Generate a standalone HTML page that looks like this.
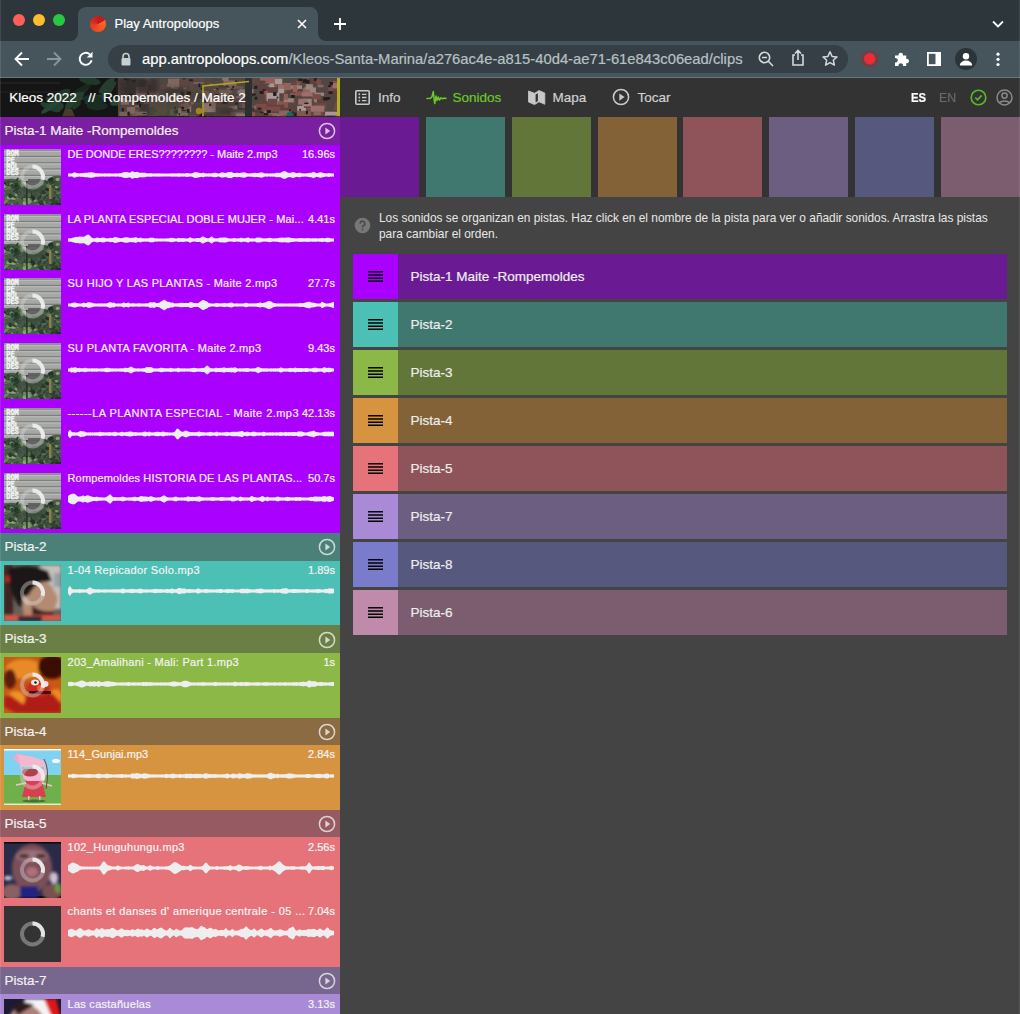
<!DOCTYPE html>
<html><head><meta charset="utf-8"><style>
*{margin:0;padding:0;box-sizing:border-box}
html,body{width:1020px;height:1014px;overflow:hidden;background:#444;font-family:"Liberation Sans",sans-serif}
.lit,.lid,.lht,.rt,.navt,.hdrtxt,.ttl,.urltxt{-webkit-text-stroke:0.2px currentColor}
body>div,body>svg{position:absolute}
#tabstrip{left:0;top:0;width:1020px;height:41px;background:#2c363b}
.tl{top:14px;width:12px;height:12px;border-radius:50%}
#tab{left:78px;top:7px;width:240px;height:34px;background:#46545c;border-radius:8px 8px 0 0}
.ttl{left:114.5px;top:16px;font-size:13px;color:#fff;white-space:nowrap}
#toolbar{left:0;top:41px;width:1020px;height:36px;background:#46545c}
#tbline{left:0;top:77px;width:1020px;height:1px;background:#68777f}
#url{left:108px;top:45px;width:740px;height:28px;border-radius:14px;background:#353f45}
.urltxt{left:142px;top:50px;font-size:14.8px;white-space:nowrap;line-height:18px}
#maphdr{left:0;top:78px;width:340px;height:39px;overflow:hidden}
.hdrtxt{position:absolute;left:9.3px;top:11.7px;font-size:13.5px;color:#fff;white-space:nowrap;line-height:16px}
#nav{left:340px;top:78px;width:680px;height:39px;background:#333}
.navt{top:89.5px;font-size:13.5px;white-space:nowrap;line-height:16px}
#rbg{left:340px;top:117px;width:680px;height:897px;background:#444}
#squarebar{left:340px;top:117px;width:680px;height:80px;background:#333}
.sq{top:117px;width:79px;height:80px}
.help{left:379px;top:210.3px;font-size:11.9px;line-height:16px;color:#e8e8e8;white-space:nowrap}
.row{left:353px;width:654px;height:45px}
.row .hd{position:absolute;left:0;top:0;width:45px;height:45px}
.rt{position:absolute;left:57.5px;top:14.5px;font-size:13.5px;color:#eee;white-space:nowrap;line-height:16px}
.lh{left:0;width:340px}
.lht{position:absolute;left:4.5px;top:6px;font-size:13.5px;color:#f2f2f2;white-space:nowrap;line-height:16px}
.li{left:0;width:340px;overflow:hidden}
.th{position:absolute;overflow:hidden}
.lit{position:absolute;left:67.5px;top:3.3px;font-size:11px;line-height:13px;color:#f4f4f4;white-space:nowrap}
.lid{position:absolute;right:5px;top:3.3px;font-size:11px;line-height:13px;color:#f4f4f4;white-space:nowrap}
.wv{position:absolute;left:67.5px;top:22.9px}
</style></head><body>

<div id="tabstrip"></div>
<div class="tl" style="left:13px;background:#ff5f57"></div>
<div class="tl" style="left:33px;background:#febc2e"></div>
<div class="tl" style="left:53px;background:#28c840"></div>
<div id="tab"></div>
<svg style="position:absolute;left:70px;top:33px" width="8" height="8"><path d="M0 8 A8 8 0 0 0 8 0 L8 8Z" fill="#46545c"/></svg>
<svg style="position:absolute;left:318px;top:33px" width="8" height="8"><path d="M0 0 A8 8 0 0 0 8 8 L0 8Z" fill="#46545c"/></svg>
<div style="position:absolute;left:90.2px;top:16.1px;width:15.6px;height:15.6px;border-radius:50%;background:conic-gradient(from 0deg,#c41a1e 0deg,#c01a1e 60deg,#ff6424 62deg,#ee5020 180deg,#e04020 260deg,#d42a20 300deg,#c41a1e 360deg)"></div>
<div class="ttl">Play Antropoloops</div>
<svg style="position:absolute;left:296px;top:18px" width="12" height="12" viewBox="0 0 12 12"><path d="M2 2L10 10M10 2L2 10" stroke="#fff" stroke-width="1.6"/></svg>
<svg style="position:absolute;left:333px;top:17px" width="14" height="14" viewBox="0 0 14 14"><path d="M7 1V13M1 7H13" stroke="#fff" stroke-width="1.8"/></svg>
<svg style="position:absolute;left:991px;top:18.7px" width="14" height="10" viewBox="0 0 14 10"><path d="M2 2.5L7 7.5L12 2.5" fill="none" stroke="#fff" stroke-width="1.8"/></svg>
<div id="toolbar"></div>
<div id="tbline"></div>
<svg style="position:absolute;left:14px;top:51px" width="16" height="16" viewBox="0 0 16 16"><path d="M15 8H2M8 1.5L1.5 8L8 14.5" fill="none" stroke="#fff" stroke-width="1.8"/></svg>
<svg style="position:absolute;left:46px;top:51px" width="16" height="16" viewBox="0 0 16 16"><path d="M1 8H14M8 1.5L14.5 8L8 14.5" fill="none" stroke="#8a979e" stroke-width="1.8"/></svg>
<svg style="position:absolute;left:78px;top:51px" width="16" height="16" viewBox="0 0 16 16"><path d="M13.6 9.2A6 6 0 1 1 11.8 3.4" fill="none" stroke="#fff" stroke-width="1.9"/><path d="M14.5 0.8V6.6H8.7Z" fill="#fff"/></svg>
<div id="url"></div>
<svg style="position:absolute;left:120px;top:52px" width="12" height="14" viewBox="0 0 12 14"><path d="M3 6V4.5A3 3 0 0 1 9 4.5V6" fill="none" stroke="#c8cdd0" stroke-width="1.6"/><rect x="1.5" y="6" width="9" height="7.5" rx="1" fill="#c8cdd0"/></svg>
<div class="urltxt"><span style="color:#fff">app.antropoloops.com</span><span style="color:#b9c1c5">/Kleos-Santa-Marina/a276ac4e-a815-40d4-ae71-61e843c06ead/clips</span></div>
<svg style="position:absolute;left:757px;top:50px" width="18" height="18" viewBox="0 0 18 18"><circle cx="7.5" cy="7.5" r="5.2" fill="none" stroke="#d4d9dc" stroke-width="1.6"/><path d="M11.3 11.3L16 16M5 7.5H10" stroke="#d4d9dc" stroke-width="1.6"/></svg>
<svg style="position:absolute;left:790px;top:49px" width="16" height="18" viewBox="0 0 16 18"><path d="M5 6H3V16H13V6H11M8 11V1.5M5 4.5L8 1.5L11 4.5" fill="none" stroke="#d4d9dc" stroke-width="1.6"/></svg>
<svg style="position:absolute;left:821px;top:50px" width="18" height="18" viewBox="0 0 18 18"><path d="M9 1.8L11.1 6.4L16 6.9L12.3 10.2L13.4 15.1L9 12.6L4.6 15.1L5.7 10.2L2 6.9L6.9 6.4Z" fill="none" stroke="#d4d9dc" stroke-width="1.5" stroke-linejoin="round"/></svg>
<svg style="position:absolute;left:860px;top:49px" width="20" height="20" viewBox="0 0 20 20"><circle cx="9.7" cy="9.8" r="7.6" fill="none" stroke="#a8242c" stroke-width="1.1"/><circle cx="9.7" cy="9.8" r="5.7" fill="#ee2a33"/></svg>
<svg style="position:absolute;left:894px;top:51px" width="16" height="16" viewBox="0 0 16 16"><path d="M1 4.5H4.5A2.3 2.3 0 1 1 9 4.5H12.2V7.8A2.3 2.3 0 1 1 12.2 12.3V15H9A2.3 2.3 0 1 0 4.5 15H1V11.5A2.3 2.3 0 1 0 1 7Z" fill="#fff"/></svg>
<svg style="position:absolute;left:927px;top:52px" width="14" height="14" viewBox="0 0 14 14"><rect x="0.9" y="0.9" width="12.2" height="12.2" fill="none" stroke="#fff" stroke-width="1.8"/><rect x="8.5" y="0.9" width="4.6" height="12.2" fill="#fff"/></svg>
<div style="position:absolute;left:955px;top:48px;width:22px;height:22px;border-radius:50%;background:#2b3439"></div>
<svg style="position:absolute;left:958px;top:51px" width="16" height="16" viewBox="0 0 16 16"><circle cx="8" cy="5.2" r="3.2" fill="#fff"/><path d="M1.8 14.5A6.2 5 0 0 1 14.2 14.5Z" fill="#fff"/></svg>
<svg style="position:absolute;left:994.3px;top:50px" width="8" height="18" viewBox="0 0 8 18"><circle cx="4" cy="4.2" r="1.6" fill="#fff"/><circle cx="4" cy="9.3" r="1.6" fill="#fff"/><circle cx="4" cy="14.5" r="1.6" fill="#fff"/></svg>


<div id="maphdr">
<svg width="340" height="39" viewBox="0 0 340 39" style="position:absolute;left:0;top:0"><defs><filter id="hb"><feGaussianBlur stdDeviation="2"/></filter><filter id="hb2" x="0" y="0" width="100%" height="100%"><feGaussianBlur stdDeviation="0.45"/></filter></defs>
  <rect x="0" y="0" width="340" height="39" fill="#151515"/>
  <rect x="0" y="4" width="60" height="2" fill="#202020"/>
  <rect x="0" y="13" width="60" height="2" fill="#1d1d1d"/>
  <ellipse cx="83.7" cy="11.9" rx="10.8" ry="2.7" fill="#203828" transform="rotate(-46 83.7 11.9)"/><ellipse cx="81.4" cy="11.6" rx="10.1" ry="2.8" fill="#18261e" transform="rotate(-29 81.4 11.6)"/><ellipse cx="60.7" cy="18.4" rx="11.2" ry="5.0" fill="#203828" transform="rotate(-36 60.7 18.4)"/><ellipse cx="107.3" cy="13.6" rx="13.1" ry="3.3" fill="#243e30" transform="rotate(-49 107.3 13.6)"/><ellipse cx="93.8" cy="21.3" rx="9.9" ry="2.9" fill="#203828" transform="rotate(-24 93.8 21.3)"/><ellipse cx="97.0" cy="27.8" rx="10.7" ry="4.4" fill="#1a2c24" transform="rotate(1 97.0 27.8)"/><ellipse cx="116.9" cy="23.8" rx="7.1" ry="3.5" fill="#284434" transform="rotate(-17 116.9 23.8)"/><ellipse cx="71.9" cy="24.1" rx="10.0" ry="3.8" fill="#243e30" transform="rotate(-50 71.9 24.1)"/><ellipse cx="74.1" cy="21.5" rx="9.3" ry="3.2" fill="#284434" transform="rotate(-11 74.1 21.5)"/><ellipse cx="50.4" cy="29.2" rx="10.8" ry="3.3" fill="#243e30" transform="rotate(22 50.4 29.2)"/><ellipse cx="54.4" cy="24.9" rx="10.0" ry="3.8" fill="#203828" transform="rotate(32 54.4 24.9)"/><ellipse cx="76.6" cy="27.3" rx="5.5" ry="2.4" fill="#203828" transform="rotate(-42 76.6 27.3)"/><ellipse cx="56.8" cy="28.0" rx="7.0" ry="4.8" fill="#243e30" transform="rotate(2 56.8 28.0)"/><ellipse cx="106.8" cy="7.5" rx="10.7" ry="3.7" fill="#243e30" transform="rotate(-45 106.8 7.5)"/><ellipse cx="89.9" cy="2.8" rx="10.8" ry="3.8" fill="#203828" transform="rotate(10 89.9 2.8)"/><ellipse cx="93.1" cy="21.6" rx="10.4" ry="4.5" fill="#1a2c24" transform="rotate(8 93.1 21.6)"/><ellipse cx="50.9" cy="28.5" rx="11.9" ry="2.8" fill="#284434" transform="rotate(-35 50.9 28.5)"/><ellipse cx="75.4" cy="19.2" rx="9.5" ry="3.9" fill="#243e30" transform="rotate(-25 75.4 19.2)"/>
  <path d="M62 39 L65 31 L72 31 L75 39Z" fill="#4a3a2a"/>
  <rect x="118" y="0" width="222" height="39" fill="#6a5a54"/>
  <g filter="url(#hb2)"><rect x="260.0" y="-1.0" width="6.0" height="3.6" fill="#c07a72"/><rect x="268.2" y="34.6" width="4.0" height="5.0" fill="#b06a64"/><rect x="138.8" y="7.5" width="9.6" height="5.9" fill="#62564e"/><rect x="211.1" y="16.4" width="6.1" height="8.1" fill="#9a7c72"/><rect x="273.0" y="12.0" width="4.7" height="8.7" fill="#c89088"/><rect x="140.7" y="13.6" width="6.9" height="4.4" fill="#a0847a"/><rect x="297.2" y="27.9" width="8.9" height="8.8" fill="#d8c4c0"/><rect x="135.5" y="10.0" width="9.9" height="8.2" fill="#4e4642"/><rect x="246.2" y="26.9" width="3.5" height="3.6" fill="#a0847a"/><rect x="336.7" y="33.1" width="12.5" height="4.7" fill="#7a5450"/><rect x="259.1" y="13.0" width="7.1" height="3.5" fill="#8a5a54"/><rect x="273.8" y="26.0" width="3.8" height="6.4" fill="#b8807a"/><rect x="279.9" y="4.7" width="7.2" height="8.9" fill="#986058"/><rect x="270.8" y="7.0" width="6.6" height="7.4" fill="#b06a64"/><rect x="168.8" y="-0.7" width="6.5" height="3.9" fill="#5a4e4a"/><rect x="320.7" y="21.3" width="10.9" height="3.5" fill="#7a5450"/><rect x="205.8" y="35.5" width="8.0" height="3.9" fill="#5a4e4a"/><rect x="283.4" y="20.1" width="11.2" height="5.0" fill="#a87068"/><rect x="206.7" y="7.0" width="14.0" height="5.6" fill="#6a5a54"/><rect x="285.8" y="33.3" width="4.7" height="3.1" fill="#986058"/><rect x="211.7" y="0.6" width="7.2" height="9.0" fill="#62564e"/><rect x="173.8" y="20.7" width="13.4" height="6.8" fill="#6a5a54"/><rect x="269.3" y="20.0" width="5.9" height="6.5" fill="#c07a72"/><rect x="183.2" y="4.5" width="3.0" height="7.1" fill="#a0847a"/><rect x="333.8" y="29.2" width="8.6" height="2.7" fill="#986058"/><rect x="184.3" y="24.2" width="9.7" height="3.1" fill="#9a7c72"/><rect x="237.7" y="29.9" width="8.8" height="2.0" fill="#4e4642"/><rect x="226.5" y="2.6" width="7.0" height="8.9" fill="#a0847a"/><rect x="171.2" y="7.9" width="9.2" height="2.6" fill="#b0948a"/><rect x="299.2" y="38.1" width="8.9" height="2.9" fill="#986058"/><rect x="223.5" y="20.5" width="5.9" height="8.1" fill="#8e7068"/><rect x="332.1" y="36.1" width="11.3" height="6.8" fill="#8a5a54"/><rect x="206.6" y="25.5" width="7.1" height="8.3" fill="#b0948a"/><rect x="144.9" y="7.2" width="6.7" height="6.1" fill="#5a4e4a"/><rect x="248.6" y="-1.7" width="10.8" height="2.4" fill="#6a5a54"/><rect x="319.0" y="33.2" width="3.8" height="3.7" fill="#986058"/><rect x="225.8" y="20.1" width="11.0" height="8.2" fill="#7a5a54"/><rect x="222.9" y="30.2" width="11.9" height="3.3" fill="#6a5a54"/><rect x="264.3" y="12.5" width="7.5" height="8.0" fill="#b06a64"/><rect x="267.5" y="38.4" width="4.1" height="4.8" fill="#c89088"/><rect x="295.7" y="2.5" width="5.1" height="5.8" fill="#a0605a"/><rect x="211.7" y="9.4" width="5.7" height="8.5" fill="#b0948a"/><rect x="297.4" y="33.1" width="4.1" height="6.6" fill="#b8807a"/><rect x="303.6" y="37.7" width="13.2" height="7.9" fill="#a0605a"/><rect x="208.2" y="17.7" width="12.5" height="8.3" fill="#9a7c72"/><rect x="202.1" y="38.4" width="5.9" height="7.5" fill="#b0948a"/><rect x="181.3" y="26.6" width="11.0" height="7.5" fill="#b0948a"/><rect x="152.4" y="10.2" width="13.7" height="6.1" fill="#62564e"/><rect x="131.5" y="10.9" width="3.6" height="5.3" fill="#62564e"/><rect x="153.0" y="37.4" width="3.9" height="3.3" fill="#7a5a54"/><rect x="133.1" y="33.3" width="7.4" height="8.6" fill="#7a5a54"/><rect x="172.7" y="22.4" width="9.8" height="4.9" fill="#7a5a54"/><rect x="243.5" y="11.0" width="5.9" height="6.7" fill="#4e4642"/><rect x="171.0" y="14.2" width="10.4" height="4.1" fill="#4e4642"/><rect x="324.2" y="36.4" width="3.1" height="6.3" fill="#a87068"/><rect x="339.1" y="1.0" width="5.3" height="3.9" fill="#c89088"/><rect x="313.6" y="34.1" width="7.1" height="3.1" fill="#b8807a"/><rect x="274.2" y="23.1" width="13.9" height="6.6" fill="#b06a64"/><rect x="266.3" y="20.7" width="13.2" height="2.7" fill="#a0605a"/><rect x="176.7" y="34.5" width="11.2" height="3.1" fill="#a0847a"/><rect x="252.3" y="27.4" width="5.2" height="6.4" fill="#8a5a54"/><rect x="230.2" y="8.3" width="13.0" height="2.4" fill="#8e7068"/><rect x="302.1" y="-0.2" width="6.7" height="2.9" fill="#8a5a54"/><rect x="153.9" y="16.1" width="10.8" height="5.9" fill="#6a5a54"/><rect x="134.7" y="34.2" width="12.9" height="5.8" fill="#4e4642"/><rect x="247.3" y="4.1" width="4.4" height="4.2" fill="#8a6a62"/><rect x="317.6" y="6.6" width="5.7" height="2.7" fill="#b8807a"/><rect x="314.3" y="14.7" width="9.8" height="3.1" fill="#c8aaa2"/><rect x="309.9" y="38.0" width="11.9" height="8.2" fill="#b06a64"/><rect x="157.8" y="35.9" width="11.6" height="4.9" fill="#5a4e4a"/><rect x="177.2" y="30.3" width="4.2" height="8.1" fill="#b0948a"/><rect x="167.4" y="31.5" width="8.1" height="4.1" fill="#5a4e4a"/><rect x="167.5" y="25.1" width="7.4" height="4.0" fill="#6a5a54"/><rect x="332.6" y="9.4" width="10.1" height="4.8" fill="#b8807a"/><rect x="191.5" y="-0.9" width="12.6" height="3.8" fill="#7a5a54"/><rect x="331.7" y="8.9" width="4.2" height="5.0" fill="#c89088"/><rect x="214.9" y="38.4" width="4.3" height="8.3" fill="#5a4e4a"/><rect x="174.5" y="27.1" width="3.0" height="8.5" fill="#62564e"/><rect x="270.5" y="36.6" width="11.1" height="3.4" fill="#d8c4c0"/><rect x="133.5" y="25.2" width="6.6" height="4.2" fill="#6a5a54"/><rect x="277.8" y="10.3" width="6.4" height="4.9" fill="#d8c4c0"/><rect x="272.8" y="20.7" width="5.1" height="6.7" fill="#d8c4c0"/><rect x="268.4" y="35.0" width="9.8" height="4.1" fill="#b8807a"/><rect x="303.1" y="10.5" width="5.3" height="7.5" fill="#a87068"/><rect x="263.3" y="17.1" width="7.9" height="3.5" fill="#7a5450"/><rect x="294.2" y="37.4" width="11.1" height="6.6" fill="#8a5a54"/><rect x="232.4" y="24.0" width="6.7" height="7.7" fill="#5a4e4a"/><rect x="267.4" y="7.2" width="5.2" height="2.2" fill="#c8aaa2"/><rect x="336.4" y="23.1" width="11.5" height="5.2" fill="#986058"/><rect x="245.8" y="27.5" width="7.2" height="4.8" fill="#9a7c72"/><rect x="263.6" y="-1.8" width="11.3" height="7.4" fill="#c07a72"/><rect x="290.8" y="7.0" width="11.8" height="6.9" fill="#7a5450"/><rect x="129.1" y="8.2" width="12.3" height="5.2" fill="#b0948a"/><rect x="266.2" y="38.5" width="9.5" height="8.7" fill="#7a5450"/><rect x="254.0" y="27.5" width="8.6" height="7.8" fill="#b8807a"/><rect x="217.0" y="4.5" width="12.5" height="5.2" fill="#5a4e4a"/><rect x="304.4" y="9.4" width="11.6" height="5.4" fill="#c8aaa2"/><rect x="179.0" y="1.2" width="6.1" height="3.9" fill="#4e4642"/><rect x="316.3" y="1.3" width="4.7" height="4.7" fill="#a0605a"/><rect x="274.8" y="0.6" width="7.5" height="5.8" fill="#d8c4c0"/><rect x="131.8" y="32.1" width="7.3" height="7.4" fill="#8a6a62"/><rect x="308.2" y="29.4" width="7.2" height="2.0" fill="#c89088"/><rect x="184.3" y="14.0" width="12.8" height="7.9" fill="#62564e"/><rect x="283.9" y="20.4" width="9.6" height="3.5" fill="#c8aaa2"/><rect x="178.6" y="17.9" width="7.3" height="6.7" fill="#8e7068"/><rect x="278.8" y="32.5" width="13.1" height="8.9" fill="#b8807a"/><rect x="124.0" y="14.2" width="9.2" height="2.2" fill="#8e7068"/><rect x="148.1" y="16.9" width="3.6" height="4.7" fill="#5a4e4a"/><rect x="218.9" y="11.8" width="12.7" height="3.9" fill="#8e7068"/><rect x="174.0" y="1.4" width="3.2" height="5.8" fill="#4e4642"/><rect x="167.8" y="0.8" width="13.5" height="2.3" fill="#8a6a62"/><rect x="328.8" y="6.2" width="3.2" height="3.1" fill="#a0605a"/><rect x="223.1" y="2.7" width="13.4" height="5.3" fill="#a0847a"/><rect x="288.3" y="4.9" width="9.7" height="7.2" fill="#c07a72"/><rect x="290.7" y="4.7" width="6.4" height="6.1" fill="#8a5a54"/><rect x="245.8" y="35.2" width="7.1" height="8.6" fill="#5a4e4a"/><rect x="134.9" y="26.3" width="9.9" height="2.7" fill="#a0847a"/><rect x="306.8" y="22.6" width="4.3" height="8.9" fill="#b06a64"/><rect x="195.1" y="15.6" width="7.1" height="5.5" fill="#4e4642"/><rect x="120.8" y="15.2" width="8.4" height="5.0" fill="#4e4642"/><rect x="259.1" y="32.0" width="10.8" height="5.0" fill="#b8807a"/><rect x="332.3" y="9.1" width="11.9" height="5.8" fill="#7a5450"/><rect x="221.2" y="31.9" width="9.5" height="4.3" fill="#5a4e4a"/><rect x="302.4" y="1.6" width="12.7" height="3.7" fill="#7a5450"/><rect x="244.5" y="25.4" width="6.7" height="5.5" fill="#4e4642"/><rect x="158.4" y="6.7" width="11.8" height="4.4" fill="#7a5a54"/><rect x="273.7" y="9.3" width="3.1" height="8.6" fill="#c07a72"/><rect x="171.6" y="14.7" width="9.1" height="3.7" fill="#b0948a"/><rect x="261.4" y="18.1" width="11.7" height="2.7" fill="#c8aaa2"/><rect x="207.8" y="8.0" width="10.3" height="4.6" fill="#62564e"/><rect x="235.9" y="15.4" width="11.2" height="4.3" fill="#b0948a"/><rect x="178.1" y="8.3" width="4.3" height="3.3" fill="#6a5a54"/><rect x="282.9" y="37.0" width="10.6" height="3.3" fill="#7a5450"/><rect x="179.4" y="22.2" width="11.4" height="6.2" fill="#6a5a54"/><rect x="302.8" y="10.1" width="7.0" height="4.1" fill="#b8807a"/><rect x="146.1" y="-0.1" width="3.6" height="4.0" fill="#9a7c72"/><rect x="259.6" y="28.9" width="4.1" height="2.1" fill="#8a5a54"/><rect x="222.2" y="16.1" width="5.0" height="2.4" fill="#b0948a"/><rect x="143.3" y="0.7" width="8.4" height="6.0" fill="#8a6a62"/><rect x="151.7" y="31.3" width="13.4" height="2.6" fill="#5a4e4a"/><rect x="144.3" y="29.3" width="9.7" height="7.5" fill="#5a4e4a"/><rect x="290.2" y="13.6" width="13.0" height="4.1" fill="#a87068"/><rect x="337.8" y="10.5" width="9.8" height="6.3" fill="#c07a72"/><rect x="328.4" y="6.5" width="5.3" height="6.6" fill="#a0605a"/><rect x="171.3" y="20.6" width="4.7" height="4.9" fill="#7a5a54"/><rect x="222.3" y="-0.7" width="6.2" height="4.0" fill="#b0948a"/><rect x="133.8" y="7.6" width="5.9" height="7.5" fill="#7a5a54"/><rect x="264.8" y="36.3" width="7.7" height="5.8" fill="#986058"/><rect x="151.1" y="8.9" width="4.6" height="2.4" fill="#a0847a"/><rect x="250.1" y="31.8" width="13.1" height="5.1" fill="#7a5450"/><rect x="270.9" y="26.7" width="13.4" height="5.5" fill="#7a5450"/><rect x="215.2" y="22.5" width="12.8" height="7.1" fill="#7a5a54"/><rect x="173.6" y="1.7" width="13.6" height="7.9" fill="#7a5a54"/><rect x="248.3" y="-1.1" width="11.4" height="7.7" fill="#7a5a54"/><rect x="126.9" y="29.0" width="8.2" height="6.6" fill="#a0847a"/><rect x="158.3" y="22.0" width="10.0" height="5.4" fill="#6a5a54"/><rect x="222.3" y="14.7" width="6.5" height="2.7" fill="#9a7c72"/><rect x="191.2" y="26.4" width="6.2" height="8.6" fill="#62564e"/><rect x="126.1" y="1.6" width="5.8" height="2.8" fill="#8e7068"/><rect x="310.0" y="31.8" width="3.0" height="8.1" fill="#7a5450"/><rect x="209.7" y="5.7" width="7.0" height="7.3" fill="#b0948a"/><rect x="286.7" y="6.3" width="9.0" height="8.5" fill="#7a5450"/><rect x="313.5" y="17.9" width="3.3" height="6.4" fill="#c8aaa2"/><rect x="275.6" y="10.7" width="3.2" height="4.9" fill="#c8aaa2"/><rect x="338.3" y="35.4" width="8.1" height="2.8" fill="#a0605a"/><rect x="228.6" y="27.4" width="8.6" height="3.9" fill="#b0948a"/><rect x="335.6" y="8.0" width="9.1" height="4.7" fill="#a87068"/><rect x="230.8" y="34.1" width="12.5" height="3.9" fill="#8e7068"/><rect x="193.5" y="30.3" width="5.9" height="2.0" fill="#a0847a"/><rect x="303.9" y="21.8" width="10.3" height="8.1" fill="#7a5450"/><rect x="237.6" y="12.2" width="9.1" height="5.8" fill="#b0948a"/><rect x="325.1" y="33.7" width="13.8" height="3.7" fill="#d8c4c0"/><rect x="169.9" y="29.8" width="3.5" height="7.2" fill="#8e7068"/><rect x="203.7" y="25.2" width="12.0" height="8.9" fill="#b0948a"/><rect x="332.2" y="3.2" width="13.6" height="4.3" fill="#c07a72"/><rect x="312.1" y="16.1" width="8.8" height="5.2" fill="#a0605a"/><rect x="209.0" y="24.8" width="4.7" height="5.3" fill="#a0847a"/><rect x="193.2" y="26.4" width="10.1" height="8.0" fill="#62564e"/><rect x="202.4" y="11.0" width="10.9" height="7.3" fill="#62564e"/><rect x="126.0" y="0.8" width="9.9" height="8.4" fill="#5a4e4a"/><rect x="283.8" y="15.8" width="4.1" height="6.4" fill="#c07a72"/><rect x="216.5" y="26.5" width="12.9" height="2.3" fill="#8a6a62"/><rect x="183.1" y="13.4" width="4.6" height="5.7" fill="#7a5a54"/><rect x="269.4" y="5.4" width="4.9" height="6.3" fill="#d8c4c0"/><rect x="255.6" y="7.9" width="13.0" height="3.0" fill="#7a5450"/><rect x="259.6" y="16.8" width="10.3" height="8.3" fill="#7a5450"/><rect x="318.1" y="25.8" width="4.7" height="5.1" fill="#c89088"/><rect x="337.3" y="10.3" width="13.6" height="6.8" fill="#7a5450"/><rect x="305.7" y="6.2" width="7.2" height="5.4" fill="#c8aaa2"/><rect x="202.7" y="12.7" width="6.3" height="6.9" fill="#8a6a62"/><rect x="335.1" y="25.0" width="6.0" height="6.0" fill="#986058"/><rect x="290.8" y="37.9" width="13.0" height="7.2" fill="#8a5a54"/><rect x="290.2" y="7.4" width="11.8" height="3.5" fill="#c8aaa2"/><rect x="255.8" y="25.8" width="10.9" height="6.6" fill="#a0605a"/><rect x="257.5" y="35.0" width="10.1" height="4.2" fill="#7a5450"/><rect x="125.4" y="13.0" width="4.4" height="8.4" fill="#4e4642"/><rect x="283.9" y="5.2" width="4.5" height="5.8" fill="#c89088"/><rect x="235.8" y="35.5" width="12.1" height="3.8" fill="#b0948a"/><rect x="332.8" y="10.1" width="12.6" height="7.6" fill="#7a5450"/><rect x="331.8" y="3.8" width="13.6" height="8.0" fill="#986058"/><rect x="335.5" y="37.7" width="11.9" height="4.6" fill="#d8c4c0"/><rect x="121.1" y="20.0" width="8.0" height="6.7" fill="#a0847a"/><rect x="247.8" y="31.7" width="13.3" height="2.8" fill="#5a4e4a"/><rect x="222.7" y="23.4" width="13.4" height="4.3" fill="#7a5a54"/><rect x="167.1" y="0.6" width="12.1" height="8.4" fill="#a0847a"/><rect x="262.1" y="2.8" width="3.5" height="2.3" fill="#7a5450"/><rect x="143.8" y="7.6" width="8.9" height="4.7" fill="#4e4642"/><rect x="266.8" y="28.5" width="13.4" height="4.9" fill="#a0605a"/><rect x="314.6" y="24.9" width="12.2" height="6.3" fill="#8a5a54"/><rect x="125.3" y="13.2" width="7.9" height="8.7" fill="#4e4642"/><rect x="140.1" y="26.1" width="9.0" height="8.8" fill="#4e4642"/><rect x="131.4" y="9.3" width="13.7" height="8.6" fill="#b0948a"/><rect x="138.4" y="6.7" width="10.0" height="8.8" fill="#8a6a62"/><rect x="292.7" y="8.0" width="4.4" height="6.0" fill="#c07a72"/><rect x="302.2" y="20.7" width="9.5" height="7.7" fill="#c8aaa2"/><rect x="190.9" y="4.0" width="12.9" height="2.0" fill="#9a7c72"/><rect x="337.2" y="20.1" width="11.8" height="2.8" fill="#b06a64"/><rect x="147.3" y="12.7" width="11.7" height="6.1" fill="#8a6a62"/><rect x="156.7" y="0.1" width="11.2" height="5.7" fill="#6a5a54"/><rect x="223.7" y="29.9" width="8.6" height="2.8" fill="#62564e"/><rect x="167.2" y="23.2" width="11.0" height="8.4" fill="#62564e"/><rect x="185.0" y="24.4" width="3.3" height="9.0" fill="#8e7068"/><rect x="212.6" y="2.4" width="10.8" height="5.1" fill="#6a5a54"/><rect x="189.5" y="4.1" width="4.4" height="6.4" fill="#7a5a54"/><rect x="239.7" y="11.3" width="13.9" height="5.7" fill="#b0948a"/><rect x="230.2" y="15.6" width="11.7" height="2.8" fill="#62564e"/><rect x="278.0" y="6.8" width="8.0" height="3.6" fill="#c89088"/><rect x="301.7" y="14.3" width="11.0" height="4.2" fill="#c89088"/><rect x="265.7" y="13.3" width="4.7" height="8.5" fill="#c07a72"/><rect x="138.3" y="1.5" width="7.8" height="7.2" fill="#4e4642"/><rect x="298.2" y="20.8" width="9.5" height="5.9" fill="#c89088"/><rect x="266.7" y="14.8" width="12.6" height="8.6" fill="#d8c4c0"/><rect x="310.7" y="27.6" width="13.7" height="6.2" fill="#c89088"/><rect x="141.0" y="18.8" width="4.7" height="5.4" fill="#6a5a54"/><rect x="195.7" y="20.8" width="4.3" height="3.9" fill="#5a4e4a"/><rect x="297.2" y="32.7" width="13.7" height="7.7" fill="#a87068"/><rect x="267.8" y="20.8" width="9.7" height="6.6" fill="#8a5a54"/><rect x="124.4" y="9.2" width="11.4" height="8.5" fill="#4e4642"/><rect x="119.4" y="33.7" width="9.2" height="4.8" fill="#9a7c72"/><rect x="282.5" y="37.8" width="4.0" height="5.7" fill="#d8c4c0"/><rect x="211.2" y="12.0" width="7.1" height="7.1" fill="#7a5a54"/><rect x="250.4" y="34.2" width="4.7" height="7.3" fill="#b06a64"/><rect x="267.6" y="9.2" width="10.3" height="5.4" fill="#7a5450"/><rect x="209.9" y="6.8" width="8.6" height="4.4" fill="#6a5a54"/><rect x="180.9" y="25.8" width="8.4" height="6.7" fill="#8a6a62"/><rect x="167.0" y="38.4" width="3.6" height="3.4" fill="#5a4e4a"/><rect x="288.4" y="29.3" width="6.2" height="2.8" fill="#7a5450"/><rect x="283.8" y="5.2" width="7.2" height="6.9" fill="#b8807a"/><rect x="242.0" y="25.4" width="6.9" height="4.8" fill="#8a6a62"/><rect x="214.8" y="16.8" width="3.9" height="4.2" fill="#8e7068"/><rect x="245.3" y="27.1" width="7.6" height="2.8" fill="#8a6a62"/><rect x="332.5" y="5.0" width="13.4" height="5.2" fill="#c89088"/><rect x="137.6" y="32.6" width="5.7" height="6.1" fill="#62564e"/><rect x="135.5" y="33.7" width="11.2" height="3.6" fill="#9a7c72"/><rect x="135.0" y="24.0" width="8.8" height="3.4" fill="#4e4642"/><rect x="195.9" y="37.3" width="10.1" height="3.0" fill="#6a5a54"/><rect x="150.5" y="6.1" width="9.6" height="7.3" fill="#6a5a54"/><rect x="157.3" y="29.7" width="8.4" height="7.3" fill="#7a5a54"/><rect x="217.7" y="35.9" width="9.2" height="6.4" fill="#7a5a54"/><rect x="189.8" y="37.8" width="6.5" height="5.1" fill="#b0948a"/><rect x="216.2" y="10.4" width="2.1" height="1.2" fill="#2a2624"/><rect x="230.6" y="10.7" width="2.8" height="1.2" fill="#2a2624"/><rect x="302.6" y="1.1" width="4.5" height="3.6" fill="#2a2624"/><rect x="254.5" y="18.8" width="2.9" height="2.7" fill="#2a2624"/><rect x="293.8" y="34.7" width="2.8" height="3.4" fill="#2a2624"/><rect x="262.7" y="11.2" width="2.9" height="1.5" fill="#2a2624"/><rect x="131.7" y="2.2" width="4.6" height="2.0" fill="#2a2624"/><rect x="276.6" y="18.7" width="1.7" height="1.7" fill="#2a2624"/><rect x="215.2" y="16.0" width="3.1" height="1.5" fill="#2a2624"/><rect x="200.8" y="9.6" width="2.6" height="2.0" fill="#2a2624"/><rect x="250.7" y="30.4" width="3.6" height="1.2" fill="#2a2624"/><rect x="139.0" y="25.8" width="2.1" height="3.2" fill="#2a2624"/><rect x="263.8" y="35.2" width="4.5" height="2.0" fill="#2a2624"/><rect x="247.4" y="3.8" width="2.4" height="3.9" fill="#2a2624"/><rect x="273.1" y="14.1" width="3.4" height="3.8" fill="#2a2624"/><rect x="186.7" y="13.4" width="4.2" height="3.4" fill="#2a2624"/><rect x="266.8" y="32.0" width="4.0" height="3.1" fill="#2a2624"/><rect x="234.9" y="24.5" width="2.7" height="2.1" fill="#2a2624"/><rect x="198.5" y="5.4" width="1.9" height="3.8" fill="#2a2624"/><rect x="226.0" y="7.3" width="1.6" height="1.2" fill="#2a2624"/><rect x="305.5" y="2.1" width="4.1" height="3.5" fill="#2a2624"/><rect x="314.2" y="-0.5" width="2.3" height="3.3" fill="#2a2624"/><rect x="147.1" y="13.4" width="1.6" height="3.5" fill="#2a2624"/><rect x="289.2" y="31.2" width="1.7" height="2.3" fill="#2a2624"/><rect x="209.2" y="25.7" width="2.0" height="2.3" fill="#2a2624"/><rect x="181.3" y="28.7" width="2.8" height="2.6" fill="#2a2624"/><rect x="186.7" y="31.2" width="2.9" height="3.5" fill="#2a2624"/><rect x="199.7" y="36.8" width="4.9" height="2.4" fill="#2a2624"/><rect x="180.6" y="13.7" width="3.1" height="3.9" fill="#2a2624"/><rect x="299.3" y="30.9" width="1.6" height="1.8" fill="#2a2624"/><rect x="260.3" y="33.8" width="3.2" height="1.3" fill="#2a2624"/><rect x="305.8" y="32.9" width="2.1" height="3.3" fill="#2a2624"/><rect x="178.6" y="35.1" width="1.6" height="2.3" fill="#2a2624"/><rect x="328.1" y="7.1" width="2.8" height="2.0" fill="#2a2624"/><rect x="123.9" y="0.2" width="3.0" height="1.7" fill="#2a2624"/><rect x="338.8" y="13.4" width="1.1" height="3.8" fill="#2a2624"/><rect x="304.3" y="24.6" width="4.2" height="1.4" fill="#2a2624"/><rect x="181.7" y="32.0" width="3.8" height="1.4" fill="#2a2624"/><rect x="274.6" y="16.4" width="1.0" height="1.2" fill="#2a2624"/><rect x="174.8" y="32.2" width="3.2" height="3.2" fill="#2a2624"/><rect x="235.2" y="2.6" width="2.2" height="1.9" fill="#2a2624"/><rect x="128.6" y="15.2" width="4.2" height="2.4" fill="#2a2624"/><rect x="142.6" y="35.1" width="3.4" height="1.0" fill="#2a2624"/><rect x="232.4" y="7.9" width="1.6" height="2.3" fill="#2a2624"/><rect x="254.5" y="7.9" width="2.7" height="3.0" fill="#2a2624"/><rect x="137.0" y="38.0" width="1.3" height="2.6" fill="#2a2624"/><rect x="230.6" y="38.5" width="3.2" height="2.2" fill="#2a2624"/><rect x="222.4" y="24.1" width="4.9" height="1.8" fill="#2a2624"/><rect x="121.6" y="30.3" width="2.4" height="3.2" fill="#2a2624"/><rect x="257.5" y="29.6" width="3.9" height="2.0" fill="#2a2624"/><rect x="127.8" y="20.4" width="4.3" height="1.5" fill="#2a2624"/><rect x="291.0" y="17.0" width="3.8" height="2.9" fill="#2a2624"/><rect x="298.2" y="0.6" width="4.1" height="2.4" fill="#2a2624"/><rect x="183.1" y="-0.2" width="1.8" height="1.1" fill="#2a2624"/><rect x="325.2" y="19.1" width="5.0" height="2.6" fill="#2a2624"/><rect x="174.2" y="28.9" width="1.8" height="2.1" fill="#2a2624"/><rect x="291.3" y="33.5" width="2.3" height="1.4" fill="#2a2624"/><rect x="199.7" y="34.5" width="4.0" height="3.7" fill="#2a2624"/><rect x="203.8" y="37.9" width="3.0" height="2.5" fill="#2a2624"/><rect x="323.2" y="19.3" width="4.2" height="3.2" fill="#2a2624"/><rect x="135.5" y="22.7" width="4.3" height="2.6" fill="#2a2624"/><rect x="189.3" y="1.3" width="3.6" height="1.9" fill="#2a2624"/><rect x="251.8" y="15.5" width="3.8" height="2.1" fill="#2a2624"/><rect x="127.4" y="33.7" width="2.4" height="4.0" fill="#2a2624"/><rect x="179.0" y="38.2" width="4.8" height="1.2" fill="#2a2624"/><rect x="259.5" y="12.9" width="4.2" height="3.0" fill="#2a2624"/><rect x="329.5" y="3.9" width="3.4" height="3.3" fill="#2a2624"/><rect x="125.7" y="0.8" width="4.1" height="2.1" fill="#2a2624"/><rect x="203.0" y="21.3" width="3.4" height="3.0" fill="#2a2624"/><rect x="328.6" y="13.3" width="4.1" height="2.7" fill="#2a2624"/></g>
  <g filter="url(#hb)"><rect x="118" y="0" width="40" height="16" fill="#3a3432" opacity="0.7"/><rect x="165" y="10" width="22" height="10" fill="#3e3632" opacity="0.6"/><rect x="215" y="20" width="20" height="19" fill="#4a3e38" opacity="0.5"/><rect x="150" y="28" width="30" height="11" fill="#5a6a48" opacity="0.5"/></g>
  <rect x="245" y="0" width="7" height="39" fill="#3c3c44"/>
  <path d="M203 39 L203 8 L249 3.5" fill="none" stroke="#e6d02a" stroke-width="1.6"/>
  <rect x="337" y="0" width="3" height="39" fill="#e8dc30"/>
  <circle cx="199" cy="33" r="3.2" fill="#d4a828"/>
  <circle cx="289.5" cy="37" r="3" fill="#1a8a7a"/>
  <rect x="118" y="0" width="222" height="39" fill="rgba(0,0,0,0.22)"/>
  <rect x="0" y="38" width="340" height="1" fill="rgba(20,20,20,0.7)"/>
</svg>
  <div class="hdrtxt">Kleos 2022&nbsp;&nbsp;&nbsp;//&nbsp;&nbsp;Rompemoldes / Maite 2</div>
</div>


<div id="nav"></div>
<svg style="position:absolute;left:355px;top:90px" width="15" height="15" viewBox="0 0 15 15"><rect x="0.8" y="0.8" width="13.4" height="13.4" rx="1" fill="none" stroke="#c8c8c8" stroke-width="1.6"/><circle cx="4.3" cy="4.3" r="0.95" fill="#c8c8c8"/><circle cx="4.3" cy="7.5" r="0.95" fill="#c8c8c8"/><circle cx="4.3" cy="10.6" r="0.95" fill="#c8c8c8"/><path d="M7 4.3H11.4M7 7.5H11.4M7 10.6H11.4" stroke="#c8c8c8" stroke-width="1.3"/></svg>
<div class="navt" style="left:378px;color:#d0d0d0">Info</div>
<svg style="position:absolute;left:426px;top:88px" width="21" height="18" viewBox="0 0 21 18"><path d="M1 10.4 L4.5 10.2 L6 8.8 L7.3 3.4 L8.2 12 L8.8 15.5 L10 8 L11 12.5 L12.3 9 L13.4 12 L15 9.8 L16.5 10.8 L18 10 L20 10.4" fill="none" stroke="#6cc92a" stroke-width="1.5" stroke-linejoin="round" stroke-linecap="round"/></svg>
<div class="navt" style="left:452.5px;color:#6cc92a">Sonidos</div>
<svg style="position:absolute;left:527px;top:89px" width="19" height="17" viewBox="0 0 19 17"><path d="M1.5 2 L7.5 4.3 L12 1.5 L17.8 4 L17.8 15.3 L12 12.8 L7.5 15.6 L1.5 13 Z" fill="#c8c8c8" stroke="#c8c8c8" stroke-width="0.8" stroke-linejoin="round"/><path d="M8.6 5.6 L10.9 4.3 L10.9 12.1 L8.6 13.4Z" fill="#333"/></svg>
<div class="navt" style="left:552.5px;color:#d0d0d0">Mapa</div>
<svg style="position:absolute;left:611.5px;top:88.2px" width="18" height="18" viewBox="0 0 18 18"><circle cx="9" cy="9" r="7.6" fill="none" stroke="#cccccc" stroke-width="1.5"/><path d="M7.3 5.5L12.6 9.1L7.3 12.7Z" fill="#c8c8c8"/></svg>
<div class="navt" style="left:637.5px;color:#d0d0d0">Tocar</div>
<div class="navt" style="left:910.5px;color:#fff;font-weight:bold;transform:scaleX(0.84);transform-origin:0 0">ES</div>
<div class="navt" style="left:939px;color:#6a6a6a;transform:scaleX(0.91);transform-origin:0 0">EN</div>
<svg style="position:absolute;left:970px;top:89px" width="17" height="17" viewBox="0 0 17 17"><circle cx="8.5" cy="8.5" r="7.3" fill="none" stroke="#5cb82a" stroke-width="1.6"/><path d="M5.3 8.7L7.5 10.8L11.7 6.4" fill="none" stroke="#5cb82a" stroke-width="1.6"/></svg>
<svg style="position:absolute;left:995.5px;top:89px" width="17" height="17" viewBox="0 0 17 17"><circle cx="8.5" cy="8.5" r="7.5" fill="none" stroke="#8a8a8a" stroke-width="1.5"/><circle cx="8.5" cy="6.6" r="2.6" fill="none" stroke="#8a8a8a" stroke-width="1.5"/><path d="M3.2 13.8A6.5 4.5 0 0 1 13.8 13.8" fill="none" stroke="#8a8a8a" stroke-width="1.5"/></svg>

<div id="rbg"></div>
<div id="squarebar"></div>
<div class="sq" style="left:340.00px;background:#6a1b94"></div>
<div class="sq" style="left:425.86px;background:#407870"></div>
<div class="sq" style="left:511.72px;background:#62763a"></div>
<div class="sq" style="left:597.58px;background:#826236"></div>
<div class="sq" style="left:683.44px;background:#8e5459"></div>
<div class="sq" style="left:769.30px;background:#6c5e80"></div>
<div class="sq" style="left:855.16px;background:#57587e"></div>
<div class="sq" style="left:941.02px;background:#7b5d6f"></div>
<svg style="position:absolute;left:354px;top:217px" width="17" height="17" viewBox="0 0 17 17"><circle cx="8.5" cy="8.5" r="7.8" fill="#777"/><path d="M6.2 6.6A2.3 2.3 0 1 1 9.4 8.6C8.7 9 8.5 9.4 8.5 10.4" fill="none" stroke="#464646" stroke-width="1.5"/><circle cx="8.5" cy="12.6" r="0.9" fill="#464646"/></svg>
<div class="help">Los sonidos se organizan en pistas. Haz click en el nombre de la pista para ver o añadir sonidos. Arrastra las pistas<br>para cambiar el orden.</div>
<div class="row" style="top:254px;background:#6a1b94"><div class="hd" style="background:#aa00ff"><svg style="position:absolute;left:15px;top:17px" width="15" height="11" viewBox="0 0 15 11"><path d="M0 0.75H15M0 3.95H15M0 7.15H15M0 10.35H15" stroke="#000" stroke-width="1.5"/></svg></div><span class="rt">Pista-1 Maite -Rompemoldes</span></div>
<div class="row" style="top:302px;background:#407870"><div class="hd" style="background:#4dc0b5"><svg style="position:absolute;left:15px;top:17px" width="15" height="11" viewBox="0 0 15 11"><path d="M0 0.75H15M0 3.95H15M0 7.15H15M0 10.35H15" stroke="#000" stroke-width="1.5"/></svg></div><span class="rt">Pista-2</span></div>
<div class="row" style="top:350px;background:#62763a"><div class="hd" style="background:#8bb846"><svg style="position:absolute;left:15px;top:17px" width="15" height="11" viewBox="0 0 15 11"><path d="M0 0.75H15M0 3.95H15M0 7.15H15M0 10.35H15" stroke="#000" stroke-width="1.5"/></svg></div><span class="rt">Pista-3</span></div>
<div class="row" style="top:398px;background:#826236"><div class="hd" style="background:#d69440"><svg style="position:absolute;left:15px;top:17px" width="15" height="11" viewBox="0 0 15 11"><path d="M0 0.75H15M0 3.95H15M0 7.15H15M0 10.35H15" stroke="#000" stroke-width="1.5"/></svg></div><span class="rt">Pista-4</span></div>
<div class="row" style="top:446px;background:#8e5459"><div class="hd" style="background:#e6737a"><svg style="position:absolute;left:15px;top:17px" width="15" height="11" viewBox="0 0 15 11"><path d="M0 0.75H15M0 3.95H15M0 7.15H15M0 10.35H15" stroke="#000" stroke-width="1.5"/></svg></div><span class="rt">Pista-5</span></div>
<div class="row" style="top:494px;background:#6c5e80"><div class="hd" style="background:#a98ad6"><svg style="position:absolute;left:15px;top:17px" width="15" height="11" viewBox="0 0 15 11"><path d="M0 0.75H15M0 3.95H15M0 7.15H15M0 10.35H15" stroke="#000" stroke-width="1.5"/></svg></div><span class="rt">Pista-7</span></div>
<div class="row" style="top:542px;background:#57587e"><div class="hd" style="background:#7b7bcb"><svg style="position:absolute;left:15px;top:17px" width="15" height="11" viewBox="0 0 15 11"><path d="M0 0.75H15M0 3.95H15M0 7.15H15M0 10.35H15" stroke="#000" stroke-width="1.5"/></svg></div><span class="rt">Pista-8</span></div>
<div class="row" style="top:590px;background:#7b5d6f"><div class="hd" style="background:#c08aaa"><svg style="position:absolute;left:15px;top:17px" width="15" height="11" viewBox="0 0 15 11"><path d="M0 0.75H15M0 3.95H15M0 7.15H15M0 10.35H15" stroke="#000" stroke-width="1.5"/></svg></div><span class="rt">Pista-6</span></div>
<div class="lh" style="top:117.10px;height:27.5px;background:#7b1fa2"><span class="lht">Pista-1 Maite -Rompemoldes</span><svg style="position:absolute;left:317.6px;top:5.4px" width="18" height="18" viewBox="0 0 18 18"><circle cx="9" cy="9" r="7.6" fill="none" stroke="rgba(240,240,240,0.8)" stroke-width="1.5"/><path d="M7.4 5.5 L12.2 9 L7.4 12.6Z" fill="rgba(240,240,240,0.8)"/></svg></div>
<div class="li" style="top:144.60px;height:64.75px;background:#aa00ff"><svg class="th" style="left:4px;top:4.20px;width:57px;height:56px;" width="57" height="56" viewBox="0 0 57 56"><defs><filter id="bl" x="-10%" y="-10%" width="120%" height="120%"><feGaussianBlur stdDeviation="1.6"/></filter><filter id="bl2"><feGaussianBlur stdDeviation="0.5"/></filter><filter id="bl3" x="-5%" y="-5%" width="110%" height="110%"><feGaussianBlur stdDeviation="0.7"/></filter></defs><rect width="57" height="56" fill="#a6a8a5"/><rect x="0" y="0.5" width="57" height="1.3" fill="#7c7f7b"/><rect x="0" y="1.8" width="57" height="1.2" fill="#b8bab7"/><rect x="0" y="6.8" width="57" height="1.3" fill="#7c7f7b"/><rect x="0" y="8.1" width="57" height="1.2" fill="#b8bab7"/><rect x="0" y="13.1" width="57" height="1.3" fill="#7c7f7b"/><rect x="0" y="14.4" width="57" height="1.2" fill="#b8bab7"/><rect x="0" y="19.4" width="57" height="1.3" fill="#7c7f7b"/><rect x="0" y="20.7" width="57" height="1.2" fill="#b8bab7"/><rect x="0" y="25.7" width="57" height="1.3" fill="#7c7f7b"/><rect x="0" y="27.0" width="57" height="1.2" fill="#b8bab7"/><rect x="0" y="32" width="57" height="1.3" fill="#7c7f7b"/><rect x="0" y="33.3" width="57" height="1.2" fill="#b8bab7"/><rect x="0" y="38.3" width="57" height="1.3" fill="#7c7f7b"/><rect x="0" y="39.599999999999994" width="57" height="1.2" fill="#b8bab7"/><rect x="0" y="44.6" width="57" height="1.3" fill="#7c7f7b"/><rect x="0" y="45.9" width="57" height="1.2" fill="#b8bab7"/><rect x="0" y="50.9" width="57" height="1.3" fill="#7c7f7b"/><rect x="0" y="52.199999999999996" width="57" height="1.2" fill="#b8bab7"/><g transform="translate(2.2,7.1) scale(0.9,1.05)" font-family="Liberation Mono" font-weight="bold" font-size="7.8" fill="#f2f4f2" stroke="#f2f4f2" stroke-width="0.35"><text x="0" y="0">ROM</text><text x="0" y="6.1">PE</text><text x="0" y="12.2">MOL</text><text x="0" y="18.3">DES</text></g><rect x="24" y="30" width="17" height="12" fill="#555855" opacity="0.85"/><g filter="url(#bl3)"><path d="M-2 58 L-2 32 Q6 28 14 31 Q20 34 24 40 Q32 38 40 36 Q44 28 50 27 Q56 26 59 28 L59 58Z" fill="#3a4c3a" opacity="0.85"/><ellipse cx="1.2" cy="34.2" rx="2.3" ry="1.0" fill="#2a3a2c" transform="rotate(-2 1.2 34.2)"/><ellipse cx="30.7" cy="46.0" rx="3.4" ry="1.1" fill="#3a4c3a" transform="rotate(39 30.7 46.0)"/><ellipse cx="13.0" cy="30.8" rx="2.3" ry="1.0" fill="#2a3a2c" transform="rotate(-50 13.0 30.8)"/><ellipse cx="17.2" cy="42.7" rx="3.6" ry="1.0" fill="#5a7a4e" transform="rotate(-13 17.2 42.7)"/><ellipse cx="53.6" cy="45.2" rx="1.9" ry="2.3" fill="#3a4c3a" transform="rotate(16 53.6 45.2)"/><ellipse cx="46.9" cy="34.2" rx="2.8" ry="1.7" fill="#3a4c3a" transform="rotate(-49 46.9 34.2)"/><ellipse cx="22.3" cy="53.8" rx="2.5" ry="2.0" fill="#4a564a" transform="rotate(26 22.3 53.8)"/><ellipse cx="52.3" cy="42.6" rx="2.9" ry="1.5" fill="#6a8a5a" transform="rotate(42 52.3 42.6)"/><ellipse cx="48.0" cy="55.4" rx="2.9" ry="1.1" fill="#223024" transform="rotate(-41 48.0 55.4)"/><ellipse cx="42.1" cy="39.6" rx="3.2" ry="0.8" fill="#4a564a" transform="rotate(-4 42.1 39.6)"/><ellipse cx="-1.2" cy="41.2" rx="1.8" ry="1.8" fill="#2a3a2c" transform="rotate(31 -1.2 41.2)"/><ellipse cx="15.5" cy="44.1" rx="3.2" ry="2.1" fill="#304232" transform="rotate(-31 15.5 44.1)"/><ellipse cx="58.5" cy="41.3" rx="3.2" ry="0.9" fill="#6a8a5a" transform="rotate(-48 58.5 41.3)"/><ellipse cx="13.6" cy="40.3" rx="1.9" ry="1.6" fill="#2a3a2c" transform="rotate(29 13.6 40.3)"/><ellipse cx="1.8" cy="41.1" rx="1.4" ry="1.6" fill="#8aa070" transform="rotate(-2 1.8 41.1)"/><ellipse cx="2.5" cy="50.0" rx="2.3" ry="2.6" fill="#4e6a46" transform="rotate(-46 2.5 50.0)"/><ellipse cx="43.8" cy="38.0" rx="2.1" ry="2.0" fill="#223024" transform="rotate(-42 43.8 38.0)"/><ellipse cx="41.8" cy="48.4" rx="2.2" ry="1.2" fill="#5a7a4e" transform="rotate(47 41.8 48.4)"/><ellipse cx="29.6" cy="49.7" rx="1.6" ry="2.0" fill="#223024" transform="rotate(-3 29.6 49.7)"/><ellipse cx="5.7" cy="57.3" rx="2.5" ry="1.9" fill="#223024" transform="rotate(5 5.7 57.3)"/><ellipse cx="1.8" cy="35.4" rx="2.9" ry="1.4" fill="#4a564a" transform="rotate(42 1.8 35.4)"/><ellipse cx="57.8" cy="48.1" rx="2.0" ry="2.2" fill="#8aa070" transform="rotate(-9 57.8 48.1)"/><ellipse cx="51.2" cy="43.4" rx="1.6" ry="1.7" fill="#3a4c3a" transform="rotate(-22 51.2 43.4)"/><ellipse cx="52.5" cy="38.2" rx="1.9" ry="1.7" fill="#7a9a68" transform="rotate(-17 52.5 38.2)"/><ellipse cx="22.3" cy="56.9" rx="1.4" ry="1.2" fill="#5a7a4e" transform="rotate(-26 22.3 56.9)"/><ellipse cx="14.4" cy="36.9" rx="2.8" ry="1.0" fill="#304232" transform="rotate(18 14.4 36.9)"/><ellipse cx="6.3" cy="55.4" rx="2.5" ry="1.5" fill="#8aa070" transform="rotate(12 6.3 55.4)"/><ellipse cx="18.8" cy="55.6" rx="3.4" ry="2.5" fill="#2a3a2c" transform="rotate(26 18.8 55.6)"/><ellipse cx="35.2" cy="48.9" rx="3.0" ry="1.0" fill="#4e6a46" transform="rotate(-4 35.2 48.9)"/><ellipse cx="56.4" cy="53.7" rx="2.0" ry="1.2" fill="#304232" transform="rotate(-27 56.4 53.7)"/><ellipse cx="21.3" cy="54.5" rx="3.4" ry="1.5" fill="#6a8a5a" transform="rotate(21 21.3 54.5)"/><ellipse cx="21.0" cy="41.2" rx="2.0" ry="2.4" fill="#3e5040" transform="rotate(-9 21.0 41.2)"/><ellipse cx="1.3" cy="41.8" rx="2.7" ry="1.3" fill="#4a564a" transform="rotate(-9 1.3 41.8)"/><ellipse cx="12.8" cy="42.9" rx="3.4" ry="1.8" fill="#4e6a46" transform="rotate(14 12.8 42.9)"/><ellipse cx="33.1" cy="56.6" rx="2.1" ry="0.9" fill="#4e6a46" transform="rotate(34 33.1 56.6)"/><ellipse cx="28.3" cy="42.4" rx="2.6" ry="1.6" fill="#3a4c3a" transform="rotate(-3 28.3 42.4)"/><ellipse cx="52.4" cy="34.6" rx="3.4" ry="1.6" fill="#3e5040" transform="rotate(49 52.4 34.6)"/><ellipse cx="55.7" cy="49.2" rx="3.5" ry="0.8" fill="#304232" transform="rotate(38 55.7 49.2)"/><ellipse cx="52.2" cy="54.1" rx="1.9" ry="2.6" fill="#2a3a2c" transform="rotate(27 52.2 54.1)"/><ellipse cx="-1.2" cy="49.6" rx="1.7" ry="1.3" fill="#8aa070" transform="rotate(-26 -1.2 49.6)"/><ellipse cx="16.5" cy="54.3" rx="2.4" ry="1.3" fill="#4e6a46" transform="rotate(28 16.5 54.3)"/><ellipse cx="31.2" cy="45.0" rx="1.7" ry="2.5" fill="#4e6a46" transform="rotate(2 31.2 45.0)"/><ellipse cx="46.7" cy="41.5" rx="1.4" ry="1.6" fill="#3e5040" transform="rotate(-5 46.7 41.5)"/><ellipse cx="7.4" cy="34.9" rx="3.6" ry="2.6" fill="#304232" transform="rotate(-24 7.4 34.9)"/><ellipse cx="2.5" cy="56.1" rx="1.2" ry="2.0" fill="#2a3a2c" transform="rotate(-19 2.5 56.1)"/><ellipse cx="42.6" cy="54.4" rx="2.3" ry="1.3" fill="#5a7a4e" transform="rotate(-14 42.6 54.4)"/><ellipse cx="38.9" cy="54.8" rx="1.8" ry="0.8" fill="#304232" transform="rotate(9 38.9 54.8)"/><ellipse cx="11.7" cy="36.9" rx="2.9" ry="1.6" fill="#223024" transform="rotate(-41 11.7 36.9)"/><ellipse cx="58.0" cy="42.9" rx="1.3" ry="1.1" fill="#2a3a2c" transform="rotate(-34 58.0 42.9)"/><ellipse cx="5.4" cy="56.0" rx="2.1" ry="1.9" fill="#3a4c3a" transform="rotate(-14 5.4 56.0)"/><ellipse cx="20.1" cy="47.0" rx="1.3" ry="1.7" fill="#2a3a2c" transform="rotate(25 20.1 47.0)"/><ellipse cx="38.5" cy="53.3" rx="3.2" ry="1.2" fill="#223024" transform="rotate(-34 38.5 53.3)"/><ellipse cx="51.5" cy="32.2" rx="3.4" ry="1.1" fill="#3a4c3a" transform="rotate(-46 51.5 32.2)"/><ellipse cx="4.0" cy="37.4" rx="2.3" ry="1.2" fill="#2a3a2c" transform="rotate(-31 4.0 37.4)"/><ellipse cx="5.0" cy="49.9" rx="1.5" ry="0.9" fill="#304232" transform="rotate(-20 5.0 49.9)"/><ellipse cx="12.3" cy="42.5" rx="2.9" ry="1.0" fill="#7a9a68" transform="rotate(35 12.3 42.5)"/><ellipse cx="22.4" cy="54.2" rx="3.3" ry="0.9" fill="#6a8a5a" transform="rotate(-14 22.4 54.2)"/><ellipse cx="12.3" cy="45.9" rx="1.2" ry="2.4" fill="#4a564a" transform="rotate(19 12.3 45.9)"/><ellipse cx="14.1" cy="42.1" rx="3.8" ry="1.5" fill="#223024" transform="rotate(-46 14.1 42.1)"/><ellipse cx="34.8" cy="46.3" rx="3.0" ry="0.8" fill="#2a3a2c" transform="rotate(32 34.8 46.3)"/><ellipse cx="15.9" cy="40.9" rx="1.7" ry="1.4" fill="#4a564a" transform="rotate(26 15.9 40.9)"/><ellipse cx="56.4" cy="44.0" rx="2.2" ry="2.0" fill="#7a9a68" transform="rotate(4 56.4 44.0)"/><ellipse cx="45.5" cy="36.5" rx="3.5" ry="2.6" fill="#5a7a4e" transform="rotate(-17 45.5 36.5)"/><ellipse cx="42.5" cy="50.9" rx="3.5" ry="2.0" fill="#3a4c3a" transform="rotate(-27 42.5 50.9)"/><ellipse cx="4.1" cy="58.0" rx="2.8" ry="1.3" fill="#2a3a2c" transform="rotate(-4 4.1 58.0)"/><ellipse cx="1.5" cy="38.5" rx="1.5" ry="1.5" fill="#3e5040" transform="rotate(20 1.5 38.5)"/><ellipse cx="50.7" cy="48.0" rx="1.5" ry="2.4" fill="#4a564a" transform="rotate(47 50.7 48.0)"/><ellipse cx="58.0" cy="37.3" rx="3.7" ry="0.8" fill="#3e5040" transform="rotate(-38 58.0 37.3)"/><ellipse cx="54.9" cy="41.2" rx="2.2" ry="2.5" fill="#4a564a" transform="rotate(-27 54.9 41.2)"/><ellipse cx="48.0" cy="32.0" rx="1.2" ry="1.2" fill="#223024" transform="rotate(-34 48.0 32.0)"/><ellipse cx="47.0" cy="30.5" rx="2.6" ry="1.6" fill="#223024" transform="rotate(-11 47.0 30.5)"/><ellipse cx="2.0" cy="32.4" rx="3.3" ry="1.5" fill="#4a564a" transform="rotate(36 2.0 32.4)"/><ellipse cx="31.2" cy="43.4" rx="2.0" ry="1.9" fill="#3a4c3a" transform="rotate(-48 31.2 43.4)"/><ellipse cx="38.6" cy="45.5" rx="3.5" ry="1.2" fill="#5a7a4e" transform="rotate(4 38.6 45.5)"/><ellipse cx="2.0" cy="52.7" rx="3.7" ry="1.1" fill="#6a8a5a" transform="rotate(-42 2.0 52.7)"/><ellipse cx="25.4" cy="57.4" rx="2.2" ry="2.1" fill="#4a564a" transform="rotate(18 25.4 57.4)"/><ellipse cx="55.3" cy="30.2" rx="3.4" ry="1.2" fill="#3e5040" transform="rotate(-11 55.3 30.2)"/><ellipse cx="40.8" cy="34.2" rx="1.3" ry="2.3" fill="#4a564a" transform="rotate(-44 40.8 34.2)"/><ellipse cx="49.1" cy="51.9" rx="3.5" ry="1.9" fill="#304232" transform="rotate(32 49.1 51.9)"/><ellipse cx="38.1" cy="57.5" rx="2.9" ry="1.0" fill="#6a8a5a" transform="rotate(34 38.1 57.5)"/><ellipse cx="47.0" cy="32.1" rx="3.0" ry="1.9" fill="#223024" transform="rotate(40 47.0 32.1)"/><ellipse cx="14.1" cy="41.9" rx="1.7" ry="1.8" fill="#3e5040" transform="rotate(-39 14.1 41.9)"/><ellipse cx="58.5" cy="55.8" rx="3.5" ry="1.9" fill="#8aa070" transform="rotate(34 58.5 55.8)"/><ellipse cx="34.6" cy="48.2" rx="2.9" ry="1.9" fill="#223024" transform="rotate(-47 34.6 48.2)"/><ellipse cx="20.7" cy="54.5" rx="2.4" ry="2.0" fill="#8aa070" transform="rotate(47 20.7 54.5)"/><ellipse cx="32.3" cy="50.6" rx="3.2" ry="1.4" fill="#7a9a68" transform="rotate(-44 32.3 50.6)"/><ellipse cx="33.7" cy="48.8" rx="2.2" ry="1.6" fill="#5a7a4e" transform="rotate(34 33.7 48.8)"/><ellipse cx="35.7" cy="44.2" rx="2.2" ry="1.0" fill="#2a3a2c" transform="rotate(47 35.7 44.2)"/><ellipse cx="55.1" cy="56.0" rx="3.2" ry="2.4" fill="#223024" transform="rotate(-8 55.1 56.0)"/><ellipse cx="17.2" cy="47.0" rx="3.4" ry="2.2" fill="#4a564a" transform="rotate(-16 17.2 47.0)"/><ellipse cx="18.6" cy="43.5" rx="1.8" ry="2.1" fill="#4a564a" transform="rotate(16 18.6 43.5)"/><ellipse cx="41.4" cy="32.3" rx="3.6" ry="1.1" fill="#304232" transform="rotate(37 41.4 32.3)"/><ellipse cx="39.8" cy="53.4" rx="1.7" ry="1.8" fill="#6a8a5a" transform="rotate(48 39.8 53.4)"/><ellipse cx="58.0" cy="43.0" rx="1.2" ry="1.1" fill="#4a564a" transform="rotate(14 58.0 43.0)"/><ellipse cx="36.9" cy="44.0" rx="2.3" ry="2.3" fill="#3a4c3a" transform="rotate(-44 36.9 44.0)"/><ellipse cx="36.9" cy="55.6" rx="3.0" ry="2.6" fill="#2a3a2c" transform="rotate(-36 36.9 55.6)"/><ellipse cx="0.3" cy="57.3" rx="2.1" ry="2.2" fill="#3e5040" transform="rotate(38 0.3 57.3)"/><ellipse cx="39.1" cy="50.1" rx="3.1" ry="2.3" fill="#4a564a" transform="rotate(-21 39.1 50.1)"/><ellipse cx="-0.0" cy="35.3" rx="2.4" ry="2.3" fill="#223024" transform="rotate(31 -0.0 35.3)"/><ellipse cx="49.1" cy="38.4" rx="2.9" ry="1.0" fill="#3a4c3a" transform="rotate(19 49.1 38.4)"/><ellipse cx="17.0" cy="32.3" rx="1.7" ry="0.9" fill="#3e5040" transform="rotate(-49 17.0 32.3)"/><ellipse cx="34.6" cy="49.3" rx="2.2" ry="1.7" fill="#304232" transform="rotate(-6 34.6 49.3)"/><ellipse cx="12.0" cy="49.8" rx="3.1" ry="1.0" fill="#8aa070" transform="rotate(-2 12.0 49.8)"/><ellipse cx="4.3" cy="38.4" rx="3.0" ry="1.5" fill="#5a7a4e" transform="rotate(4 4.3 38.4)"/><ellipse cx="47.9" cy="47.6" rx="2.4" ry="2.1" fill="#4a564a" transform="rotate(-45 47.9 47.6)"/><ellipse cx="23.3" cy="41.7" rx="2.0" ry="1.7" fill="#4a564a" transform="rotate(-8 23.3 41.7)"/><ellipse cx="20.4" cy="41.1" rx="2.8" ry="1.0" fill="#3e5040" transform="rotate(-9 20.4 41.1)"/><ellipse cx="0.0" cy="37.3" rx="1.9" ry="2.1" fill="#8aa070" transform="rotate(10 0.0 37.3)"/><ellipse cx="20.0" cy="49.6" rx="3.5" ry="1.9" fill="#304232" transform="rotate(-8 20.0 49.6)"/><ellipse cx="12.7" cy="43.7" rx="1.8" ry="1.4" fill="#304232" transform="rotate(9 12.7 43.7)"/><ellipse cx="27.4" cy="46.0" rx="2.8" ry="1.6" fill="#223024" transform="rotate(42 27.4 46.0)"/><ellipse cx="53.7" cy="30.4" rx="2.2" ry="1.6" fill="#8aa070" transform="rotate(-9 53.7 30.4)"/><ellipse cx="21.3" cy="50.1" rx="2.6" ry="1.2" fill="#4e6a46" transform="rotate(15 21.3 50.1)"/><ellipse cx="25.1" cy="51.0" rx="2.8" ry="2.2" fill="#8aa070" transform="rotate(-20 25.1 51.0)"/><ellipse cx="53.4" cy="40.5" rx="3.1" ry="0.9" fill="#2a3a2c" transform="rotate(-3 53.4 40.5)"/><ellipse cx="26.4" cy="51.4" rx="1.6" ry="1.1" fill="#304232" transform="rotate(-33 26.4 51.4)"/><ellipse cx="56.8" cy="52.0" rx="2.3" ry="1.1" fill="#304232" transform="rotate(28 56.8 52.0)"/><ellipse cx="47.8" cy="36.9" rx="2.7" ry="0.9" fill="#304232" transform="rotate(28 47.8 36.9)"/><ellipse cx="25.3" cy="43.3" rx="3.2" ry="1.9" fill="#3a4c3a" transform="rotate(-45 25.3 43.3)"/><ellipse cx="4.1" cy="32.7" rx="1.8" ry="1.1" fill="#304232" transform="rotate(-38 4.1 32.7)"/><ellipse cx="57.8" cy="43.7" rx="2.8" ry="1.2" fill="#6a8a5a" transform="rotate(-20 57.8 43.7)"/><ellipse cx="39.0" cy="43.1" rx="3.2" ry="1.8" fill="#2a3a2c" transform="rotate(28 39.0 43.1)"/><ellipse cx="27.7" cy="47.8" rx="3.1" ry="1.1" fill="#304232" transform="rotate(-21 27.7 47.8)"/><ellipse cx="16.3" cy="48.9" rx="2.3" ry="1.1" fill="#4a564a" transform="rotate(-25 16.3 48.9)"/><ellipse cx="7.7" cy="35.7" rx="2.5" ry="2.1" fill="#6a8a5a" transform="rotate(39 7.7 35.7)"/><ellipse cx="-1.0" cy="50.7" rx="2.8" ry="2.0" fill="#6a8a5a" transform="rotate(29 -1.0 50.7)"/><ellipse cx="24.3" cy="52.9" rx="3.5" ry="2.2" fill="#7a9a68" transform="rotate(-16 24.3 52.9)"/><ellipse cx="12.4" cy="34.9" rx="1.7" ry="1.1" fill="#2a3a2c" transform="rotate(2 12.4 34.9)"/><ellipse cx="29.3" cy="57.6" rx="1.4" ry="1.6" fill="#223024" transform="rotate(19 29.3 57.6)"/><ellipse cx="16.9" cy="51.4" rx="2.9" ry="1.1" fill="#4e6a46" transform="rotate(45 16.9 51.4)"/><ellipse cx="42.7" cy="53.5" rx="1.5" ry="1.7" fill="#3a4c3a" transform="rotate(-35 42.7 53.5)"/><ellipse cx="12.1" cy="40.5" rx="3.6" ry="1.3" fill="#2a3a2c" transform="rotate(-37 12.1 40.5)"/><ellipse cx="-1.4" cy="50.6" rx="2.2" ry="1.6" fill="#304232" transform="rotate(-20 -1.4 50.6)"/><ellipse cx="8.9" cy="49.3" rx="1.7" ry="1.6" fill="#8aa070" transform="rotate(-19 8.9 49.3)"/><ellipse cx="42.9" cy="40.8" rx="2.2" ry="1.3" fill="#223024" transform="rotate(18 42.9 40.8)"/><ellipse cx="40.8" cy="48.6" rx="1.2" ry="2.5" fill="#304232" transform="rotate(36 40.8 48.6)"/><ellipse cx="34.5" cy="42.8" rx="2.8" ry="1.6" fill="#3a4c3a" transform="rotate(41 34.5 42.8)"/><ellipse cx="-1.8" cy="44.2" rx="2.4" ry="2.0" fill="#7a9a68" transform="rotate(-33 -1.8 44.2)"/><ellipse cx="47.0" cy="33.5" rx="1.7" ry="2.2" fill="#304232" transform="rotate(17 47.0 33.5)"/><ellipse cx="5.6" cy="48.6" rx="3.2" ry="1.8" fill="#8aa070" transform="rotate(3 5.6 48.6)"/><ellipse cx="13.8" cy="52.0" rx="2.9" ry="2.2" fill="#4e6a46" transform="rotate(33 13.8 52.0)"/><ellipse cx="16.4" cy="32.9" rx="2.2" ry="2.5" fill="#4e6a46" transform="rotate(19 16.4 32.9)"/><ellipse cx="43.3" cy="46.6" rx="1.3" ry="1.1" fill="#304232" transform="rotate(-37 43.3 46.6)"/><ellipse cx="29.6" cy="40.7" rx="3.4" ry="2.3" fill="#3a4c3a" transform="rotate(-34 29.6 40.7)"/><ellipse cx="55.8" cy="34.7" rx="3.0" ry="0.9" fill="#3e5040" transform="rotate(11 55.8 34.7)"/><ellipse cx="30.8" cy="48.9" rx="2.9" ry="1.1" fill="#4a564a" transform="rotate(33 30.8 48.9)"/><ellipse cx="10.1" cy="47.8" rx="3.3" ry="0.9" fill="#304232" transform="rotate(30 10.1 47.8)"/><ellipse cx="50.7" cy="36.4" rx="2.4" ry="1.0" fill="#3a4c3a" transform="rotate(-34 50.7 36.4)"/><ellipse cx="13.1" cy="32.8" rx="2.2" ry="1.2" fill="#3e5040" transform="rotate(6 13.1 32.8)"/><ellipse cx="50.1" cy="49.4" rx="1.3" ry="1.9" fill="#2a3a2c" transform="rotate(32 50.1 49.4)"/><ellipse cx="36.0" cy="57.2" rx="3.2" ry="1.4" fill="#6a8a5a" transform="rotate(48 36.0 57.2)"/><ellipse cx="57.0" cy="52.5" rx="2.9" ry="1.2" fill="#3a4c3a" transform="rotate(-25 57.0 52.5)"/><ellipse cx="33.9" cy="45.1" rx="2.5" ry="2.1" fill="#4a564a" transform="rotate(12 33.9 45.1)"/><ellipse cx="20.5" cy="50.5" rx="1.6" ry="1.7" fill="#6a8a5a" transform="rotate(-32 20.5 50.5)"/><ellipse cx="37.0" cy="53.3" rx="2.9" ry="1.5" fill="#304232" transform="rotate(-24 37.0 53.3)"/><ellipse cx="18.0" cy="36.0" rx="1.8" ry="2.4" fill="#6a8a5a" transform="rotate(5 18.0 36.0)"/><ellipse cx="6.3" cy="46.9" rx="2.2" ry="2.1" fill="#2a3a2c" transform="rotate(44 6.3 46.9)"/><ellipse cx="57.2" cy="45.8" rx="3.0" ry="2.4" fill="#4a564a" transform="rotate(-30 57.2 45.8)"/><ellipse cx="13.1" cy="54.3" rx="2.1" ry="1.2" fill="#3e5040" transform="rotate(-42 13.1 54.3)"/><ellipse cx="30.8" cy="45.6" rx="3.2" ry="2.6" fill="#3e5040" transform="rotate(4 30.8 45.6)"/><ellipse cx="8.7" cy="37.2" rx="2.6" ry="1.9" fill="#304232" transform="rotate(47 8.7 37.2)"/><ellipse cx="24.7" cy="46.1" rx="2.4" ry="2.2" fill="#4e6a46" transform="rotate(-48 24.7 46.1)"/><ellipse cx="36.1" cy="52.5" rx="2.2" ry="1.1" fill="#304232" transform="rotate(-8 36.1 52.5)"/><ellipse cx="37.5" cy="55.8" rx="1.8" ry="2.2" fill="#2a3a2c" transform="rotate(-42 37.5 55.8)"/><ellipse cx="28.9" cy="48.6" rx="2.6" ry="2.0" fill="#223024" transform="rotate(44 28.9 48.6)"/><ellipse cx="27.2" cy="57.8" rx="2.8" ry="1.0" fill="#5a7a4e" transform="rotate(34 27.2 57.8)"/><ellipse cx="43.3" cy="53.4" rx="2.9" ry="0.9" fill="#3e5040" transform="rotate(18 43.3 53.4)"/><ellipse cx="12.1" cy="45.9" rx="1.8" ry="1.2" fill="#7a9a68" transform="rotate(48 12.1 45.9)"/><ellipse cx="36.1" cy="41.7" rx="1.8" ry="2.0" fill="#3a4c3a" transform="rotate(-36 36.1 41.7)"/><ellipse cx="12.6" cy="55.7" rx="1.2" ry="0.9" fill="#3a4c3a" transform="rotate(-40 12.6 55.7)"/><rect x="45" y="36" width="2.5" height="14" fill="#9a8a48" opacity="0.8"/></g><rect x="22" y="32" width="1.8" height="24" fill="#2a2a28" opacity="0.8"/><circle cx="28.5" cy="28" r="10.5" fill="none" stroke="rgba(215,215,215,0.42)" stroke-width="4"/><path d="M28.5 17.5 A10.5 10.5 0 0 1 38.6 30.8" fill="none" stroke="rgba(238,238,238,0.92)" stroke-width="4"/></svg><span class="lit" style="letter-spacing:-0.009px">DE DONDE ERES???????? - Maite 2.mp3</span><span class="lid">16.96s</span><svg class="wv" width="266" height="16" viewBox="0 0 266 16"><path d="M0.0,6.47 L0.7,6.48 L1.3,6.36 L2.0,6.44 L2.7,6.49 L3.3,6.38 L4.0,6.47 L4.7,6.26 L5.3,5.59 L6.0,5.44 L6.7,5.37 L7.3,5.49 L8.0,5.71 L8.7,5.90 L9.3,6.29 L10.0,6.23 L10.7,6.17 L11.3,6.43 L12.0,6.21 L12.7,6.12 L13.3,6.21 L14.0,6.18 L14.7,6.01 L15.3,5.98 L16.0,5.98 L16.7,5.82 L17.3,5.77 L18.0,5.66 L18.7,5.63 L19.3,5.65 L20.0,5.60 L20.7,5.40 L21.3,5.49 L22.0,5.28 L22.7,5.32 L23.3,5.03 L24.0,5.18 L24.7,5.42 L25.3,5.59 L26.0,5.85 L26.7,5.85 L27.3,6.18 L28.0,6.30 L28.7,6.33 L29.3,6.19 L30.0,6.31 L30.7,6.33 L31.3,6.31 L32.0,6.42 L32.7,6.42 L33.3,6.35 L34.0,6.55 L34.7,6.49 L35.3,6.45 L36.0,6.48 L36.7,6.36 L37.3,6.44 L38.0,6.29 L38.7,6.38 L39.3,6.43 L40.0,6.43 L40.7,6.34 L41.3,6.42 L42.0,6.35 L42.7,6.54 L43.3,6.42 L44.0,6.47 L44.7,6.50 L45.3,6.39 L46.0,6.40 L46.7,6.38 L47.3,6.32 L48.0,6.28 L48.7,6.40 L49.3,6.45 L50.0,6.40 L50.7,6.28 L51.3,6.24 L52.0,6.21 L52.7,6.31 L53.3,5.92 L54.0,5.83 L54.7,5.76 L55.3,5.35 L56.0,5.12 L56.7,5.18 L57.3,4.95 L58.0,4.90 L58.7,4.91 L59.3,4.98 L60.0,5.48 L60.7,5.39 L61.3,5.44 L62.0,5.41 L62.7,5.18 L63.3,4.73 L64.0,4.31 L64.7,4.34 L65.3,4.40 L66.0,5.01 L66.7,4.90 L67.3,4.97 L68.0,4.94 L68.7,4.83 L69.3,4.91 L70.0,5.10 L70.7,5.38 L71.3,5.83 L72.0,5.85 L72.7,5.85 L73.3,5.87 L74.0,5.58 L74.7,5.66 L75.3,5.74 L76.0,5.79 L76.7,5.65 L77.3,5.80 L78.0,5.91 L78.7,6.13 L79.3,6.24 L80.0,6.53 L80.7,6.32 L81.3,6.34 L82.0,6.35 L82.7,6.34 L83.3,6.28 L84.0,6.36 L84.7,6.44 L85.3,6.39 L86.0,6.49 L86.7,6.37 L87.3,6.55 L88.0,6.50 L88.7,6.45 L89.3,6.31 L90.0,6.33 L90.7,6.45 L91.3,6.36 L92.0,6.54 L92.7,6.50 L93.3,6.26 L94.0,6.46 L94.7,6.43 L95.3,6.39 L96.0,6.46 L96.7,6.41 L97.3,6.48 L98.0,6.54 L98.7,6.50 L99.3,6.39 L100.0,6.53 L100.7,6.43 L101.3,6.45 L102.0,6.43 L102.7,6.52 L103.3,6.28 L104.0,6.41 L104.7,6.30 L105.3,6.26 L106.0,6.45 L106.7,6.41 L107.3,6.34 L108.0,6.42 L108.7,6.46 L109.3,6.33 L110.0,6.28 L110.7,6.27 L111.3,6.36 L112.0,6.44 L112.7,6.26 L113.3,6.36 L114.0,6.53 L114.7,6.52 L115.3,6.32 L116.0,6.53 L116.7,6.53 L117.3,6.36 L118.0,6.21 L118.7,6.10 L119.3,6.06 L120.0,6.12 L120.7,6.22 L121.3,6.38 L122.0,6.43 L122.7,6.24 L123.3,6.41 L124.0,6.15 L124.7,6.06 L125.3,5.78 L126.0,5.49 L126.7,4.95 L127.3,4.96 L128.0,5.02 L128.7,5.22 L129.3,5.15 L130.0,5.38 L130.7,5.46 L131.3,5.75 L132.0,6.04 L132.7,5.94 L133.3,6.22 L134.0,6.07 L134.7,5.70 L135.3,5.59 L136.0,5.90 L136.7,6.36 L137.3,6.23 L138.0,6.25 L138.7,6.51 L139.3,6.43 L140.0,6.35 L140.7,6.29 L141.3,6.40 L142.0,6.27 L142.7,6.45 L143.3,6.37 L144.0,6.31 L144.7,6.12 L145.3,6.06 L146.0,5.73 L146.7,5.76 L147.3,5.82 L148.0,5.85 L148.7,6.07 L149.3,6.22 L150.0,6.51 L150.7,6.46 L151.3,6.34 L152.0,5.99 L152.7,5.71 L153.3,5.56 L154.0,5.38 L154.7,5.31 L155.3,5.59 L156.0,5.75 L156.7,5.69 L157.3,5.99 L158.0,5.84 L158.7,5.71 L159.3,5.50 L160.0,5.05 L160.7,5.05 L161.3,4.99 L162.0,4.89 L162.7,4.71 L163.3,4.77 L164.0,5.26 L164.7,5.54 L165.3,5.94 L166.0,6.05 L166.7,6.04 L167.3,5.97 L168.0,5.93 L168.7,5.80 L169.3,5.84 L170.0,5.77 L170.7,5.99 L171.3,5.91 L172.0,5.89 L172.7,5.79 L173.3,5.80 L174.0,5.56 L174.7,5.53 L175.3,5.36 L176.0,5.25 L176.7,5.33 L177.3,5.51 L178.0,5.92 L178.7,6.09 L179.3,6.19 L180.0,6.39 L180.7,6.50 L181.3,6.28 L182.0,6.26 L182.7,6.43 L183.3,6.34 L184.0,6.11 L184.7,6.19 L185.3,5.87 L186.0,5.92 L186.7,5.84 L187.3,5.69 L188.0,5.97 L188.7,6.03 L189.3,5.94 L190.0,5.89 L190.7,5.70 L191.3,5.65 L192.0,5.56 L192.7,5.61 L193.3,5.27 L194.0,5.45 L194.7,5.52 L195.3,5.82 L196.0,6.17 L196.7,6.23 L197.3,6.43 L198.0,6.52 L198.7,6.36 L199.3,6.36 L200.0,6.52 L200.7,6.39 L201.3,6.45 L202.0,6.43 L202.7,6.32 L203.3,6.40 L204.0,6.29 L204.7,6.36 L205.3,6.39 L206.0,6.30 L206.7,6.29 L207.3,6.20 L208.0,5.87 L208.7,5.80 L209.3,5.76 L210.0,6.01 L210.7,5.81 L211.3,5.87 L212.0,5.87 L212.7,5.81 L213.3,5.48 L214.0,4.81 L214.7,4.47 L215.3,4.16 L216.0,4.18 L216.7,4.01 L217.3,4.35 L218.0,4.62 L218.7,5.06 L219.3,5.22 L220.0,5.65 L220.7,5.85 L221.3,5.74 L222.0,5.96 L222.7,5.80 L223.3,5.57 L224.0,5.31 L224.7,5.04 L225.3,5.08 L226.0,5.30 L226.7,5.41 L227.3,5.73 L228.0,6.02 L228.7,6.14 L229.3,6.12 L230.0,5.90 L230.7,5.74 L231.3,5.62 L232.0,5.76 L232.7,5.90 L233.3,6.08 L234.0,6.35 L234.7,6.50 L235.3,6.31 L236.0,6.33 L236.7,6.54 L237.3,6.41 L238.0,6.33 L238.7,6.50 L239.3,6.17 L240.0,6.04 L240.7,5.94 L241.3,5.95 L242.0,5.83 L242.7,5.69 L243.3,5.72 L244.0,5.45 L244.7,5.28 L245.3,4.80 L246.0,4.92 L246.7,5.46 L247.3,5.58 L248.0,6.04 L248.7,6.15 L249.3,5.99 L250.0,5.80 L250.7,5.85 L251.3,5.62 L252.0,5.28 L252.7,5.32 L253.3,5.32 L254.0,5.51 L254.7,5.86 L255.3,5.91 L256.0,5.96 L256.7,6.01 L257.3,6.43 L258.0,6.24 L258.7,6.43 L259.3,6.37 L260.0,6.29 L260.7,5.95 L261.3,6.01 L262.0,6.27 L262.7,6.48 L263.3,6.25 L264.0,6.52 L264.7,6.38 L265.3,6.50 L266.0,6.28 L266.0,9.72 L265.3,9.50 L264.7,9.62 L264.0,9.48 L263.3,9.75 L262.7,9.52 L262.0,9.73 L261.3,9.99 L260.7,10.05 L260.0,9.71 L259.3,9.63 L258.7,9.57 L258.0,9.76 L257.3,9.57 L256.7,9.99 L256.0,10.04 L255.3,10.09 L254.7,10.14 L254.0,10.49 L253.3,10.68 L252.7,10.68 L252.0,10.72 L251.3,10.38 L250.7,10.15 L250.0,10.20 L249.3,10.01 L248.7,9.85 L248.0,9.96 L247.3,10.42 L246.7,10.54 L246.0,11.08 L245.3,11.20 L244.7,10.72 L244.0,10.55 L243.3,10.28 L242.7,10.31 L242.0,10.17 L241.3,10.05 L240.7,10.06 L240.0,9.96 L239.3,9.83 L238.7,9.50 L238.0,9.67 L237.3,9.59 L236.7,9.46 L236.0,9.67 L235.3,9.69 L234.7,9.50 L234.0,9.65 L233.3,9.92 L232.7,10.10 L232.0,10.24 L231.3,10.38 L230.7,10.26 L230.0,10.10 L229.3,9.88 L228.7,9.86 L228.0,9.98 L227.3,10.27 L226.7,10.59 L226.0,10.70 L225.3,10.92 L224.7,10.96 L224.0,10.69 L223.3,10.43 L222.7,10.20 L222.0,10.04 L221.3,10.26 L220.7,10.15 L220.0,10.35 L219.3,10.78 L218.7,10.94 L218.0,11.38 L217.3,11.65 L216.7,11.99 L216.0,11.82 L215.3,11.84 L214.7,11.53 L214.0,11.19 L213.3,10.52 L212.7,10.19 L212.0,10.13 L211.3,10.13 L210.7,10.19 L210.0,9.99 L209.3,10.24 L208.7,10.20 L208.0,10.13 L207.3,9.80 L206.7,9.71 L206.0,9.70 L205.3,9.61 L204.7,9.64 L204.0,9.71 L203.3,9.60 L202.7,9.68 L202.0,9.57 L201.3,9.55 L200.7,9.61 L200.0,9.48 L199.3,9.64 L198.7,9.64 L198.0,9.48 L197.3,9.57 L196.7,9.77 L196.0,9.83 L195.3,10.18 L194.7,10.48 L194.0,10.55 L193.3,10.73 L192.7,10.39 L192.0,10.44 L191.3,10.35 L190.7,10.30 L190.0,10.11 L189.3,10.06 L188.7,9.97 L188.0,10.03 L187.3,10.31 L186.7,10.16 L186.0,10.08 L185.3,10.13 L184.7,9.81 L184.0,9.89 L183.3,9.66 L182.7,9.57 L182.0,9.74 L181.3,9.72 L180.7,9.50 L180.0,9.61 L179.3,9.81 L178.7,9.91 L178.0,10.08 L177.3,10.49 L176.7,10.67 L176.0,10.75 L175.3,10.64 L174.7,10.47 L174.0,10.44 L173.3,10.20 L172.7,10.21 L172.0,10.11 L171.3,10.09 L170.7,10.01 L170.0,10.23 L169.3,10.16 L168.7,10.20 L168.0,10.07 L167.3,10.03 L166.7,9.96 L166.0,9.95 L165.3,10.06 L164.7,10.46 L164.0,10.74 L163.3,11.23 L162.7,11.29 L162.0,11.11 L161.3,11.01 L160.7,10.95 L160.0,10.95 L159.3,10.50 L158.7,10.29 L158.0,10.16 L157.3,10.01 L156.7,10.31 L156.0,10.25 L155.3,10.41 L154.7,10.69 L154.0,10.62 L153.3,10.44 L152.7,10.29 L152.0,10.01 L151.3,9.66 L150.7,9.54 L150.0,9.49 L149.3,9.78 L148.7,9.93 L148.0,10.15 L147.3,10.18 L146.7,10.24 L146.0,10.27 L145.3,9.94 L144.7,9.88 L144.0,9.69 L143.3,9.63 L142.7,9.55 L142.0,9.73 L141.3,9.60 L140.7,9.71 L140.0,9.65 L139.3,9.57 L138.7,9.49 L138.0,9.75 L137.3,9.77 L136.7,9.64 L136.0,10.10 L135.3,10.41 L134.7,10.30 L134.0,9.93 L133.3,9.78 L132.7,10.06 L132.0,9.96 L131.3,10.25 L130.7,10.54 L130.0,10.62 L129.3,10.85 L128.7,10.78 L128.0,10.98 L127.3,11.04 L126.7,11.05 L126.0,10.51 L125.3,10.22 L124.7,9.94 L124.0,9.85 L123.3,9.59 L122.7,9.76 L122.0,9.57 L121.3,9.62 L120.7,9.78 L120.0,9.88 L119.3,9.94 L118.7,9.90 L118.0,9.79 L117.3,9.64 L116.7,9.47 L116.0,9.47 L115.3,9.68 L114.7,9.48 L114.0,9.47 L113.3,9.64 L112.7,9.74 L112.0,9.56 L111.3,9.64 L110.7,9.73 L110.0,9.72 L109.3,9.67 L108.7,9.54 L108.0,9.58 L107.3,9.66 L106.7,9.59 L106.0,9.55 L105.3,9.74 L104.7,9.70 L104.0,9.59 L103.3,9.72 L102.7,9.48 L102.0,9.57 L101.3,9.55 L100.7,9.57 L100.0,9.47 L99.3,9.61 L98.7,9.50 L98.0,9.46 L97.3,9.52 L96.7,9.59 L96.0,9.54 L95.3,9.61 L94.7,9.57 L94.0,9.54 L93.3,9.74 L92.7,9.50 L92.0,9.46 L91.3,9.64 L90.7,9.55 L90.0,9.67 L89.3,9.69 L88.7,9.55 L88.0,9.50 L87.3,9.45 L86.7,9.63 L86.0,9.51 L85.3,9.61 L84.7,9.56 L84.0,9.64 L83.3,9.72 L82.7,9.66 L82.0,9.65 L81.3,9.66 L80.7,9.68 L80.0,9.47 L79.3,9.76 L78.7,9.87 L78.0,10.09 L77.3,10.20 L76.7,10.35 L76.0,10.21 L75.3,10.26 L74.7,10.34 L74.0,10.42 L73.3,10.13 L72.7,10.15 L72.0,10.15 L71.3,10.17 L70.7,10.62 L70.0,10.90 L69.3,11.09 L68.7,11.17 L68.0,11.06 L67.3,11.03 L66.7,11.10 L66.0,10.99 L65.3,11.60 L64.7,11.66 L64.0,11.69 L63.3,11.27 L62.7,10.82 L62.0,10.59 L61.3,10.56 L60.7,10.61 L60.0,10.52 L59.3,11.02 L58.7,11.09 L58.0,11.10 L57.3,11.05 L56.7,10.82 L56.0,10.88 L55.3,10.65 L54.7,10.24 L54.0,10.17 L53.3,10.08 L52.7,9.69 L52.0,9.79 L51.3,9.76 L50.7,9.72 L50.0,9.60 L49.3,9.55 L48.7,9.60 L48.0,9.72 L47.3,9.68 L46.7,9.62 L46.0,9.60 L45.3,9.61 L44.7,9.50 L44.0,9.53 L43.3,9.58 L42.7,9.46 L42.0,9.65 L41.3,9.58 L40.7,9.66 L40.0,9.57 L39.3,9.57 L38.7,9.62 L38.0,9.71 L37.3,9.56 L36.7,9.64 L36.0,9.52 L35.3,9.55 L34.7,9.51 L34.0,9.45 L33.3,9.65 L32.7,9.58 L32.0,9.58 L31.3,9.69 L30.7,9.67 L30.0,9.69 L29.3,9.81 L28.7,9.67 L28.0,9.70 L27.3,9.82 L26.7,10.15 L26.0,10.15 L25.3,10.41 L24.7,10.58 L24.0,10.82 L23.3,10.97 L22.7,10.68 L22.0,10.72 L21.3,10.51 L20.7,10.60 L20.0,10.40 L19.3,10.35 L18.7,10.37 L18.0,10.34 L17.3,10.23 L16.7,10.18 L16.0,10.02 L15.3,10.02 L14.7,9.99 L14.0,9.82 L13.3,9.79 L12.7,9.88 L12.0,9.79 L11.3,9.57 L10.7,9.83 L10.0,9.77 L9.3,9.71 L8.7,10.10 L8.0,10.29 L7.3,10.51 L6.7,10.63 L6.0,10.56 L5.3,10.41 L4.7,9.74 L4.0,9.53 L3.3,9.62 L2.7,9.51 L2.0,9.56 L1.3,9.64 L0.7,9.52 L0.0,9.53Z" fill="#eeeeee"/></svg></div>
<div class="li" style="top:209.35px;height:64.75px;background:#aa00ff"><svg class="th" style="left:4px;top:4.20px;width:57px;height:56px;" width="57" height="56" viewBox="0 0 57 56"><defs><filter id="bl" x="-10%" y="-10%" width="120%" height="120%"><feGaussianBlur stdDeviation="1.6"/></filter><filter id="bl2"><feGaussianBlur stdDeviation="0.5"/></filter><filter id="bl3" x="-5%" y="-5%" width="110%" height="110%"><feGaussianBlur stdDeviation="0.7"/></filter></defs><rect width="57" height="56" fill="#a6a8a5"/><rect x="0" y="0.5" width="57" height="1.3" fill="#7c7f7b"/><rect x="0" y="1.8" width="57" height="1.2" fill="#b8bab7"/><rect x="0" y="6.8" width="57" height="1.3" fill="#7c7f7b"/><rect x="0" y="8.1" width="57" height="1.2" fill="#b8bab7"/><rect x="0" y="13.1" width="57" height="1.3" fill="#7c7f7b"/><rect x="0" y="14.4" width="57" height="1.2" fill="#b8bab7"/><rect x="0" y="19.4" width="57" height="1.3" fill="#7c7f7b"/><rect x="0" y="20.7" width="57" height="1.2" fill="#b8bab7"/><rect x="0" y="25.7" width="57" height="1.3" fill="#7c7f7b"/><rect x="0" y="27.0" width="57" height="1.2" fill="#b8bab7"/><rect x="0" y="32" width="57" height="1.3" fill="#7c7f7b"/><rect x="0" y="33.3" width="57" height="1.2" fill="#b8bab7"/><rect x="0" y="38.3" width="57" height="1.3" fill="#7c7f7b"/><rect x="0" y="39.599999999999994" width="57" height="1.2" fill="#b8bab7"/><rect x="0" y="44.6" width="57" height="1.3" fill="#7c7f7b"/><rect x="0" y="45.9" width="57" height="1.2" fill="#b8bab7"/><rect x="0" y="50.9" width="57" height="1.3" fill="#7c7f7b"/><rect x="0" y="52.199999999999996" width="57" height="1.2" fill="#b8bab7"/><g transform="translate(2.2,7.1) scale(0.9,1.05)" font-family="Liberation Mono" font-weight="bold" font-size="7.8" fill="#f2f4f2" stroke="#f2f4f2" stroke-width="0.35"><text x="0" y="0">ROM</text><text x="0" y="6.1">PE</text><text x="0" y="12.2">MOL</text><text x="0" y="18.3">DES</text></g><rect x="24" y="30" width="17" height="12" fill="#555855" opacity="0.85"/><g filter="url(#bl3)"><path d="M-2 58 L-2 32 Q6 28 14 31 Q20 34 24 40 Q32 38 40 36 Q44 28 50 27 Q56 26 59 28 L59 58Z" fill="#3a4c3a" opacity="0.85"/><ellipse cx="1.2" cy="34.2" rx="2.3" ry="1.0" fill="#2a3a2c" transform="rotate(-2 1.2 34.2)"/><ellipse cx="30.7" cy="46.0" rx="3.4" ry="1.1" fill="#3a4c3a" transform="rotate(39 30.7 46.0)"/><ellipse cx="13.0" cy="30.8" rx="2.3" ry="1.0" fill="#2a3a2c" transform="rotate(-50 13.0 30.8)"/><ellipse cx="17.2" cy="42.7" rx="3.6" ry="1.0" fill="#5a7a4e" transform="rotate(-13 17.2 42.7)"/><ellipse cx="53.6" cy="45.2" rx="1.9" ry="2.3" fill="#3a4c3a" transform="rotate(16 53.6 45.2)"/><ellipse cx="46.9" cy="34.2" rx="2.8" ry="1.7" fill="#3a4c3a" transform="rotate(-49 46.9 34.2)"/><ellipse cx="22.3" cy="53.8" rx="2.5" ry="2.0" fill="#4a564a" transform="rotate(26 22.3 53.8)"/><ellipse cx="52.3" cy="42.6" rx="2.9" ry="1.5" fill="#6a8a5a" transform="rotate(42 52.3 42.6)"/><ellipse cx="48.0" cy="55.4" rx="2.9" ry="1.1" fill="#223024" transform="rotate(-41 48.0 55.4)"/><ellipse cx="42.1" cy="39.6" rx="3.2" ry="0.8" fill="#4a564a" transform="rotate(-4 42.1 39.6)"/><ellipse cx="-1.2" cy="41.2" rx="1.8" ry="1.8" fill="#2a3a2c" transform="rotate(31 -1.2 41.2)"/><ellipse cx="15.5" cy="44.1" rx="3.2" ry="2.1" fill="#304232" transform="rotate(-31 15.5 44.1)"/><ellipse cx="58.5" cy="41.3" rx="3.2" ry="0.9" fill="#6a8a5a" transform="rotate(-48 58.5 41.3)"/><ellipse cx="13.6" cy="40.3" rx="1.9" ry="1.6" fill="#2a3a2c" transform="rotate(29 13.6 40.3)"/><ellipse cx="1.8" cy="41.1" rx="1.4" ry="1.6" fill="#8aa070" transform="rotate(-2 1.8 41.1)"/><ellipse cx="2.5" cy="50.0" rx="2.3" ry="2.6" fill="#4e6a46" transform="rotate(-46 2.5 50.0)"/><ellipse cx="43.8" cy="38.0" rx="2.1" ry="2.0" fill="#223024" transform="rotate(-42 43.8 38.0)"/><ellipse cx="41.8" cy="48.4" rx="2.2" ry="1.2" fill="#5a7a4e" transform="rotate(47 41.8 48.4)"/><ellipse cx="29.6" cy="49.7" rx="1.6" ry="2.0" fill="#223024" transform="rotate(-3 29.6 49.7)"/><ellipse cx="5.7" cy="57.3" rx="2.5" ry="1.9" fill="#223024" transform="rotate(5 5.7 57.3)"/><ellipse cx="1.8" cy="35.4" rx="2.9" ry="1.4" fill="#4a564a" transform="rotate(42 1.8 35.4)"/><ellipse cx="57.8" cy="48.1" rx="2.0" ry="2.2" fill="#8aa070" transform="rotate(-9 57.8 48.1)"/><ellipse cx="51.2" cy="43.4" rx="1.6" ry="1.7" fill="#3a4c3a" transform="rotate(-22 51.2 43.4)"/><ellipse cx="52.5" cy="38.2" rx="1.9" ry="1.7" fill="#7a9a68" transform="rotate(-17 52.5 38.2)"/><ellipse cx="22.3" cy="56.9" rx="1.4" ry="1.2" fill="#5a7a4e" transform="rotate(-26 22.3 56.9)"/><ellipse cx="14.4" cy="36.9" rx="2.8" ry="1.0" fill="#304232" transform="rotate(18 14.4 36.9)"/><ellipse cx="6.3" cy="55.4" rx="2.5" ry="1.5" fill="#8aa070" transform="rotate(12 6.3 55.4)"/><ellipse cx="18.8" cy="55.6" rx="3.4" ry="2.5" fill="#2a3a2c" transform="rotate(26 18.8 55.6)"/><ellipse cx="35.2" cy="48.9" rx="3.0" ry="1.0" fill="#4e6a46" transform="rotate(-4 35.2 48.9)"/><ellipse cx="56.4" cy="53.7" rx="2.0" ry="1.2" fill="#304232" transform="rotate(-27 56.4 53.7)"/><ellipse cx="21.3" cy="54.5" rx="3.4" ry="1.5" fill="#6a8a5a" transform="rotate(21 21.3 54.5)"/><ellipse cx="21.0" cy="41.2" rx="2.0" ry="2.4" fill="#3e5040" transform="rotate(-9 21.0 41.2)"/><ellipse cx="1.3" cy="41.8" rx="2.7" ry="1.3" fill="#4a564a" transform="rotate(-9 1.3 41.8)"/><ellipse cx="12.8" cy="42.9" rx="3.4" ry="1.8" fill="#4e6a46" transform="rotate(14 12.8 42.9)"/><ellipse cx="33.1" cy="56.6" rx="2.1" ry="0.9" fill="#4e6a46" transform="rotate(34 33.1 56.6)"/><ellipse cx="28.3" cy="42.4" rx="2.6" ry="1.6" fill="#3a4c3a" transform="rotate(-3 28.3 42.4)"/><ellipse cx="52.4" cy="34.6" rx="3.4" ry="1.6" fill="#3e5040" transform="rotate(49 52.4 34.6)"/><ellipse cx="55.7" cy="49.2" rx="3.5" ry="0.8" fill="#304232" transform="rotate(38 55.7 49.2)"/><ellipse cx="52.2" cy="54.1" rx="1.9" ry="2.6" fill="#2a3a2c" transform="rotate(27 52.2 54.1)"/><ellipse cx="-1.2" cy="49.6" rx="1.7" ry="1.3" fill="#8aa070" transform="rotate(-26 -1.2 49.6)"/><ellipse cx="16.5" cy="54.3" rx="2.4" ry="1.3" fill="#4e6a46" transform="rotate(28 16.5 54.3)"/><ellipse cx="31.2" cy="45.0" rx="1.7" ry="2.5" fill="#4e6a46" transform="rotate(2 31.2 45.0)"/><ellipse cx="46.7" cy="41.5" rx="1.4" ry="1.6" fill="#3e5040" transform="rotate(-5 46.7 41.5)"/><ellipse cx="7.4" cy="34.9" rx="3.6" ry="2.6" fill="#304232" transform="rotate(-24 7.4 34.9)"/><ellipse cx="2.5" cy="56.1" rx="1.2" ry="2.0" fill="#2a3a2c" transform="rotate(-19 2.5 56.1)"/><ellipse cx="42.6" cy="54.4" rx="2.3" ry="1.3" fill="#5a7a4e" transform="rotate(-14 42.6 54.4)"/><ellipse cx="38.9" cy="54.8" rx="1.8" ry="0.8" fill="#304232" transform="rotate(9 38.9 54.8)"/><ellipse cx="11.7" cy="36.9" rx="2.9" ry="1.6" fill="#223024" transform="rotate(-41 11.7 36.9)"/><ellipse cx="58.0" cy="42.9" rx="1.3" ry="1.1" fill="#2a3a2c" transform="rotate(-34 58.0 42.9)"/><ellipse cx="5.4" cy="56.0" rx="2.1" ry="1.9" fill="#3a4c3a" transform="rotate(-14 5.4 56.0)"/><ellipse cx="20.1" cy="47.0" rx="1.3" ry="1.7" fill="#2a3a2c" transform="rotate(25 20.1 47.0)"/><ellipse cx="38.5" cy="53.3" rx="3.2" ry="1.2" fill="#223024" transform="rotate(-34 38.5 53.3)"/><ellipse cx="51.5" cy="32.2" rx="3.4" ry="1.1" fill="#3a4c3a" transform="rotate(-46 51.5 32.2)"/><ellipse cx="4.0" cy="37.4" rx="2.3" ry="1.2" fill="#2a3a2c" transform="rotate(-31 4.0 37.4)"/><ellipse cx="5.0" cy="49.9" rx="1.5" ry="0.9" fill="#304232" transform="rotate(-20 5.0 49.9)"/><ellipse cx="12.3" cy="42.5" rx="2.9" ry="1.0" fill="#7a9a68" transform="rotate(35 12.3 42.5)"/><ellipse cx="22.4" cy="54.2" rx="3.3" ry="0.9" fill="#6a8a5a" transform="rotate(-14 22.4 54.2)"/><ellipse cx="12.3" cy="45.9" rx="1.2" ry="2.4" fill="#4a564a" transform="rotate(19 12.3 45.9)"/><ellipse cx="14.1" cy="42.1" rx="3.8" ry="1.5" fill="#223024" transform="rotate(-46 14.1 42.1)"/><ellipse cx="34.8" cy="46.3" rx="3.0" ry="0.8" fill="#2a3a2c" transform="rotate(32 34.8 46.3)"/><ellipse cx="15.9" cy="40.9" rx="1.7" ry="1.4" fill="#4a564a" transform="rotate(26 15.9 40.9)"/><ellipse cx="56.4" cy="44.0" rx="2.2" ry="2.0" fill="#7a9a68" transform="rotate(4 56.4 44.0)"/><ellipse cx="45.5" cy="36.5" rx="3.5" ry="2.6" fill="#5a7a4e" transform="rotate(-17 45.5 36.5)"/><ellipse cx="42.5" cy="50.9" rx="3.5" ry="2.0" fill="#3a4c3a" transform="rotate(-27 42.5 50.9)"/><ellipse cx="4.1" cy="58.0" rx="2.8" ry="1.3" fill="#2a3a2c" transform="rotate(-4 4.1 58.0)"/><ellipse cx="1.5" cy="38.5" rx="1.5" ry="1.5" fill="#3e5040" transform="rotate(20 1.5 38.5)"/><ellipse cx="50.7" cy="48.0" rx="1.5" ry="2.4" fill="#4a564a" transform="rotate(47 50.7 48.0)"/><ellipse cx="58.0" cy="37.3" rx="3.7" ry="0.8" fill="#3e5040" transform="rotate(-38 58.0 37.3)"/><ellipse cx="54.9" cy="41.2" rx="2.2" ry="2.5" fill="#4a564a" transform="rotate(-27 54.9 41.2)"/><ellipse cx="48.0" cy="32.0" rx="1.2" ry="1.2" fill="#223024" transform="rotate(-34 48.0 32.0)"/><ellipse cx="47.0" cy="30.5" rx="2.6" ry="1.6" fill="#223024" transform="rotate(-11 47.0 30.5)"/><ellipse cx="2.0" cy="32.4" rx="3.3" ry="1.5" fill="#4a564a" transform="rotate(36 2.0 32.4)"/><ellipse cx="31.2" cy="43.4" rx="2.0" ry="1.9" fill="#3a4c3a" transform="rotate(-48 31.2 43.4)"/><ellipse cx="38.6" cy="45.5" rx="3.5" ry="1.2" fill="#5a7a4e" transform="rotate(4 38.6 45.5)"/><ellipse cx="2.0" cy="52.7" rx="3.7" ry="1.1" fill="#6a8a5a" transform="rotate(-42 2.0 52.7)"/><ellipse cx="25.4" cy="57.4" rx="2.2" ry="2.1" fill="#4a564a" transform="rotate(18 25.4 57.4)"/><ellipse cx="55.3" cy="30.2" rx="3.4" ry="1.2" fill="#3e5040" transform="rotate(-11 55.3 30.2)"/><ellipse cx="40.8" cy="34.2" rx="1.3" ry="2.3" fill="#4a564a" transform="rotate(-44 40.8 34.2)"/><ellipse cx="49.1" cy="51.9" rx="3.5" ry="1.9" fill="#304232" transform="rotate(32 49.1 51.9)"/><ellipse cx="38.1" cy="57.5" rx="2.9" ry="1.0" fill="#6a8a5a" transform="rotate(34 38.1 57.5)"/><ellipse cx="47.0" cy="32.1" rx="3.0" ry="1.9" fill="#223024" transform="rotate(40 47.0 32.1)"/><ellipse cx="14.1" cy="41.9" rx="1.7" ry="1.8" fill="#3e5040" transform="rotate(-39 14.1 41.9)"/><ellipse cx="58.5" cy="55.8" rx="3.5" ry="1.9" fill="#8aa070" transform="rotate(34 58.5 55.8)"/><ellipse cx="34.6" cy="48.2" rx="2.9" ry="1.9" fill="#223024" transform="rotate(-47 34.6 48.2)"/><ellipse cx="20.7" cy="54.5" rx="2.4" ry="2.0" fill="#8aa070" transform="rotate(47 20.7 54.5)"/><ellipse cx="32.3" cy="50.6" rx="3.2" ry="1.4" fill="#7a9a68" transform="rotate(-44 32.3 50.6)"/><ellipse cx="33.7" cy="48.8" rx="2.2" ry="1.6" fill="#5a7a4e" transform="rotate(34 33.7 48.8)"/><ellipse cx="35.7" cy="44.2" rx="2.2" ry="1.0" fill="#2a3a2c" transform="rotate(47 35.7 44.2)"/><ellipse cx="55.1" cy="56.0" rx="3.2" ry="2.4" fill="#223024" transform="rotate(-8 55.1 56.0)"/><ellipse cx="17.2" cy="47.0" rx="3.4" ry="2.2" fill="#4a564a" transform="rotate(-16 17.2 47.0)"/><ellipse cx="18.6" cy="43.5" rx="1.8" ry="2.1" fill="#4a564a" transform="rotate(16 18.6 43.5)"/><ellipse cx="41.4" cy="32.3" rx="3.6" ry="1.1" fill="#304232" transform="rotate(37 41.4 32.3)"/><ellipse cx="39.8" cy="53.4" rx="1.7" ry="1.8" fill="#6a8a5a" transform="rotate(48 39.8 53.4)"/><ellipse cx="58.0" cy="43.0" rx="1.2" ry="1.1" fill="#4a564a" transform="rotate(14 58.0 43.0)"/><ellipse cx="36.9" cy="44.0" rx="2.3" ry="2.3" fill="#3a4c3a" transform="rotate(-44 36.9 44.0)"/><ellipse cx="36.9" cy="55.6" rx="3.0" ry="2.6" fill="#2a3a2c" transform="rotate(-36 36.9 55.6)"/><ellipse cx="0.3" cy="57.3" rx="2.1" ry="2.2" fill="#3e5040" transform="rotate(38 0.3 57.3)"/><ellipse cx="39.1" cy="50.1" rx="3.1" ry="2.3" fill="#4a564a" transform="rotate(-21 39.1 50.1)"/><ellipse cx="-0.0" cy="35.3" rx="2.4" ry="2.3" fill="#223024" transform="rotate(31 -0.0 35.3)"/><ellipse cx="49.1" cy="38.4" rx="2.9" ry="1.0" fill="#3a4c3a" transform="rotate(19 49.1 38.4)"/><ellipse cx="17.0" cy="32.3" rx="1.7" ry="0.9" fill="#3e5040" transform="rotate(-49 17.0 32.3)"/><ellipse cx="34.6" cy="49.3" rx="2.2" ry="1.7" fill="#304232" transform="rotate(-6 34.6 49.3)"/><ellipse cx="12.0" cy="49.8" rx="3.1" ry="1.0" fill="#8aa070" transform="rotate(-2 12.0 49.8)"/><ellipse cx="4.3" cy="38.4" rx="3.0" ry="1.5" fill="#5a7a4e" transform="rotate(4 4.3 38.4)"/><ellipse cx="47.9" cy="47.6" rx="2.4" ry="2.1" fill="#4a564a" transform="rotate(-45 47.9 47.6)"/><ellipse cx="23.3" cy="41.7" rx="2.0" ry="1.7" fill="#4a564a" transform="rotate(-8 23.3 41.7)"/><ellipse cx="20.4" cy="41.1" rx="2.8" ry="1.0" fill="#3e5040" transform="rotate(-9 20.4 41.1)"/><ellipse cx="0.0" cy="37.3" rx="1.9" ry="2.1" fill="#8aa070" transform="rotate(10 0.0 37.3)"/><ellipse cx="20.0" cy="49.6" rx="3.5" ry="1.9" fill="#304232" transform="rotate(-8 20.0 49.6)"/><ellipse cx="12.7" cy="43.7" rx="1.8" ry="1.4" fill="#304232" transform="rotate(9 12.7 43.7)"/><ellipse cx="27.4" cy="46.0" rx="2.8" ry="1.6" fill="#223024" transform="rotate(42 27.4 46.0)"/><ellipse cx="53.7" cy="30.4" rx="2.2" ry="1.6" fill="#8aa070" transform="rotate(-9 53.7 30.4)"/><ellipse cx="21.3" cy="50.1" rx="2.6" ry="1.2" fill="#4e6a46" transform="rotate(15 21.3 50.1)"/><ellipse cx="25.1" cy="51.0" rx="2.8" ry="2.2" fill="#8aa070" transform="rotate(-20 25.1 51.0)"/><ellipse cx="53.4" cy="40.5" rx="3.1" ry="0.9" fill="#2a3a2c" transform="rotate(-3 53.4 40.5)"/><ellipse cx="26.4" cy="51.4" rx="1.6" ry="1.1" fill="#304232" transform="rotate(-33 26.4 51.4)"/><ellipse cx="56.8" cy="52.0" rx="2.3" ry="1.1" fill="#304232" transform="rotate(28 56.8 52.0)"/><ellipse cx="47.8" cy="36.9" rx="2.7" ry="0.9" fill="#304232" transform="rotate(28 47.8 36.9)"/><ellipse cx="25.3" cy="43.3" rx="3.2" ry="1.9" fill="#3a4c3a" transform="rotate(-45 25.3 43.3)"/><ellipse cx="4.1" cy="32.7" rx="1.8" ry="1.1" fill="#304232" transform="rotate(-38 4.1 32.7)"/><ellipse cx="57.8" cy="43.7" rx="2.8" ry="1.2" fill="#6a8a5a" transform="rotate(-20 57.8 43.7)"/><ellipse cx="39.0" cy="43.1" rx="3.2" ry="1.8" fill="#2a3a2c" transform="rotate(28 39.0 43.1)"/><ellipse cx="27.7" cy="47.8" rx="3.1" ry="1.1" fill="#304232" transform="rotate(-21 27.7 47.8)"/><ellipse cx="16.3" cy="48.9" rx="2.3" ry="1.1" fill="#4a564a" transform="rotate(-25 16.3 48.9)"/><ellipse cx="7.7" cy="35.7" rx="2.5" ry="2.1" fill="#6a8a5a" transform="rotate(39 7.7 35.7)"/><ellipse cx="-1.0" cy="50.7" rx="2.8" ry="2.0" fill="#6a8a5a" transform="rotate(29 -1.0 50.7)"/><ellipse cx="24.3" cy="52.9" rx="3.5" ry="2.2" fill="#7a9a68" transform="rotate(-16 24.3 52.9)"/><ellipse cx="12.4" cy="34.9" rx="1.7" ry="1.1" fill="#2a3a2c" transform="rotate(2 12.4 34.9)"/><ellipse cx="29.3" cy="57.6" rx="1.4" ry="1.6" fill="#223024" transform="rotate(19 29.3 57.6)"/><ellipse cx="16.9" cy="51.4" rx="2.9" ry="1.1" fill="#4e6a46" transform="rotate(45 16.9 51.4)"/><ellipse cx="42.7" cy="53.5" rx="1.5" ry="1.7" fill="#3a4c3a" transform="rotate(-35 42.7 53.5)"/><ellipse cx="12.1" cy="40.5" rx="3.6" ry="1.3" fill="#2a3a2c" transform="rotate(-37 12.1 40.5)"/><ellipse cx="-1.4" cy="50.6" rx="2.2" ry="1.6" fill="#304232" transform="rotate(-20 -1.4 50.6)"/><ellipse cx="8.9" cy="49.3" rx="1.7" ry="1.6" fill="#8aa070" transform="rotate(-19 8.9 49.3)"/><ellipse cx="42.9" cy="40.8" rx="2.2" ry="1.3" fill="#223024" transform="rotate(18 42.9 40.8)"/><ellipse cx="40.8" cy="48.6" rx="1.2" ry="2.5" fill="#304232" transform="rotate(36 40.8 48.6)"/><ellipse cx="34.5" cy="42.8" rx="2.8" ry="1.6" fill="#3a4c3a" transform="rotate(41 34.5 42.8)"/><ellipse cx="-1.8" cy="44.2" rx="2.4" ry="2.0" fill="#7a9a68" transform="rotate(-33 -1.8 44.2)"/><ellipse cx="47.0" cy="33.5" rx="1.7" ry="2.2" fill="#304232" transform="rotate(17 47.0 33.5)"/><ellipse cx="5.6" cy="48.6" rx="3.2" ry="1.8" fill="#8aa070" transform="rotate(3 5.6 48.6)"/><ellipse cx="13.8" cy="52.0" rx="2.9" ry="2.2" fill="#4e6a46" transform="rotate(33 13.8 52.0)"/><ellipse cx="16.4" cy="32.9" rx="2.2" ry="2.5" fill="#4e6a46" transform="rotate(19 16.4 32.9)"/><ellipse cx="43.3" cy="46.6" rx="1.3" ry="1.1" fill="#304232" transform="rotate(-37 43.3 46.6)"/><ellipse cx="29.6" cy="40.7" rx="3.4" ry="2.3" fill="#3a4c3a" transform="rotate(-34 29.6 40.7)"/><ellipse cx="55.8" cy="34.7" rx="3.0" ry="0.9" fill="#3e5040" transform="rotate(11 55.8 34.7)"/><ellipse cx="30.8" cy="48.9" rx="2.9" ry="1.1" fill="#4a564a" transform="rotate(33 30.8 48.9)"/><ellipse cx="10.1" cy="47.8" rx="3.3" ry="0.9" fill="#304232" transform="rotate(30 10.1 47.8)"/><ellipse cx="50.7" cy="36.4" rx="2.4" ry="1.0" fill="#3a4c3a" transform="rotate(-34 50.7 36.4)"/><ellipse cx="13.1" cy="32.8" rx="2.2" ry="1.2" fill="#3e5040" transform="rotate(6 13.1 32.8)"/><ellipse cx="50.1" cy="49.4" rx="1.3" ry="1.9" fill="#2a3a2c" transform="rotate(32 50.1 49.4)"/><ellipse cx="36.0" cy="57.2" rx="3.2" ry="1.4" fill="#6a8a5a" transform="rotate(48 36.0 57.2)"/><ellipse cx="57.0" cy="52.5" rx="2.9" ry="1.2" fill="#3a4c3a" transform="rotate(-25 57.0 52.5)"/><ellipse cx="33.9" cy="45.1" rx="2.5" ry="2.1" fill="#4a564a" transform="rotate(12 33.9 45.1)"/><ellipse cx="20.5" cy="50.5" rx="1.6" ry="1.7" fill="#6a8a5a" transform="rotate(-32 20.5 50.5)"/><ellipse cx="37.0" cy="53.3" rx="2.9" ry="1.5" fill="#304232" transform="rotate(-24 37.0 53.3)"/><ellipse cx="18.0" cy="36.0" rx="1.8" ry="2.4" fill="#6a8a5a" transform="rotate(5 18.0 36.0)"/><ellipse cx="6.3" cy="46.9" rx="2.2" ry="2.1" fill="#2a3a2c" transform="rotate(44 6.3 46.9)"/><ellipse cx="57.2" cy="45.8" rx="3.0" ry="2.4" fill="#4a564a" transform="rotate(-30 57.2 45.8)"/><ellipse cx="13.1" cy="54.3" rx="2.1" ry="1.2" fill="#3e5040" transform="rotate(-42 13.1 54.3)"/><ellipse cx="30.8" cy="45.6" rx="3.2" ry="2.6" fill="#3e5040" transform="rotate(4 30.8 45.6)"/><ellipse cx="8.7" cy="37.2" rx="2.6" ry="1.9" fill="#304232" transform="rotate(47 8.7 37.2)"/><ellipse cx="24.7" cy="46.1" rx="2.4" ry="2.2" fill="#4e6a46" transform="rotate(-48 24.7 46.1)"/><ellipse cx="36.1" cy="52.5" rx="2.2" ry="1.1" fill="#304232" transform="rotate(-8 36.1 52.5)"/><ellipse cx="37.5" cy="55.8" rx="1.8" ry="2.2" fill="#2a3a2c" transform="rotate(-42 37.5 55.8)"/><ellipse cx="28.9" cy="48.6" rx="2.6" ry="2.0" fill="#223024" transform="rotate(44 28.9 48.6)"/><ellipse cx="27.2" cy="57.8" rx="2.8" ry="1.0" fill="#5a7a4e" transform="rotate(34 27.2 57.8)"/><ellipse cx="43.3" cy="53.4" rx="2.9" ry="0.9" fill="#3e5040" transform="rotate(18 43.3 53.4)"/><ellipse cx="12.1" cy="45.9" rx="1.8" ry="1.2" fill="#7a9a68" transform="rotate(48 12.1 45.9)"/><ellipse cx="36.1" cy="41.7" rx="1.8" ry="2.0" fill="#3a4c3a" transform="rotate(-36 36.1 41.7)"/><ellipse cx="12.6" cy="55.7" rx="1.2" ry="0.9" fill="#3a4c3a" transform="rotate(-40 12.6 55.7)"/><rect x="45" y="36" width="2.5" height="14" fill="#9a8a48" opacity="0.8"/></g><rect x="22" y="32" width="1.8" height="24" fill="#2a2a28" opacity="0.8"/><circle cx="28.5" cy="28" r="10.5" fill="none" stroke="rgba(215,215,215,0.42)" stroke-width="4"/><path d="M28.5 17.5 A10.5 10.5 0 0 1 38.6 30.8" fill="none" stroke="rgba(238,238,238,0.92)" stroke-width="4"/></svg><span class="lit" style="letter-spacing:0.121px">LA PLANTA ESPECIAL DOBLE MUJER - Mai...</span><span class="lid">4.41s</span><svg class="wv" width="266" height="16" viewBox="0 0 266 16"><path d="M0.0,6.26 L0.7,6.50 L1.3,6.25 L2.0,6.19 L2.7,6.27 L3.3,6.34 L4.0,6.02 L4.7,5.77 L5.3,5.57 L6.0,5.38 L6.7,5.21 L7.3,5.01 L8.0,4.97 L8.7,4.85 L9.3,4.93 L10.0,4.90 L10.7,4.78 L11.3,4.49 L12.0,4.58 L12.7,4.57 L13.3,4.71 L14.0,4.61 L14.7,4.63 L15.3,4.85 L16.0,4.66 L16.7,4.39 L17.3,3.84 L18.0,3.45 L18.7,3.13 L19.3,2.84 L20.0,2.62 L20.7,2.77 L21.3,3.12 L22.0,3.82 L22.7,4.41 L23.3,5.21 L24.0,5.78 L24.7,5.93 L25.3,6.31 L26.0,6.22 L26.7,6.35 L27.3,6.16 L28.0,5.70 L28.7,5.72 L29.3,5.54 L30.0,5.69 L30.7,5.73 L31.3,5.91 L32.0,5.91 L32.7,5.92 L33.3,5.74 L34.0,5.78 L34.7,5.59 L35.3,5.54 L36.0,5.78 L36.7,5.78 L37.3,6.10 L38.0,6.30 L38.7,6.42 L39.3,6.25 L40.0,6.29 L40.7,6.22 L41.3,6.19 L42.0,5.86 L42.7,5.71 L43.3,5.95 L44.0,5.94 L44.7,5.89 L45.3,5.66 L46.0,5.35 L46.7,5.01 L47.3,5.07 L48.0,5.00 L48.7,5.22 L49.3,5.39 L50.0,5.42 L50.7,5.64 L51.3,6.10 L52.0,6.07 L52.7,6.31 L53.3,6.26 L54.0,5.91 L54.7,6.03 L55.3,5.87 L56.0,5.59 L56.7,5.59 L57.3,5.37 L58.0,5.18 L58.7,5.18 L59.3,5.13 L60.0,5.56 L60.7,5.60 L61.3,5.88 L62.0,5.72 L62.7,5.76 L63.3,5.91 L64.0,5.79 L64.7,5.64 L65.3,5.76 L66.0,5.58 L66.7,5.58 L67.3,5.35 L68.0,4.98 L68.7,5.40 L69.3,5.67 L70.0,6.01 L70.7,6.14 L71.3,6.11 L72.0,5.68 L72.7,5.60 L73.3,5.72 L74.0,6.19 L74.7,6.34 L75.3,6.32 L76.0,6.25 L76.7,6.38 L77.3,6.34 L78.0,6.34 L78.7,6.45 L79.3,6.31 L80.0,6.28 L80.7,6.13 L81.3,5.97 L82.0,5.75 L82.7,5.49 L83.3,5.74 L84.0,5.83 L84.7,5.86 L85.3,5.64 L86.0,5.90 L86.7,6.23 L87.3,6.41 L88.0,6.45 L88.7,6.30 L89.3,6.28 L90.0,6.46 L90.7,6.45 L91.3,6.39 L92.0,6.38 L92.7,6.37 L93.3,6.48 L94.0,6.54 L94.7,6.48 L95.3,6.53 L96.0,6.38 L96.7,6.53 L97.3,6.53 L98.0,6.36 L98.7,6.46 L99.3,6.31 L100.0,6.40 L100.7,6.26 L101.3,6.37 L102.0,6.06 L102.7,5.79 L103.3,5.97 L104.0,5.66 L104.7,5.89 L105.3,5.97 L106.0,6.16 L106.7,6.29 L107.3,6.45 L108.0,6.52 L108.7,6.38 L109.3,6.19 L110.0,6.16 L110.7,5.77 L111.3,6.06 L112.0,5.96 L112.7,6.23 L113.3,6.13 L114.0,5.98 L114.7,6.07 L115.3,6.12 L116.0,6.21 L116.7,6.29 L117.3,6.33 L118.0,6.49 L118.7,6.41 L119.3,6.45 L120.0,6.18 L120.7,5.94 L121.3,5.65 L122.0,5.37 L122.7,5.26 L123.3,5.78 L124.0,6.18 L124.7,6.32 L125.3,6.27 L126.0,6.40 L126.7,6.38 L127.3,6.30 L128.0,6.16 L128.7,6.08 L129.3,5.89 L130.0,6.07 L130.7,6.11 L131.3,6.22 L132.0,5.95 L132.7,5.72 L133.3,5.27 L134.0,4.67 L134.7,4.26 L135.3,4.59 L136.0,4.88 L136.7,5.12 L137.3,5.58 L138.0,6.01 L138.7,6.12 L139.3,6.29 L140.0,6.29 L140.7,6.29 L141.3,6.02 L142.0,5.58 L142.7,5.07 L143.3,4.44 L144.0,4.47 L144.7,5.12 L145.3,5.74 L146.0,6.12 L146.7,6.20 L147.3,6.26 L148.0,6.46 L148.7,6.33 L149.3,6.45 L150.0,6.33 L150.7,6.01 L151.3,5.70 L152.0,5.78 L152.7,5.55 L153.3,5.54 L154.0,5.74 L154.7,5.62 L155.3,5.53 L156.0,5.59 L156.7,5.38 L157.3,5.29 L158.0,5.47 L158.7,5.74 L159.3,6.05 L160.0,6.19 L160.7,6.36 L161.3,6.49 L162.0,6.47 L162.7,6.48 L163.3,6.38 L164.0,6.31 L164.7,6.47 L165.3,6.09 L166.0,5.88 L166.7,6.05 L167.3,6.23 L168.0,6.47 L168.7,6.33 L169.3,6.54 L170.0,6.26 L170.7,6.30 L171.3,6.33 L172.0,6.29 L172.7,5.78 L173.3,5.57 L174.0,6.02 L174.7,6.14 L175.3,6.27 L176.0,6.34 L176.7,6.31 L177.3,6.31 L178.0,6.01 L178.7,5.75 L179.3,5.65 L180.0,5.36 L180.7,5.60 L181.3,6.02 L182.0,6.28 L182.7,6.47 L183.3,6.27 L184.0,6.26 L184.7,6.51 L185.3,6.37 L186.0,6.41 L186.7,6.44 L187.3,6.22 L188.0,5.96 L188.7,5.48 L189.3,5.49 L190.0,5.41 L190.7,5.41 L191.3,5.64 L192.0,5.58 L192.7,5.75 L193.3,5.87 L194.0,6.23 L194.7,6.33 L195.3,6.32 L196.0,6.44 L196.7,6.37 L197.3,6.47 L198.0,6.34 L198.7,6.30 L199.3,6.25 L200.0,6.03 L200.7,5.93 L201.3,5.87 L202.0,5.85 L202.7,5.97 L203.3,6.10 L204.0,6.26 L204.7,6.38 L205.3,6.49 L206.0,6.30 L206.7,6.51 L207.3,6.32 L208.0,6.37 L208.7,6.22 L209.3,6.22 L210.0,6.04 L210.7,6.12 L211.3,5.83 L212.0,5.67 L212.7,5.69 L213.3,5.62 L214.0,5.66 L214.7,5.60 L215.3,5.76 L216.0,5.66 L216.7,5.67 L217.3,5.68 L218.0,5.62 L218.7,5.50 L219.3,5.51 L220.0,5.48 L220.7,5.35 L221.3,5.46 L222.0,5.65 L222.7,5.84 L223.3,5.90 L224.0,5.97 L224.7,6.05 L225.3,6.19 L226.0,6.36 L226.7,6.24 L227.3,6.41 L228.0,6.29 L228.7,6.41 L229.3,6.29 L230.0,6.16 L230.7,6.28 L231.3,6.21 L232.0,5.97 L232.7,5.94 L233.3,6.01 L234.0,6.19 L234.7,6.18 L235.3,6.28 L236.0,6.36 L236.7,6.26 L237.3,6.36 L238.0,6.31 L238.7,6.18 L239.3,6.06 L240.0,6.10 L240.7,6.17 L241.3,6.32 L242.0,6.35 L242.7,6.36 L243.3,6.43 L244.0,6.36 L244.7,6.36 L245.3,6.27 L246.0,6.32 L246.7,6.30 L247.3,6.32 L248.0,6.31 L248.7,6.37 L249.3,6.44 L250.0,6.47 L250.7,6.33 L251.3,6.26 L252.0,6.31 L252.7,6.37 L253.3,6.08 L254.0,6.12 L254.7,6.11 L255.3,6.26 L256.0,6.18 L256.7,6.15 L257.3,6.21 L258.0,6.08 L258.7,5.79 L259.3,5.85 L260.0,5.75 L260.7,5.81 L261.3,6.10 L262.0,6.33 L262.7,6.31 L263.3,6.36 L264.0,6.49 L264.7,6.49 L265.3,6.28 L266.0,6.47 L266.0,9.53 L265.3,9.72 L264.7,9.51 L264.0,9.51 L263.3,9.64 L262.7,9.69 L262.0,9.67 L261.3,9.90 L260.7,10.19 L260.0,10.25 L259.3,10.15 L258.7,10.21 L258.0,9.92 L257.3,9.79 L256.7,9.85 L256.0,9.82 L255.3,9.74 L254.7,9.89 L254.0,9.88 L253.3,9.92 L252.7,9.63 L252.0,9.69 L251.3,9.74 L250.7,9.67 L250.0,9.53 L249.3,9.56 L248.7,9.63 L248.0,9.69 L247.3,9.68 L246.7,9.70 L246.0,9.68 L245.3,9.73 L244.7,9.64 L244.0,9.64 L243.3,9.57 L242.7,9.64 L242.0,9.65 L241.3,9.68 L240.7,9.83 L240.0,9.90 L239.3,9.94 L238.7,9.82 L238.0,9.69 L237.3,9.64 L236.7,9.74 L236.0,9.64 L235.3,9.72 L234.7,9.82 L234.0,9.81 L233.3,9.99 L232.7,10.06 L232.0,10.03 L231.3,9.79 L230.7,9.72 L230.0,9.84 L229.3,9.71 L228.7,9.59 L228.0,9.71 L227.3,9.59 L226.7,9.76 L226.0,9.64 L225.3,9.81 L224.7,9.95 L224.0,10.03 L223.3,10.10 L222.7,10.16 L222.0,10.35 L221.3,10.54 L220.7,10.65 L220.0,10.52 L219.3,10.49 L218.7,10.50 L218.0,10.38 L217.3,10.32 L216.7,10.33 L216.0,10.34 L215.3,10.24 L214.7,10.40 L214.0,10.34 L213.3,10.38 L212.7,10.31 L212.0,10.33 L211.3,10.17 L210.7,9.88 L210.0,9.96 L209.3,9.78 L208.7,9.78 L208.0,9.63 L207.3,9.68 L206.7,9.49 L206.0,9.70 L205.3,9.51 L204.7,9.62 L204.0,9.74 L203.3,9.90 L202.7,10.03 L202.0,10.15 L201.3,10.13 L200.7,10.07 L200.0,9.97 L199.3,9.75 L198.7,9.70 L198.0,9.66 L197.3,9.53 L196.7,9.63 L196.0,9.56 L195.3,9.68 L194.7,9.67 L194.0,9.77 L193.3,10.13 L192.7,10.25 L192.0,10.42 L191.3,10.36 L190.7,10.59 L190.0,10.59 L189.3,10.51 L188.7,10.52 L188.0,10.04 L187.3,9.78 L186.7,9.56 L186.0,9.59 L185.3,9.63 L184.7,9.49 L184.0,9.74 L183.3,9.73 L182.7,9.53 L182.0,9.72 L181.3,9.98 L180.7,10.40 L180.0,10.64 L179.3,10.35 L178.7,10.25 L178.0,9.99 L177.3,9.69 L176.7,9.69 L176.0,9.66 L175.3,9.73 L174.7,9.86 L174.0,9.98 L173.3,10.43 L172.7,10.22 L172.0,9.71 L171.3,9.67 L170.7,9.70 L170.0,9.74 L169.3,9.46 L168.7,9.67 L168.0,9.53 L167.3,9.77 L166.7,9.95 L166.0,10.12 L165.3,9.91 L164.7,9.53 L164.0,9.69 L163.3,9.62 L162.7,9.52 L162.0,9.53 L161.3,9.51 L160.7,9.64 L160.0,9.81 L159.3,9.95 L158.7,10.26 L158.0,10.53 L157.3,10.71 L156.7,10.62 L156.0,10.41 L155.3,10.47 L154.7,10.38 L154.0,10.26 L153.3,10.46 L152.7,10.45 L152.0,10.22 L151.3,10.30 L150.7,9.99 L150.0,9.67 L149.3,9.55 L148.7,9.67 L148.0,9.54 L147.3,9.74 L146.7,9.80 L146.0,9.88 L145.3,10.26 L144.7,10.88 L144.0,11.53 L143.3,11.56 L142.7,10.93 L142.0,10.42 L141.3,9.98 L140.7,9.71 L140.0,9.71 L139.3,9.71 L138.7,9.88 L138.0,9.99 L137.3,10.42 L136.7,10.88 L136.0,11.12 L135.3,11.41 L134.7,11.74 L134.0,11.33 L133.3,10.73 L132.7,10.28 L132.0,10.05 L131.3,9.78 L130.7,9.89 L130.0,9.93 L129.3,10.11 L128.7,9.92 L128.0,9.84 L127.3,9.70 L126.7,9.62 L126.0,9.60 L125.3,9.73 L124.7,9.68 L124.0,9.82 L123.3,10.22 L122.7,10.74 L122.0,10.63 L121.3,10.35 L120.7,10.06 L120.0,9.82 L119.3,9.55 L118.7,9.59 L118.0,9.51 L117.3,9.67 L116.7,9.71 L116.0,9.79 L115.3,9.88 L114.7,9.93 L114.0,10.02 L113.3,9.87 L112.7,9.77 L112.0,10.04 L111.3,9.94 L110.7,10.23 L110.0,9.84 L109.3,9.81 L108.7,9.62 L108.0,9.48 L107.3,9.55 L106.7,9.71 L106.0,9.84 L105.3,10.03 L104.7,10.11 L104.0,10.34 L103.3,10.03 L102.7,10.21 L102.0,9.94 L101.3,9.63 L100.7,9.74 L100.0,9.60 L99.3,9.69 L98.7,9.54 L98.0,9.64 L97.3,9.47 L96.7,9.47 L96.0,9.62 L95.3,9.47 L94.7,9.52 L94.0,9.46 L93.3,9.52 L92.7,9.63 L92.0,9.62 L91.3,9.61 L90.7,9.55 L90.0,9.54 L89.3,9.72 L88.7,9.70 L88.0,9.55 L87.3,9.59 L86.7,9.77 L86.0,10.10 L85.3,10.36 L84.7,10.14 L84.0,10.17 L83.3,10.26 L82.7,10.51 L82.0,10.25 L81.3,10.03 L80.7,9.87 L80.0,9.72 L79.3,9.69 L78.7,9.55 L78.0,9.66 L77.3,9.66 L76.7,9.62 L76.0,9.75 L75.3,9.68 L74.7,9.66 L74.0,9.81 L73.3,10.28 L72.7,10.40 L72.0,10.32 L71.3,9.89 L70.7,9.86 L70.0,9.99 L69.3,10.33 L68.7,10.60 L68.0,11.02 L67.3,10.65 L66.7,10.42 L66.0,10.42 L65.3,10.24 L64.7,10.36 L64.0,10.21 L63.3,10.09 L62.7,10.24 L62.0,10.28 L61.3,10.12 L60.7,10.40 L60.0,10.44 L59.3,10.87 L58.7,10.82 L58.0,10.82 L57.3,10.63 L56.7,10.41 L56.0,10.41 L55.3,10.13 L54.7,9.97 L54.0,10.09 L53.3,9.74 L52.7,9.69 L52.0,9.93 L51.3,9.90 L50.7,10.36 L50.0,10.58 L49.3,10.61 L48.7,10.78 L48.0,11.00 L47.3,10.93 L46.7,10.99 L46.0,10.65 L45.3,10.34 L44.7,10.11 L44.0,10.06 L43.3,10.05 L42.7,10.29 L42.0,10.14 L41.3,9.81 L40.7,9.78 L40.0,9.71 L39.3,9.75 L38.7,9.58 L38.0,9.70 L37.3,9.90 L36.7,10.22 L36.0,10.22 L35.3,10.46 L34.7,10.41 L34.0,10.22 L33.3,10.26 L32.7,10.08 L32.0,10.09 L31.3,10.09 L30.7,10.27 L30.0,10.31 L29.3,10.46 L28.7,10.28 L28.0,10.30 L27.3,9.84 L26.7,9.65 L26.0,9.78 L25.3,9.69 L24.7,10.07 L24.0,10.22 L23.3,10.79 L22.7,11.59 L22.0,12.18 L21.3,12.88 L20.7,13.23 L20.0,13.38 L19.3,13.16 L18.7,12.87 L18.0,12.55 L17.3,12.16 L16.7,11.61 L16.0,11.34 L15.3,11.15 L14.7,11.37 L14.0,11.39 L13.3,11.29 L12.7,11.43 L12.0,11.42 L11.3,11.51 L10.7,11.22 L10.0,11.10 L9.3,11.07 L8.7,11.15 L8.0,11.03 L7.3,10.99 L6.7,10.79 L6.0,10.62 L5.3,10.43 L4.7,10.23 L4.0,9.98 L3.3,9.66 L2.7,9.73 L2.0,9.81 L1.3,9.75 L0.7,9.50 L0.0,9.74Z" fill="#eeeeee"/></svg></div>
<div class="li" style="top:274.10px;height:64.75px;background:#aa00ff"><svg class="th" style="left:4px;top:4.20px;width:57px;height:56px;" width="57" height="56" viewBox="0 0 57 56"><defs><filter id="bl" x="-10%" y="-10%" width="120%" height="120%"><feGaussianBlur stdDeviation="1.6"/></filter><filter id="bl2"><feGaussianBlur stdDeviation="0.5"/></filter><filter id="bl3" x="-5%" y="-5%" width="110%" height="110%"><feGaussianBlur stdDeviation="0.7"/></filter></defs><rect width="57" height="56" fill="#a6a8a5"/><rect x="0" y="0.5" width="57" height="1.3" fill="#7c7f7b"/><rect x="0" y="1.8" width="57" height="1.2" fill="#b8bab7"/><rect x="0" y="6.8" width="57" height="1.3" fill="#7c7f7b"/><rect x="0" y="8.1" width="57" height="1.2" fill="#b8bab7"/><rect x="0" y="13.1" width="57" height="1.3" fill="#7c7f7b"/><rect x="0" y="14.4" width="57" height="1.2" fill="#b8bab7"/><rect x="0" y="19.4" width="57" height="1.3" fill="#7c7f7b"/><rect x="0" y="20.7" width="57" height="1.2" fill="#b8bab7"/><rect x="0" y="25.7" width="57" height="1.3" fill="#7c7f7b"/><rect x="0" y="27.0" width="57" height="1.2" fill="#b8bab7"/><rect x="0" y="32" width="57" height="1.3" fill="#7c7f7b"/><rect x="0" y="33.3" width="57" height="1.2" fill="#b8bab7"/><rect x="0" y="38.3" width="57" height="1.3" fill="#7c7f7b"/><rect x="0" y="39.599999999999994" width="57" height="1.2" fill="#b8bab7"/><rect x="0" y="44.6" width="57" height="1.3" fill="#7c7f7b"/><rect x="0" y="45.9" width="57" height="1.2" fill="#b8bab7"/><rect x="0" y="50.9" width="57" height="1.3" fill="#7c7f7b"/><rect x="0" y="52.199999999999996" width="57" height="1.2" fill="#b8bab7"/><g transform="translate(2.2,7.1) scale(0.9,1.05)" font-family="Liberation Mono" font-weight="bold" font-size="7.8" fill="#f2f4f2" stroke="#f2f4f2" stroke-width="0.35"><text x="0" y="0">ROM</text><text x="0" y="6.1">PE</text><text x="0" y="12.2">MOL</text><text x="0" y="18.3">DES</text></g><rect x="24" y="30" width="17" height="12" fill="#555855" opacity="0.85"/><g filter="url(#bl3)"><path d="M-2 58 L-2 32 Q6 28 14 31 Q20 34 24 40 Q32 38 40 36 Q44 28 50 27 Q56 26 59 28 L59 58Z" fill="#3a4c3a" opacity="0.85"/><ellipse cx="1.2" cy="34.2" rx="2.3" ry="1.0" fill="#2a3a2c" transform="rotate(-2 1.2 34.2)"/><ellipse cx="30.7" cy="46.0" rx="3.4" ry="1.1" fill="#3a4c3a" transform="rotate(39 30.7 46.0)"/><ellipse cx="13.0" cy="30.8" rx="2.3" ry="1.0" fill="#2a3a2c" transform="rotate(-50 13.0 30.8)"/><ellipse cx="17.2" cy="42.7" rx="3.6" ry="1.0" fill="#5a7a4e" transform="rotate(-13 17.2 42.7)"/><ellipse cx="53.6" cy="45.2" rx="1.9" ry="2.3" fill="#3a4c3a" transform="rotate(16 53.6 45.2)"/><ellipse cx="46.9" cy="34.2" rx="2.8" ry="1.7" fill="#3a4c3a" transform="rotate(-49 46.9 34.2)"/><ellipse cx="22.3" cy="53.8" rx="2.5" ry="2.0" fill="#4a564a" transform="rotate(26 22.3 53.8)"/><ellipse cx="52.3" cy="42.6" rx="2.9" ry="1.5" fill="#6a8a5a" transform="rotate(42 52.3 42.6)"/><ellipse cx="48.0" cy="55.4" rx="2.9" ry="1.1" fill="#223024" transform="rotate(-41 48.0 55.4)"/><ellipse cx="42.1" cy="39.6" rx="3.2" ry="0.8" fill="#4a564a" transform="rotate(-4 42.1 39.6)"/><ellipse cx="-1.2" cy="41.2" rx="1.8" ry="1.8" fill="#2a3a2c" transform="rotate(31 -1.2 41.2)"/><ellipse cx="15.5" cy="44.1" rx="3.2" ry="2.1" fill="#304232" transform="rotate(-31 15.5 44.1)"/><ellipse cx="58.5" cy="41.3" rx="3.2" ry="0.9" fill="#6a8a5a" transform="rotate(-48 58.5 41.3)"/><ellipse cx="13.6" cy="40.3" rx="1.9" ry="1.6" fill="#2a3a2c" transform="rotate(29 13.6 40.3)"/><ellipse cx="1.8" cy="41.1" rx="1.4" ry="1.6" fill="#8aa070" transform="rotate(-2 1.8 41.1)"/><ellipse cx="2.5" cy="50.0" rx="2.3" ry="2.6" fill="#4e6a46" transform="rotate(-46 2.5 50.0)"/><ellipse cx="43.8" cy="38.0" rx="2.1" ry="2.0" fill="#223024" transform="rotate(-42 43.8 38.0)"/><ellipse cx="41.8" cy="48.4" rx="2.2" ry="1.2" fill="#5a7a4e" transform="rotate(47 41.8 48.4)"/><ellipse cx="29.6" cy="49.7" rx="1.6" ry="2.0" fill="#223024" transform="rotate(-3 29.6 49.7)"/><ellipse cx="5.7" cy="57.3" rx="2.5" ry="1.9" fill="#223024" transform="rotate(5 5.7 57.3)"/><ellipse cx="1.8" cy="35.4" rx="2.9" ry="1.4" fill="#4a564a" transform="rotate(42 1.8 35.4)"/><ellipse cx="57.8" cy="48.1" rx="2.0" ry="2.2" fill="#8aa070" transform="rotate(-9 57.8 48.1)"/><ellipse cx="51.2" cy="43.4" rx="1.6" ry="1.7" fill="#3a4c3a" transform="rotate(-22 51.2 43.4)"/><ellipse cx="52.5" cy="38.2" rx="1.9" ry="1.7" fill="#7a9a68" transform="rotate(-17 52.5 38.2)"/><ellipse cx="22.3" cy="56.9" rx="1.4" ry="1.2" fill="#5a7a4e" transform="rotate(-26 22.3 56.9)"/><ellipse cx="14.4" cy="36.9" rx="2.8" ry="1.0" fill="#304232" transform="rotate(18 14.4 36.9)"/><ellipse cx="6.3" cy="55.4" rx="2.5" ry="1.5" fill="#8aa070" transform="rotate(12 6.3 55.4)"/><ellipse cx="18.8" cy="55.6" rx="3.4" ry="2.5" fill="#2a3a2c" transform="rotate(26 18.8 55.6)"/><ellipse cx="35.2" cy="48.9" rx="3.0" ry="1.0" fill="#4e6a46" transform="rotate(-4 35.2 48.9)"/><ellipse cx="56.4" cy="53.7" rx="2.0" ry="1.2" fill="#304232" transform="rotate(-27 56.4 53.7)"/><ellipse cx="21.3" cy="54.5" rx="3.4" ry="1.5" fill="#6a8a5a" transform="rotate(21 21.3 54.5)"/><ellipse cx="21.0" cy="41.2" rx="2.0" ry="2.4" fill="#3e5040" transform="rotate(-9 21.0 41.2)"/><ellipse cx="1.3" cy="41.8" rx="2.7" ry="1.3" fill="#4a564a" transform="rotate(-9 1.3 41.8)"/><ellipse cx="12.8" cy="42.9" rx="3.4" ry="1.8" fill="#4e6a46" transform="rotate(14 12.8 42.9)"/><ellipse cx="33.1" cy="56.6" rx="2.1" ry="0.9" fill="#4e6a46" transform="rotate(34 33.1 56.6)"/><ellipse cx="28.3" cy="42.4" rx="2.6" ry="1.6" fill="#3a4c3a" transform="rotate(-3 28.3 42.4)"/><ellipse cx="52.4" cy="34.6" rx="3.4" ry="1.6" fill="#3e5040" transform="rotate(49 52.4 34.6)"/><ellipse cx="55.7" cy="49.2" rx="3.5" ry="0.8" fill="#304232" transform="rotate(38 55.7 49.2)"/><ellipse cx="52.2" cy="54.1" rx="1.9" ry="2.6" fill="#2a3a2c" transform="rotate(27 52.2 54.1)"/><ellipse cx="-1.2" cy="49.6" rx="1.7" ry="1.3" fill="#8aa070" transform="rotate(-26 -1.2 49.6)"/><ellipse cx="16.5" cy="54.3" rx="2.4" ry="1.3" fill="#4e6a46" transform="rotate(28 16.5 54.3)"/><ellipse cx="31.2" cy="45.0" rx="1.7" ry="2.5" fill="#4e6a46" transform="rotate(2 31.2 45.0)"/><ellipse cx="46.7" cy="41.5" rx="1.4" ry="1.6" fill="#3e5040" transform="rotate(-5 46.7 41.5)"/><ellipse cx="7.4" cy="34.9" rx="3.6" ry="2.6" fill="#304232" transform="rotate(-24 7.4 34.9)"/><ellipse cx="2.5" cy="56.1" rx="1.2" ry="2.0" fill="#2a3a2c" transform="rotate(-19 2.5 56.1)"/><ellipse cx="42.6" cy="54.4" rx="2.3" ry="1.3" fill="#5a7a4e" transform="rotate(-14 42.6 54.4)"/><ellipse cx="38.9" cy="54.8" rx="1.8" ry="0.8" fill="#304232" transform="rotate(9 38.9 54.8)"/><ellipse cx="11.7" cy="36.9" rx="2.9" ry="1.6" fill="#223024" transform="rotate(-41 11.7 36.9)"/><ellipse cx="58.0" cy="42.9" rx="1.3" ry="1.1" fill="#2a3a2c" transform="rotate(-34 58.0 42.9)"/><ellipse cx="5.4" cy="56.0" rx="2.1" ry="1.9" fill="#3a4c3a" transform="rotate(-14 5.4 56.0)"/><ellipse cx="20.1" cy="47.0" rx="1.3" ry="1.7" fill="#2a3a2c" transform="rotate(25 20.1 47.0)"/><ellipse cx="38.5" cy="53.3" rx="3.2" ry="1.2" fill="#223024" transform="rotate(-34 38.5 53.3)"/><ellipse cx="51.5" cy="32.2" rx="3.4" ry="1.1" fill="#3a4c3a" transform="rotate(-46 51.5 32.2)"/><ellipse cx="4.0" cy="37.4" rx="2.3" ry="1.2" fill="#2a3a2c" transform="rotate(-31 4.0 37.4)"/><ellipse cx="5.0" cy="49.9" rx="1.5" ry="0.9" fill="#304232" transform="rotate(-20 5.0 49.9)"/><ellipse cx="12.3" cy="42.5" rx="2.9" ry="1.0" fill="#7a9a68" transform="rotate(35 12.3 42.5)"/><ellipse cx="22.4" cy="54.2" rx="3.3" ry="0.9" fill="#6a8a5a" transform="rotate(-14 22.4 54.2)"/><ellipse cx="12.3" cy="45.9" rx="1.2" ry="2.4" fill="#4a564a" transform="rotate(19 12.3 45.9)"/><ellipse cx="14.1" cy="42.1" rx="3.8" ry="1.5" fill="#223024" transform="rotate(-46 14.1 42.1)"/><ellipse cx="34.8" cy="46.3" rx="3.0" ry="0.8" fill="#2a3a2c" transform="rotate(32 34.8 46.3)"/><ellipse cx="15.9" cy="40.9" rx="1.7" ry="1.4" fill="#4a564a" transform="rotate(26 15.9 40.9)"/><ellipse cx="56.4" cy="44.0" rx="2.2" ry="2.0" fill="#7a9a68" transform="rotate(4 56.4 44.0)"/><ellipse cx="45.5" cy="36.5" rx="3.5" ry="2.6" fill="#5a7a4e" transform="rotate(-17 45.5 36.5)"/><ellipse cx="42.5" cy="50.9" rx="3.5" ry="2.0" fill="#3a4c3a" transform="rotate(-27 42.5 50.9)"/><ellipse cx="4.1" cy="58.0" rx="2.8" ry="1.3" fill="#2a3a2c" transform="rotate(-4 4.1 58.0)"/><ellipse cx="1.5" cy="38.5" rx="1.5" ry="1.5" fill="#3e5040" transform="rotate(20 1.5 38.5)"/><ellipse cx="50.7" cy="48.0" rx="1.5" ry="2.4" fill="#4a564a" transform="rotate(47 50.7 48.0)"/><ellipse cx="58.0" cy="37.3" rx="3.7" ry="0.8" fill="#3e5040" transform="rotate(-38 58.0 37.3)"/><ellipse cx="54.9" cy="41.2" rx="2.2" ry="2.5" fill="#4a564a" transform="rotate(-27 54.9 41.2)"/><ellipse cx="48.0" cy="32.0" rx="1.2" ry="1.2" fill="#223024" transform="rotate(-34 48.0 32.0)"/><ellipse cx="47.0" cy="30.5" rx="2.6" ry="1.6" fill="#223024" transform="rotate(-11 47.0 30.5)"/><ellipse cx="2.0" cy="32.4" rx="3.3" ry="1.5" fill="#4a564a" transform="rotate(36 2.0 32.4)"/><ellipse cx="31.2" cy="43.4" rx="2.0" ry="1.9" fill="#3a4c3a" transform="rotate(-48 31.2 43.4)"/><ellipse cx="38.6" cy="45.5" rx="3.5" ry="1.2" fill="#5a7a4e" transform="rotate(4 38.6 45.5)"/><ellipse cx="2.0" cy="52.7" rx="3.7" ry="1.1" fill="#6a8a5a" transform="rotate(-42 2.0 52.7)"/><ellipse cx="25.4" cy="57.4" rx="2.2" ry="2.1" fill="#4a564a" transform="rotate(18 25.4 57.4)"/><ellipse cx="55.3" cy="30.2" rx="3.4" ry="1.2" fill="#3e5040" transform="rotate(-11 55.3 30.2)"/><ellipse cx="40.8" cy="34.2" rx="1.3" ry="2.3" fill="#4a564a" transform="rotate(-44 40.8 34.2)"/><ellipse cx="49.1" cy="51.9" rx="3.5" ry="1.9" fill="#304232" transform="rotate(32 49.1 51.9)"/><ellipse cx="38.1" cy="57.5" rx="2.9" ry="1.0" fill="#6a8a5a" transform="rotate(34 38.1 57.5)"/><ellipse cx="47.0" cy="32.1" rx="3.0" ry="1.9" fill="#223024" transform="rotate(40 47.0 32.1)"/><ellipse cx="14.1" cy="41.9" rx="1.7" ry="1.8" fill="#3e5040" transform="rotate(-39 14.1 41.9)"/><ellipse cx="58.5" cy="55.8" rx="3.5" ry="1.9" fill="#8aa070" transform="rotate(34 58.5 55.8)"/><ellipse cx="34.6" cy="48.2" rx="2.9" ry="1.9" fill="#223024" transform="rotate(-47 34.6 48.2)"/><ellipse cx="20.7" cy="54.5" rx="2.4" ry="2.0" fill="#8aa070" transform="rotate(47 20.7 54.5)"/><ellipse cx="32.3" cy="50.6" rx="3.2" ry="1.4" fill="#7a9a68" transform="rotate(-44 32.3 50.6)"/><ellipse cx="33.7" cy="48.8" rx="2.2" ry="1.6" fill="#5a7a4e" transform="rotate(34 33.7 48.8)"/><ellipse cx="35.7" cy="44.2" rx="2.2" ry="1.0" fill="#2a3a2c" transform="rotate(47 35.7 44.2)"/><ellipse cx="55.1" cy="56.0" rx="3.2" ry="2.4" fill="#223024" transform="rotate(-8 55.1 56.0)"/><ellipse cx="17.2" cy="47.0" rx="3.4" ry="2.2" fill="#4a564a" transform="rotate(-16 17.2 47.0)"/><ellipse cx="18.6" cy="43.5" rx="1.8" ry="2.1" fill="#4a564a" transform="rotate(16 18.6 43.5)"/><ellipse cx="41.4" cy="32.3" rx="3.6" ry="1.1" fill="#304232" transform="rotate(37 41.4 32.3)"/><ellipse cx="39.8" cy="53.4" rx="1.7" ry="1.8" fill="#6a8a5a" transform="rotate(48 39.8 53.4)"/><ellipse cx="58.0" cy="43.0" rx="1.2" ry="1.1" fill="#4a564a" transform="rotate(14 58.0 43.0)"/><ellipse cx="36.9" cy="44.0" rx="2.3" ry="2.3" fill="#3a4c3a" transform="rotate(-44 36.9 44.0)"/><ellipse cx="36.9" cy="55.6" rx="3.0" ry="2.6" fill="#2a3a2c" transform="rotate(-36 36.9 55.6)"/><ellipse cx="0.3" cy="57.3" rx="2.1" ry="2.2" fill="#3e5040" transform="rotate(38 0.3 57.3)"/><ellipse cx="39.1" cy="50.1" rx="3.1" ry="2.3" fill="#4a564a" transform="rotate(-21 39.1 50.1)"/><ellipse cx="-0.0" cy="35.3" rx="2.4" ry="2.3" fill="#223024" transform="rotate(31 -0.0 35.3)"/><ellipse cx="49.1" cy="38.4" rx="2.9" ry="1.0" fill="#3a4c3a" transform="rotate(19 49.1 38.4)"/><ellipse cx="17.0" cy="32.3" rx="1.7" ry="0.9" fill="#3e5040" transform="rotate(-49 17.0 32.3)"/><ellipse cx="34.6" cy="49.3" rx="2.2" ry="1.7" fill="#304232" transform="rotate(-6 34.6 49.3)"/><ellipse cx="12.0" cy="49.8" rx="3.1" ry="1.0" fill="#8aa070" transform="rotate(-2 12.0 49.8)"/><ellipse cx="4.3" cy="38.4" rx="3.0" ry="1.5" fill="#5a7a4e" transform="rotate(4 4.3 38.4)"/><ellipse cx="47.9" cy="47.6" rx="2.4" ry="2.1" fill="#4a564a" transform="rotate(-45 47.9 47.6)"/><ellipse cx="23.3" cy="41.7" rx="2.0" ry="1.7" fill="#4a564a" transform="rotate(-8 23.3 41.7)"/><ellipse cx="20.4" cy="41.1" rx="2.8" ry="1.0" fill="#3e5040" transform="rotate(-9 20.4 41.1)"/><ellipse cx="0.0" cy="37.3" rx="1.9" ry="2.1" fill="#8aa070" transform="rotate(10 0.0 37.3)"/><ellipse cx="20.0" cy="49.6" rx="3.5" ry="1.9" fill="#304232" transform="rotate(-8 20.0 49.6)"/><ellipse cx="12.7" cy="43.7" rx="1.8" ry="1.4" fill="#304232" transform="rotate(9 12.7 43.7)"/><ellipse cx="27.4" cy="46.0" rx="2.8" ry="1.6" fill="#223024" transform="rotate(42 27.4 46.0)"/><ellipse cx="53.7" cy="30.4" rx="2.2" ry="1.6" fill="#8aa070" transform="rotate(-9 53.7 30.4)"/><ellipse cx="21.3" cy="50.1" rx="2.6" ry="1.2" fill="#4e6a46" transform="rotate(15 21.3 50.1)"/><ellipse cx="25.1" cy="51.0" rx="2.8" ry="2.2" fill="#8aa070" transform="rotate(-20 25.1 51.0)"/><ellipse cx="53.4" cy="40.5" rx="3.1" ry="0.9" fill="#2a3a2c" transform="rotate(-3 53.4 40.5)"/><ellipse cx="26.4" cy="51.4" rx="1.6" ry="1.1" fill="#304232" transform="rotate(-33 26.4 51.4)"/><ellipse cx="56.8" cy="52.0" rx="2.3" ry="1.1" fill="#304232" transform="rotate(28 56.8 52.0)"/><ellipse cx="47.8" cy="36.9" rx="2.7" ry="0.9" fill="#304232" transform="rotate(28 47.8 36.9)"/><ellipse cx="25.3" cy="43.3" rx="3.2" ry="1.9" fill="#3a4c3a" transform="rotate(-45 25.3 43.3)"/><ellipse cx="4.1" cy="32.7" rx="1.8" ry="1.1" fill="#304232" transform="rotate(-38 4.1 32.7)"/><ellipse cx="57.8" cy="43.7" rx="2.8" ry="1.2" fill="#6a8a5a" transform="rotate(-20 57.8 43.7)"/><ellipse cx="39.0" cy="43.1" rx="3.2" ry="1.8" fill="#2a3a2c" transform="rotate(28 39.0 43.1)"/><ellipse cx="27.7" cy="47.8" rx="3.1" ry="1.1" fill="#304232" transform="rotate(-21 27.7 47.8)"/><ellipse cx="16.3" cy="48.9" rx="2.3" ry="1.1" fill="#4a564a" transform="rotate(-25 16.3 48.9)"/><ellipse cx="7.7" cy="35.7" rx="2.5" ry="2.1" fill="#6a8a5a" transform="rotate(39 7.7 35.7)"/><ellipse cx="-1.0" cy="50.7" rx="2.8" ry="2.0" fill="#6a8a5a" transform="rotate(29 -1.0 50.7)"/><ellipse cx="24.3" cy="52.9" rx="3.5" ry="2.2" fill="#7a9a68" transform="rotate(-16 24.3 52.9)"/><ellipse cx="12.4" cy="34.9" rx="1.7" ry="1.1" fill="#2a3a2c" transform="rotate(2 12.4 34.9)"/><ellipse cx="29.3" cy="57.6" rx="1.4" ry="1.6" fill="#223024" transform="rotate(19 29.3 57.6)"/><ellipse cx="16.9" cy="51.4" rx="2.9" ry="1.1" fill="#4e6a46" transform="rotate(45 16.9 51.4)"/><ellipse cx="42.7" cy="53.5" rx="1.5" ry="1.7" fill="#3a4c3a" transform="rotate(-35 42.7 53.5)"/><ellipse cx="12.1" cy="40.5" rx="3.6" ry="1.3" fill="#2a3a2c" transform="rotate(-37 12.1 40.5)"/><ellipse cx="-1.4" cy="50.6" rx="2.2" ry="1.6" fill="#304232" transform="rotate(-20 -1.4 50.6)"/><ellipse cx="8.9" cy="49.3" rx="1.7" ry="1.6" fill="#8aa070" transform="rotate(-19 8.9 49.3)"/><ellipse cx="42.9" cy="40.8" rx="2.2" ry="1.3" fill="#223024" transform="rotate(18 42.9 40.8)"/><ellipse cx="40.8" cy="48.6" rx="1.2" ry="2.5" fill="#304232" transform="rotate(36 40.8 48.6)"/><ellipse cx="34.5" cy="42.8" rx="2.8" ry="1.6" fill="#3a4c3a" transform="rotate(41 34.5 42.8)"/><ellipse cx="-1.8" cy="44.2" rx="2.4" ry="2.0" fill="#7a9a68" transform="rotate(-33 -1.8 44.2)"/><ellipse cx="47.0" cy="33.5" rx="1.7" ry="2.2" fill="#304232" transform="rotate(17 47.0 33.5)"/><ellipse cx="5.6" cy="48.6" rx="3.2" ry="1.8" fill="#8aa070" transform="rotate(3 5.6 48.6)"/><ellipse cx="13.8" cy="52.0" rx="2.9" ry="2.2" fill="#4e6a46" transform="rotate(33 13.8 52.0)"/><ellipse cx="16.4" cy="32.9" rx="2.2" ry="2.5" fill="#4e6a46" transform="rotate(19 16.4 32.9)"/><ellipse cx="43.3" cy="46.6" rx="1.3" ry="1.1" fill="#304232" transform="rotate(-37 43.3 46.6)"/><ellipse cx="29.6" cy="40.7" rx="3.4" ry="2.3" fill="#3a4c3a" transform="rotate(-34 29.6 40.7)"/><ellipse cx="55.8" cy="34.7" rx="3.0" ry="0.9" fill="#3e5040" transform="rotate(11 55.8 34.7)"/><ellipse cx="30.8" cy="48.9" rx="2.9" ry="1.1" fill="#4a564a" transform="rotate(33 30.8 48.9)"/><ellipse cx="10.1" cy="47.8" rx="3.3" ry="0.9" fill="#304232" transform="rotate(30 10.1 47.8)"/><ellipse cx="50.7" cy="36.4" rx="2.4" ry="1.0" fill="#3a4c3a" transform="rotate(-34 50.7 36.4)"/><ellipse cx="13.1" cy="32.8" rx="2.2" ry="1.2" fill="#3e5040" transform="rotate(6 13.1 32.8)"/><ellipse cx="50.1" cy="49.4" rx="1.3" ry="1.9" fill="#2a3a2c" transform="rotate(32 50.1 49.4)"/><ellipse cx="36.0" cy="57.2" rx="3.2" ry="1.4" fill="#6a8a5a" transform="rotate(48 36.0 57.2)"/><ellipse cx="57.0" cy="52.5" rx="2.9" ry="1.2" fill="#3a4c3a" transform="rotate(-25 57.0 52.5)"/><ellipse cx="33.9" cy="45.1" rx="2.5" ry="2.1" fill="#4a564a" transform="rotate(12 33.9 45.1)"/><ellipse cx="20.5" cy="50.5" rx="1.6" ry="1.7" fill="#6a8a5a" transform="rotate(-32 20.5 50.5)"/><ellipse cx="37.0" cy="53.3" rx="2.9" ry="1.5" fill="#304232" transform="rotate(-24 37.0 53.3)"/><ellipse cx="18.0" cy="36.0" rx="1.8" ry="2.4" fill="#6a8a5a" transform="rotate(5 18.0 36.0)"/><ellipse cx="6.3" cy="46.9" rx="2.2" ry="2.1" fill="#2a3a2c" transform="rotate(44 6.3 46.9)"/><ellipse cx="57.2" cy="45.8" rx="3.0" ry="2.4" fill="#4a564a" transform="rotate(-30 57.2 45.8)"/><ellipse cx="13.1" cy="54.3" rx="2.1" ry="1.2" fill="#3e5040" transform="rotate(-42 13.1 54.3)"/><ellipse cx="30.8" cy="45.6" rx="3.2" ry="2.6" fill="#3e5040" transform="rotate(4 30.8 45.6)"/><ellipse cx="8.7" cy="37.2" rx="2.6" ry="1.9" fill="#304232" transform="rotate(47 8.7 37.2)"/><ellipse cx="24.7" cy="46.1" rx="2.4" ry="2.2" fill="#4e6a46" transform="rotate(-48 24.7 46.1)"/><ellipse cx="36.1" cy="52.5" rx="2.2" ry="1.1" fill="#304232" transform="rotate(-8 36.1 52.5)"/><ellipse cx="37.5" cy="55.8" rx="1.8" ry="2.2" fill="#2a3a2c" transform="rotate(-42 37.5 55.8)"/><ellipse cx="28.9" cy="48.6" rx="2.6" ry="2.0" fill="#223024" transform="rotate(44 28.9 48.6)"/><ellipse cx="27.2" cy="57.8" rx="2.8" ry="1.0" fill="#5a7a4e" transform="rotate(34 27.2 57.8)"/><ellipse cx="43.3" cy="53.4" rx="2.9" ry="0.9" fill="#3e5040" transform="rotate(18 43.3 53.4)"/><ellipse cx="12.1" cy="45.9" rx="1.8" ry="1.2" fill="#7a9a68" transform="rotate(48 12.1 45.9)"/><ellipse cx="36.1" cy="41.7" rx="1.8" ry="2.0" fill="#3a4c3a" transform="rotate(-36 36.1 41.7)"/><ellipse cx="12.6" cy="55.7" rx="1.2" ry="0.9" fill="#3a4c3a" transform="rotate(-40 12.6 55.7)"/><rect x="45" y="36" width="2.5" height="14" fill="#9a8a48" opacity="0.8"/></g><rect x="22" y="32" width="1.8" height="24" fill="#2a2a28" opacity="0.8"/><circle cx="28.5" cy="28" r="10.5" fill="none" stroke="rgba(215,215,215,0.42)" stroke-width="4"/><path d="M28.5 17.5 A10.5 10.5 0 0 1 38.6 30.8" fill="none" stroke="rgba(238,238,238,0.92)" stroke-width="4"/></svg><span class="lit" style="letter-spacing:0.283px">SU HIJO Y LAS PLANTAS - Maite 2.mp3</span><span class="lid">27.7s</span><svg class="wv" width="266" height="16" viewBox="0 0 266 16"><path d="M0.0,6.51 L0.7,6.53 L1.3,6.53 L2.0,6.47 L2.7,6.44 L3.3,6.19 L4.0,6.11 L4.7,5.83 L5.3,5.69 L6.0,5.50 L6.7,5.58 L7.3,5.53 L8.0,5.82 L8.7,6.03 L9.3,6.24 L10.0,6.28 L10.7,6.33 L11.3,6.47 L12.0,6.42 L12.7,6.38 L13.3,6.50 L14.0,6.34 L14.7,5.95 L15.3,5.79 L16.0,5.61 L16.7,5.97 L17.3,6.18 L18.0,6.11 L18.7,5.88 L19.3,5.62 L20.0,5.32 L20.7,5.22 L21.3,5.23 L22.0,5.17 L22.7,5.42 L23.3,5.43 L24.0,5.68 L24.7,6.00 L25.3,6.26 L26.0,6.33 L26.7,6.36 L27.3,6.53 L28.0,6.42 L28.7,6.39 L29.3,6.50 L30.0,6.52 L30.7,6.31 L31.3,6.44 L32.0,6.39 L32.7,6.27 L33.3,6.37 L34.0,6.46 L34.7,6.25 L35.3,6.44 L36.0,6.54 L36.7,6.34 L37.3,6.51 L38.0,6.41 L38.7,6.14 L39.3,5.98 L40.0,5.91 L40.7,5.53 L41.3,5.34 L42.0,5.20 L42.7,5.28 L43.3,5.33 L44.0,5.70 L44.7,5.69 L45.3,5.53 L46.0,5.45 L46.7,6.12 L47.3,6.22 L48.0,6.48 L48.7,6.38 L49.3,6.43 L50.0,6.41 L50.7,6.32 L51.3,6.43 L52.0,6.51 L52.7,6.50 L53.3,6.46 L54.0,6.09 L54.7,5.88 L55.3,5.48 L56.0,5.43 L56.7,5.77 L57.3,5.89 L58.0,6.10 L58.7,6.14 L59.3,5.92 L60.0,5.58 L60.7,5.60 L61.3,5.91 L62.0,6.37 L62.7,6.38 L63.3,6.41 L64.0,6.26 L64.7,6.31 L65.3,6.27 L66.0,6.30 L66.7,6.46 L67.3,6.48 L68.0,6.40 L68.7,6.47 L69.3,6.42 L70.0,6.35 L70.7,6.27 L71.3,6.37 L72.0,6.30 L72.7,6.52 L73.3,6.44 L74.0,6.25 L74.7,6.51 L75.3,6.42 L76.0,6.53 L76.7,6.52 L77.3,6.28 L78.0,6.24 L78.7,6.32 L79.3,6.40 L80.0,6.19 L80.7,5.98 L81.3,5.56 L82.0,5.33 L82.7,5.30 L83.3,5.31 L84.0,5.56 L84.7,5.52 L85.3,5.27 L86.0,5.08 L86.7,5.32 L87.3,5.59 L88.0,5.88 L88.7,6.13 L89.3,5.91 L90.0,5.99 L90.7,5.86 L91.3,5.80 L92.0,5.28 L92.7,4.84 L93.3,4.32 L94.0,3.90 L94.7,3.35 L95.3,3.14 L96.0,2.78 L96.7,2.72 L97.3,3.22 L98.0,3.64 L98.7,4.25 L99.3,4.74 L100.0,4.87 L100.7,4.86 L101.3,5.02 L102.0,5.32 L102.7,5.43 L103.3,5.70 L104.0,5.48 L104.7,5.52 L105.3,5.80 L106.0,6.09 L106.7,6.43 L107.3,6.35 L108.0,6.42 L108.7,6.33 L109.3,6.19 L110.0,6.22 L110.7,6.29 L111.3,6.05 L112.0,5.91 L112.7,5.80 L113.3,5.81 L114.0,5.71 L114.7,5.95 L115.3,5.76 L116.0,5.97 L116.7,6.12 L117.3,5.98 L118.0,5.79 L118.7,6.02 L119.3,5.99 L120.0,6.02 L120.7,5.97 L121.3,5.45 L122.0,5.15 L122.7,5.08 L123.3,4.97 L124.0,5.40 L124.7,5.50 L125.3,5.71 L126.0,5.90 L126.7,5.94 L127.3,6.09 L128.0,6.25 L128.7,6.02 L129.3,6.21 L130.0,6.07 L130.7,5.69 L131.3,5.26 L132.0,4.88 L132.7,4.34 L133.3,3.88 L134.0,3.35 L134.7,3.12 L135.3,3.03 L136.0,3.11 L136.7,3.62 L137.3,4.03 L138.0,4.11 L138.7,4.51 L139.3,4.75 L140.0,5.34 L140.7,5.94 L141.3,6.12 L142.0,6.20 L142.7,6.23 L143.3,6.48 L144.0,6.49 L144.7,6.43 L145.3,6.41 L146.0,6.46 L146.7,6.54 L147.3,6.36 L148.0,6.11 L148.7,6.05 L149.3,5.95 L150.0,6.22 L150.7,6.37 L151.3,6.28 L152.0,6.46 L152.7,6.36 L153.3,6.40 L154.0,6.37 L154.7,6.18 L155.3,6.26 L156.0,5.83 L156.7,5.96 L157.3,6.05 L158.0,6.20 L158.7,6.32 L159.3,6.39 L160.0,6.10 L160.7,6.03 L161.3,5.64 L162.0,5.76 L162.7,5.74 L163.3,5.47 L164.0,5.55 L164.7,5.97 L165.3,6.35 L166.0,6.47 L166.7,6.41 L167.3,6.48 L168.0,6.47 L168.7,6.26 L169.3,6.52 L170.0,6.30 L170.7,6.44 L171.3,6.44 L172.0,6.45 L172.7,6.53 L173.3,6.41 L174.0,6.50 L174.7,6.40 L175.3,6.40 L176.0,6.14 L176.7,5.99 L177.3,5.99 L178.0,5.85 L178.7,5.79 L179.3,6.10 L180.0,6.32 L180.7,6.39 L181.3,6.46 L182.0,6.34 L182.7,6.44 L183.3,6.44 L184.0,6.31 L184.7,6.48 L185.3,6.31 L186.0,6.36 L186.7,6.43 L187.3,6.30 L188.0,6.43 L188.7,6.23 L189.3,6.12 L190.0,6.12 L190.7,5.92 L191.3,5.69 L192.0,5.59 L192.7,5.57 L193.3,5.74 L194.0,5.92 L194.7,6.02 L195.3,5.86 L196.0,5.91 L196.7,5.60 L197.3,5.35 L198.0,5.16 L198.7,4.83 L199.3,4.55 L200.0,3.99 L200.7,3.96 L201.3,3.90 L202.0,3.93 L202.7,4.40 L203.3,4.47 L204.0,5.04 L204.7,5.42 L205.3,5.66 L206.0,5.95 L206.7,6.01 L207.3,6.15 L208.0,6.26 L208.7,6.39 L209.3,6.38 L210.0,6.48 L210.7,6.30 L211.3,6.43 L212.0,6.46 L212.7,6.36 L213.3,6.50 L214.0,6.46 L214.7,6.27 L215.3,6.52 L216.0,6.51 L216.7,6.49 L217.3,6.47 L218.0,6.42 L218.7,6.47 L219.3,6.45 L220.0,6.48 L220.7,6.48 L221.3,6.37 L222.0,6.45 L222.7,6.44 L223.3,6.32 L224.0,6.53 L224.7,6.51 L225.3,6.29 L226.0,6.42 L226.7,6.32 L227.3,6.51 L228.0,6.39 L228.7,6.29 L229.3,6.43 L230.0,6.27 L230.7,6.24 L231.3,6.20 L232.0,5.91 L232.7,6.04 L233.3,6.05 L234.0,6.09 L234.7,6.22 L235.3,6.00 L236.0,5.90 L236.7,5.67 L237.3,5.48 L238.0,5.23 L238.7,5.14 L239.3,5.04 L240.0,4.93 L240.7,4.71 L241.3,4.60 L242.0,4.91 L242.7,5.23 L243.3,5.32 L244.0,5.80 L244.7,5.62 L245.3,5.68 L246.0,5.60 L246.7,5.92 L247.3,6.00 L248.0,6.01 L248.7,6.39 L249.3,6.44 L250.0,6.41 L250.7,6.46 L251.3,6.43 L252.0,6.18 L252.7,6.13 L253.3,5.36 L254.0,4.84 L254.7,4.96 L255.3,5.21 L256.0,5.86 L256.7,6.05 L257.3,6.21 L258.0,6.44 L258.7,6.38 L259.3,6.53 L260.0,6.49 L260.7,6.27 L261.3,6.27 L262.0,6.27 L262.7,6.04 L263.3,5.68 L264.0,5.51 L264.7,5.01 L265.3,4.96 L266.0,5.26 L266.0,10.74 L265.3,11.04 L264.7,10.99 L264.0,10.49 L263.3,10.32 L262.7,9.96 L262.0,9.73 L261.3,9.73 L260.7,9.73 L260.0,9.51 L259.3,9.47 L258.7,9.62 L258.0,9.56 L257.3,9.79 L256.7,9.95 L256.0,10.14 L255.3,10.79 L254.7,11.04 L254.0,11.16 L253.3,10.64 L252.7,9.87 L252.0,9.82 L251.3,9.57 L250.7,9.54 L250.0,9.59 L249.3,9.56 L248.7,9.61 L248.0,9.99 L247.3,10.00 L246.7,10.08 L246.0,10.40 L245.3,10.32 L244.7,10.38 L244.0,10.20 L243.3,10.68 L242.7,10.77 L242.0,11.09 L241.3,11.40 L240.7,11.29 L240.0,11.07 L239.3,10.96 L238.7,10.86 L238.0,10.77 L237.3,10.52 L236.7,10.33 L236.0,10.10 L235.3,10.00 L234.7,9.78 L234.0,9.91 L233.3,9.95 L232.7,9.96 L232.0,10.09 L231.3,9.80 L230.7,9.76 L230.0,9.73 L229.3,9.57 L228.7,9.71 L228.0,9.61 L227.3,9.49 L226.7,9.68 L226.0,9.58 L225.3,9.71 L224.7,9.49 L224.0,9.47 L223.3,9.68 L222.7,9.56 L222.0,9.55 L221.3,9.63 L220.7,9.52 L220.0,9.52 L219.3,9.55 L218.7,9.53 L218.0,9.58 L217.3,9.53 L216.7,9.51 L216.0,9.49 L215.3,9.48 L214.7,9.73 L214.0,9.54 L213.3,9.50 L212.7,9.64 L212.0,9.54 L211.3,9.57 L210.7,9.70 L210.0,9.52 L209.3,9.62 L208.7,9.61 L208.0,9.74 L207.3,9.85 L206.7,9.99 L206.0,10.05 L205.3,10.34 L204.7,10.58 L204.0,10.96 L203.3,11.53 L202.7,11.60 L202.0,12.07 L201.3,12.10 L200.7,12.04 L200.0,12.01 L199.3,11.45 L198.7,11.17 L198.0,10.84 L197.3,10.65 L196.7,10.40 L196.0,10.09 L195.3,10.14 L194.7,9.98 L194.0,10.08 L193.3,10.26 L192.7,10.43 L192.0,10.41 L191.3,10.31 L190.7,10.08 L190.0,9.88 L189.3,9.88 L188.7,9.77 L188.0,9.57 L187.3,9.70 L186.7,9.57 L186.0,9.64 L185.3,9.69 L184.7,9.52 L184.0,9.69 L183.3,9.56 L182.7,9.56 L182.0,9.66 L181.3,9.54 L180.7,9.61 L180.0,9.68 L179.3,9.90 L178.7,10.21 L178.0,10.15 L177.3,10.01 L176.7,10.01 L176.0,9.86 L175.3,9.60 L174.7,9.60 L174.0,9.50 L173.3,9.59 L172.7,9.47 L172.0,9.55 L171.3,9.56 L170.7,9.56 L170.0,9.70 L169.3,9.48 L168.7,9.74 L168.0,9.53 L167.3,9.52 L166.7,9.59 L166.0,9.53 L165.3,9.65 L164.7,10.03 L164.0,10.45 L163.3,10.53 L162.7,10.26 L162.0,10.24 L161.3,10.36 L160.7,9.97 L160.0,9.90 L159.3,9.61 L158.7,9.68 L158.0,9.80 L157.3,9.95 L156.7,10.04 L156.0,10.17 L155.3,9.74 L154.7,9.82 L154.0,9.63 L153.3,9.60 L152.7,9.64 L152.0,9.54 L151.3,9.72 L150.7,9.63 L150.0,9.78 L149.3,10.05 L148.7,9.95 L148.0,9.89 L147.3,9.64 L146.7,9.46 L146.0,9.54 L145.3,9.59 L144.7,9.57 L144.0,9.51 L143.3,9.52 L142.7,9.77 L142.0,9.80 L141.3,9.88 L140.7,10.06 L140.0,10.66 L139.3,11.25 L138.7,11.49 L138.0,11.89 L137.3,11.97 L136.7,12.38 L136.0,12.89 L135.3,12.97 L134.7,12.88 L134.0,12.65 L133.3,12.12 L132.7,11.66 L132.0,11.12 L131.3,10.74 L130.7,10.31 L130.0,9.93 L129.3,9.79 L128.7,9.98 L128.0,9.75 L127.3,9.91 L126.7,10.06 L126.0,10.10 L125.3,10.29 L124.7,10.50 L124.0,10.60 L123.3,11.03 L122.7,10.92 L122.0,10.85 L121.3,10.55 L120.7,10.03 L120.0,9.98 L119.3,10.01 L118.7,9.98 L118.0,10.21 L117.3,10.02 L116.7,9.88 L116.0,10.03 L115.3,10.24 L114.7,10.05 L114.0,10.29 L113.3,10.19 L112.7,10.20 L112.0,10.09 L111.3,9.95 L110.7,9.71 L110.0,9.78 L109.3,9.81 L108.7,9.67 L108.0,9.58 L107.3,9.65 L106.7,9.57 L106.0,9.91 L105.3,10.20 L104.7,10.48 L104.0,10.52 L103.3,10.30 L102.7,10.57 L102.0,10.68 L101.3,10.98 L100.7,11.14 L100.0,11.13 L99.3,11.26 L98.7,11.75 L98.0,12.36 L97.3,12.78 L96.7,13.28 L96.0,13.22 L95.3,12.86 L94.7,12.65 L94.0,12.10 L93.3,11.68 L92.7,11.16 L92.0,10.72 L91.3,10.20 L90.7,10.14 L90.0,10.01 L89.3,10.09 L88.7,9.87 L88.0,10.12 L87.3,10.41 L86.7,10.68 L86.0,10.92 L85.3,10.73 L84.7,10.48 L84.0,10.44 L83.3,10.69 L82.7,10.70 L82.0,10.67 L81.3,10.44 L80.7,10.02 L80.0,9.81 L79.3,9.60 L78.7,9.68 L78.0,9.76 L77.3,9.72 L76.7,9.48 L76.0,9.47 L75.3,9.58 L74.7,9.49 L74.0,9.75 L73.3,9.56 L72.7,9.48 L72.0,9.70 L71.3,9.63 L70.7,9.73 L70.0,9.65 L69.3,9.58 L68.7,9.53 L68.0,9.60 L67.3,9.52 L66.7,9.54 L66.0,9.70 L65.3,9.73 L64.7,9.69 L64.0,9.74 L63.3,9.59 L62.7,9.62 L62.0,9.63 L61.3,10.09 L60.7,10.40 L60.0,10.42 L59.3,10.08 L58.7,9.86 L58.0,9.90 L57.3,10.11 L56.7,10.23 L56.0,10.57 L55.3,10.52 L54.7,10.12 L54.0,9.91 L53.3,9.54 L52.7,9.50 L52.0,9.49 L51.3,9.57 L50.7,9.68 L50.0,9.59 L49.3,9.57 L48.7,9.62 L48.0,9.52 L47.3,9.78 L46.7,9.88 L46.0,10.55 L45.3,10.47 L44.7,10.31 L44.0,10.30 L43.3,10.67 L42.7,10.72 L42.0,10.80 L41.3,10.66 L40.7,10.47 L40.0,10.09 L39.3,10.02 L38.7,9.86 L38.0,9.59 L37.3,9.49 L36.7,9.66 L36.0,9.46 L35.3,9.56 L34.7,9.75 L34.0,9.54 L33.3,9.63 L32.7,9.73 L32.0,9.61 L31.3,9.56 L30.7,9.69 L30.0,9.48 L29.3,9.50 L28.7,9.61 L28.0,9.58 L27.3,9.47 L26.7,9.64 L26.0,9.67 L25.3,9.74 L24.7,10.00 L24.0,10.32 L23.3,10.57 L22.7,10.58 L22.0,10.83 L21.3,10.77 L20.7,10.78 L20.0,10.68 L19.3,10.38 L18.7,10.12 L18.0,9.89 L17.3,9.82 L16.7,10.03 L16.0,10.39 L15.3,10.21 L14.7,10.05 L14.0,9.66 L13.3,9.50 L12.7,9.62 L12.0,9.58 L11.3,9.53 L10.7,9.67 L10.0,9.72 L9.3,9.76 L8.7,9.97 L8.0,10.18 L7.3,10.47 L6.7,10.42 L6.0,10.50 L5.3,10.31 L4.7,10.17 L4.0,9.89 L3.3,9.81 L2.7,9.56 L2.0,9.53 L1.3,9.47 L0.7,9.47 L0.0,9.49Z" fill="#eeeeee"/></svg></div>
<div class="li" style="top:338.85px;height:64.75px;background:#aa00ff"><svg class="th" style="left:4px;top:4.20px;width:57px;height:56px;" width="57" height="56" viewBox="0 0 57 56"><defs><filter id="bl" x="-10%" y="-10%" width="120%" height="120%"><feGaussianBlur stdDeviation="1.6"/></filter><filter id="bl2"><feGaussianBlur stdDeviation="0.5"/></filter><filter id="bl3" x="-5%" y="-5%" width="110%" height="110%"><feGaussianBlur stdDeviation="0.7"/></filter></defs><rect width="57" height="56" fill="#a6a8a5"/><rect x="0" y="0.5" width="57" height="1.3" fill="#7c7f7b"/><rect x="0" y="1.8" width="57" height="1.2" fill="#b8bab7"/><rect x="0" y="6.8" width="57" height="1.3" fill="#7c7f7b"/><rect x="0" y="8.1" width="57" height="1.2" fill="#b8bab7"/><rect x="0" y="13.1" width="57" height="1.3" fill="#7c7f7b"/><rect x="0" y="14.4" width="57" height="1.2" fill="#b8bab7"/><rect x="0" y="19.4" width="57" height="1.3" fill="#7c7f7b"/><rect x="0" y="20.7" width="57" height="1.2" fill="#b8bab7"/><rect x="0" y="25.7" width="57" height="1.3" fill="#7c7f7b"/><rect x="0" y="27.0" width="57" height="1.2" fill="#b8bab7"/><rect x="0" y="32" width="57" height="1.3" fill="#7c7f7b"/><rect x="0" y="33.3" width="57" height="1.2" fill="#b8bab7"/><rect x="0" y="38.3" width="57" height="1.3" fill="#7c7f7b"/><rect x="0" y="39.599999999999994" width="57" height="1.2" fill="#b8bab7"/><rect x="0" y="44.6" width="57" height="1.3" fill="#7c7f7b"/><rect x="0" y="45.9" width="57" height="1.2" fill="#b8bab7"/><rect x="0" y="50.9" width="57" height="1.3" fill="#7c7f7b"/><rect x="0" y="52.199999999999996" width="57" height="1.2" fill="#b8bab7"/><g transform="translate(2.2,7.1) scale(0.9,1.05)" font-family="Liberation Mono" font-weight="bold" font-size="7.8" fill="#f2f4f2" stroke="#f2f4f2" stroke-width="0.35"><text x="0" y="0">ROM</text><text x="0" y="6.1">PE</text><text x="0" y="12.2">MOL</text><text x="0" y="18.3">DES</text></g><rect x="24" y="30" width="17" height="12" fill="#555855" opacity="0.85"/><g filter="url(#bl3)"><path d="M-2 58 L-2 32 Q6 28 14 31 Q20 34 24 40 Q32 38 40 36 Q44 28 50 27 Q56 26 59 28 L59 58Z" fill="#3a4c3a" opacity="0.85"/><ellipse cx="1.2" cy="34.2" rx="2.3" ry="1.0" fill="#2a3a2c" transform="rotate(-2 1.2 34.2)"/><ellipse cx="30.7" cy="46.0" rx="3.4" ry="1.1" fill="#3a4c3a" transform="rotate(39 30.7 46.0)"/><ellipse cx="13.0" cy="30.8" rx="2.3" ry="1.0" fill="#2a3a2c" transform="rotate(-50 13.0 30.8)"/><ellipse cx="17.2" cy="42.7" rx="3.6" ry="1.0" fill="#5a7a4e" transform="rotate(-13 17.2 42.7)"/><ellipse cx="53.6" cy="45.2" rx="1.9" ry="2.3" fill="#3a4c3a" transform="rotate(16 53.6 45.2)"/><ellipse cx="46.9" cy="34.2" rx="2.8" ry="1.7" fill="#3a4c3a" transform="rotate(-49 46.9 34.2)"/><ellipse cx="22.3" cy="53.8" rx="2.5" ry="2.0" fill="#4a564a" transform="rotate(26 22.3 53.8)"/><ellipse cx="52.3" cy="42.6" rx="2.9" ry="1.5" fill="#6a8a5a" transform="rotate(42 52.3 42.6)"/><ellipse cx="48.0" cy="55.4" rx="2.9" ry="1.1" fill="#223024" transform="rotate(-41 48.0 55.4)"/><ellipse cx="42.1" cy="39.6" rx="3.2" ry="0.8" fill="#4a564a" transform="rotate(-4 42.1 39.6)"/><ellipse cx="-1.2" cy="41.2" rx="1.8" ry="1.8" fill="#2a3a2c" transform="rotate(31 -1.2 41.2)"/><ellipse cx="15.5" cy="44.1" rx="3.2" ry="2.1" fill="#304232" transform="rotate(-31 15.5 44.1)"/><ellipse cx="58.5" cy="41.3" rx="3.2" ry="0.9" fill="#6a8a5a" transform="rotate(-48 58.5 41.3)"/><ellipse cx="13.6" cy="40.3" rx="1.9" ry="1.6" fill="#2a3a2c" transform="rotate(29 13.6 40.3)"/><ellipse cx="1.8" cy="41.1" rx="1.4" ry="1.6" fill="#8aa070" transform="rotate(-2 1.8 41.1)"/><ellipse cx="2.5" cy="50.0" rx="2.3" ry="2.6" fill="#4e6a46" transform="rotate(-46 2.5 50.0)"/><ellipse cx="43.8" cy="38.0" rx="2.1" ry="2.0" fill="#223024" transform="rotate(-42 43.8 38.0)"/><ellipse cx="41.8" cy="48.4" rx="2.2" ry="1.2" fill="#5a7a4e" transform="rotate(47 41.8 48.4)"/><ellipse cx="29.6" cy="49.7" rx="1.6" ry="2.0" fill="#223024" transform="rotate(-3 29.6 49.7)"/><ellipse cx="5.7" cy="57.3" rx="2.5" ry="1.9" fill="#223024" transform="rotate(5 5.7 57.3)"/><ellipse cx="1.8" cy="35.4" rx="2.9" ry="1.4" fill="#4a564a" transform="rotate(42 1.8 35.4)"/><ellipse cx="57.8" cy="48.1" rx="2.0" ry="2.2" fill="#8aa070" transform="rotate(-9 57.8 48.1)"/><ellipse cx="51.2" cy="43.4" rx="1.6" ry="1.7" fill="#3a4c3a" transform="rotate(-22 51.2 43.4)"/><ellipse cx="52.5" cy="38.2" rx="1.9" ry="1.7" fill="#7a9a68" transform="rotate(-17 52.5 38.2)"/><ellipse cx="22.3" cy="56.9" rx="1.4" ry="1.2" fill="#5a7a4e" transform="rotate(-26 22.3 56.9)"/><ellipse cx="14.4" cy="36.9" rx="2.8" ry="1.0" fill="#304232" transform="rotate(18 14.4 36.9)"/><ellipse cx="6.3" cy="55.4" rx="2.5" ry="1.5" fill="#8aa070" transform="rotate(12 6.3 55.4)"/><ellipse cx="18.8" cy="55.6" rx="3.4" ry="2.5" fill="#2a3a2c" transform="rotate(26 18.8 55.6)"/><ellipse cx="35.2" cy="48.9" rx="3.0" ry="1.0" fill="#4e6a46" transform="rotate(-4 35.2 48.9)"/><ellipse cx="56.4" cy="53.7" rx="2.0" ry="1.2" fill="#304232" transform="rotate(-27 56.4 53.7)"/><ellipse cx="21.3" cy="54.5" rx="3.4" ry="1.5" fill="#6a8a5a" transform="rotate(21 21.3 54.5)"/><ellipse cx="21.0" cy="41.2" rx="2.0" ry="2.4" fill="#3e5040" transform="rotate(-9 21.0 41.2)"/><ellipse cx="1.3" cy="41.8" rx="2.7" ry="1.3" fill="#4a564a" transform="rotate(-9 1.3 41.8)"/><ellipse cx="12.8" cy="42.9" rx="3.4" ry="1.8" fill="#4e6a46" transform="rotate(14 12.8 42.9)"/><ellipse cx="33.1" cy="56.6" rx="2.1" ry="0.9" fill="#4e6a46" transform="rotate(34 33.1 56.6)"/><ellipse cx="28.3" cy="42.4" rx="2.6" ry="1.6" fill="#3a4c3a" transform="rotate(-3 28.3 42.4)"/><ellipse cx="52.4" cy="34.6" rx="3.4" ry="1.6" fill="#3e5040" transform="rotate(49 52.4 34.6)"/><ellipse cx="55.7" cy="49.2" rx="3.5" ry="0.8" fill="#304232" transform="rotate(38 55.7 49.2)"/><ellipse cx="52.2" cy="54.1" rx="1.9" ry="2.6" fill="#2a3a2c" transform="rotate(27 52.2 54.1)"/><ellipse cx="-1.2" cy="49.6" rx="1.7" ry="1.3" fill="#8aa070" transform="rotate(-26 -1.2 49.6)"/><ellipse cx="16.5" cy="54.3" rx="2.4" ry="1.3" fill="#4e6a46" transform="rotate(28 16.5 54.3)"/><ellipse cx="31.2" cy="45.0" rx="1.7" ry="2.5" fill="#4e6a46" transform="rotate(2 31.2 45.0)"/><ellipse cx="46.7" cy="41.5" rx="1.4" ry="1.6" fill="#3e5040" transform="rotate(-5 46.7 41.5)"/><ellipse cx="7.4" cy="34.9" rx="3.6" ry="2.6" fill="#304232" transform="rotate(-24 7.4 34.9)"/><ellipse cx="2.5" cy="56.1" rx="1.2" ry="2.0" fill="#2a3a2c" transform="rotate(-19 2.5 56.1)"/><ellipse cx="42.6" cy="54.4" rx="2.3" ry="1.3" fill="#5a7a4e" transform="rotate(-14 42.6 54.4)"/><ellipse cx="38.9" cy="54.8" rx="1.8" ry="0.8" fill="#304232" transform="rotate(9 38.9 54.8)"/><ellipse cx="11.7" cy="36.9" rx="2.9" ry="1.6" fill="#223024" transform="rotate(-41 11.7 36.9)"/><ellipse cx="58.0" cy="42.9" rx="1.3" ry="1.1" fill="#2a3a2c" transform="rotate(-34 58.0 42.9)"/><ellipse cx="5.4" cy="56.0" rx="2.1" ry="1.9" fill="#3a4c3a" transform="rotate(-14 5.4 56.0)"/><ellipse cx="20.1" cy="47.0" rx="1.3" ry="1.7" fill="#2a3a2c" transform="rotate(25 20.1 47.0)"/><ellipse cx="38.5" cy="53.3" rx="3.2" ry="1.2" fill="#223024" transform="rotate(-34 38.5 53.3)"/><ellipse cx="51.5" cy="32.2" rx="3.4" ry="1.1" fill="#3a4c3a" transform="rotate(-46 51.5 32.2)"/><ellipse cx="4.0" cy="37.4" rx="2.3" ry="1.2" fill="#2a3a2c" transform="rotate(-31 4.0 37.4)"/><ellipse cx="5.0" cy="49.9" rx="1.5" ry="0.9" fill="#304232" transform="rotate(-20 5.0 49.9)"/><ellipse cx="12.3" cy="42.5" rx="2.9" ry="1.0" fill="#7a9a68" transform="rotate(35 12.3 42.5)"/><ellipse cx="22.4" cy="54.2" rx="3.3" ry="0.9" fill="#6a8a5a" transform="rotate(-14 22.4 54.2)"/><ellipse cx="12.3" cy="45.9" rx="1.2" ry="2.4" fill="#4a564a" transform="rotate(19 12.3 45.9)"/><ellipse cx="14.1" cy="42.1" rx="3.8" ry="1.5" fill="#223024" transform="rotate(-46 14.1 42.1)"/><ellipse cx="34.8" cy="46.3" rx="3.0" ry="0.8" fill="#2a3a2c" transform="rotate(32 34.8 46.3)"/><ellipse cx="15.9" cy="40.9" rx="1.7" ry="1.4" fill="#4a564a" transform="rotate(26 15.9 40.9)"/><ellipse cx="56.4" cy="44.0" rx="2.2" ry="2.0" fill="#7a9a68" transform="rotate(4 56.4 44.0)"/><ellipse cx="45.5" cy="36.5" rx="3.5" ry="2.6" fill="#5a7a4e" transform="rotate(-17 45.5 36.5)"/><ellipse cx="42.5" cy="50.9" rx="3.5" ry="2.0" fill="#3a4c3a" transform="rotate(-27 42.5 50.9)"/><ellipse cx="4.1" cy="58.0" rx="2.8" ry="1.3" fill="#2a3a2c" transform="rotate(-4 4.1 58.0)"/><ellipse cx="1.5" cy="38.5" rx="1.5" ry="1.5" fill="#3e5040" transform="rotate(20 1.5 38.5)"/><ellipse cx="50.7" cy="48.0" rx="1.5" ry="2.4" fill="#4a564a" transform="rotate(47 50.7 48.0)"/><ellipse cx="58.0" cy="37.3" rx="3.7" ry="0.8" fill="#3e5040" transform="rotate(-38 58.0 37.3)"/><ellipse cx="54.9" cy="41.2" rx="2.2" ry="2.5" fill="#4a564a" transform="rotate(-27 54.9 41.2)"/><ellipse cx="48.0" cy="32.0" rx="1.2" ry="1.2" fill="#223024" transform="rotate(-34 48.0 32.0)"/><ellipse cx="47.0" cy="30.5" rx="2.6" ry="1.6" fill="#223024" transform="rotate(-11 47.0 30.5)"/><ellipse cx="2.0" cy="32.4" rx="3.3" ry="1.5" fill="#4a564a" transform="rotate(36 2.0 32.4)"/><ellipse cx="31.2" cy="43.4" rx="2.0" ry="1.9" fill="#3a4c3a" transform="rotate(-48 31.2 43.4)"/><ellipse cx="38.6" cy="45.5" rx="3.5" ry="1.2" fill="#5a7a4e" transform="rotate(4 38.6 45.5)"/><ellipse cx="2.0" cy="52.7" rx="3.7" ry="1.1" fill="#6a8a5a" transform="rotate(-42 2.0 52.7)"/><ellipse cx="25.4" cy="57.4" rx="2.2" ry="2.1" fill="#4a564a" transform="rotate(18 25.4 57.4)"/><ellipse cx="55.3" cy="30.2" rx="3.4" ry="1.2" fill="#3e5040" transform="rotate(-11 55.3 30.2)"/><ellipse cx="40.8" cy="34.2" rx="1.3" ry="2.3" fill="#4a564a" transform="rotate(-44 40.8 34.2)"/><ellipse cx="49.1" cy="51.9" rx="3.5" ry="1.9" fill="#304232" transform="rotate(32 49.1 51.9)"/><ellipse cx="38.1" cy="57.5" rx="2.9" ry="1.0" fill="#6a8a5a" transform="rotate(34 38.1 57.5)"/><ellipse cx="47.0" cy="32.1" rx="3.0" ry="1.9" fill="#223024" transform="rotate(40 47.0 32.1)"/><ellipse cx="14.1" cy="41.9" rx="1.7" ry="1.8" fill="#3e5040" transform="rotate(-39 14.1 41.9)"/><ellipse cx="58.5" cy="55.8" rx="3.5" ry="1.9" fill="#8aa070" transform="rotate(34 58.5 55.8)"/><ellipse cx="34.6" cy="48.2" rx="2.9" ry="1.9" fill="#223024" transform="rotate(-47 34.6 48.2)"/><ellipse cx="20.7" cy="54.5" rx="2.4" ry="2.0" fill="#8aa070" transform="rotate(47 20.7 54.5)"/><ellipse cx="32.3" cy="50.6" rx="3.2" ry="1.4" fill="#7a9a68" transform="rotate(-44 32.3 50.6)"/><ellipse cx="33.7" cy="48.8" rx="2.2" ry="1.6" fill="#5a7a4e" transform="rotate(34 33.7 48.8)"/><ellipse cx="35.7" cy="44.2" rx="2.2" ry="1.0" fill="#2a3a2c" transform="rotate(47 35.7 44.2)"/><ellipse cx="55.1" cy="56.0" rx="3.2" ry="2.4" fill="#223024" transform="rotate(-8 55.1 56.0)"/><ellipse cx="17.2" cy="47.0" rx="3.4" ry="2.2" fill="#4a564a" transform="rotate(-16 17.2 47.0)"/><ellipse cx="18.6" cy="43.5" rx="1.8" ry="2.1" fill="#4a564a" transform="rotate(16 18.6 43.5)"/><ellipse cx="41.4" cy="32.3" rx="3.6" ry="1.1" fill="#304232" transform="rotate(37 41.4 32.3)"/><ellipse cx="39.8" cy="53.4" rx="1.7" ry="1.8" fill="#6a8a5a" transform="rotate(48 39.8 53.4)"/><ellipse cx="58.0" cy="43.0" rx="1.2" ry="1.1" fill="#4a564a" transform="rotate(14 58.0 43.0)"/><ellipse cx="36.9" cy="44.0" rx="2.3" ry="2.3" fill="#3a4c3a" transform="rotate(-44 36.9 44.0)"/><ellipse cx="36.9" cy="55.6" rx="3.0" ry="2.6" fill="#2a3a2c" transform="rotate(-36 36.9 55.6)"/><ellipse cx="0.3" cy="57.3" rx="2.1" ry="2.2" fill="#3e5040" transform="rotate(38 0.3 57.3)"/><ellipse cx="39.1" cy="50.1" rx="3.1" ry="2.3" fill="#4a564a" transform="rotate(-21 39.1 50.1)"/><ellipse cx="-0.0" cy="35.3" rx="2.4" ry="2.3" fill="#223024" transform="rotate(31 -0.0 35.3)"/><ellipse cx="49.1" cy="38.4" rx="2.9" ry="1.0" fill="#3a4c3a" transform="rotate(19 49.1 38.4)"/><ellipse cx="17.0" cy="32.3" rx="1.7" ry="0.9" fill="#3e5040" transform="rotate(-49 17.0 32.3)"/><ellipse cx="34.6" cy="49.3" rx="2.2" ry="1.7" fill="#304232" transform="rotate(-6 34.6 49.3)"/><ellipse cx="12.0" cy="49.8" rx="3.1" ry="1.0" fill="#8aa070" transform="rotate(-2 12.0 49.8)"/><ellipse cx="4.3" cy="38.4" rx="3.0" ry="1.5" fill="#5a7a4e" transform="rotate(4 4.3 38.4)"/><ellipse cx="47.9" cy="47.6" rx="2.4" ry="2.1" fill="#4a564a" transform="rotate(-45 47.9 47.6)"/><ellipse cx="23.3" cy="41.7" rx="2.0" ry="1.7" fill="#4a564a" transform="rotate(-8 23.3 41.7)"/><ellipse cx="20.4" cy="41.1" rx="2.8" ry="1.0" fill="#3e5040" transform="rotate(-9 20.4 41.1)"/><ellipse cx="0.0" cy="37.3" rx="1.9" ry="2.1" fill="#8aa070" transform="rotate(10 0.0 37.3)"/><ellipse cx="20.0" cy="49.6" rx="3.5" ry="1.9" fill="#304232" transform="rotate(-8 20.0 49.6)"/><ellipse cx="12.7" cy="43.7" rx="1.8" ry="1.4" fill="#304232" transform="rotate(9 12.7 43.7)"/><ellipse cx="27.4" cy="46.0" rx="2.8" ry="1.6" fill="#223024" transform="rotate(42 27.4 46.0)"/><ellipse cx="53.7" cy="30.4" rx="2.2" ry="1.6" fill="#8aa070" transform="rotate(-9 53.7 30.4)"/><ellipse cx="21.3" cy="50.1" rx="2.6" ry="1.2" fill="#4e6a46" transform="rotate(15 21.3 50.1)"/><ellipse cx="25.1" cy="51.0" rx="2.8" ry="2.2" fill="#8aa070" transform="rotate(-20 25.1 51.0)"/><ellipse cx="53.4" cy="40.5" rx="3.1" ry="0.9" fill="#2a3a2c" transform="rotate(-3 53.4 40.5)"/><ellipse cx="26.4" cy="51.4" rx="1.6" ry="1.1" fill="#304232" transform="rotate(-33 26.4 51.4)"/><ellipse cx="56.8" cy="52.0" rx="2.3" ry="1.1" fill="#304232" transform="rotate(28 56.8 52.0)"/><ellipse cx="47.8" cy="36.9" rx="2.7" ry="0.9" fill="#304232" transform="rotate(28 47.8 36.9)"/><ellipse cx="25.3" cy="43.3" rx="3.2" ry="1.9" fill="#3a4c3a" transform="rotate(-45 25.3 43.3)"/><ellipse cx="4.1" cy="32.7" rx="1.8" ry="1.1" fill="#304232" transform="rotate(-38 4.1 32.7)"/><ellipse cx="57.8" cy="43.7" rx="2.8" ry="1.2" fill="#6a8a5a" transform="rotate(-20 57.8 43.7)"/><ellipse cx="39.0" cy="43.1" rx="3.2" ry="1.8" fill="#2a3a2c" transform="rotate(28 39.0 43.1)"/><ellipse cx="27.7" cy="47.8" rx="3.1" ry="1.1" fill="#304232" transform="rotate(-21 27.7 47.8)"/><ellipse cx="16.3" cy="48.9" rx="2.3" ry="1.1" fill="#4a564a" transform="rotate(-25 16.3 48.9)"/><ellipse cx="7.7" cy="35.7" rx="2.5" ry="2.1" fill="#6a8a5a" transform="rotate(39 7.7 35.7)"/><ellipse cx="-1.0" cy="50.7" rx="2.8" ry="2.0" fill="#6a8a5a" transform="rotate(29 -1.0 50.7)"/><ellipse cx="24.3" cy="52.9" rx="3.5" ry="2.2" fill="#7a9a68" transform="rotate(-16 24.3 52.9)"/><ellipse cx="12.4" cy="34.9" rx="1.7" ry="1.1" fill="#2a3a2c" transform="rotate(2 12.4 34.9)"/><ellipse cx="29.3" cy="57.6" rx="1.4" ry="1.6" fill="#223024" transform="rotate(19 29.3 57.6)"/><ellipse cx="16.9" cy="51.4" rx="2.9" ry="1.1" fill="#4e6a46" transform="rotate(45 16.9 51.4)"/><ellipse cx="42.7" cy="53.5" rx="1.5" ry="1.7" fill="#3a4c3a" transform="rotate(-35 42.7 53.5)"/><ellipse cx="12.1" cy="40.5" rx="3.6" ry="1.3" fill="#2a3a2c" transform="rotate(-37 12.1 40.5)"/><ellipse cx="-1.4" cy="50.6" rx="2.2" ry="1.6" fill="#304232" transform="rotate(-20 -1.4 50.6)"/><ellipse cx="8.9" cy="49.3" rx="1.7" ry="1.6" fill="#8aa070" transform="rotate(-19 8.9 49.3)"/><ellipse cx="42.9" cy="40.8" rx="2.2" ry="1.3" fill="#223024" transform="rotate(18 42.9 40.8)"/><ellipse cx="40.8" cy="48.6" rx="1.2" ry="2.5" fill="#304232" transform="rotate(36 40.8 48.6)"/><ellipse cx="34.5" cy="42.8" rx="2.8" ry="1.6" fill="#3a4c3a" transform="rotate(41 34.5 42.8)"/><ellipse cx="-1.8" cy="44.2" rx="2.4" ry="2.0" fill="#7a9a68" transform="rotate(-33 -1.8 44.2)"/><ellipse cx="47.0" cy="33.5" rx="1.7" ry="2.2" fill="#304232" transform="rotate(17 47.0 33.5)"/><ellipse cx="5.6" cy="48.6" rx="3.2" ry="1.8" fill="#8aa070" transform="rotate(3 5.6 48.6)"/><ellipse cx="13.8" cy="52.0" rx="2.9" ry="2.2" fill="#4e6a46" transform="rotate(33 13.8 52.0)"/><ellipse cx="16.4" cy="32.9" rx="2.2" ry="2.5" fill="#4e6a46" transform="rotate(19 16.4 32.9)"/><ellipse cx="43.3" cy="46.6" rx="1.3" ry="1.1" fill="#304232" transform="rotate(-37 43.3 46.6)"/><ellipse cx="29.6" cy="40.7" rx="3.4" ry="2.3" fill="#3a4c3a" transform="rotate(-34 29.6 40.7)"/><ellipse cx="55.8" cy="34.7" rx="3.0" ry="0.9" fill="#3e5040" transform="rotate(11 55.8 34.7)"/><ellipse cx="30.8" cy="48.9" rx="2.9" ry="1.1" fill="#4a564a" transform="rotate(33 30.8 48.9)"/><ellipse cx="10.1" cy="47.8" rx="3.3" ry="0.9" fill="#304232" transform="rotate(30 10.1 47.8)"/><ellipse cx="50.7" cy="36.4" rx="2.4" ry="1.0" fill="#3a4c3a" transform="rotate(-34 50.7 36.4)"/><ellipse cx="13.1" cy="32.8" rx="2.2" ry="1.2" fill="#3e5040" transform="rotate(6 13.1 32.8)"/><ellipse cx="50.1" cy="49.4" rx="1.3" ry="1.9" fill="#2a3a2c" transform="rotate(32 50.1 49.4)"/><ellipse cx="36.0" cy="57.2" rx="3.2" ry="1.4" fill="#6a8a5a" transform="rotate(48 36.0 57.2)"/><ellipse cx="57.0" cy="52.5" rx="2.9" ry="1.2" fill="#3a4c3a" transform="rotate(-25 57.0 52.5)"/><ellipse cx="33.9" cy="45.1" rx="2.5" ry="2.1" fill="#4a564a" transform="rotate(12 33.9 45.1)"/><ellipse cx="20.5" cy="50.5" rx="1.6" ry="1.7" fill="#6a8a5a" transform="rotate(-32 20.5 50.5)"/><ellipse cx="37.0" cy="53.3" rx="2.9" ry="1.5" fill="#304232" transform="rotate(-24 37.0 53.3)"/><ellipse cx="18.0" cy="36.0" rx="1.8" ry="2.4" fill="#6a8a5a" transform="rotate(5 18.0 36.0)"/><ellipse cx="6.3" cy="46.9" rx="2.2" ry="2.1" fill="#2a3a2c" transform="rotate(44 6.3 46.9)"/><ellipse cx="57.2" cy="45.8" rx="3.0" ry="2.4" fill="#4a564a" transform="rotate(-30 57.2 45.8)"/><ellipse cx="13.1" cy="54.3" rx="2.1" ry="1.2" fill="#3e5040" transform="rotate(-42 13.1 54.3)"/><ellipse cx="30.8" cy="45.6" rx="3.2" ry="2.6" fill="#3e5040" transform="rotate(4 30.8 45.6)"/><ellipse cx="8.7" cy="37.2" rx="2.6" ry="1.9" fill="#304232" transform="rotate(47 8.7 37.2)"/><ellipse cx="24.7" cy="46.1" rx="2.4" ry="2.2" fill="#4e6a46" transform="rotate(-48 24.7 46.1)"/><ellipse cx="36.1" cy="52.5" rx="2.2" ry="1.1" fill="#304232" transform="rotate(-8 36.1 52.5)"/><ellipse cx="37.5" cy="55.8" rx="1.8" ry="2.2" fill="#2a3a2c" transform="rotate(-42 37.5 55.8)"/><ellipse cx="28.9" cy="48.6" rx="2.6" ry="2.0" fill="#223024" transform="rotate(44 28.9 48.6)"/><ellipse cx="27.2" cy="57.8" rx="2.8" ry="1.0" fill="#5a7a4e" transform="rotate(34 27.2 57.8)"/><ellipse cx="43.3" cy="53.4" rx="2.9" ry="0.9" fill="#3e5040" transform="rotate(18 43.3 53.4)"/><ellipse cx="12.1" cy="45.9" rx="1.8" ry="1.2" fill="#7a9a68" transform="rotate(48 12.1 45.9)"/><ellipse cx="36.1" cy="41.7" rx="1.8" ry="2.0" fill="#3a4c3a" transform="rotate(-36 36.1 41.7)"/><ellipse cx="12.6" cy="55.7" rx="1.2" ry="0.9" fill="#3a4c3a" transform="rotate(-40 12.6 55.7)"/><rect x="45" y="36" width="2.5" height="14" fill="#9a8a48" opacity="0.8"/></g><rect x="22" y="32" width="1.8" height="24" fill="#2a2a28" opacity="0.8"/><circle cx="28.5" cy="28" r="10.5" fill="none" stroke="rgba(215,215,215,0.42)" stroke-width="4"/><path d="M28.5 17.5 A10.5 10.5 0 0 1 38.6 30.8" fill="none" stroke="rgba(238,238,238,0.92)" stroke-width="4"/></svg><span class="lit" style="letter-spacing:0.268px">SU PLANTA FAVORITA - Maite 2.mp3</span><span class="lid">9.43s</span><svg class="wv" width="266" height="16" viewBox="0 0 266 16"><path d="M0.0,6.34 L0.7,6.51 L1.3,6.39 L2.0,6.22 L2.7,5.77 L3.3,5.62 L4.0,5.46 L4.7,5.77 L5.3,5.73 L6.0,5.52 L6.7,5.31 L7.3,5.37 L8.0,5.49 L8.7,5.73 L9.3,5.89 L10.0,6.21 L10.7,6.01 L11.3,5.75 L12.0,5.91 L12.7,6.17 L13.3,6.23 L14.0,6.30 L14.7,6.17 L15.3,6.14 L16.0,6.01 L16.7,5.81 L17.3,5.65 L18.0,5.95 L18.7,6.13 L19.3,6.27 L20.0,6.37 L20.7,6.41 L21.3,6.27 L22.0,6.50 L22.7,6.55 L23.3,6.27 L24.0,6.29 L24.7,6.25 L25.3,6.42 L26.0,6.26 L26.7,6.27 L27.3,6.48 L28.0,6.33 L28.7,6.30 L29.3,6.35 L30.0,6.39 L30.7,6.46 L31.3,6.45 L32.0,6.48 L32.7,6.53 L33.3,6.37 L34.0,6.46 L34.7,6.30 L35.3,6.53 L36.0,6.25 L36.7,6.27 L37.3,6.12 L38.0,6.00 L38.7,5.85 L39.3,5.82 L40.0,5.93 L40.7,5.75 L41.3,6.04 L42.0,6.16 L42.7,6.18 L43.3,6.31 L44.0,6.39 L44.7,6.26 L45.3,6.36 L46.0,6.45 L46.7,6.47 L47.3,6.29 L48.0,6.41 L48.7,6.32 L49.3,6.44 L50.0,6.49 L50.7,6.39 L51.3,6.30 L52.0,6.50 L52.7,6.31 L53.3,6.27 L54.0,6.30 L54.7,6.28 L55.3,6.45 L56.0,6.10 L56.7,5.77 L57.3,5.79 L58.0,5.70 L58.7,5.88 L59.3,6.01 L60.0,6.09 L60.7,5.86 L61.3,5.30 L62.0,4.97 L62.7,4.54 L63.3,4.54 L64.0,4.97 L64.7,5.59 L65.3,5.79 L66.0,6.09 L66.7,6.44 L67.3,6.37 L68.0,6.44 L68.7,6.45 L69.3,6.44 L70.0,6.36 L70.7,6.37 L71.3,6.44 L72.0,6.49 L72.7,6.45 L73.3,6.50 L74.0,6.36 L74.7,6.26 L75.3,6.28 L76.0,6.21 L76.7,5.97 L77.3,5.65 L78.0,5.32 L78.7,5.07 L79.3,5.08 L80.0,4.92 L80.7,4.97 L81.3,5.00 L82.0,4.99 L82.7,5.01 L83.3,5.15 L84.0,5.57 L84.7,5.84 L85.3,6.17 L86.0,6.38 L86.7,6.36 L87.3,6.33 L88.0,6.53 L88.7,6.42 L89.3,6.41 L90.0,6.26 L90.7,6.20 L91.3,6.27 L92.0,5.96 L92.7,5.82 L93.3,5.85 L94.0,5.76 L94.7,5.96 L95.3,5.93 L96.0,6.13 L96.7,6.18 L97.3,6.27 L98.0,6.34 L98.7,6.32 L99.3,6.36 L100.0,6.45 L100.7,6.22 L101.3,6.26 L102.0,6.08 L102.7,5.84 L103.3,6.12 L104.0,6.24 L104.7,6.37 L105.3,6.23 L106.0,6.48 L106.7,6.54 L107.3,6.30 L108.0,6.51 L108.7,6.27 L109.3,6.16 L110.0,5.81 L110.7,5.70 L111.3,6.10 L112.0,6.25 L112.7,6.53 L113.3,6.32 L114.0,6.40 L114.7,6.34 L115.3,6.52 L116.0,6.33 L116.7,6.27 L117.3,6.53 L118.0,6.45 L118.7,6.38 L119.3,6.30 L120.0,6.48 L120.7,6.49 L121.3,6.46 L122.0,6.32 L122.7,6.21 L123.3,6.21 L124.0,6.07 L124.7,5.90 L125.3,5.81 L126.0,5.77 L126.7,5.96 L127.3,5.99 L128.0,6.00 L128.7,6.29 L129.3,6.26 L130.0,6.48 L130.7,6.33 L131.3,6.29 L132.0,6.27 L132.7,6.23 L133.3,6.11 L134.0,5.92 L134.7,5.75 L135.3,5.94 L136.0,5.92 L136.7,5.55 L137.3,5.02 L138.0,4.31 L138.7,3.63 L139.3,3.50 L140.0,4.05 L140.7,4.60 L141.3,5.27 L142.0,5.72 L142.7,6.17 L143.3,6.37 L144.0,6.30 L144.7,6.22 L145.3,6.38 L146.0,6.17 L146.7,6.14 L147.3,5.86 L148.0,5.82 L148.7,5.86 L149.3,5.91 L150.0,6.07 L150.7,6.05 L151.3,6.10 L152.0,6.01 L152.7,5.84 L153.3,5.91 L154.0,5.77 L154.7,5.83 L155.3,5.45 L156.0,5.57 L156.7,5.55 L157.3,5.66 L158.0,5.71 L158.7,5.92 L159.3,6.08 L160.0,5.92 L160.7,5.68 L161.3,5.73 L162.0,5.92 L162.7,5.74 L163.3,5.54 L164.0,5.66 L164.7,5.87 L165.3,5.85 L166.0,5.50 L166.7,5.37 L167.3,5.36 L168.0,5.64 L168.7,6.11 L169.3,6.33 L170.0,6.41 L170.7,6.48 L171.3,6.33 L172.0,6.29 L172.7,6.28 L173.3,6.47 L174.0,6.28 L174.7,6.43 L175.3,6.37 L176.0,6.22 L176.7,6.33 L177.3,6.24 L178.0,5.94 L178.7,6.08 L179.3,6.10 L180.0,6.12 L180.7,6.18 L181.3,6.46 L182.0,6.41 L182.7,6.40 L183.3,6.40 L184.0,6.49 L184.7,6.37 L185.3,6.26 L186.0,6.41 L186.7,6.31 L187.3,6.32 L188.0,6.02 L188.7,5.50 L189.3,5.22 L190.0,4.75 L190.7,4.85 L191.3,5.43 L192.0,5.55 L192.7,6.01 L193.3,6.09 L194.0,6.21 L194.7,6.41 L195.3,6.33 L196.0,6.35 L196.7,6.31 L197.3,6.47 L198.0,6.32 L198.7,6.26 L199.3,6.35 L200.0,6.39 L200.7,6.52 L201.3,6.40 L202.0,6.44 L202.7,6.33 L203.3,6.35 L204.0,6.38 L204.7,6.50 L205.3,6.36 L206.0,6.36 L206.7,6.50 L207.3,6.28 L208.0,6.35 L208.7,6.49 L209.3,6.22 L210.0,6.40 L210.7,6.24 L211.3,5.93 L212.0,5.66 L212.7,5.40 L213.3,5.38 L214.0,5.72 L214.7,6.05 L215.3,6.27 L216.0,6.41 L216.7,6.28 L217.3,6.30 L218.0,6.38 L218.7,6.31 L219.3,6.40 L220.0,6.36 L220.7,6.21 L221.3,5.91 L222.0,6.03 L222.7,5.86 L223.3,6.03 L224.0,6.02 L224.7,6.28 L225.3,6.32 L226.0,6.11 L226.7,5.69 L227.3,5.48 L228.0,5.87 L228.7,5.96 L229.3,6.18 L230.0,6.06 L230.7,6.06 L231.3,6.07 L232.0,5.91 L232.7,5.92 L233.3,6.03 L234.0,6.07 L234.7,6.18 L235.3,6.23 L236.0,6.23 L236.7,6.17 L237.3,6.07 L238.0,6.06 L238.7,5.95 L239.3,6.11 L240.0,6.17 L240.7,6.28 L241.3,6.46 L242.0,6.46 L242.7,6.28 L243.3,6.47 L244.0,6.16 L244.7,6.00 L245.3,5.83 L246.0,5.84 L246.7,5.68 L247.3,5.65 L248.0,5.72 L248.7,5.77 L249.3,6.02 L250.0,6.27 L250.7,6.20 L251.3,6.36 L252.0,6.35 L252.7,6.31 L253.3,6.49 L254.0,6.14 L254.7,5.92 L255.3,5.61 L256.0,5.28 L256.7,5.23 L257.3,5.50 L258.0,5.68 L258.7,6.01 L259.3,5.92 L260.0,5.84 L260.7,5.86 L261.3,5.85 L262.0,5.82 L262.7,5.96 L263.3,6.30 L264.0,6.20 L264.7,6.31 L265.3,6.51 L266.0,6.43 L266.0,9.57 L265.3,9.49 L264.7,9.69 L264.0,9.80 L263.3,9.70 L262.7,10.04 L262.0,10.18 L261.3,10.15 L260.7,10.14 L260.0,10.16 L259.3,10.08 L258.7,9.99 L258.0,10.32 L257.3,10.50 L256.7,10.77 L256.0,10.72 L255.3,10.39 L254.7,10.08 L254.0,9.86 L253.3,9.51 L252.7,9.69 L252.0,9.65 L251.3,9.64 L250.7,9.80 L250.0,9.73 L249.3,9.98 L248.7,10.23 L248.0,10.28 L247.3,10.35 L246.7,10.32 L246.0,10.16 L245.3,10.17 L244.7,10.00 L244.0,9.84 L243.3,9.53 L242.7,9.72 L242.0,9.54 L241.3,9.54 L240.7,9.72 L240.0,9.83 L239.3,9.89 L238.7,10.05 L238.0,9.94 L237.3,9.93 L236.7,9.83 L236.0,9.77 L235.3,9.77 L234.7,9.82 L234.0,9.93 L233.3,9.97 L232.7,10.08 L232.0,10.09 L231.3,9.93 L230.7,9.94 L230.0,9.94 L229.3,9.82 L228.7,10.04 L228.0,10.13 L227.3,10.52 L226.7,10.31 L226.0,9.89 L225.3,9.68 L224.7,9.72 L224.0,9.98 L223.3,9.97 L222.7,10.14 L222.0,9.97 L221.3,10.09 L220.7,9.79 L220.0,9.64 L219.3,9.60 L218.7,9.69 L218.0,9.62 L217.3,9.70 L216.7,9.72 L216.0,9.59 L215.3,9.73 L214.7,9.95 L214.0,10.28 L213.3,10.62 L212.7,10.60 L212.0,10.34 L211.3,10.07 L210.7,9.76 L210.0,9.60 L209.3,9.78 L208.7,9.51 L208.0,9.65 L207.3,9.72 L206.7,9.50 L206.0,9.64 L205.3,9.64 L204.7,9.50 L204.0,9.62 L203.3,9.65 L202.7,9.67 L202.0,9.56 L201.3,9.60 L200.7,9.48 L200.0,9.61 L199.3,9.65 L198.7,9.74 L198.0,9.68 L197.3,9.53 L196.7,9.69 L196.0,9.65 L195.3,9.67 L194.7,9.59 L194.0,9.79 L193.3,9.91 L192.7,9.99 L192.0,10.45 L191.3,10.57 L190.7,11.15 L190.0,11.25 L189.3,10.78 L188.7,10.50 L188.0,9.98 L187.3,9.68 L186.7,9.69 L186.0,9.59 L185.3,9.74 L184.7,9.63 L184.0,9.51 L183.3,9.60 L182.7,9.60 L182.0,9.59 L181.3,9.54 L180.7,9.82 L180.0,9.88 L179.3,9.90 L178.7,9.92 L178.0,10.06 L177.3,9.76 L176.7,9.67 L176.0,9.78 L175.3,9.63 L174.7,9.57 L174.0,9.72 L173.3,9.53 L172.7,9.72 L172.0,9.71 L171.3,9.67 L170.7,9.52 L170.0,9.59 L169.3,9.67 L168.7,9.89 L168.0,10.36 L167.3,10.64 L166.7,10.63 L166.0,10.50 L165.3,10.15 L164.7,10.13 L164.0,10.34 L163.3,10.46 L162.7,10.26 L162.0,10.08 L161.3,10.27 L160.7,10.32 L160.0,10.08 L159.3,9.92 L158.7,10.08 L158.0,10.29 L157.3,10.34 L156.7,10.45 L156.0,10.43 L155.3,10.55 L154.7,10.17 L154.0,10.23 L153.3,10.09 L152.7,10.16 L152.0,9.99 L151.3,9.90 L150.7,9.95 L150.0,9.93 L149.3,10.09 L148.7,10.14 L148.0,10.18 L147.3,10.14 L146.7,9.86 L146.0,9.83 L145.3,9.62 L144.7,9.78 L144.0,9.70 L143.3,9.63 L142.7,9.83 L142.0,10.28 L141.3,10.73 L140.7,11.40 L140.0,11.95 L139.3,12.50 L138.7,12.37 L138.0,11.69 L137.3,10.98 L136.7,10.45 L136.0,10.08 L135.3,10.06 L134.7,10.25 L134.0,10.08 L133.3,9.89 L132.7,9.77 L132.0,9.73 L131.3,9.71 L130.7,9.67 L130.0,9.52 L129.3,9.74 L128.7,9.71 L128.0,10.00 L127.3,10.01 L126.7,10.04 L126.0,10.23 L125.3,10.19 L124.7,10.10 L124.0,9.93 L123.3,9.79 L122.7,9.79 L122.0,9.68 L121.3,9.54 L120.7,9.51 L120.0,9.52 L119.3,9.70 L118.7,9.62 L118.0,9.55 L117.3,9.47 L116.7,9.73 L116.0,9.67 L115.3,9.48 L114.7,9.66 L114.0,9.60 L113.3,9.68 L112.7,9.47 L112.0,9.75 L111.3,9.90 L110.7,10.30 L110.0,10.19 L109.3,9.84 L108.7,9.73 L108.0,9.49 L107.3,9.70 L106.7,9.46 L106.0,9.52 L105.3,9.77 L104.7,9.63 L104.0,9.76 L103.3,9.88 L102.7,10.16 L102.0,9.92 L101.3,9.74 L100.7,9.78 L100.0,9.55 L99.3,9.64 L98.7,9.68 L98.0,9.66 L97.3,9.73 L96.7,9.82 L96.0,9.87 L95.3,10.07 L94.7,10.04 L94.0,10.24 L93.3,10.15 L92.7,10.18 L92.0,10.04 L91.3,9.73 L90.7,9.80 L90.0,9.74 L89.3,9.59 L88.7,9.58 L88.0,9.47 L87.3,9.67 L86.7,9.64 L86.0,9.62 L85.3,9.83 L84.7,10.16 L84.0,10.43 L83.3,10.85 L82.7,10.99 L82.0,11.01 L81.3,11.00 L80.7,11.03 L80.0,11.08 L79.3,10.92 L78.7,10.93 L78.0,10.68 L77.3,10.35 L76.7,10.03 L76.0,9.79 L75.3,9.72 L74.7,9.74 L74.0,9.64 L73.3,9.50 L72.7,9.55 L72.0,9.51 L71.3,9.56 L70.7,9.63 L70.0,9.64 L69.3,9.56 L68.7,9.55 L68.0,9.56 L67.3,9.63 L66.7,9.56 L66.0,9.91 L65.3,10.21 L64.7,10.41 L64.0,11.03 L63.3,11.46 L62.7,11.46 L62.0,11.03 L61.3,10.70 L60.7,10.14 L60.0,9.91 L59.3,9.99 L58.7,10.12 L58.0,10.30 L57.3,10.21 L56.7,10.23 L56.0,9.90 L55.3,9.55 L54.7,9.72 L54.0,9.70 L53.3,9.73 L52.7,9.69 L52.0,9.50 L51.3,9.70 L50.7,9.61 L50.0,9.51 L49.3,9.56 L48.7,9.68 L48.0,9.59 L47.3,9.71 L46.7,9.53 L46.0,9.55 L45.3,9.64 L44.7,9.74 L44.0,9.61 L43.3,9.69 L42.7,9.82 L42.0,9.84 L41.3,9.96 L40.7,10.25 L40.0,10.07 L39.3,10.18 L38.7,10.15 L38.0,10.00 L37.3,9.88 L36.7,9.73 L36.0,9.75 L35.3,9.47 L34.7,9.70 L34.0,9.54 L33.3,9.63 L32.7,9.47 L32.0,9.52 L31.3,9.55 L30.7,9.54 L30.0,9.61 L29.3,9.65 L28.7,9.70 L28.0,9.67 L27.3,9.52 L26.7,9.73 L26.0,9.74 L25.3,9.58 L24.7,9.75 L24.0,9.71 L23.3,9.73 L22.7,9.45 L22.0,9.50 L21.3,9.73 L20.7,9.59 L20.0,9.63 L19.3,9.73 L18.7,9.87 L18.0,10.05 L17.3,10.35 L16.7,10.19 L16.0,9.99 L15.3,9.86 L14.7,9.83 L14.0,9.70 L13.3,9.77 L12.7,9.83 L12.0,10.09 L11.3,10.25 L10.7,9.99 L10.0,9.79 L9.3,10.11 L8.7,10.27 L8.0,10.51 L7.3,10.63 L6.7,10.69 L6.0,10.48 L5.3,10.27 L4.7,10.23 L4.0,10.54 L3.3,10.38 L2.7,10.23 L2.0,9.78 L1.3,9.61 L0.7,9.49 L0.0,9.66Z" fill="#eeeeee"/></svg></div>
<div class="li" style="top:403.60px;height:64.75px;background:#aa00ff"><svg class="th" style="left:4px;top:4.20px;width:57px;height:56px;" width="57" height="56" viewBox="0 0 57 56"><defs><filter id="bl" x="-10%" y="-10%" width="120%" height="120%"><feGaussianBlur stdDeviation="1.6"/></filter><filter id="bl2"><feGaussianBlur stdDeviation="0.5"/></filter><filter id="bl3" x="-5%" y="-5%" width="110%" height="110%"><feGaussianBlur stdDeviation="0.7"/></filter></defs><rect width="57" height="56" fill="#a6a8a5"/><rect x="0" y="0.5" width="57" height="1.3" fill="#7c7f7b"/><rect x="0" y="1.8" width="57" height="1.2" fill="#b8bab7"/><rect x="0" y="6.8" width="57" height="1.3" fill="#7c7f7b"/><rect x="0" y="8.1" width="57" height="1.2" fill="#b8bab7"/><rect x="0" y="13.1" width="57" height="1.3" fill="#7c7f7b"/><rect x="0" y="14.4" width="57" height="1.2" fill="#b8bab7"/><rect x="0" y="19.4" width="57" height="1.3" fill="#7c7f7b"/><rect x="0" y="20.7" width="57" height="1.2" fill="#b8bab7"/><rect x="0" y="25.7" width="57" height="1.3" fill="#7c7f7b"/><rect x="0" y="27.0" width="57" height="1.2" fill="#b8bab7"/><rect x="0" y="32" width="57" height="1.3" fill="#7c7f7b"/><rect x="0" y="33.3" width="57" height="1.2" fill="#b8bab7"/><rect x="0" y="38.3" width="57" height="1.3" fill="#7c7f7b"/><rect x="0" y="39.599999999999994" width="57" height="1.2" fill="#b8bab7"/><rect x="0" y="44.6" width="57" height="1.3" fill="#7c7f7b"/><rect x="0" y="45.9" width="57" height="1.2" fill="#b8bab7"/><rect x="0" y="50.9" width="57" height="1.3" fill="#7c7f7b"/><rect x="0" y="52.199999999999996" width="57" height="1.2" fill="#b8bab7"/><g transform="translate(2.2,7.1) scale(0.9,1.05)" font-family="Liberation Mono" font-weight="bold" font-size="7.8" fill="#f2f4f2" stroke="#f2f4f2" stroke-width="0.35"><text x="0" y="0">ROM</text><text x="0" y="6.1">PE</text><text x="0" y="12.2">MOL</text><text x="0" y="18.3">DES</text></g><rect x="24" y="30" width="17" height="12" fill="#555855" opacity="0.85"/><g filter="url(#bl3)"><path d="M-2 58 L-2 32 Q6 28 14 31 Q20 34 24 40 Q32 38 40 36 Q44 28 50 27 Q56 26 59 28 L59 58Z" fill="#3a4c3a" opacity="0.85"/><ellipse cx="1.2" cy="34.2" rx="2.3" ry="1.0" fill="#2a3a2c" transform="rotate(-2 1.2 34.2)"/><ellipse cx="30.7" cy="46.0" rx="3.4" ry="1.1" fill="#3a4c3a" transform="rotate(39 30.7 46.0)"/><ellipse cx="13.0" cy="30.8" rx="2.3" ry="1.0" fill="#2a3a2c" transform="rotate(-50 13.0 30.8)"/><ellipse cx="17.2" cy="42.7" rx="3.6" ry="1.0" fill="#5a7a4e" transform="rotate(-13 17.2 42.7)"/><ellipse cx="53.6" cy="45.2" rx="1.9" ry="2.3" fill="#3a4c3a" transform="rotate(16 53.6 45.2)"/><ellipse cx="46.9" cy="34.2" rx="2.8" ry="1.7" fill="#3a4c3a" transform="rotate(-49 46.9 34.2)"/><ellipse cx="22.3" cy="53.8" rx="2.5" ry="2.0" fill="#4a564a" transform="rotate(26 22.3 53.8)"/><ellipse cx="52.3" cy="42.6" rx="2.9" ry="1.5" fill="#6a8a5a" transform="rotate(42 52.3 42.6)"/><ellipse cx="48.0" cy="55.4" rx="2.9" ry="1.1" fill="#223024" transform="rotate(-41 48.0 55.4)"/><ellipse cx="42.1" cy="39.6" rx="3.2" ry="0.8" fill="#4a564a" transform="rotate(-4 42.1 39.6)"/><ellipse cx="-1.2" cy="41.2" rx="1.8" ry="1.8" fill="#2a3a2c" transform="rotate(31 -1.2 41.2)"/><ellipse cx="15.5" cy="44.1" rx="3.2" ry="2.1" fill="#304232" transform="rotate(-31 15.5 44.1)"/><ellipse cx="58.5" cy="41.3" rx="3.2" ry="0.9" fill="#6a8a5a" transform="rotate(-48 58.5 41.3)"/><ellipse cx="13.6" cy="40.3" rx="1.9" ry="1.6" fill="#2a3a2c" transform="rotate(29 13.6 40.3)"/><ellipse cx="1.8" cy="41.1" rx="1.4" ry="1.6" fill="#8aa070" transform="rotate(-2 1.8 41.1)"/><ellipse cx="2.5" cy="50.0" rx="2.3" ry="2.6" fill="#4e6a46" transform="rotate(-46 2.5 50.0)"/><ellipse cx="43.8" cy="38.0" rx="2.1" ry="2.0" fill="#223024" transform="rotate(-42 43.8 38.0)"/><ellipse cx="41.8" cy="48.4" rx="2.2" ry="1.2" fill="#5a7a4e" transform="rotate(47 41.8 48.4)"/><ellipse cx="29.6" cy="49.7" rx="1.6" ry="2.0" fill="#223024" transform="rotate(-3 29.6 49.7)"/><ellipse cx="5.7" cy="57.3" rx="2.5" ry="1.9" fill="#223024" transform="rotate(5 5.7 57.3)"/><ellipse cx="1.8" cy="35.4" rx="2.9" ry="1.4" fill="#4a564a" transform="rotate(42 1.8 35.4)"/><ellipse cx="57.8" cy="48.1" rx="2.0" ry="2.2" fill="#8aa070" transform="rotate(-9 57.8 48.1)"/><ellipse cx="51.2" cy="43.4" rx="1.6" ry="1.7" fill="#3a4c3a" transform="rotate(-22 51.2 43.4)"/><ellipse cx="52.5" cy="38.2" rx="1.9" ry="1.7" fill="#7a9a68" transform="rotate(-17 52.5 38.2)"/><ellipse cx="22.3" cy="56.9" rx="1.4" ry="1.2" fill="#5a7a4e" transform="rotate(-26 22.3 56.9)"/><ellipse cx="14.4" cy="36.9" rx="2.8" ry="1.0" fill="#304232" transform="rotate(18 14.4 36.9)"/><ellipse cx="6.3" cy="55.4" rx="2.5" ry="1.5" fill="#8aa070" transform="rotate(12 6.3 55.4)"/><ellipse cx="18.8" cy="55.6" rx="3.4" ry="2.5" fill="#2a3a2c" transform="rotate(26 18.8 55.6)"/><ellipse cx="35.2" cy="48.9" rx="3.0" ry="1.0" fill="#4e6a46" transform="rotate(-4 35.2 48.9)"/><ellipse cx="56.4" cy="53.7" rx="2.0" ry="1.2" fill="#304232" transform="rotate(-27 56.4 53.7)"/><ellipse cx="21.3" cy="54.5" rx="3.4" ry="1.5" fill="#6a8a5a" transform="rotate(21 21.3 54.5)"/><ellipse cx="21.0" cy="41.2" rx="2.0" ry="2.4" fill="#3e5040" transform="rotate(-9 21.0 41.2)"/><ellipse cx="1.3" cy="41.8" rx="2.7" ry="1.3" fill="#4a564a" transform="rotate(-9 1.3 41.8)"/><ellipse cx="12.8" cy="42.9" rx="3.4" ry="1.8" fill="#4e6a46" transform="rotate(14 12.8 42.9)"/><ellipse cx="33.1" cy="56.6" rx="2.1" ry="0.9" fill="#4e6a46" transform="rotate(34 33.1 56.6)"/><ellipse cx="28.3" cy="42.4" rx="2.6" ry="1.6" fill="#3a4c3a" transform="rotate(-3 28.3 42.4)"/><ellipse cx="52.4" cy="34.6" rx="3.4" ry="1.6" fill="#3e5040" transform="rotate(49 52.4 34.6)"/><ellipse cx="55.7" cy="49.2" rx="3.5" ry="0.8" fill="#304232" transform="rotate(38 55.7 49.2)"/><ellipse cx="52.2" cy="54.1" rx="1.9" ry="2.6" fill="#2a3a2c" transform="rotate(27 52.2 54.1)"/><ellipse cx="-1.2" cy="49.6" rx="1.7" ry="1.3" fill="#8aa070" transform="rotate(-26 -1.2 49.6)"/><ellipse cx="16.5" cy="54.3" rx="2.4" ry="1.3" fill="#4e6a46" transform="rotate(28 16.5 54.3)"/><ellipse cx="31.2" cy="45.0" rx="1.7" ry="2.5" fill="#4e6a46" transform="rotate(2 31.2 45.0)"/><ellipse cx="46.7" cy="41.5" rx="1.4" ry="1.6" fill="#3e5040" transform="rotate(-5 46.7 41.5)"/><ellipse cx="7.4" cy="34.9" rx="3.6" ry="2.6" fill="#304232" transform="rotate(-24 7.4 34.9)"/><ellipse cx="2.5" cy="56.1" rx="1.2" ry="2.0" fill="#2a3a2c" transform="rotate(-19 2.5 56.1)"/><ellipse cx="42.6" cy="54.4" rx="2.3" ry="1.3" fill="#5a7a4e" transform="rotate(-14 42.6 54.4)"/><ellipse cx="38.9" cy="54.8" rx="1.8" ry="0.8" fill="#304232" transform="rotate(9 38.9 54.8)"/><ellipse cx="11.7" cy="36.9" rx="2.9" ry="1.6" fill="#223024" transform="rotate(-41 11.7 36.9)"/><ellipse cx="58.0" cy="42.9" rx="1.3" ry="1.1" fill="#2a3a2c" transform="rotate(-34 58.0 42.9)"/><ellipse cx="5.4" cy="56.0" rx="2.1" ry="1.9" fill="#3a4c3a" transform="rotate(-14 5.4 56.0)"/><ellipse cx="20.1" cy="47.0" rx="1.3" ry="1.7" fill="#2a3a2c" transform="rotate(25 20.1 47.0)"/><ellipse cx="38.5" cy="53.3" rx="3.2" ry="1.2" fill="#223024" transform="rotate(-34 38.5 53.3)"/><ellipse cx="51.5" cy="32.2" rx="3.4" ry="1.1" fill="#3a4c3a" transform="rotate(-46 51.5 32.2)"/><ellipse cx="4.0" cy="37.4" rx="2.3" ry="1.2" fill="#2a3a2c" transform="rotate(-31 4.0 37.4)"/><ellipse cx="5.0" cy="49.9" rx="1.5" ry="0.9" fill="#304232" transform="rotate(-20 5.0 49.9)"/><ellipse cx="12.3" cy="42.5" rx="2.9" ry="1.0" fill="#7a9a68" transform="rotate(35 12.3 42.5)"/><ellipse cx="22.4" cy="54.2" rx="3.3" ry="0.9" fill="#6a8a5a" transform="rotate(-14 22.4 54.2)"/><ellipse cx="12.3" cy="45.9" rx="1.2" ry="2.4" fill="#4a564a" transform="rotate(19 12.3 45.9)"/><ellipse cx="14.1" cy="42.1" rx="3.8" ry="1.5" fill="#223024" transform="rotate(-46 14.1 42.1)"/><ellipse cx="34.8" cy="46.3" rx="3.0" ry="0.8" fill="#2a3a2c" transform="rotate(32 34.8 46.3)"/><ellipse cx="15.9" cy="40.9" rx="1.7" ry="1.4" fill="#4a564a" transform="rotate(26 15.9 40.9)"/><ellipse cx="56.4" cy="44.0" rx="2.2" ry="2.0" fill="#7a9a68" transform="rotate(4 56.4 44.0)"/><ellipse cx="45.5" cy="36.5" rx="3.5" ry="2.6" fill="#5a7a4e" transform="rotate(-17 45.5 36.5)"/><ellipse cx="42.5" cy="50.9" rx="3.5" ry="2.0" fill="#3a4c3a" transform="rotate(-27 42.5 50.9)"/><ellipse cx="4.1" cy="58.0" rx="2.8" ry="1.3" fill="#2a3a2c" transform="rotate(-4 4.1 58.0)"/><ellipse cx="1.5" cy="38.5" rx="1.5" ry="1.5" fill="#3e5040" transform="rotate(20 1.5 38.5)"/><ellipse cx="50.7" cy="48.0" rx="1.5" ry="2.4" fill="#4a564a" transform="rotate(47 50.7 48.0)"/><ellipse cx="58.0" cy="37.3" rx="3.7" ry="0.8" fill="#3e5040" transform="rotate(-38 58.0 37.3)"/><ellipse cx="54.9" cy="41.2" rx="2.2" ry="2.5" fill="#4a564a" transform="rotate(-27 54.9 41.2)"/><ellipse cx="48.0" cy="32.0" rx="1.2" ry="1.2" fill="#223024" transform="rotate(-34 48.0 32.0)"/><ellipse cx="47.0" cy="30.5" rx="2.6" ry="1.6" fill="#223024" transform="rotate(-11 47.0 30.5)"/><ellipse cx="2.0" cy="32.4" rx="3.3" ry="1.5" fill="#4a564a" transform="rotate(36 2.0 32.4)"/><ellipse cx="31.2" cy="43.4" rx="2.0" ry="1.9" fill="#3a4c3a" transform="rotate(-48 31.2 43.4)"/><ellipse cx="38.6" cy="45.5" rx="3.5" ry="1.2" fill="#5a7a4e" transform="rotate(4 38.6 45.5)"/><ellipse cx="2.0" cy="52.7" rx="3.7" ry="1.1" fill="#6a8a5a" transform="rotate(-42 2.0 52.7)"/><ellipse cx="25.4" cy="57.4" rx="2.2" ry="2.1" fill="#4a564a" transform="rotate(18 25.4 57.4)"/><ellipse cx="55.3" cy="30.2" rx="3.4" ry="1.2" fill="#3e5040" transform="rotate(-11 55.3 30.2)"/><ellipse cx="40.8" cy="34.2" rx="1.3" ry="2.3" fill="#4a564a" transform="rotate(-44 40.8 34.2)"/><ellipse cx="49.1" cy="51.9" rx="3.5" ry="1.9" fill="#304232" transform="rotate(32 49.1 51.9)"/><ellipse cx="38.1" cy="57.5" rx="2.9" ry="1.0" fill="#6a8a5a" transform="rotate(34 38.1 57.5)"/><ellipse cx="47.0" cy="32.1" rx="3.0" ry="1.9" fill="#223024" transform="rotate(40 47.0 32.1)"/><ellipse cx="14.1" cy="41.9" rx="1.7" ry="1.8" fill="#3e5040" transform="rotate(-39 14.1 41.9)"/><ellipse cx="58.5" cy="55.8" rx="3.5" ry="1.9" fill="#8aa070" transform="rotate(34 58.5 55.8)"/><ellipse cx="34.6" cy="48.2" rx="2.9" ry="1.9" fill="#223024" transform="rotate(-47 34.6 48.2)"/><ellipse cx="20.7" cy="54.5" rx="2.4" ry="2.0" fill="#8aa070" transform="rotate(47 20.7 54.5)"/><ellipse cx="32.3" cy="50.6" rx="3.2" ry="1.4" fill="#7a9a68" transform="rotate(-44 32.3 50.6)"/><ellipse cx="33.7" cy="48.8" rx="2.2" ry="1.6" fill="#5a7a4e" transform="rotate(34 33.7 48.8)"/><ellipse cx="35.7" cy="44.2" rx="2.2" ry="1.0" fill="#2a3a2c" transform="rotate(47 35.7 44.2)"/><ellipse cx="55.1" cy="56.0" rx="3.2" ry="2.4" fill="#223024" transform="rotate(-8 55.1 56.0)"/><ellipse cx="17.2" cy="47.0" rx="3.4" ry="2.2" fill="#4a564a" transform="rotate(-16 17.2 47.0)"/><ellipse cx="18.6" cy="43.5" rx="1.8" ry="2.1" fill="#4a564a" transform="rotate(16 18.6 43.5)"/><ellipse cx="41.4" cy="32.3" rx="3.6" ry="1.1" fill="#304232" transform="rotate(37 41.4 32.3)"/><ellipse cx="39.8" cy="53.4" rx="1.7" ry="1.8" fill="#6a8a5a" transform="rotate(48 39.8 53.4)"/><ellipse cx="58.0" cy="43.0" rx="1.2" ry="1.1" fill="#4a564a" transform="rotate(14 58.0 43.0)"/><ellipse cx="36.9" cy="44.0" rx="2.3" ry="2.3" fill="#3a4c3a" transform="rotate(-44 36.9 44.0)"/><ellipse cx="36.9" cy="55.6" rx="3.0" ry="2.6" fill="#2a3a2c" transform="rotate(-36 36.9 55.6)"/><ellipse cx="0.3" cy="57.3" rx="2.1" ry="2.2" fill="#3e5040" transform="rotate(38 0.3 57.3)"/><ellipse cx="39.1" cy="50.1" rx="3.1" ry="2.3" fill="#4a564a" transform="rotate(-21 39.1 50.1)"/><ellipse cx="-0.0" cy="35.3" rx="2.4" ry="2.3" fill="#223024" transform="rotate(31 -0.0 35.3)"/><ellipse cx="49.1" cy="38.4" rx="2.9" ry="1.0" fill="#3a4c3a" transform="rotate(19 49.1 38.4)"/><ellipse cx="17.0" cy="32.3" rx="1.7" ry="0.9" fill="#3e5040" transform="rotate(-49 17.0 32.3)"/><ellipse cx="34.6" cy="49.3" rx="2.2" ry="1.7" fill="#304232" transform="rotate(-6 34.6 49.3)"/><ellipse cx="12.0" cy="49.8" rx="3.1" ry="1.0" fill="#8aa070" transform="rotate(-2 12.0 49.8)"/><ellipse cx="4.3" cy="38.4" rx="3.0" ry="1.5" fill="#5a7a4e" transform="rotate(4 4.3 38.4)"/><ellipse cx="47.9" cy="47.6" rx="2.4" ry="2.1" fill="#4a564a" transform="rotate(-45 47.9 47.6)"/><ellipse cx="23.3" cy="41.7" rx="2.0" ry="1.7" fill="#4a564a" transform="rotate(-8 23.3 41.7)"/><ellipse cx="20.4" cy="41.1" rx="2.8" ry="1.0" fill="#3e5040" transform="rotate(-9 20.4 41.1)"/><ellipse cx="0.0" cy="37.3" rx="1.9" ry="2.1" fill="#8aa070" transform="rotate(10 0.0 37.3)"/><ellipse cx="20.0" cy="49.6" rx="3.5" ry="1.9" fill="#304232" transform="rotate(-8 20.0 49.6)"/><ellipse cx="12.7" cy="43.7" rx="1.8" ry="1.4" fill="#304232" transform="rotate(9 12.7 43.7)"/><ellipse cx="27.4" cy="46.0" rx="2.8" ry="1.6" fill="#223024" transform="rotate(42 27.4 46.0)"/><ellipse cx="53.7" cy="30.4" rx="2.2" ry="1.6" fill="#8aa070" transform="rotate(-9 53.7 30.4)"/><ellipse cx="21.3" cy="50.1" rx="2.6" ry="1.2" fill="#4e6a46" transform="rotate(15 21.3 50.1)"/><ellipse cx="25.1" cy="51.0" rx="2.8" ry="2.2" fill="#8aa070" transform="rotate(-20 25.1 51.0)"/><ellipse cx="53.4" cy="40.5" rx="3.1" ry="0.9" fill="#2a3a2c" transform="rotate(-3 53.4 40.5)"/><ellipse cx="26.4" cy="51.4" rx="1.6" ry="1.1" fill="#304232" transform="rotate(-33 26.4 51.4)"/><ellipse cx="56.8" cy="52.0" rx="2.3" ry="1.1" fill="#304232" transform="rotate(28 56.8 52.0)"/><ellipse cx="47.8" cy="36.9" rx="2.7" ry="0.9" fill="#304232" transform="rotate(28 47.8 36.9)"/><ellipse cx="25.3" cy="43.3" rx="3.2" ry="1.9" fill="#3a4c3a" transform="rotate(-45 25.3 43.3)"/><ellipse cx="4.1" cy="32.7" rx="1.8" ry="1.1" fill="#304232" transform="rotate(-38 4.1 32.7)"/><ellipse cx="57.8" cy="43.7" rx="2.8" ry="1.2" fill="#6a8a5a" transform="rotate(-20 57.8 43.7)"/><ellipse cx="39.0" cy="43.1" rx="3.2" ry="1.8" fill="#2a3a2c" transform="rotate(28 39.0 43.1)"/><ellipse cx="27.7" cy="47.8" rx="3.1" ry="1.1" fill="#304232" transform="rotate(-21 27.7 47.8)"/><ellipse cx="16.3" cy="48.9" rx="2.3" ry="1.1" fill="#4a564a" transform="rotate(-25 16.3 48.9)"/><ellipse cx="7.7" cy="35.7" rx="2.5" ry="2.1" fill="#6a8a5a" transform="rotate(39 7.7 35.7)"/><ellipse cx="-1.0" cy="50.7" rx="2.8" ry="2.0" fill="#6a8a5a" transform="rotate(29 -1.0 50.7)"/><ellipse cx="24.3" cy="52.9" rx="3.5" ry="2.2" fill="#7a9a68" transform="rotate(-16 24.3 52.9)"/><ellipse cx="12.4" cy="34.9" rx="1.7" ry="1.1" fill="#2a3a2c" transform="rotate(2 12.4 34.9)"/><ellipse cx="29.3" cy="57.6" rx="1.4" ry="1.6" fill="#223024" transform="rotate(19 29.3 57.6)"/><ellipse cx="16.9" cy="51.4" rx="2.9" ry="1.1" fill="#4e6a46" transform="rotate(45 16.9 51.4)"/><ellipse cx="42.7" cy="53.5" rx="1.5" ry="1.7" fill="#3a4c3a" transform="rotate(-35 42.7 53.5)"/><ellipse cx="12.1" cy="40.5" rx="3.6" ry="1.3" fill="#2a3a2c" transform="rotate(-37 12.1 40.5)"/><ellipse cx="-1.4" cy="50.6" rx="2.2" ry="1.6" fill="#304232" transform="rotate(-20 -1.4 50.6)"/><ellipse cx="8.9" cy="49.3" rx="1.7" ry="1.6" fill="#8aa070" transform="rotate(-19 8.9 49.3)"/><ellipse cx="42.9" cy="40.8" rx="2.2" ry="1.3" fill="#223024" transform="rotate(18 42.9 40.8)"/><ellipse cx="40.8" cy="48.6" rx="1.2" ry="2.5" fill="#304232" transform="rotate(36 40.8 48.6)"/><ellipse cx="34.5" cy="42.8" rx="2.8" ry="1.6" fill="#3a4c3a" transform="rotate(41 34.5 42.8)"/><ellipse cx="-1.8" cy="44.2" rx="2.4" ry="2.0" fill="#7a9a68" transform="rotate(-33 -1.8 44.2)"/><ellipse cx="47.0" cy="33.5" rx="1.7" ry="2.2" fill="#304232" transform="rotate(17 47.0 33.5)"/><ellipse cx="5.6" cy="48.6" rx="3.2" ry="1.8" fill="#8aa070" transform="rotate(3 5.6 48.6)"/><ellipse cx="13.8" cy="52.0" rx="2.9" ry="2.2" fill="#4e6a46" transform="rotate(33 13.8 52.0)"/><ellipse cx="16.4" cy="32.9" rx="2.2" ry="2.5" fill="#4e6a46" transform="rotate(19 16.4 32.9)"/><ellipse cx="43.3" cy="46.6" rx="1.3" ry="1.1" fill="#304232" transform="rotate(-37 43.3 46.6)"/><ellipse cx="29.6" cy="40.7" rx="3.4" ry="2.3" fill="#3a4c3a" transform="rotate(-34 29.6 40.7)"/><ellipse cx="55.8" cy="34.7" rx="3.0" ry="0.9" fill="#3e5040" transform="rotate(11 55.8 34.7)"/><ellipse cx="30.8" cy="48.9" rx="2.9" ry="1.1" fill="#4a564a" transform="rotate(33 30.8 48.9)"/><ellipse cx="10.1" cy="47.8" rx="3.3" ry="0.9" fill="#304232" transform="rotate(30 10.1 47.8)"/><ellipse cx="50.7" cy="36.4" rx="2.4" ry="1.0" fill="#3a4c3a" transform="rotate(-34 50.7 36.4)"/><ellipse cx="13.1" cy="32.8" rx="2.2" ry="1.2" fill="#3e5040" transform="rotate(6 13.1 32.8)"/><ellipse cx="50.1" cy="49.4" rx="1.3" ry="1.9" fill="#2a3a2c" transform="rotate(32 50.1 49.4)"/><ellipse cx="36.0" cy="57.2" rx="3.2" ry="1.4" fill="#6a8a5a" transform="rotate(48 36.0 57.2)"/><ellipse cx="57.0" cy="52.5" rx="2.9" ry="1.2" fill="#3a4c3a" transform="rotate(-25 57.0 52.5)"/><ellipse cx="33.9" cy="45.1" rx="2.5" ry="2.1" fill="#4a564a" transform="rotate(12 33.9 45.1)"/><ellipse cx="20.5" cy="50.5" rx="1.6" ry="1.7" fill="#6a8a5a" transform="rotate(-32 20.5 50.5)"/><ellipse cx="37.0" cy="53.3" rx="2.9" ry="1.5" fill="#304232" transform="rotate(-24 37.0 53.3)"/><ellipse cx="18.0" cy="36.0" rx="1.8" ry="2.4" fill="#6a8a5a" transform="rotate(5 18.0 36.0)"/><ellipse cx="6.3" cy="46.9" rx="2.2" ry="2.1" fill="#2a3a2c" transform="rotate(44 6.3 46.9)"/><ellipse cx="57.2" cy="45.8" rx="3.0" ry="2.4" fill="#4a564a" transform="rotate(-30 57.2 45.8)"/><ellipse cx="13.1" cy="54.3" rx="2.1" ry="1.2" fill="#3e5040" transform="rotate(-42 13.1 54.3)"/><ellipse cx="30.8" cy="45.6" rx="3.2" ry="2.6" fill="#3e5040" transform="rotate(4 30.8 45.6)"/><ellipse cx="8.7" cy="37.2" rx="2.6" ry="1.9" fill="#304232" transform="rotate(47 8.7 37.2)"/><ellipse cx="24.7" cy="46.1" rx="2.4" ry="2.2" fill="#4e6a46" transform="rotate(-48 24.7 46.1)"/><ellipse cx="36.1" cy="52.5" rx="2.2" ry="1.1" fill="#304232" transform="rotate(-8 36.1 52.5)"/><ellipse cx="37.5" cy="55.8" rx="1.8" ry="2.2" fill="#2a3a2c" transform="rotate(-42 37.5 55.8)"/><ellipse cx="28.9" cy="48.6" rx="2.6" ry="2.0" fill="#223024" transform="rotate(44 28.9 48.6)"/><ellipse cx="27.2" cy="57.8" rx="2.8" ry="1.0" fill="#5a7a4e" transform="rotate(34 27.2 57.8)"/><ellipse cx="43.3" cy="53.4" rx="2.9" ry="0.9" fill="#3e5040" transform="rotate(18 43.3 53.4)"/><ellipse cx="12.1" cy="45.9" rx="1.8" ry="1.2" fill="#7a9a68" transform="rotate(48 12.1 45.9)"/><ellipse cx="36.1" cy="41.7" rx="1.8" ry="2.0" fill="#3a4c3a" transform="rotate(-36 36.1 41.7)"/><ellipse cx="12.6" cy="55.7" rx="1.2" ry="0.9" fill="#3a4c3a" transform="rotate(-40 12.6 55.7)"/><rect x="45" y="36" width="2.5" height="14" fill="#9a8a48" opacity="0.8"/></g><rect x="22" y="32" width="1.8" height="24" fill="#2a2a28" opacity="0.8"/><circle cx="28.5" cy="28" r="10.5" fill="none" stroke="rgba(215,215,215,0.42)" stroke-width="4"/><path d="M28.5 17.5 A10.5 10.5 0 0 1 38.6 30.8" fill="none" stroke="rgba(238,238,238,0.92)" stroke-width="4"/></svg><span class="lit" style="letter-spacing:0.450px">------LA PLANNTA ESPECIAL - Maite 2.mp3</span><span class="lid">42.13s</span><svg class="wv" width="266" height="16" viewBox="0 0 266 16"><path d="M0.0,6.11 L0.7,5.15 L1.3,4.46 L2.0,3.76 L2.7,4.30 L3.3,5.40 L4.0,6.08 L4.7,6.25 L5.3,6.36 L6.0,6.32 L6.7,6.27 L7.3,6.48 L8.0,6.53 L8.7,6.23 L9.3,6.44 L10.0,6.05 L10.7,6.02 L11.3,5.41 L12.0,4.99 L12.7,4.77 L13.3,4.96 L14.0,5.08 L14.7,5.44 L15.3,5.37 L16.0,5.57 L16.7,5.62 L17.3,5.89 L18.0,6.16 L18.7,6.26 L19.3,6.48 L20.0,6.52 L20.7,6.36 L21.3,6.40 L22.0,6.29 L22.7,6.37 L23.3,6.51 L24.0,6.44 L24.7,6.32 L25.3,6.39 L26.0,6.55 L26.7,6.30 L27.3,6.30 L28.0,6.52 L28.7,6.36 L29.3,6.37 L30.0,6.17 L30.7,6.19 L31.3,6.06 L32.0,5.87 L32.7,5.70 L33.3,6.03 L34.0,6.16 L34.7,6.15 L35.3,6.18 L36.0,6.35 L36.7,6.41 L37.3,6.29 L38.0,6.31 L38.7,6.50 L39.3,6.20 L40.0,6.31 L40.7,6.16 L41.3,5.97 L42.0,6.16 L42.7,6.16 L43.3,6.43 L44.0,6.23 L44.7,6.35 L45.3,6.19 L46.0,5.91 L46.7,5.79 L47.3,5.75 L48.0,5.94 L48.7,6.25 L49.3,6.54 L50.0,6.46 L50.7,6.38 L51.3,6.38 L52.0,6.24 L52.7,6.12 L53.3,6.01 L54.0,5.86 L54.7,5.83 L55.3,6.22 L56.0,6.24 L56.7,6.21 L57.3,6.23 L58.0,6.01 L58.7,5.83 L59.3,5.89 L60.0,5.77 L60.7,5.78 L61.3,5.38 L62.0,5.52 L62.7,5.57 L63.3,5.71 L64.0,5.70 L64.7,5.87 L65.3,6.26 L66.0,6.19 L66.7,6.20 L67.3,5.96 L68.0,6.11 L68.7,6.29 L69.3,6.42 L70.0,6.29 L70.7,6.49 L71.3,6.28 L72.0,6.43 L72.7,6.36 L73.3,6.39 L74.0,6.23 L74.7,6.25 L75.3,5.96 L76.0,5.60 L76.7,5.72 L77.3,5.61 L78.0,5.86 L78.7,6.06 L79.3,6.29 L80.0,6.23 L80.7,5.66 L81.3,5.60 L82.0,5.93 L82.7,6.21 L83.3,6.25 L84.0,6.50 L84.7,6.37 L85.3,6.39 L86.0,6.33 L86.7,6.15 L87.3,6.09 L88.0,5.87 L88.7,5.98 L89.3,5.73 L90.0,5.75 L90.7,5.84 L91.3,6.04 L92.0,6.09 L92.7,6.26 L93.3,5.93 L94.0,5.86 L94.7,5.66 L95.3,5.57 L96.0,5.67 L96.7,5.92 L97.3,6.20 L98.0,6.37 L98.7,6.35 L99.3,6.25 L100.0,6.28 L100.7,6.43 L101.3,6.43 L102.0,6.30 L102.7,6.46 L103.3,6.42 L104.0,6.54 L104.7,6.46 L105.3,6.29 L106.0,6.05 L106.7,5.65 L107.3,4.97 L108.0,3.78 L108.7,2.93 L109.3,2.56 L110.0,2.67 L110.7,2.93 L111.3,3.65 L112.0,4.38 L112.7,5.07 L113.3,5.58 L114.0,5.86 L114.7,5.84 L115.3,5.70 L116.0,5.22 L116.7,4.89 L117.3,4.60 L118.0,4.64 L118.7,4.72 L119.3,5.02 L120.0,5.21 L120.7,5.79 L121.3,5.86 L122.0,6.07 L122.7,6.20 L123.3,6.10 L124.0,6.27 L124.7,6.12 L125.3,6.17 L126.0,6.16 L126.7,6.18 L127.3,6.12 L128.0,6.19 L128.7,6.18 L129.3,5.84 L130.0,5.94 L130.7,5.62 L131.3,5.61 L132.0,5.74 L132.7,6.00 L133.3,6.10 L134.0,6.22 L134.7,6.31 L135.3,6.37 L136.0,6.34 L136.7,6.33 L137.3,6.38 L138.0,6.40 L138.7,6.50 L139.3,6.28 L140.0,6.34 L140.7,6.34 L141.3,6.12 L142.0,5.76 L142.7,5.98 L143.3,6.12 L144.0,6.21 L144.7,6.25 L145.3,6.44 L146.0,6.43 L146.7,6.37 L147.3,6.30 L148.0,5.70 L148.7,5.80 L149.3,5.78 L150.0,6.34 L150.7,6.48 L151.3,6.29 L152.0,6.30 L152.7,6.48 L153.3,6.38 L154.0,6.41 L154.7,6.33 L155.3,6.49 L156.0,6.30 L156.7,6.25 L157.3,6.30 L158.0,6.10 L158.7,5.87 L159.3,5.92 L160.0,5.92 L160.7,6.14 L161.3,6.30 L162.0,6.39 L162.7,6.08 L163.3,5.81 L164.0,5.90 L164.7,5.80 L165.3,5.71 L166.0,5.74 L166.7,5.86 L167.3,5.72 L168.0,5.92 L168.7,5.81 L169.3,5.83 L170.0,5.80 L170.7,5.49 L171.3,5.52 L172.0,5.60 L172.7,5.34 L173.3,5.08 L174.0,4.92 L174.7,5.09 L175.3,5.58 L176.0,5.94 L176.7,6.16 L177.3,6.15 L178.0,5.81 L178.7,5.81 L179.3,5.86 L180.0,5.77 L180.7,6.08 L181.3,6.25 L182.0,6.26 L182.7,6.28 L183.3,6.15 L184.0,6.01 L184.7,5.65 L185.3,5.53 L186.0,5.63 L186.7,5.93 L187.3,5.84 L188.0,6.05 L188.7,6.26 L189.3,6.49 L190.0,6.27 L190.7,6.36 L191.3,6.36 L192.0,6.54 L192.7,6.33 L193.3,6.53 L194.0,6.31 L194.7,6.09 L195.3,5.68 L196.0,5.68 L196.7,6.12 L197.3,6.28 L198.0,6.46 L198.7,6.43 L199.3,6.37 L200.0,6.54 L200.7,6.43 L201.3,6.26 L202.0,6.32 L202.7,6.29 L203.3,6.46 L204.0,6.34 L204.7,6.31 L205.3,6.34 L206.0,6.42 L206.7,6.50 L207.3,6.54 L208.0,6.28 L208.7,6.27 L209.3,6.47 L210.0,6.32 L210.7,6.39 L211.3,6.24 L212.0,6.03 L212.7,6.07 L213.3,6.00 L214.0,6.24 L214.7,6.30 L215.3,6.49 L216.0,6.37 L216.7,6.19 L217.3,5.84 L218.0,6.11 L218.7,6.10 L219.3,6.42 L220.0,6.04 L220.7,6.02 L221.3,6.01 L222.0,6.24 L222.7,6.20 L223.3,6.26 L224.0,6.07 L224.7,6.00 L225.3,5.97 L226.0,5.93 L226.7,6.06 L227.3,6.06 L228.0,6.36 L228.7,6.22 L229.3,5.76 L230.0,5.69 L230.7,5.29 L231.3,5.49 L232.0,5.42 L232.7,5.38 L233.3,5.33 L234.0,5.70 L234.7,5.67 L235.3,6.10 L236.0,6.13 L236.7,6.45 L237.3,6.27 L238.0,6.44 L238.7,6.39 L239.3,6.34 L240.0,6.11 L240.7,5.93 L241.3,5.56 L242.0,5.53 L242.7,5.48 L243.3,5.19 L244.0,5.28 L244.7,4.93 L245.3,4.43 L246.0,4.64 L246.7,5.20 L247.3,5.47 L248.0,5.99 L248.7,5.94 L249.3,6.16 L250.0,6.27 L250.7,6.27 L251.3,6.51 L252.0,6.49 L252.7,6.51 L253.3,6.40 L254.0,6.36 L254.7,6.24 L255.3,5.99 L256.0,5.67 L256.7,5.66 L257.3,5.65 L258.0,5.77 L258.7,5.73 L259.3,5.78 L260.0,5.80 L260.7,5.62 L261.3,5.69 L262.0,5.66 L262.7,5.83 L263.3,5.81 L264.0,5.64 L264.7,5.53 L265.3,5.82 L266.0,5.96 L266.0,10.04 L265.3,10.18 L264.7,10.47 L264.0,10.36 L263.3,10.19 L262.7,10.17 L262.0,10.34 L261.3,10.31 L260.7,10.38 L260.0,10.20 L259.3,10.22 L258.7,10.27 L258.0,10.23 L257.3,10.35 L256.7,10.34 L256.0,10.33 L255.3,10.01 L254.7,9.76 L254.0,9.64 L253.3,9.60 L252.7,9.49 L252.0,9.51 L251.3,9.49 L250.7,9.73 L250.0,9.73 L249.3,9.84 L248.7,10.06 L248.0,10.01 L247.3,10.53 L246.7,10.80 L246.0,11.36 L245.3,11.57 L244.7,11.07 L244.0,10.72 L243.3,10.81 L242.7,10.52 L242.0,10.47 L241.3,10.44 L240.7,10.07 L240.0,9.89 L239.3,9.66 L238.7,9.61 L238.0,9.56 L237.3,9.73 L236.7,9.55 L236.0,9.87 L235.3,9.90 L234.7,10.33 L234.0,10.30 L233.3,10.67 L232.7,10.62 L232.0,10.58 L231.3,10.51 L230.7,10.71 L230.0,10.31 L229.3,10.24 L228.7,9.78 L228.0,9.64 L227.3,9.94 L226.7,9.94 L226.0,10.07 L225.3,10.03 L224.7,10.00 L224.0,9.93 L223.3,9.74 L222.7,9.80 L222.0,9.76 L221.3,9.99 L220.7,9.98 L220.0,9.96 L219.3,9.58 L218.7,9.90 L218.0,9.89 L217.3,10.16 L216.7,9.81 L216.0,9.63 L215.3,9.51 L214.7,9.70 L214.0,9.76 L213.3,10.00 L212.7,9.93 L212.0,9.97 L211.3,9.76 L210.7,9.61 L210.0,9.68 L209.3,9.53 L208.7,9.73 L208.0,9.72 L207.3,9.46 L206.7,9.50 L206.0,9.58 L205.3,9.66 L204.7,9.69 L204.0,9.66 L203.3,9.54 L202.7,9.71 L202.0,9.68 L201.3,9.74 L200.7,9.57 L200.0,9.46 L199.3,9.63 L198.7,9.57 L198.0,9.54 L197.3,9.72 L196.7,9.88 L196.0,10.32 L195.3,10.32 L194.7,9.91 L194.0,9.69 L193.3,9.47 L192.7,9.67 L192.0,9.46 L191.3,9.64 L190.7,9.64 L190.0,9.73 L189.3,9.51 L188.7,9.74 L188.0,9.95 L187.3,10.16 L186.7,10.07 L186.0,10.37 L185.3,10.47 L184.7,10.35 L184.0,9.99 L183.3,9.85 L182.7,9.72 L182.0,9.74 L181.3,9.75 L180.7,9.92 L180.0,10.23 L179.3,10.14 L178.7,10.19 L178.0,10.19 L177.3,9.85 L176.7,9.84 L176.0,10.06 L175.3,10.42 L174.7,10.91 L174.0,11.08 L173.3,10.92 L172.7,10.66 L172.0,10.40 L171.3,10.48 L170.7,10.51 L170.0,10.20 L169.3,10.17 L168.7,10.19 L168.0,10.08 L167.3,10.28 L166.7,10.14 L166.0,10.26 L165.3,10.29 L164.7,10.20 L164.0,10.10 L163.3,10.19 L162.7,9.92 L162.0,9.61 L161.3,9.70 L160.7,9.86 L160.0,10.08 L159.3,10.08 L158.7,10.13 L158.0,9.90 L157.3,9.70 L156.7,9.75 L156.0,9.70 L155.3,9.51 L154.7,9.67 L154.0,9.59 L153.3,9.62 L152.7,9.52 L152.0,9.70 L151.3,9.71 L150.7,9.52 L150.0,9.66 L149.3,10.22 L148.7,10.20 L148.0,10.30 L147.3,9.70 L146.7,9.63 L146.0,9.57 L145.3,9.56 L144.7,9.75 L144.0,9.79 L143.3,9.88 L142.7,10.02 L142.0,10.24 L141.3,9.88 L140.7,9.66 L140.0,9.66 L139.3,9.72 L138.7,9.50 L138.0,9.60 L137.3,9.62 L136.7,9.67 L136.0,9.66 L135.3,9.63 L134.7,9.69 L134.0,9.78 L133.3,9.90 L132.7,10.00 L132.0,10.26 L131.3,10.39 L130.7,10.38 L130.0,10.06 L129.3,10.16 L128.7,9.82 L128.0,9.81 L127.3,9.88 L126.7,9.82 L126.0,9.84 L125.3,9.83 L124.7,9.88 L124.0,9.73 L123.3,9.90 L122.7,9.80 L122.0,9.93 L121.3,10.14 L120.7,10.21 L120.0,10.79 L119.3,10.98 L118.7,11.28 L118.0,11.36 L117.3,11.40 L116.7,11.11 L116.0,10.78 L115.3,10.30 L114.7,10.16 L114.0,10.14 L113.3,10.42 L112.7,10.93 L112.0,11.62 L111.3,12.35 L110.7,13.07 L110.0,13.33 L109.3,13.44 L108.7,13.07 L108.0,12.22 L107.3,11.03 L106.7,10.35 L106.0,9.95 L105.3,9.71 L104.7,9.54 L104.0,9.46 L103.3,9.58 L102.7,9.54 L102.0,9.70 L101.3,9.57 L100.7,9.57 L100.0,9.72 L99.3,9.75 L98.7,9.65 L98.0,9.63 L97.3,9.80 L96.7,10.08 L96.0,10.33 L95.3,10.43 L94.7,10.34 L94.0,10.14 L93.3,10.07 L92.7,9.74 L92.0,9.91 L91.3,9.96 L90.7,10.16 L90.0,10.25 L89.3,10.27 L88.7,10.02 L88.0,10.13 L87.3,9.91 L86.7,9.85 L86.0,9.67 L85.3,9.61 L84.7,9.63 L84.0,9.50 L83.3,9.75 L82.7,9.79 L82.0,10.07 L81.3,10.40 L80.7,10.34 L80.0,9.77 L79.3,9.71 L78.7,9.94 L78.0,10.14 L77.3,10.39 L76.7,10.28 L76.0,10.40 L75.3,10.04 L74.7,9.75 L74.0,9.77 L73.3,9.61 L72.7,9.64 L72.0,9.57 L71.3,9.72 L70.7,9.51 L70.0,9.71 L69.3,9.58 L68.7,9.71 L68.0,9.89 L67.3,10.04 L66.7,9.80 L66.0,9.81 L65.3,9.74 L64.7,10.13 L64.0,10.30 L63.3,10.29 L62.7,10.43 L62.0,10.48 L61.3,10.62 L60.7,10.22 L60.0,10.23 L59.3,10.11 L58.7,10.17 L58.0,9.99 L57.3,9.77 L56.7,9.79 L56.0,9.76 L55.3,9.78 L54.7,10.17 L54.0,10.14 L53.3,9.99 L52.7,9.88 L52.0,9.76 L51.3,9.62 L50.7,9.62 L50.0,9.54 L49.3,9.46 L48.7,9.75 L48.0,10.06 L47.3,10.25 L46.7,10.21 L46.0,10.09 L45.3,9.81 L44.7,9.65 L44.0,9.77 L43.3,9.57 L42.7,9.84 L42.0,9.84 L41.3,10.03 L40.7,9.84 L40.0,9.69 L39.3,9.80 L38.7,9.50 L38.0,9.69 L37.3,9.71 L36.7,9.59 L36.0,9.65 L35.3,9.82 L34.7,9.85 L34.0,9.84 L33.3,9.97 L32.7,10.30 L32.0,10.13 L31.3,9.94 L30.7,9.81 L30.0,9.83 L29.3,9.63 L28.7,9.64 L28.0,9.48 L27.3,9.70 L26.7,9.70 L26.0,9.45 L25.3,9.61 L24.7,9.68 L24.0,9.56 L23.3,9.49 L22.7,9.63 L22.0,9.71 L21.3,9.60 L20.7,9.64 L20.0,9.48 L19.3,9.52 L18.7,9.74 L18.0,9.84 L17.3,10.11 L16.7,10.38 L16.0,10.43 L15.3,10.63 L14.7,10.56 L14.0,10.92 L13.3,11.04 L12.7,11.23 L12.0,11.01 L11.3,10.59 L10.7,9.98 L10.0,9.95 L9.3,9.56 L8.7,9.77 L8.0,9.47 L7.3,9.52 L6.7,9.73 L6.0,9.68 L5.3,9.64 L4.7,9.75 L4.0,9.92 L3.3,10.60 L2.7,11.70 L2.0,12.24 L1.3,11.54 L0.7,10.85 L0.0,9.89Z" fill="#eeeeee"/></svg></div>
<div class="li" style="top:468.35px;height:64.75px;background:#aa00ff"><svg class="th" style="left:4px;top:4.20px;width:57px;height:56px;" width="57" height="56" viewBox="0 0 57 56"><defs><filter id="bl" x="-10%" y="-10%" width="120%" height="120%"><feGaussianBlur stdDeviation="1.6"/></filter><filter id="bl2"><feGaussianBlur stdDeviation="0.5"/></filter><filter id="bl3" x="-5%" y="-5%" width="110%" height="110%"><feGaussianBlur stdDeviation="0.7"/></filter></defs><rect width="57" height="56" fill="#a6a8a5"/><rect x="0" y="0.5" width="57" height="1.3" fill="#7c7f7b"/><rect x="0" y="1.8" width="57" height="1.2" fill="#b8bab7"/><rect x="0" y="6.8" width="57" height="1.3" fill="#7c7f7b"/><rect x="0" y="8.1" width="57" height="1.2" fill="#b8bab7"/><rect x="0" y="13.1" width="57" height="1.3" fill="#7c7f7b"/><rect x="0" y="14.4" width="57" height="1.2" fill="#b8bab7"/><rect x="0" y="19.4" width="57" height="1.3" fill="#7c7f7b"/><rect x="0" y="20.7" width="57" height="1.2" fill="#b8bab7"/><rect x="0" y="25.7" width="57" height="1.3" fill="#7c7f7b"/><rect x="0" y="27.0" width="57" height="1.2" fill="#b8bab7"/><rect x="0" y="32" width="57" height="1.3" fill="#7c7f7b"/><rect x="0" y="33.3" width="57" height="1.2" fill="#b8bab7"/><rect x="0" y="38.3" width="57" height="1.3" fill="#7c7f7b"/><rect x="0" y="39.599999999999994" width="57" height="1.2" fill="#b8bab7"/><rect x="0" y="44.6" width="57" height="1.3" fill="#7c7f7b"/><rect x="0" y="45.9" width="57" height="1.2" fill="#b8bab7"/><rect x="0" y="50.9" width="57" height="1.3" fill="#7c7f7b"/><rect x="0" y="52.199999999999996" width="57" height="1.2" fill="#b8bab7"/><g transform="translate(2.2,7.1) scale(0.9,1.05)" font-family="Liberation Mono" font-weight="bold" font-size="7.8" fill="#f2f4f2" stroke="#f2f4f2" stroke-width="0.35"><text x="0" y="0">ROM</text><text x="0" y="6.1">PE</text><text x="0" y="12.2">MOL</text><text x="0" y="18.3">DES</text></g><rect x="24" y="30" width="17" height="12" fill="#555855" opacity="0.85"/><g filter="url(#bl3)"><path d="M-2 58 L-2 32 Q6 28 14 31 Q20 34 24 40 Q32 38 40 36 Q44 28 50 27 Q56 26 59 28 L59 58Z" fill="#3a4c3a" opacity="0.85"/><ellipse cx="1.2" cy="34.2" rx="2.3" ry="1.0" fill="#2a3a2c" transform="rotate(-2 1.2 34.2)"/><ellipse cx="30.7" cy="46.0" rx="3.4" ry="1.1" fill="#3a4c3a" transform="rotate(39 30.7 46.0)"/><ellipse cx="13.0" cy="30.8" rx="2.3" ry="1.0" fill="#2a3a2c" transform="rotate(-50 13.0 30.8)"/><ellipse cx="17.2" cy="42.7" rx="3.6" ry="1.0" fill="#5a7a4e" transform="rotate(-13 17.2 42.7)"/><ellipse cx="53.6" cy="45.2" rx="1.9" ry="2.3" fill="#3a4c3a" transform="rotate(16 53.6 45.2)"/><ellipse cx="46.9" cy="34.2" rx="2.8" ry="1.7" fill="#3a4c3a" transform="rotate(-49 46.9 34.2)"/><ellipse cx="22.3" cy="53.8" rx="2.5" ry="2.0" fill="#4a564a" transform="rotate(26 22.3 53.8)"/><ellipse cx="52.3" cy="42.6" rx="2.9" ry="1.5" fill="#6a8a5a" transform="rotate(42 52.3 42.6)"/><ellipse cx="48.0" cy="55.4" rx="2.9" ry="1.1" fill="#223024" transform="rotate(-41 48.0 55.4)"/><ellipse cx="42.1" cy="39.6" rx="3.2" ry="0.8" fill="#4a564a" transform="rotate(-4 42.1 39.6)"/><ellipse cx="-1.2" cy="41.2" rx="1.8" ry="1.8" fill="#2a3a2c" transform="rotate(31 -1.2 41.2)"/><ellipse cx="15.5" cy="44.1" rx="3.2" ry="2.1" fill="#304232" transform="rotate(-31 15.5 44.1)"/><ellipse cx="58.5" cy="41.3" rx="3.2" ry="0.9" fill="#6a8a5a" transform="rotate(-48 58.5 41.3)"/><ellipse cx="13.6" cy="40.3" rx="1.9" ry="1.6" fill="#2a3a2c" transform="rotate(29 13.6 40.3)"/><ellipse cx="1.8" cy="41.1" rx="1.4" ry="1.6" fill="#8aa070" transform="rotate(-2 1.8 41.1)"/><ellipse cx="2.5" cy="50.0" rx="2.3" ry="2.6" fill="#4e6a46" transform="rotate(-46 2.5 50.0)"/><ellipse cx="43.8" cy="38.0" rx="2.1" ry="2.0" fill="#223024" transform="rotate(-42 43.8 38.0)"/><ellipse cx="41.8" cy="48.4" rx="2.2" ry="1.2" fill="#5a7a4e" transform="rotate(47 41.8 48.4)"/><ellipse cx="29.6" cy="49.7" rx="1.6" ry="2.0" fill="#223024" transform="rotate(-3 29.6 49.7)"/><ellipse cx="5.7" cy="57.3" rx="2.5" ry="1.9" fill="#223024" transform="rotate(5 5.7 57.3)"/><ellipse cx="1.8" cy="35.4" rx="2.9" ry="1.4" fill="#4a564a" transform="rotate(42 1.8 35.4)"/><ellipse cx="57.8" cy="48.1" rx="2.0" ry="2.2" fill="#8aa070" transform="rotate(-9 57.8 48.1)"/><ellipse cx="51.2" cy="43.4" rx="1.6" ry="1.7" fill="#3a4c3a" transform="rotate(-22 51.2 43.4)"/><ellipse cx="52.5" cy="38.2" rx="1.9" ry="1.7" fill="#7a9a68" transform="rotate(-17 52.5 38.2)"/><ellipse cx="22.3" cy="56.9" rx="1.4" ry="1.2" fill="#5a7a4e" transform="rotate(-26 22.3 56.9)"/><ellipse cx="14.4" cy="36.9" rx="2.8" ry="1.0" fill="#304232" transform="rotate(18 14.4 36.9)"/><ellipse cx="6.3" cy="55.4" rx="2.5" ry="1.5" fill="#8aa070" transform="rotate(12 6.3 55.4)"/><ellipse cx="18.8" cy="55.6" rx="3.4" ry="2.5" fill="#2a3a2c" transform="rotate(26 18.8 55.6)"/><ellipse cx="35.2" cy="48.9" rx="3.0" ry="1.0" fill="#4e6a46" transform="rotate(-4 35.2 48.9)"/><ellipse cx="56.4" cy="53.7" rx="2.0" ry="1.2" fill="#304232" transform="rotate(-27 56.4 53.7)"/><ellipse cx="21.3" cy="54.5" rx="3.4" ry="1.5" fill="#6a8a5a" transform="rotate(21 21.3 54.5)"/><ellipse cx="21.0" cy="41.2" rx="2.0" ry="2.4" fill="#3e5040" transform="rotate(-9 21.0 41.2)"/><ellipse cx="1.3" cy="41.8" rx="2.7" ry="1.3" fill="#4a564a" transform="rotate(-9 1.3 41.8)"/><ellipse cx="12.8" cy="42.9" rx="3.4" ry="1.8" fill="#4e6a46" transform="rotate(14 12.8 42.9)"/><ellipse cx="33.1" cy="56.6" rx="2.1" ry="0.9" fill="#4e6a46" transform="rotate(34 33.1 56.6)"/><ellipse cx="28.3" cy="42.4" rx="2.6" ry="1.6" fill="#3a4c3a" transform="rotate(-3 28.3 42.4)"/><ellipse cx="52.4" cy="34.6" rx="3.4" ry="1.6" fill="#3e5040" transform="rotate(49 52.4 34.6)"/><ellipse cx="55.7" cy="49.2" rx="3.5" ry="0.8" fill="#304232" transform="rotate(38 55.7 49.2)"/><ellipse cx="52.2" cy="54.1" rx="1.9" ry="2.6" fill="#2a3a2c" transform="rotate(27 52.2 54.1)"/><ellipse cx="-1.2" cy="49.6" rx="1.7" ry="1.3" fill="#8aa070" transform="rotate(-26 -1.2 49.6)"/><ellipse cx="16.5" cy="54.3" rx="2.4" ry="1.3" fill="#4e6a46" transform="rotate(28 16.5 54.3)"/><ellipse cx="31.2" cy="45.0" rx="1.7" ry="2.5" fill="#4e6a46" transform="rotate(2 31.2 45.0)"/><ellipse cx="46.7" cy="41.5" rx="1.4" ry="1.6" fill="#3e5040" transform="rotate(-5 46.7 41.5)"/><ellipse cx="7.4" cy="34.9" rx="3.6" ry="2.6" fill="#304232" transform="rotate(-24 7.4 34.9)"/><ellipse cx="2.5" cy="56.1" rx="1.2" ry="2.0" fill="#2a3a2c" transform="rotate(-19 2.5 56.1)"/><ellipse cx="42.6" cy="54.4" rx="2.3" ry="1.3" fill="#5a7a4e" transform="rotate(-14 42.6 54.4)"/><ellipse cx="38.9" cy="54.8" rx="1.8" ry="0.8" fill="#304232" transform="rotate(9 38.9 54.8)"/><ellipse cx="11.7" cy="36.9" rx="2.9" ry="1.6" fill="#223024" transform="rotate(-41 11.7 36.9)"/><ellipse cx="58.0" cy="42.9" rx="1.3" ry="1.1" fill="#2a3a2c" transform="rotate(-34 58.0 42.9)"/><ellipse cx="5.4" cy="56.0" rx="2.1" ry="1.9" fill="#3a4c3a" transform="rotate(-14 5.4 56.0)"/><ellipse cx="20.1" cy="47.0" rx="1.3" ry="1.7" fill="#2a3a2c" transform="rotate(25 20.1 47.0)"/><ellipse cx="38.5" cy="53.3" rx="3.2" ry="1.2" fill="#223024" transform="rotate(-34 38.5 53.3)"/><ellipse cx="51.5" cy="32.2" rx="3.4" ry="1.1" fill="#3a4c3a" transform="rotate(-46 51.5 32.2)"/><ellipse cx="4.0" cy="37.4" rx="2.3" ry="1.2" fill="#2a3a2c" transform="rotate(-31 4.0 37.4)"/><ellipse cx="5.0" cy="49.9" rx="1.5" ry="0.9" fill="#304232" transform="rotate(-20 5.0 49.9)"/><ellipse cx="12.3" cy="42.5" rx="2.9" ry="1.0" fill="#7a9a68" transform="rotate(35 12.3 42.5)"/><ellipse cx="22.4" cy="54.2" rx="3.3" ry="0.9" fill="#6a8a5a" transform="rotate(-14 22.4 54.2)"/><ellipse cx="12.3" cy="45.9" rx="1.2" ry="2.4" fill="#4a564a" transform="rotate(19 12.3 45.9)"/><ellipse cx="14.1" cy="42.1" rx="3.8" ry="1.5" fill="#223024" transform="rotate(-46 14.1 42.1)"/><ellipse cx="34.8" cy="46.3" rx="3.0" ry="0.8" fill="#2a3a2c" transform="rotate(32 34.8 46.3)"/><ellipse cx="15.9" cy="40.9" rx="1.7" ry="1.4" fill="#4a564a" transform="rotate(26 15.9 40.9)"/><ellipse cx="56.4" cy="44.0" rx="2.2" ry="2.0" fill="#7a9a68" transform="rotate(4 56.4 44.0)"/><ellipse cx="45.5" cy="36.5" rx="3.5" ry="2.6" fill="#5a7a4e" transform="rotate(-17 45.5 36.5)"/><ellipse cx="42.5" cy="50.9" rx="3.5" ry="2.0" fill="#3a4c3a" transform="rotate(-27 42.5 50.9)"/><ellipse cx="4.1" cy="58.0" rx="2.8" ry="1.3" fill="#2a3a2c" transform="rotate(-4 4.1 58.0)"/><ellipse cx="1.5" cy="38.5" rx="1.5" ry="1.5" fill="#3e5040" transform="rotate(20 1.5 38.5)"/><ellipse cx="50.7" cy="48.0" rx="1.5" ry="2.4" fill="#4a564a" transform="rotate(47 50.7 48.0)"/><ellipse cx="58.0" cy="37.3" rx="3.7" ry="0.8" fill="#3e5040" transform="rotate(-38 58.0 37.3)"/><ellipse cx="54.9" cy="41.2" rx="2.2" ry="2.5" fill="#4a564a" transform="rotate(-27 54.9 41.2)"/><ellipse cx="48.0" cy="32.0" rx="1.2" ry="1.2" fill="#223024" transform="rotate(-34 48.0 32.0)"/><ellipse cx="47.0" cy="30.5" rx="2.6" ry="1.6" fill="#223024" transform="rotate(-11 47.0 30.5)"/><ellipse cx="2.0" cy="32.4" rx="3.3" ry="1.5" fill="#4a564a" transform="rotate(36 2.0 32.4)"/><ellipse cx="31.2" cy="43.4" rx="2.0" ry="1.9" fill="#3a4c3a" transform="rotate(-48 31.2 43.4)"/><ellipse cx="38.6" cy="45.5" rx="3.5" ry="1.2" fill="#5a7a4e" transform="rotate(4 38.6 45.5)"/><ellipse cx="2.0" cy="52.7" rx="3.7" ry="1.1" fill="#6a8a5a" transform="rotate(-42 2.0 52.7)"/><ellipse cx="25.4" cy="57.4" rx="2.2" ry="2.1" fill="#4a564a" transform="rotate(18 25.4 57.4)"/><ellipse cx="55.3" cy="30.2" rx="3.4" ry="1.2" fill="#3e5040" transform="rotate(-11 55.3 30.2)"/><ellipse cx="40.8" cy="34.2" rx="1.3" ry="2.3" fill="#4a564a" transform="rotate(-44 40.8 34.2)"/><ellipse cx="49.1" cy="51.9" rx="3.5" ry="1.9" fill="#304232" transform="rotate(32 49.1 51.9)"/><ellipse cx="38.1" cy="57.5" rx="2.9" ry="1.0" fill="#6a8a5a" transform="rotate(34 38.1 57.5)"/><ellipse cx="47.0" cy="32.1" rx="3.0" ry="1.9" fill="#223024" transform="rotate(40 47.0 32.1)"/><ellipse cx="14.1" cy="41.9" rx="1.7" ry="1.8" fill="#3e5040" transform="rotate(-39 14.1 41.9)"/><ellipse cx="58.5" cy="55.8" rx="3.5" ry="1.9" fill="#8aa070" transform="rotate(34 58.5 55.8)"/><ellipse cx="34.6" cy="48.2" rx="2.9" ry="1.9" fill="#223024" transform="rotate(-47 34.6 48.2)"/><ellipse cx="20.7" cy="54.5" rx="2.4" ry="2.0" fill="#8aa070" transform="rotate(47 20.7 54.5)"/><ellipse cx="32.3" cy="50.6" rx="3.2" ry="1.4" fill="#7a9a68" transform="rotate(-44 32.3 50.6)"/><ellipse cx="33.7" cy="48.8" rx="2.2" ry="1.6" fill="#5a7a4e" transform="rotate(34 33.7 48.8)"/><ellipse cx="35.7" cy="44.2" rx="2.2" ry="1.0" fill="#2a3a2c" transform="rotate(47 35.7 44.2)"/><ellipse cx="55.1" cy="56.0" rx="3.2" ry="2.4" fill="#223024" transform="rotate(-8 55.1 56.0)"/><ellipse cx="17.2" cy="47.0" rx="3.4" ry="2.2" fill="#4a564a" transform="rotate(-16 17.2 47.0)"/><ellipse cx="18.6" cy="43.5" rx="1.8" ry="2.1" fill="#4a564a" transform="rotate(16 18.6 43.5)"/><ellipse cx="41.4" cy="32.3" rx="3.6" ry="1.1" fill="#304232" transform="rotate(37 41.4 32.3)"/><ellipse cx="39.8" cy="53.4" rx="1.7" ry="1.8" fill="#6a8a5a" transform="rotate(48 39.8 53.4)"/><ellipse cx="58.0" cy="43.0" rx="1.2" ry="1.1" fill="#4a564a" transform="rotate(14 58.0 43.0)"/><ellipse cx="36.9" cy="44.0" rx="2.3" ry="2.3" fill="#3a4c3a" transform="rotate(-44 36.9 44.0)"/><ellipse cx="36.9" cy="55.6" rx="3.0" ry="2.6" fill="#2a3a2c" transform="rotate(-36 36.9 55.6)"/><ellipse cx="0.3" cy="57.3" rx="2.1" ry="2.2" fill="#3e5040" transform="rotate(38 0.3 57.3)"/><ellipse cx="39.1" cy="50.1" rx="3.1" ry="2.3" fill="#4a564a" transform="rotate(-21 39.1 50.1)"/><ellipse cx="-0.0" cy="35.3" rx="2.4" ry="2.3" fill="#223024" transform="rotate(31 -0.0 35.3)"/><ellipse cx="49.1" cy="38.4" rx="2.9" ry="1.0" fill="#3a4c3a" transform="rotate(19 49.1 38.4)"/><ellipse cx="17.0" cy="32.3" rx="1.7" ry="0.9" fill="#3e5040" transform="rotate(-49 17.0 32.3)"/><ellipse cx="34.6" cy="49.3" rx="2.2" ry="1.7" fill="#304232" transform="rotate(-6 34.6 49.3)"/><ellipse cx="12.0" cy="49.8" rx="3.1" ry="1.0" fill="#8aa070" transform="rotate(-2 12.0 49.8)"/><ellipse cx="4.3" cy="38.4" rx="3.0" ry="1.5" fill="#5a7a4e" transform="rotate(4 4.3 38.4)"/><ellipse cx="47.9" cy="47.6" rx="2.4" ry="2.1" fill="#4a564a" transform="rotate(-45 47.9 47.6)"/><ellipse cx="23.3" cy="41.7" rx="2.0" ry="1.7" fill="#4a564a" transform="rotate(-8 23.3 41.7)"/><ellipse cx="20.4" cy="41.1" rx="2.8" ry="1.0" fill="#3e5040" transform="rotate(-9 20.4 41.1)"/><ellipse cx="0.0" cy="37.3" rx="1.9" ry="2.1" fill="#8aa070" transform="rotate(10 0.0 37.3)"/><ellipse cx="20.0" cy="49.6" rx="3.5" ry="1.9" fill="#304232" transform="rotate(-8 20.0 49.6)"/><ellipse cx="12.7" cy="43.7" rx="1.8" ry="1.4" fill="#304232" transform="rotate(9 12.7 43.7)"/><ellipse cx="27.4" cy="46.0" rx="2.8" ry="1.6" fill="#223024" transform="rotate(42 27.4 46.0)"/><ellipse cx="53.7" cy="30.4" rx="2.2" ry="1.6" fill="#8aa070" transform="rotate(-9 53.7 30.4)"/><ellipse cx="21.3" cy="50.1" rx="2.6" ry="1.2" fill="#4e6a46" transform="rotate(15 21.3 50.1)"/><ellipse cx="25.1" cy="51.0" rx="2.8" ry="2.2" fill="#8aa070" transform="rotate(-20 25.1 51.0)"/><ellipse cx="53.4" cy="40.5" rx="3.1" ry="0.9" fill="#2a3a2c" transform="rotate(-3 53.4 40.5)"/><ellipse cx="26.4" cy="51.4" rx="1.6" ry="1.1" fill="#304232" transform="rotate(-33 26.4 51.4)"/><ellipse cx="56.8" cy="52.0" rx="2.3" ry="1.1" fill="#304232" transform="rotate(28 56.8 52.0)"/><ellipse cx="47.8" cy="36.9" rx="2.7" ry="0.9" fill="#304232" transform="rotate(28 47.8 36.9)"/><ellipse cx="25.3" cy="43.3" rx="3.2" ry="1.9" fill="#3a4c3a" transform="rotate(-45 25.3 43.3)"/><ellipse cx="4.1" cy="32.7" rx="1.8" ry="1.1" fill="#304232" transform="rotate(-38 4.1 32.7)"/><ellipse cx="57.8" cy="43.7" rx="2.8" ry="1.2" fill="#6a8a5a" transform="rotate(-20 57.8 43.7)"/><ellipse cx="39.0" cy="43.1" rx="3.2" ry="1.8" fill="#2a3a2c" transform="rotate(28 39.0 43.1)"/><ellipse cx="27.7" cy="47.8" rx="3.1" ry="1.1" fill="#304232" transform="rotate(-21 27.7 47.8)"/><ellipse cx="16.3" cy="48.9" rx="2.3" ry="1.1" fill="#4a564a" transform="rotate(-25 16.3 48.9)"/><ellipse cx="7.7" cy="35.7" rx="2.5" ry="2.1" fill="#6a8a5a" transform="rotate(39 7.7 35.7)"/><ellipse cx="-1.0" cy="50.7" rx="2.8" ry="2.0" fill="#6a8a5a" transform="rotate(29 -1.0 50.7)"/><ellipse cx="24.3" cy="52.9" rx="3.5" ry="2.2" fill="#7a9a68" transform="rotate(-16 24.3 52.9)"/><ellipse cx="12.4" cy="34.9" rx="1.7" ry="1.1" fill="#2a3a2c" transform="rotate(2 12.4 34.9)"/><ellipse cx="29.3" cy="57.6" rx="1.4" ry="1.6" fill="#223024" transform="rotate(19 29.3 57.6)"/><ellipse cx="16.9" cy="51.4" rx="2.9" ry="1.1" fill="#4e6a46" transform="rotate(45 16.9 51.4)"/><ellipse cx="42.7" cy="53.5" rx="1.5" ry="1.7" fill="#3a4c3a" transform="rotate(-35 42.7 53.5)"/><ellipse cx="12.1" cy="40.5" rx="3.6" ry="1.3" fill="#2a3a2c" transform="rotate(-37 12.1 40.5)"/><ellipse cx="-1.4" cy="50.6" rx="2.2" ry="1.6" fill="#304232" transform="rotate(-20 -1.4 50.6)"/><ellipse cx="8.9" cy="49.3" rx="1.7" ry="1.6" fill="#8aa070" transform="rotate(-19 8.9 49.3)"/><ellipse cx="42.9" cy="40.8" rx="2.2" ry="1.3" fill="#223024" transform="rotate(18 42.9 40.8)"/><ellipse cx="40.8" cy="48.6" rx="1.2" ry="2.5" fill="#304232" transform="rotate(36 40.8 48.6)"/><ellipse cx="34.5" cy="42.8" rx="2.8" ry="1.6" fill="#3a4c3a" transform="rotate(41 34.5 42.8)"/><ellipse cx="-1.8" cy="44.2" rx="2.4" ry="2.0" fill="#7a9a68" transform="rotate(-33 -1.8 44.2)"/><ellipse cx="47.0" cy="33.5" rx="1.7" ry="2.2" fill="#304232" transform="rotate(17 47.0 33.5)"/><ellipse cx="5.6" cy="48.6" rx="3.2" ry="1.8" fill="#8aa070" transform="rotate(3 5.6 48.6)"/><ellipse cx="13.8" cy="52.0" rx="2.9" ry="2.2" fill="#4e6a46" transform="rotate(33 13.8 52.0)"/><ellipse cx="16.4" cy="32.9" rx="2.2" ry="2.5" fill="#4e6a46" transform="rotate(19 16.4 32.9)"/><ellipse cx="43.3" cy="46.6" rx="1.3" ry="1.1" fill="#304232" transform="rotate(-37 43.3 46.6)"/><ellipse cx="29.6" cy="40.7" rx="3.4" ry="2.3" fill="#3a4c3a" transform="rotate(-34 29.6 40.7)"/><ellipse cx="55.8" cy="34.7" rx="3.0" ry="0.9" fill="#3e5040" transform="rotate(11 55.8 34.7)"/><ellipse cx="30.8" cy="48.9" rx="2.9" ry="1.1" fill="#4a564a" transform="rotate(33 30.8 48.9)"/><ellipse cx="10.1" cy="47.8" rx="3.3" ry="0.9" fill="#304232" transform="rotate(30 10.1 47.8)"/><ellipse cx="50.7" cy="36.4" rx="2.4" ry="1.0" fill="#3a4c3a" transform="rotate(-34 50.7 36.4)"/><ellipse cx="13.1" cy="32.8" rx="2.2" ry="1.2" fill="#3e5040" transform="rotate(6 13.1 32.8)"/><ellipse cx="50.1" cy="49.4" rx="1.3" ry="1.9" fill="#2a3a2c" transform="rotate(32 50.1 49.4)"/><ellipse cx="36.0" cy="57.2" rx="3.2" ry="1.4" fill="#6a8a5a" transform="rotate(48 36.0 57.2)"/><ellipse cx="57.0" cy="52.5" rx="2.9" ry="1.2" fill="#3a4c3a" transform="rotate(-25 57.0 52.5)"/><ellipse cx="33.9" cy="45.1" rx="2.5" ry="2.1" fill="#4a564a" transform="rotate(12 33.9 45.1)"/><ellipse cx="20.5" cy="50.5" rx="1.6" ry="1.7" fill="#6a8a5a" transform="rotate(-32 20.5 50.5)"/><ellipse cx="37.0" cy="53.3" rx="2.9" ry="1.5" fill="#304232" transform="rotate(-24 37.0 53.3)"/><ellipse cx="18.0" cy="36.0" rx="1.8" ry="2.4" fill="#6a8a5a" transform="rotate(5 18.0 36.0)"/><ellipse cx="6.3" cy="46.9" rx="2.2" ry="2.1" fill="#2a3a2c" transform="rotate(44 6.3 46.9)"/><ellipse cx="57.2" cy="45.8" rx="3.0" ry="2.4" fill="#4a564a" transform="rotate(-30 57.2 45.8)"/><ellipse cx="13.1" cy="54.3" rx="2.1" ry="1.2" fill="#3e5040" transform="rotate(-42 13.1 54.3)"/><ellipse cx="30.8" cy="45.6" rx="3.2" ry="2.6" fill="#3e5040" transform="rotate(4 30.8 45.6)"/><ellipse cx="8.7" cy="37.2" rx="2.6" ry="1.9" fill="#304232" transform="rotate(47 8.7 37.2)"/><ellipse cx="24.7" cy="46.1" rx="2.4" ry="2.2" fill="#4e6a46" transform="rotate(-48 24.7 46.1)"/><ellipse cx="36.1" cy="52.5" rx="2.2" ry="1.1" fill="#304232" transform="rotate(-8 36.1 52.5)"/><ellipse cx="37.5" cy="55.8" rx="1.8" ry="2.2" fill="#2a3a2c" transform="rotate(-42 37.5 55.8)"/><ellipse cx="28.9" cy="48.6" rx="2.6" ry="2.0" fill="#223024" transform="rotate(44 28.9 48.6)"/><ellipse cx="27.2" cy="57.8" rx="2.8" ry="1.0" fill="#5a7a4e" transform="rotate(34 27.2 57.8)"/><ellipse cx="43.3" cy="53.4" rx="2.9" ry="0.9" fill="#3e5040" transform="rotate(18 43.3 53.4)"/><ellipse cx="12.1" cy="45.9" rx="1.8" ry="1.2" fill="#7a9a68" transform="rotate(48 12.1 45.9)"/><ellipse cx="36.1" cy="41.7" rx="1.8" ry="2.0" fill="#3a4c3a" transform="rotate(-36 36.1 41.7)"/><ellipse cx="12.6" cy="55.7" rx="1.2" ry="0.9" fill="#3a4c3a" transform="rotate(-40 12.6 55.7)"/><rect x="45" y="36" width="2.5" height="14" fill="#9a8a48" opacity="0.8"/></g><rect x="22" y="32" width="1.8" height="24" fill="#2a2a28" opacity="0.8"/><circle cx="28.5" cy="28" r="10.5" fill="none" stroke="rgba(215,215,215,0.42)" stroke-width="4"/><path d="M28.5 17.5 A10.5 10.5 0 0 1 38.6 30.8" fill="none" stroke="rgba(238,238,238,0.92)" stroke-width="4"/></svg><span class="lit" style="letter-spacing:0.157px">Rompemoldes HISTORIA DE LAS PLANTAS...</span><span class="lid">50.7s</span><svg class="wv" width="266" height="16" viewBox="0 0 266 16"><path d="M0.0,5.07 L0.7,4.53 L1.3,3.99 L2.0,3.74 L2.7,3.36 L3.3,3.12 L4.0,2.88 L4.7,2.84 L5.3,2.60 L6.0,2.65 L6.7,2.92 L7.3,3.20 L8.0,3.70 L8.7,4.38 L9.3,4.92 L10.0,5.46 L10.7,5.51 L11.3,5.51 L12.0,5.53 L12.7,5.35 L13.3,5.27 L14.0,4.92 L14.7,4.45 L15.3,4.30 L16.0,4.99 L16.7,5.18 L17.3,5.02 L18.0,4.66 L18.7,4.38 L19.3,4.30 L20.0,4.26 L20.7,4.60 L21.3,4.81 L22.0,5.01 L22.7,5.19 L23.3,5.50 L24.0,5.50 L24.7,5.68 L25.3,6.02 L26.0,5.99 L26.7,6.06 L27.3,5.99 L28.0,5.83 L28.7,5.70 L29.3,5.80 L30.0,5.95 L30.7,6.19 L31.3,6.22 L32.0,6.35 L32.7,6.34 L33.3,6.36 L34.0,6.48 L34.7,6.28 L35.3,6.55 L36.0,6.43 L36.7,6.45 L37.3,6.36 L38.0,6.27 L38.7,5.66 L39.3,5.26 L40.0,4.83 L40.7,4.16 L41.3,3.73 L42.0,3.15 L42.7,3.44 L43.3,4.31 L44.0,5.19 L44.7,5.85 L45.3,6.23 L46.0,6.13 L46.7,6.06 L47.3,6.09 L48.0,6.28 L48.7,6.29 L49.3,6.36 L50.0,6.25 L50.7,6.23 L51.3,6.29 L52.0,6.25 L52.7,5.89 L53.3,5.92 L54.0,5.70 L54.7,5.52 L55.3,5.64 L56.0,6.02 L56.7,6.09 L57.3,6.16 L58.0,6.39 L58.7,6.41 L59.3,6.48 L60.0,6.46 L60.7,6.26 L61.3,6.44 L62.0,6.26 L62.7,6.27 L63.3,6.36 L64.0,6.41 L64.7,6.09 L65.3,6.03 L66.0,5.83 L66.7,5.75 L67.3,5.64 L68.0,6.00 L68.7,6.23 L69.3,6.22 L70.0,6.23 L70.7,5.89 L71.3,5.69 L72.0,5.46 L72.7,5.09 L73.3,4.96 L74.0,5.22 L74.7,5.22 L75.3,5.51 L76.0,5.47 L76.7,5.54 L77.3,5.62 L78.0,5.56 L78.7,5.67 L79.3,5.61 L80.0,5.98 L80.7,5.88 L81.3,5.71 L82.0,5.37 L82.7,5.20 L83.3,5.19 L84.0,5.57 L84.7,5.64 L85.3,6.03 L86.0,6.15 L86.7,6.34 L87.3,6.42 L88.0,6.38 L88.7,6.41 L89.3,6.44 L90.0,6.32 L90.7,6.34 L91.3,6.45 L92.0,6.27 L92.7,6.02 L93.3,5.63 L94.0,5.35 L94.7,5.09 L95.3,4.79 L96.0,4.22 L96.7,4.46 L97.3,5.00 L98.0,5.60 L98.7,6.05 L99.3,6.30 L100.0,6.24 L100.7,6.42 L101.3,6.43 L102.0,6.29 L102.7,6.49 L103.3,6.46 L104.0,6.29 L104.7,6.49 L105.3,6.17 L106.0,6.02 L106.7,5.83 L107.3,5.68 L108.0,5.54 L108.7,5.69 L109.3,6.16 L110.0,6.24 L110.7,6.32 L111.3,6.38 L112.0,6.45 L112.7,6.50 L113.3,6.37 L114.0,6.31 L114.7,6.53 L115.3,6.48 L116.0,6.29 L116.7,6.26 L117.3,6.23 L118.0,6.28 L118.7,5.88 L119.3,5.58 L120.0,5.40 L120.7,5.44 L121.3,5.73 L122.0,5.66 L122.7,5.99 L123.3,5.92 L124.0,5.80 L124.7,5.85 L125.3,6.07 L126.0,6.11 L126.7,5.96 L127.3,6.11 L128.0,5.81 L128.7,5.70 L129.3,5.69 L130.0,5.46 L130.7,5.46 L131.3,5.37 L132.0,5.46 L132.7,5.78 L133.3,6.07 L134.0,6.20 L134.7,6.29 L135.3,6.28 L136.0,6.51 L136.7,6.42 L137.3,6.46 L138.0,6.37 L138.7,6.40 L139.3,6.27 L140.0,6.44 L140.7,6.53 L141.3,6.34 L142.0,6.50 L142.7,6.32 L143.3,6.26 L144.0,5.97 L144.7,5.92 L145.3,5.90 L146.0,6.16 L146.7,6.25 L147.3,6.43 L148.0,6.32 L148.7,6.39 L149.3,6.51 L150.0,6.47 L150.7,6.40 L151.3,6.20 L152.0,6.21 L152.7,5.91 L153.3,5.90 L154.0,6.12 L154.7,6.02 L155.3,6.27 L156.0,6.36 L156.7,6.30 L157.3,6.45 L158.0,6.28 L158.7,6.40 L159.3,6.45 L160.0,6.31 L160.7,6.54 L161.3,6.32 L162.0,6.49 L162.7,6.36 L163.3,5.86 L164.0,5.58 L164.7,5.57 L165.3,5.67 L166.0,5.51 L166.7,5.74 L167.3,5.88 L168.0,6.26 L168.7,6.24 L169.3,6.40 L170.0,6.46 L170.7,6.40 L171.3,6.12 L172.0,5.81 L172.7,5.59 L173.3,5.93 L174.0,6.09 L174.7,6.32 L175.3,6.30 L176.0,6.42 L176.7,6.29 L177.3,6.39 L178.0,6.37 L178.7,6.38 L179.3,6.33 L180.0,6.43 L180.7,6.49 L181.3,6.42 L182.0,6.07 L182.7,5.59 L183.3,4.94 L184.0,5.12 L184.7,5.35 L185.3,5.83 L186.0,5.90 L186.7,5.97 L187.3,6.20 L188.0,6.35 L188.7,6.39 L189.3,6.51 L190.0,6.50 L190.7,6.49 L191.3,6.37 L192.0,6.22 L192.7,5.74 L193.3,5.49 L194.0,5.10 L194.7,5.11 L195.3,5.48 L196.0,5.84 L196.7,6.17 L197.3,6.27 L198.0,6.39 L198.7,5.81 L199.3,5.64 L200.0,5.67 L200.7,6.15 L201.3,6.32 L202.0,6.41 L202.7,6.27 L203.3,6.51 L204.0,6.35 L204.7,6.46 L205.3,6.34 L206.0,6.31 L206.7,6.44 L207.3,6.31 L208.0,6.14 L208.7,5.80 L209.3,5.66 L210.0,5.60 L210.7,5.66 L211.3,6.11 L212.0,6.32 L212.7,6.37 L213.3,6.45 L214.0,6.33 L214.7,6.33 L215.3,6.50 L216.0,6.48 L216.7,6.33 L217.3,6.21 L218.0,6.18 L218.7,6.07 L219.3,5.73 L220.0,5.98 L220.7,6.10 L221.3,6.08 L222.0,6.33 L222.7,6.51 L223.3,6.38 L224.0,6.24 L224.7,6.37 L225.3,6.40 L226.0,6.43 L226.7,6.37 L227.3,6.04 L228.0,6.10 L228.7,5.95 L229.3,6.22 L230.0,6.17 L230.7,6.16 L231.3,5.96 L232.0,6.07 L232.7,6.18 L233.3,6.31 L234.0,6.43 L234.7,6.53 L235.3,6.54 L236.0,6.26 L236.7,6.50 L237.3,6.40 L238.0,6.43 L238.7,6.39 L239.3,6.52 L240.0,6.43 L240.7,6.46 L241.3,6.27 L242.0,6.06 L242.7,6.04 L243.3,5.85 L244.0,5.98 L244.7,6.01 L245.3,5.82 L246.0,5.68 L246.7,5.43 L247.3,5.38 L248.0,5.42 L248.7,5.58 L249.3,5.59 L250.0,5.73 L250.7,5.63 L251.3,5.52 L252.0,5.75 L252.7,5.81 L253.3,5.72 L254.0,5.70 L254.7,5.37 L255.3,5.21 L256.0,5.18 L256.7,5.11 L257.3,5.23 L258.0,5.47 L258.7,5.72 L259.3,5.61 L260.0,5.37 L260.7,5.18 L261.3,5.04 L262.0,4.89 L262.7,5.30 L263.3,5.53 L264.0,5.80 L264.7,6.05 L265.3,6.34 L266.0,6.35 L266.0,9.65 L265.3,9.66 L264.7,9.95 L264.0,10.20 L263.3,10.47 L262.7,10.70 L262.0,11.11 L261.3,10.96 L260.7,10.82 L260.0,10.63 L259.3,10.39 L258.7,10.28 L258.0,10.53 L257.3,10.77 L256.7,10.89 L256.0,10.82 L255.3,10.79 L254.7,10.63 L254.0,10.30 L253.3,10.28 L252.7,10.19 L252.0,10.25 L251.3,10.48 L250.7,10.37 L250.0,10.27 L249.3,10.41 L248.7,10.42 L248.0,10.58 L247.3,10.62 L246.7,10.57 L246.0,10.32 L245.3,10.18 L244.7,9.99 L244.0,10.02 L243.3,10.15 L242.7,9.96 L242.0,9.94 L241.3,9.73 L240.7,9.54 L240.0,9.57 L239.3,9.48 L238.7,9.61 L238.0,9.57 L237.3,9.60 L236.7,9.50 L236.0,9.74 L235.3,9.46 L234.7,9.47 L234.0,9.57 L233.3,9.69 L232.7,9.82 L232.0,9.93 L231.3,10.04 L230.7,9.84 L230.0,9.83 L229.3,9.78 L228.7,10.05 L228.0,9.90 L227.3,9.96 L226.7,9.63 L226.0,9.57 L225.3,9.60 L224.7,9.63 L224.0,9.76 L223.3,9.62 L222.7,9.49 L222.0,9.67 L221.3,9.92 L220.7,9.90 L220.0,10.02 L219.3,10.27 L218.7,9.93 L218.0,9.82 L217.3,9.79 L216.7,9.67 L216.0,9.52 L215.3,9.50 L214.7,9.67 L214.0,9.67 L213.3,9.55 L212.7,9.63 L212.0,9.68 L211.3,9.89 L210.7,10.34 L210.0,10.40 L209.3,10.34 L208.7,10.20 L208.0,9.86 L207.3,9.69 L206.7,9.56 L206.0,9.69 L205.3,9.66 L204.7,9.54 L204.0,9.65 L203.3,9.49 L202.7,9.73 L202.0,9.59 L201.3,9.68 L200.7,9.85 L200.0,10.33 L199.3,10.36 L198.7,10.19 L198.0,9.61 L197.3,9.73 L196.7,9.83 L196.0,10.16 L195.3,10.52 L194.7,10.89 L194.0,10.90 L193.3,10.51 L192.7,10.26 L192.0,9.78 L191.3,9.63 L190.7,9.51 L190.0,9.50 L189.3,9.49 L188.7,9.61 L188.0,9.65 L187.3,9.80 L186.7,10.03 L186.0,10.10 L185.3,10.17 L184.7,10.65 L184.0,10.88 L183.3,11.06 L182.7,10.41 L182.0,9.93 L181.3,9.58 L180.7,9.51 L180.0,9.57 L179.3,9.67 L178.7,9.62 L178.0,9.63 L177.3,9.61 L176.7,9.71 L176.0,9.58 L175.3,9.70 L174.7,9.68 L174.0,9.91 L173.3,10.07 L172.7,10.41 L172.0,10.19 L171.3,9.88 L170.7,9.60 L170.0,9.54 L169.3,9.60 L168.7,9.76 L168.0,9.74 L167.3,10.12 L166.7,10.26 L166.0,10.49 L165.3,10.33 L164.7,10.43 L164.0,10.42 L163.3,10.14 L162.7,9.64 L162.0,9.51 L161.3,9.68 L160.7,9.46 L160.0,9.69 L159.3,9.55 L158.7,9.60 L158.0,9.72 L157.3,9.55 L156.7,9.70 L156.0,9.64 L155.3,9.73 L154.7,9.98 L154.0,9.88 L153.3,10.10 L152.7,10.09 L152.0,9.79 L151.3,9.80 L150.7,9.60 L150.0,9.53 L149.3,9.49 L148.7,9.61 L148.0,9.68 L147.3,9.57 L146.7,9.75 L146.0,9.84 L145.3,10.10 L144.7,10.08 L144.0,10.03 L143.3,9.74 L142.7,9.68 L142.0,9.50 L141.3,9.66 L140.7,9.47 L140.0,9.56 L139.3,9.73 L138.7,9.60 L138.0,9.63 L137.3,9.54 L136.7,9.58 L136.0,9.49 L135.3,9.72 L134.7,9.71 L134.0,9.80 L133.3,9.93 L132.7,10.22 L132.0,10.54 L131.3,10.63 L130.7,10.54 L130.0,10.54 L129.3,10.31 L128.7,10.30 L128.0,10.19 L127.3,9.89 L126.7,10.04 L126.0,9.89 L125.3,9.93 L124.7,10.15 L124.0,10.20 L123.3,10.08 L122.7,10.01 L122.0,10.34 L121.3,10.27 L120.7,10.56 L120.0,10.60 L119.3,10.42 L118.7,10.12 L118.0,9.72 L117.3,9.77 L116.7,9.74 L116.0,9.71 L115.3,9.52 L114.7,9.47 L114.0,9.69 L113.3,9.63 L112.7,9.50 L112.0,9.55 L111.3,9.62 L110.7,9.68 L110.0,9.76 L109.3,9.84 L108.7,10.31 L108.0,10.46 L107.3,10.32 L106.7,10.17 L106.0,9.98 L105.3,9.83 L104.7,9.51 L104.0,9.71 L103.3,9.54 L102.7,9.51 L102.0,9.71 L101.3,9.57 L100.7,9.58 L100.0,9.76 L99.3,9.70 L98.7,9.95 L98.0,10.40 L97.3,11.00 L96.7,11.54 L96.0,11.78 L95.3,11.21 L94.7,10.91 L94.0,10.65 L93.3,10.37 L92.7,9.98 L92.0,9.73 L91.3,9.55 L90.7,9.66 L90.0,9.68 L89.3,9.56 L88.7,9.59 L88.0,9.62 L87.3,9.58 L86.7,9.66 L86.0,9.85 L85.3,9.97 L84.7,10.36 L84.0,10.43 L83.3,10.81 L82.7,10.80 L82.0,10.63 L81.3,10.29 L80.7,10.12 L80.0,10.02 L79.3,10.39 L78.7,10.33 L78.0,10.44 L77.3,10.38 L76.7,10.46 L76.0,10.53 L75.3,10.49 L74.7,10.78 L74.0,10.78 L73.3,11.04 L72.7,10.91 L72.0,10.54 L71.3,10.31 L70.7,10.11 L70.0,9.77 L69.3,9.78 L68.7,9.77 L68.0,10.00 L67.3,10.36 L66.7,10.25 L66.0,10.17 L65.3,9.97 L64.7,9.91 L64.0,9.59 L63.3,9.64 L62.7,9.73 L62.0,9.74 L61.3,9.56 L60.7,9.74 L60.0,9.54 L59.3,9.52 L58.7,9.59 L58.0,9.61 L57.3,9.84 L56.7,9.91 L56.0,9.98 L55.3,10.36 L54.7,10.48 L54.0,10.30 L53.3,10.08 L52.7,10.11 L52.0,9.75 L51.3,9.71 L50.7,9.77 L50.0,9.75 L49.3,9.64 L48.7,9.71 L48.0,9.72 L47.3,9.91 L46.7,9.94 L46.0,9.87 L45.3,9.77 L44.7,10.15 L44.0,10.81 L43.3,11.69 L42.7,12.56 L42.0,12.85 L41.3,12.27 L40.7,11.84 L40.0,11.17 L39.3,10.74 L38.7,10.34 L38.0,9.73 L37.3,9.64 L36.7,9.55 L36.0,9.57 L35.3,9.45 L34.7,9.72 L34.0,9.52 L33.3,9.64 L32.7,9.66 L32.0,9.65 L31.3,9.78 L30.7,9.81 L30.0,10.05 L29.3,10.20 L28.7,10.30 L28.0,10.17 L27.3,10.01 L26.7,9.94 L26.0,10.01 L25.3,9.98 L24.7,10.32 L24.0,10.50 L23.3,10.50 L22.7,10.81 L22.0,10.99 L21.3,11.19 L20.7,11.40 L20.0,11.74 L19.3,11.70 L18.7,11.62 L18.0,11.34 L17.3,10.98 L16.7,10.82 L16.0,11.01 L15.3,11.70 L14.7,11.55 L14.0,11.08 L13.3,10.73 L12.7,10.65 L12.0,10.47 L11.3,10.49 L10.7,10.49 L10.0,10.54 L9.3,11.08 L8.7,11.62 L8.0,12.30 L7.3,12.80 L6.7,13.08 L6.0,13.35 L5.3,13.40 L4.7,13.16 L4.0,13.12 L3.3,12.88 L2.7,12.64 L2.0,12.26 L1.3,12.01 L0.7,11.47 L0.0,10.93Z" fill="#eeeeee"/></svg></div>
<div class="lh" style="top:533.10px;height:27.5px;background:#4a8078"><span class="lht">Pista-2</span><svg style="position:absolute;left:317.6px;top:5.4px" width="18" height="18" viewBox="0 0 18 18"><circle cx="9" cy="9" r="7.6" fill="none" stroke="rgba(240,240,240,0.8)" stroke-width="1.5"/><path d="M7.4 5.5 L12.2 9 L7.4 12.6Z" fill="rgba(240,240,240,0.8)"/></svg></div>
<div class="li" style="top:560.60px;height:64.75px;background:#4dc0b5"><svg class="th" style="left:4px;top:4.20px;width:57px;height:56px;" width="57" height="56" viewBox="0 0 57 56"><defs><filter id="bl" x="-10%" y="-10%" width="120%" height="120%"><feGaussianBlur stdDeviation="1.6"/></filter><filter id="bl2"><feGaussianBlur stdDeviation="0.5"/></filter><filter id="bl3" x="-5%" y="-5%" width="110%" height="110%"><feGaussianBlur stdDeviation="0.7"/></filter></defs><rect width="57" height="56" fill="#6a5e58"/><g filter="url(#bl)"><rect x="36" y="0" width="21" height="44" fill="#c4c0bc"/><rect x="50" y="8" width="7" height="14" fill="#9aa0a8"/><rect x="0" y="0" width="9" height="52" fill="#3a2624"/><ellipse cx="4" cy="14" rx="3" ry="3" fill="#c82020"/><path d="M5 4 Q22 -3 44 6 L48 16 Q40 16 34 22 Q30 30 26 40 Q20 44 14 40 Q8 30 6 20Z" fill="#1a1616"/><path d="M34 18 Q46 14 50 26 Q56 32 52 40 Q50 52 40 54 Q26 56 20 50 Q16 40 22 34 Q28 24 34 18Z" fill="#b48a72"/><ellipse cx="22" cy="36" rx="3.5" ry="5" fill="#c8a088"/><path d="M28 40 Q36 48 50 46 L48 54 Q36 58 28 52Z" fill="#3e2416"/><rect x="0" y="50" width="57" height="6" fill="#d05848"/><rect x="14" y="51" width="24" height="5" fill="#2a2a34"/></g><circle cx="28.5" cy="28" r="10.5" fill="none" stroke="rgba(215,215,215,0.42)" stroke-width="4"/><path d="M28.5 17.5 A10.5 10.5 0 0 1 38.6 30.8" fill="none" stroke="rgba(238,238,238,0.92)" stroke-width="4"/></svg><span class="lit" style="letter-spacing:0.337px">1-04 Repicador Solo.mp3</span><span class="lid">1.89s</span><svg class="wv" width="266" height="16" viewBox="0 0 266 16"><path d="M0.0,5.62 L0.7,4.50 L1.3,3.44 L2.0,3.18 L2.7,3.87 L3.3,5.01 L4.0,5.79 L4.7,6.28 L5.3,6.29 L6.0,6.26 L6.7,6.42 L7.3,6.29 L8.0,6.33 L8.7,6.28 L9.3,6.53 L10.0,6.24 L10.7,6.19 L11.3,6.00 L12.0,5.96 L12.7,6.29 L13.3,6.29 L14.0,6.50 L14.7,6.37 L15.3,6.27 L16.0,6.49 L16.7,6.44 L17.3,6.51 L18.0,6.44 L18.7,6.31 L19.3,6.07 L20.0,5.34 L20.7,4.81 L21.3,4.49 L22.0,4.31 L22.7,4.59 L23.3,5.07 L24.0,5.49 L24.7,5.71 L25.3,5.97 L26.0,6.25 L26.7,6.34 L27.3,6.33 L28.0,6.35 L28.7,6.49 L29.3,6.37 L30.0,6.29 L30.7,6.29 L31.3,6.35 L32.0,6.53 L32.7,6.42 L33.3,6.52 L34.0,6.53 L34.7,6.47 L35.3,6.41 L36.0,6.32 L36.7,6.36 L37.3,6.47 L38.0,6.34 L38.7,6.40 L39.3,6.40 L40.0,6.47 L40.7,6.42 L41.3,6.45 L42.0,6.33 L42.7,6.41 L43.3,6.42 L44.0,6.41 L44.7,6.41 L45.3,6.34 L46.0,6.33 L46.7,6.31 L47.3,6.43 L48.0,6.31 L48.7,6.26 L49.3,6.25 L50.0,6.33 L50.7,6.51 L51.3,6.23 L52.0,6.14 L52.7,6.23 L53.3,5.95 L54.0,5.77 L54.7,5.54 L55.3,5.62 L56.0,5.87 L56.7,6.10 L57.3,6.28 L58.0,6.42 L58.7,6.27 L59.3,6.25 L60.0,6.45 L60.7,6.26 L61.3,6.12 L62.0,6.24 L62.7,5.98 L63.3,5.88 L64.0,5.65 L64.7,5.70 L65.3,6.05 L66.0,6.14 L66.7,6.08 L67.3,6.27 L68.0,6.33 L68.7,6.24 L69.3,6.18 L70.0,5.97 L70.7,5.94 L71.3,5.82 L72.0,5.54 L72.7,5.82 L73.3,5.87 L74.0,6.00 L74.7,6.30 L75.3,6.32 L76.0,6.48 L76.7,6.50 L77.3,6.37 L78.0,6.29 L78.7,6.25 L79.3,6.54 L80.0,6.27 L80.7,6.40 L81.3,6.44 L82.0,6.43 L82.7,6.36 L83.3,6.41 L84.0,6.43 L84.7,6.14 L85.3,6.09 L86.0,6.01 L86.7,5.90 L87.3,5.81 L88.0,6.10 L88.7,5.99 L89.3,6.10 L90.0,6.33 L90.7,6.30 L91.3,6.23 L92.0,6.03 L92.7,5.88 L93.3,6.24 L94.0,6.22 L94.7,6.49 L95.3,6.36 L96.0,6.38 L96.7,6.26 L97.3,6.29 L98.0,6.32 L98.7,6.05 L99.3,5.89 L100.0,5.95 L100.7,6.14 L101.3,6.04 L102.0,6.19 L102.7,5.93 L103.3,5.60 L104.0,5.62 L104.7,5.78 L105.3,5.77 L106.0,6.26 L106.7,6.23 L107.3,6.32 L108.0,6.26 L108.7,6.06 L109.3,5.68 L110.0,5.23 L110.7,4.90 L111.3,4.92 L112.0,4.87 L112.7,5.01 L113.3,5.45 L114.0,5.41 L114.7,5.51 L115.3,5.44 L116.0,5.37 L116.7,5.41 L117.3,5.86 L118.0,6.22 L118.7,6.09 L119.3,6.33 L120.0,6.24 L120.7,5.96 L121.3,6.06 L122.0,6.12 L122.7,6.12 L123.3,6.16 L124.0,6.39 L124.7,6.26 L125.3,6.36 L126.0,6.37 L126.7,6.38 L127.3,6.51 L128.0,6.35 L128.7,5.96 L129.3,5.62 L130.0,5.57 L130.7,5.45 L131.3,5.79 L132.0,6.08 L132.7,6.33 L133.3,6.46 L134.0,6.44 L134.7,6.26 L135.3,6.49 L136.0,6.28 L136.7,6.33 L137.3,6.25 L138.0,5.71 L138.7,5.94 L139.3,6.00 L140.0,6.38 L140.7,6.27 L141.3,6.33 L142.0,6.44 L142.7,6.36 L143.3,6.25 L144.0,6.50 L144.7,6.49 L145.3,6.46 L146.0,6.30 L146.7,6.48 L147.3,6.47 L148.0,6.36 L148.7,6.35 L149.3,6.35 L150.0,6.21 L150.7,6.20 L151.3,6.06 L152.0,5.98 L152.7,6.04 L153.3,5.99 L154.0,6.08 L154.7,6.44 L155.3,6.41 L156.0,6.54 L156.7,6.42 L157.3,6.35 L158.0,6.34 L158.7,6.17 L159.3,6.10 L160.0,6.06 L160.7,5.92 L161.3,6.05 L162.0,6.27 L162.7,6.42 L163.3,6.11 L164.0,6.01 L164.7,5.99 L165.3,6.28 L166.0,6.49 L166.7,6.47 L167.3,6.50 L168.0,6.41 L168.7,6.50 L169.3,6.53 L170.0,6.39 L170.7,6.49 L171.3,6.46 L172.0,6.36 L172.7,6.05 L173.3,5.86 L174.0,5.76 L174.7,5.81 L175.3,5.82 L176.0,5.83 L176.7,5.96 L177.3,5.95 L178.0,5.84 L178.7,5.80 L179.3,5.76 L180.0,5.80 L180.7,5.96 L181.3,6.22 L182.0,6.33 L182.7,6.29 L183.3,6.41 L184.0,6.29 L184.7,6.44 L185.3,6.35 L186.0,6.51 L186.7,6.45 L187.3,6.24 L188.0,6.33 L188.7,6.00 L189.3,6.03 L190.0,5.84 L190.7,5.95 L191.3,5.79 L192.0,5.67 L192.7,5.52 L193.3,5.61 L194.0,5.64 L194.7,6.01 L195.3,6.13 L196.0,6.31 L196.7,6.36 L197.3,6.45 L198.0,6.48 L198.7,6.39 L199.3,6.35 L200.0,6.38 L200.7,6.26 L201.3,6.38 L202.0,6.51 L202.7,6.36 L203.3,6.45 L204.0,6.26 L204.7,6.44 L205.3,6.21 L206.0,6.01 L206.7,5.93 L207.3,6.22 L208.0,6.38 L208.7,6.31 L209.3,6.31 L210.0,6.28 L210.7,6.33 L211.3,6.50 L212.0,6.20 L212.7,6.10 L213.3,6.01 L214.0,5.64 L214.7,5.38 L215.3,5.32 L216.0,5.40 L216.7,5.47 L217.3,5.25 L218.0,5.04 L218.7,5.18 L219.3,5.61 L220.0,5.89 L220.7,6.15 L221.3,6.38 L222.0,6.32 L222.7,6.43 L223.3,6.08 L224.0,6.13 L224.7,6.07 L225.3,6.06 L226.0,5.97 L226.7,6.02 L227.3,5.95 L228.0,5.95 L228.7,6.18 L229.3,6.12 L230.0,6.19 L230.7,6.37 L231.3,6.32 L232.0,6.29 L232.7,6.37 L233.3,6.51 L234.0,6.35 L234.7,6.41 L235.3,6.28 L236.0,6.45 L236.7,6.44 L237.3,6.27 L238.0,6.12 L238.7,5.96 L239.3,6.02 L240.0,6.11 L240.7,6.18 L241.3,6.42 L242.0,6.38 L242.7,6.44 L243.3,6.55 L244.0,6.35 L244.7,6.40 L245.3,6.32 L246.0,6.29 L246.7,6.53 L247.3,6.32 L248.0,6.36 L248.7,6.13 L249.3,6.19 L250.0,5.84 L250.7,5.96 L251.3,6.21 L252.0,6.27 L252.7,6.24 L253.3,6.52 L254.0,6.43 L254.7,6.53 L255.3,6.54 L256.0,6.26 L256.7,6.16 L257.3,5.87 L258.0,5.74 L258.7,6.17 L259.3,5.92 L260.0,5.77 L260.7,5.49 L261.3,5.36 L262.0,5.47 L262.7,5.60 L263.3,5.28 L264.0,5.38 L264.7,5.46 L265.3,5.67 L266.0,6.02 L266.0,9.98 L265.3,10.33 L264.7,10.54 L264.0,10.62 L263.3,10.72 L262.7,10.40 L262.0,10.53 L261.3,10.64 L260.7,10.51 L260.0,10.23 L259.3,10.08 L258.7,9.83 L258.0,10.26 L257.3,10.13 L256.7,9.84 L256.0,9.74 L255.3,9.46 L254.7,9.47 L254.0,9.57 L253.3,9.48 L252.7,9.76 L252.0,9.73 L251.3,9.79 L250.7,10.04 L250.0,10.16 L249.3,9.81 L248.7,9.87 L248.0,9.64 L247.3,9.68 L246.7,9.47 L246.0,9.71 L245.3,9.68 L244.7,9.60 L244.0,9.65 L243.3,9.45 L242.7,9.56 L242.0,9.62 L241.3,9.58 L240.7,9.82 L240.0,9.89 L239.3,9.98 L238.7,10.04 L238.0,9.88 L237.3,9.73 L236.7,9.56 L236.0,9.55 L235.3,9.72 L234.7,9.59 L234.0,9.65 L233.3,9.49 L232.7,9.63 L232.0,9.71 L231.3,9.68 L230.7,9.63 L230.0,9.81 L229.3,9.88 L228.7,9.82 L228.0,10.05 L227.3,10.05 L226.7,9.98 L226.0,10.03 L225.3,9.94 L224.7,9.93 L224.0,9.87 L223.3,9.92 L222.7,9.57 L222.0,9.68 L221.3,9.62 L220.7,9.85 L220.0,10.11 L219.3,10.39 L218.7,10.82 L218.0,10.96 L217.3,10.75 L216.7,10.53 L216.0,10.60 L215.3,10.68 L214.7,10.62 L214.0,10.36 L213.3,9.99 L212.7,9.90 L212.0,9.80 L211.3,9.50 L210.7,9.67 L210.0,9.72 L209.3,9.69 L208.7,9.69 L208.0,9.62 L207.3,9.78 L206.7,10.07 L206.0,9.99 L205.3,9.79 L204.7,9.56 L204.0,9.74 L203.3,9.55 L202.7,9.64 L202.0,9.49 L201.3,9.62 L200.7,9.74 L200.0,9.62 L199.3,9.65 L198.7,9.61 L198.0,9.52 L197.3,9.55 L196.7,9.64 L196.0,9.69 L195.3,9.87 L194.7,9.99 L194.0,10.36 L193.3,10.39 L192.7,10.48 L192.0,10.33 L191.3,10.21 L190.7,10.05 L190.0,10.16 L189.3,9.97 L188.7,10.00 L188.0,9.67 L187.3,9.76 L186.7,9.55 L186.0,9.49 L185.3,9.65 L184.7,9.56 L184.0,9.71 L183.3,9.59 L182.7,9.71 L182.0,9.67 L181.3,9.78 L180.7,10.04 L180.0,10.20 L179.3,10.24 L178.7,10.20 L178.0,10.16 L177.3,10.05 L176.7,10.04 L176.0,10.17 L175.3,10.18 L174.7,10.19 L174.0,10.24 L173.3,10.14 L172.7,9.95 L172.0,9.64 L171.3,9.54 L170.7,9.51 L170.0,9.61 L169.3,9.47 L168.7,9.50 L168.0,9.59 L167.3,9.50 L166.7,9.53 L166.0,9.51 L165.3,9.72 L164.7,10.01 L164.0,9.99 L163.3,9.89 L162.7,9.58 L162.0,9.73 L161.3,9.95 L160.7,10.08 L160.0,9.94 L159.3,9.90 L158.7,9.83 L158.0,9.66 L157.3,9.65 L156.7,9.58 L156.0,9.46 L155.3,9.59 L154.7,9.56 L154.0,9.92 L153.3,10.01 L152.7,9.96 L152.0,10.02 L151.3,9.94 L150.7,9.80 L150.0,9.79 L149.3,9.65 L148.7,9.65 L148.0,9.64 L147.3,9.53 L146.7,9.52 L146.0,9.70 L145.3,9.54 L144.7,9.51 L144.0,9.50 L143.3,9.75 L142.7,9.64 L142.0,9.56 L141.3,9.67 L140.7,9.73 L140.0,9.62 L139.3,10.00 L138.7,10.06 L138.0,10.29 L137.3,9.75 L136.7,9.67 L136.0,9.72 L135.3,9.51 L134.7,9.74 L134.0,9.56 L133.3,9.54 L132.7,9.67 L132.0,9.92 L131.3,10.21 L130.7,10.55 L130.0,10.43 L129.3,10.38 L128.7,10.04 L128.0,9.65 L127.3,9.49 L126.7,9.62 L126.0,9.63 L125.3,9.64 L124.7,9.74 L124.0,9.61 L123.3,9.84 L122.7,9.88 L122.0,9.88 L121.3,9.94 L120.7,10.04 L120.0,9.76 L119.3,9.67 L118.7,9.91 L118.0,9.78 L117.3,10.14 L116.7,10.59 L116.0,10.63 L115.3,10.56 L114.7,10.49 L114.0,10.59 L113.3,10.55 L112.7,10.99 L112.0,11.13 L111.3,11.08 L110.7,11.10 L110.0,10.77 L109.3,10.32 L108.7,9.94 L108.0,9.74 L107.3,9.68 L106.7,9.77 L106.0,9.74 L105.3,10.23 L104.7,10.22 L104.0,10.38 L103.3,10.40 L102.7,10.07 L102.0,9.81 L101.3,9.96 L100.7,9.86 L100.0,10.05 L99.3,10.11 L98.7,9.95 L98.0,9.68 L97.3,9.71 L96.7,9.74 L96.0,9.62 L95.3,9.64 L94.7,9.51 L94.0,9.78 L93.3,9.76 L92.7,10.12 L92.0,9.97 L91.3,9.77 L90.7,9.70 L90.0,9.67 L89.3,9.90 L88.7,10.01 L88.0,9.90 L87.3,10.19 L86.7,10.10 L86.0,9.99 L85.3,9.91 L84.7,9.86 L84.0,9.57 L83.3,9.59 L82.7,9.64 L82.0,9.57 L81.3,9.56 L80.7,9.60 L80.0,9.73 L79.3,9.46 L78.7,9.75 L78.0,9.71 L77.3,9.63 L76.7,9.50 L76.0,9.52 L75.3,9.68 L74.7,9.70 L74.0,10.00 L73.3,10.13 L72.7,10.18 L72.0,10.46 L71.3,10.18 L70.7,10.06 L70.0,10.03 L69.3,9.82 L68.7,9.76 L68.0,9.67 L67.3,9.73 L66.7,9.92 L66.0,9.86 L65.3,9.95 L64.7,10.30 L64.0,10.35 L63.3,10.12 L62.7,10.02 L62.0,9.76 L61.3,9.88 L60.7,9.74 L60.0,9.55 L59.3,9.75 L58.7,9.73 L58.0,9.58 L57.3,9.72 L56.7,9.90 L56.0,10.13 L55.3,10.38 L54.7,10.46 L54.0,10.23 L53.3,10.05 L52.7,9.77 L52.0,9.86 L51.3,9.77 L50.7,9.49 L50.0,9.67 L49.3,9.75 L48.7,9.74 L48.0,9.69 L47.3,9.57 L46.7,9.69 L46.0,9.67 L45.3,9.66 L44.7,9.59 L44.0,9.59 L43.3,9.58 L42.7,9.59 L42.0,9.67 L41.3,9.55 L40.7,9.58 L40.0,9.53 L39.3,9.60 L38.7,9.60 L38.0,9.66 L37.3,9.53 L36.7,9.64 L36.0,9.68 L35.3,9.59 L34.7,9.53 L34.0,9.47 L33.3,9.48 L32.7,9.58 L32.0,9.47 L31.3,9.65 L30.7,9.71 L30.0,9.71 L29.3,9.63 L28.7,9.51 L28.0,9.65 L27.3,9.67 L26.7,9.66 L26.0,9.75 L25.3,10.03 L24.7,10.29 L24.0,10.51 L23.3,10.93 L22.7,11.41 L22.0,11.69 L21.3,11.51 L20.7,11.19 L20.0,10.66 L19.3,9.93 L18.7,9.69 L18.0,9.56 L17.3,9.49 L16.7,9.56 L16.0,9.51 L15.3,9.73 L14.7,9.63 L14.0,9.50 L13.3,9.71 L12.7,9.71 L12.0,10.04 L11.3,10.00 L10.7,9.81 L10.0,9.76 L9.3,9.47 L8.7,9.72 L8.0,9.67 L7.3,9.71 L6.7,9.58 L6.0,9.74 L5.3,9.71 L4.7,9.72 L4.0,10.21 L3.3,10.99 L2.7,12.13 L2.0,12.82 L1.3,12.56 L0.7,11.50 L0.0,10.38Z" fill="#eeeeee"/></svg></div>
<div class="lh" style="top:625.35px;height:27.5px;background:#6a7f45"><span class="lht">Pista-3</span><svg style="position:absolute;left:317.6px;top:5.4px" width="18" height="18" viewBox="0 0 18 18"><circle cx="9" cy="9" r="7.6" fill="none" stroke="rgba(240,240,240,0.8)" stroke-width="1.5"/><path d="M7.4 5.5 L12.2 9 L7.4 12.6Z" fill="rgba(240,240,240,0.8)"/></svg></div>
<div class="li" style="top:652.85px;height:64.75px;background:#8bb846"><svg class="th" style="left:4px;top:4.20px;width:57px;height:56px;" width="57" height="56" viewBox="0 0 57 56"><defs><filter id="bl" x="-10%" y="-10%" width="120%" height="120%"><feGaussianBlur stdDeviation="1.6"/></filter><filter id="bl2"><feGaussianBlur stdDeviation="0.5"/></filter><filter id="bl3" x="-5%" y="-5%" width="110%" height="110%"><feGaussianBlur stdDeviation="0.7"/></filter></defs><rect width="57" height="56" fill="#c85a14"/><g filter="url(#bl)"><ellipse cx="20" cy="12" rx="18" ry="10" fill="#e88a28"/><ellipse cx="48" cy="10" rx="14" ry="12" fill="#3a0804"/><ellipse cx="6" cy="22" rx="6" ry="10" fill="#5a1a08"/><ellipse cx="12" cy="42" rx="9" ry="8" fill="#f0922a"/><ellipse cx="52" cy="40" rx="6" ry="8" fill="#f08a20"/><path d="M0 40 L6 38 L20 48 L22 40 Q30 30 42 34 L50 38 L57 46 L57 56 L12 56 L0 50Z" fill="#b01a18"/><ellipse cx="34" cy="32" rx="12" ry="8" fill="#c82a20"/></g><ellipse cx="31" cy="25.5" rx="4" ry="3" fill="#f4e8e8"/><ellipse cx="41" cy="27" rx="3.5" ry="3" fill="#f0e0e0"/><circle cx="31.5" cy="25.5" r="1.2" fill="#201010"/><circle cx="36" cy="31" r="3" fill="#ff5a28"/><rect x="25" y="34" width="22" height="3" rx="1" fill="#2a0a0a" opacity="0.85"/><circle cx="28.5" cy="28" r="10.5" fill="none" stroke="rgba(215,215,215,0.42)" stroke-width="4"/><path d="M28.5 17.5 A10.5 10.5 0 0 1 38.6 30.8" fill="none" stroke="rgba(238,238,238,0.92)" stroke-width="4"/></svg><span class="lit" style="letter-spacing:0.277px">203_Amalihani - Mali: Part 1.mp3</span><span class="lid">1s</span><svg class="wv" width="266" height="16" viewBox="0 0 266 16"><path d="M0.0,5.99 L0.7,6.13 L1.3,5.84 L2.0,6.07 L2.7,5.75 L3.3,5.73 L4.0,5.91 L4.7,6.08 L5.3,6.26 L6.0,6.39 L6.7,6.41 L7.3,6.44 L8.0,6.20 L8.7,6.03 L9.3,6.04 L10.0,5.69 L10.7,5.53 L11.3,5.24 L12.0,4.83 L12.7,4.67 L13.3,4.76 L14.0,4.28 L14.7,4.44 L15.3,4.65 L16.0,5.19 L16.7,5.27 L17.3,5.70 L18.0,5.94 L18.7,6.15 L19.3,6.25 L20.0,6.31 L20.7,5.94 L21.3,5.81 L22.0,5.57 L22.7,5.60 L23.3,5.75 L24.0,5.66 L24.7,5.87 L25.3,5.48 L26.0,5.35 L26.7,5.39 L27.3,5.59 L28.0,5.74 L28.7,5.91 L29.3,5.67 L30.0,5.19 L30.7,4.86 L31.3,5.12 L32.0,5.71 L32.7,5.93 L33.3,6.08 L34.0,6.24 L34.7,6.00 L35.3,6.00 L36.0,5.66 L36.7,5.55 L37.3,5.53 L38.0,5.31 L38.7,5.17 L39.3,5.21 L40.0,5.22 L40.7,5.11 L41.3,5.22 L42.0,5.49 L42.7,5.65 L43.3,5.72 L44.0,5.75 L44.7,5.79 L45.3,5.88 L46.0,5.90 L46.7,6.01 L47.3,6.15 L48.0,6.28 L48.7,6.38 L49.3,6.46 L50.0,6.39 L50.7,6.45 L51.3,6.41 L52.0,6.50 L52.7,6.28 L53.3,6.51 L54.0,6.29 L54.7,6.38 L55.3,6.28 L56.0,6.28 L56.7,6.49 L57.3,6.43 L58.0,6.15 L58.7,6.15 L59.3,6.19 L60.0,6.06 L60.7,6.12 L61.3,6.17 L62.0,6.36 L62.7,6.47 L63.3,6.51 L64.0,6.40 L64.7,6.33 L65.3,6.40 L66.0,6.35 L66.7,6.35 L67.3,6.51 L68.0,6.34 L68.7,6.40 L69.3,6.42 L70.0,6.26 L70.7,6.41 L71.3,6.34 L72.0,6.32 L72.7,6.40 L73.3,6.47 L74.0,6.33 L74.7,6.06 L75.3,5.92 L76.0,5.96 L76.7,6.28 L77.3,6.12 L78.0,6.00 L78.7,5.92 L79.3,6.11 L80.0,6.24 L80.7,6.16 L81.3,6.18 L82.0,6.12 L82.7,5.96 L83.3,6.15 L84.0,6.25 L84.7,6.33 L85.3,6.38 L86.0,6.44 L86.7,6.48 L87.3,6.31 L88.0,6.49 L88.7,6.38 L89.3,6.31 L90.0,6.50 L90.7,6.45 L91.3,6.44 L92.0,6.46 L92.7,6.28 L93.3,6.29 L94.0,6.51 L94.7,6.53 L95.3,6.37 L96.0,6.40 L96.7,6.54 L97.3,6.29 L98.0,6.29 L98.7,6.38 L99.3,6.52 L100.0,6.49 L100.7,6.29 L101.3,6.29 L102.0,6.24 L102.7,5.88 L103.3,5.97 L104.0,5.68 L104.7,5.52 L105.3,5.42 L106.0,5.61 L106.7,5.49 L107.3,5.61 L108.0,5.68 L108.7,5.94 L109.3,5.85 L110.0,6.00 L110.7,6.36 L111.3,6.28 L112.0,6.28 L112.7,6.21 L113.3,6.07 L114.0,5.81 L114.7,5.31 L115.3,5.03 L116.0,4.79 L116.7,4.66 L117.3,4.75 L118.0,4.64 L118.7,4.77 L119.3,5.07 L120.0,5.26 L120.7,5.39 L121.3,5.64 L122.0,5.94 L122.7,6.17 L123.3,6.51 L124.0,6.28 L124.7,6.54 L125.3,6.38 L126.0,6.32 L126.7,6.50 L127.3,6.48 L128.0,6.53 L128.7,6.42 L129.3,6.30 L130.0,6.55 L130.7,6.32 L131.3,6.43 L132.0,6.27 L132.7,6.38 L133.3,6.37 L134.0,6.29 L134.7,5.99 L135.3,6.18 L136.0,6.27 L136.7,6.34 L137.3,6.30 L138.0,6.46 L138.7,6.52 L139.3,6.49 L140.0,6.36 L140.7,6.51 L141.3,6.54 L142.0,6.44 L142.7,6.35 L143.3,6.50 L144.0,6.46 L144.7,6.51 L145.3,6.25 L146.0,6.22 L146.7,6.05 L147.3,5.95 L148.0,5.97 L148.7,6.17 L149.3,6.34 L150.0,6.29 L150.7,6.38 L151.3,6.51 L152.0,6.28 L152.7,6.29 L153.3,6.55 L154.0,6.52 L154.7,6.40 L155.3,6.41 L156.0,6.30 L156.7,6.49 L157.3,6.25 L158.0,6.45 L158.7,6.51 L159.3,6.26 L160.0,6.32 L160.7,6.31 L161.3,6.50 L162.0,6.26 L162.7,6.46 L163.3,6.40 L164.0,6.25 L164.7,6.41 L165.3,6.28 L166.0,5.91 L166.7,5.79 L167.3,5.67 L168.0,5.82 L168.7,6.20 L169.3,6.22 L170.0,6.48 L170.7,6.24 L171.3,6.24 L172.0,6.16 L172.7,6.07 L173.3,5.98 L174.0,6.03 L174.7,6.18 L175.3,6.34 L176.0,6.30 L176.7,6.13 L177.3,5.76 L178.0,6.00 L178.7,6.12 L179.3,5.96 L180.0,6.18 L180.7,6.04 L181.3,6.15 L182.0,6.38 L182.7,6.33 L183.3,6.54 L184.0,6.43 L184.7,6.55 L185.3,6.33 L186.0,6.26 L186.7,6.27 L187.3,6.38 L188.0,6.26 L188.7,6.22 L189.3,6.28 L190.0,6.09 L190.7,6.19 L191.3,6.23 L192.0,6.38 L192.7,6.52 L193.3,6.54 L194.0,6.51 L194.7,6.38 L195.3,6.30 L196.0,6.35 L196.7,6.25 L197.3,6.37 L198.0,6.23 L198.7,6.10 L199.3,6.24 L200.0,6.24 L200.7,6.46 L201.3,6.52 L202.0,6.30 L202.7,6.47 L203.3,6.42 L204.0,6.41 L204.7,6.54 L205.3,6.54 L206.0,6.29 L206.7,6.28 L207.3,6.32 L208.0,6.41 L208.7,6.50 L209.3,6.50 L210.0,6.39 L210.7,6.49 L211.3,6.36 L212.0,6.25 L212.7,6.27 L213.3,6.48 L214.0,6.48 L214.7,6.54 L215.3,6.27 L216.0,6.26 L216.7,6.30 L217.3,6.33 L218.0,6.37 L218.7,6.27 L219.3,6.46 L220.0,6.40 L220.7,6.27 L221.3,6.37 L222.0,6.44 L222.7,6.49 L223.3,6.46 L224.0,6.29 L224.7,6.37 L225.3,6.33 L226.0,6.28 L226.7,6.27 L227.3,6.21 L228.0,6.20 L228.7,5.92 L229.3,6.19 L230.0,6.33 L230.7,6.41 L231.3,6.21 L232.0,6.08 L232.7,6.12 L233.3,6.01 L234.0,5.78 L234.7,5.64 L235.3,5.66 L236.0,5.54 L236.7,5.89 L237.3,6.12 L238.0,5.96 L238.7,5.73 L239.3,5.42 L240.0,4.88 L240.7,4.48 L241.3,4.55 L242.0,4.56 L242.7,5.09 L243.3,5.27 L244.0,5.14 L244.7,5.18 L245.3,5.13 L246.0,5.32 L246.7,5.25 L247.3,5.32 L248.0,5.56 L248.7,6.10 L249.3,6.26 L250.0,6.35 L250.7,6.24 L251.3,6.18 L252.0,6.06 L252.7,6.01 L253.3,6.01 L254.0,5.94 L254.7,6.13 L255.3,6.13 L256.0,6.14 L256.7,6.46 L257.3,6.26 L258.0,6.27 L258.7,6.43 L259.3,6.54 L260.0,6.45 L260.7,6.47 L261.3,6.33 L262.0,6.24 L262.7,6.20 L263.3,6.31 L264.0,6.12 L264.7,5.91 L265.3,5.98 L266.0,6.03 L266.0,9.97 L265.3,10.02 L264.7,10.09 L264.0,9.88 L263.3,9.69 L262.7,9.80 L262.0,9.76 L261.3,9.67 L260.7,9.53 L260.0,9.55 L259.3,9.46 L258.7,9.57 L258.0,9.73 L257.3,9.74 L256.7,9.54 L256.0,9.86 L255.3,9.87 L254.7,9.87 L254.0,10.06 L253.3,9.99 L252.7,9.99 L252.0,9.94 L251.3,9.82 L250.7,9.76 L250.0,9.65 L249.3,9.74 L248.7,9.90 L248.0,10.44 L247.3,10.68 L246.7,10.75 L246.0,10.68 L245.3,10.87 L244.7,10.82 L244.0,10.86 L243.3,10.73 L242.7,10.91 L242.0,11.44 L241.3,11.45 L240.7,11.52 L240.0,11.12 L239.3,10.58 L238.7,10.27 L238.0,10.04 L237.3,9.88 L236.7,10.11 L236.0,10.46 L235.3,10.34 L234.7,10.36 L234.0,10.22 L233.3,9.99 L232.7,9.88 L232.0,9.92 L231.3,9.79 L230.7,9.59 L230.0,9.67 L229.3,9.81 L228.7,10.08 L228.0,9.80 L227.3,9.79 L226.7,9.73 L226.0,9.72 L225.3,9.67 L224.7,9.63 L224.0,9.71 L223.3,9.54 L222.7,9.51 L222.0,9.56 L221.3,9.63 L220.7,9.73 L220.0,9.60 L219.3,9.54 L218.7,9.73 L218.0,9.63 L217.3,9.67 L216.7,9.70 L216.0,9.74 L215.3,9.73 L214.7,9.46 L214.0,9.52 L213.3,9.52 L212.7,9.73 L212.0,9.75 L211.3,9.64 L210.7,9.51 L210.0,9.61 L209.3,9.50 L208.7,9.50 L208.0,9.59 L207.3,9.68 L206.7,9.72 L206.0,9.71 L205.3,9.46 L204.7,9.46 L204.0,9.59 L203.3,9.58 L202.7,9.53 L202.0,9.70 L201.3,9.48 L200.7,9.54 L200.0,9.76 L199.3,9.76 L198.7,9.90 L198.0,9.77 L197.3,9.63 L196.7,9.75 L196.0,9.65 L195.3,9.70 L194.7,9.62 L194.0,9.49 L193.3,9.46 L192.7,9.48 L192.0,9.62 L191.3,9.77 L190.7,9.81 L190.0,9.91 L189.3,9.72 L188.7,9.78 L188.0,9.74 L187.3,9.62 L186.7,9.73 L186.0,9.74 L185.3,9.67 L184.7,9.45 L184.0,9.57 L183.3,9.46 L182.7,9.67 L182.0,9.62 L181.3,9.85 L180.7,9.96 L180.0,9.82 L179.3,10.04 L178.7,9.88 L178.0,10.00 L177.3,10.24 L176.7,9.87 L176.0,9.70 L175.3,9.66 L174.7,9.82 L174.0,9.97 L173.3,10.02 L172.7,9.93 L172.0,9.84 L171.3,9.76 L170.7,9.76 L170.0,9.52 L169.3,9.78 L168.7,9.80 L168.0,10.18 L167.3,10.33 L166.7,10.21 L166.0,10.09 L165.3,9.72 L164.7,9.59 L164.0,9.75 L163.3,9.60 L162.7,9.54 L162.0,9.74 L161.3,9.50 L160.7,9.69 L160.0,9.68 L159.3,9.74 L158.7,9.49 L158.0,9.55 L157.3,9.75 L156.7,9.51 L156.0,9.70 L155.3,9.59 L154.7,9.60 L154.0,9.48 L153.3,9.45 L152.7,9.71 L152.0,9.72 L151.3,9.49 L150.7,9.62 L150.0,9.71 L149.3,9.66 L148.7,9.83 L148.0,10.03 L147.3,10.05 L146.7,9.95 L146.0,9.78 L145.3,9.75 L144.7,9.49 L144.0,9.54 L143.3,9.50 L142.7,9.65 L142.0,9.56 L141.3,9.46 L140.7,9.49 L140.0,9.64 L139.3,9.51 L138.7,9.48 L138.0,9.54 L137.3,9.70 L136.7,9.66 L136.0,9.73 L135.3,9.82 L134.7,10.01 L134.0,9.71 L133.3,9.63 L132.7,9.62 L132.0,9.73 L131.3,9.57 L130.7,9.68 L130.0,9.45 L129.3,9.70 L128.7,9.58 L128.0,9.47 L127.3,9.52 L126.7,9.50 L126.0,9.68 L125.3,9.62 L124.7,9.46 L124.0,9.72 L123.3,9.49 L122.7,9.83 L122.0,10.06 L121.3,10.36 L120.7,10.61 L120.0,10.74 L119.3,10.93 L118.7,11.23 L118.0,11.36 L117.3,11.25 L116.7,11.34 L116.0,11.21 L115.3,10.97 L114.7,10.69 L114.0,10.19 L113.3,9.93 L112.7,9.79 L112.0,9.72 L111.3,9.72 L110.7,9.64 L110.0,10.00 L109.3,10.15 L108.7,10.06 L108.0,10.32 L107.3,10.39 L106.7,10.51 L106.0,10.39 L105.3,10.58 L104.7,10.48 L104.0,10.32 L103.3,10.03 L102.7,10.12 L102.0,9.76 L101.3,9.71 L100.7,9.71 L100.0,9.51 L99.3,9.48 L98.7,9.62 L98.0,9.71 L97.3,9.71 L96.7,9.46 L96.0,9.60 L95.3,9.63 L94.7,9.47 L94.0,9.49 L93.3,9.71 L92.7,9.72 L92.0,9.54 L91.3,9.56 L90.7,9.55 L90.0,9.50 L89.3,9.69 L88.7,9.62 L88.0,9.51 L87.3,9.69 L86.7,9.52 L86.0,9.56 L85.3,9.62 L84.7,9.67 L84.0,9.75 L83.3,9.85 L82.7,10.04 L82.0,9.88 L81.3,9.82 L80.7,9.84 L80.0,9.76 L79.3,9.89 L78.7,10.08 L78.0,10.00 L77.3,9.88 L76.7,9.72 L76.0,10.04 L75.3,10.08 L74.7,9.94 L74.0,9.67 L73.3,9.53 L72.7,9.60 L72.0,9.68 L71.3,9.66 L70.7,9.59 L70.0,9.74 L69.3,9.58 L68.7,9.60 L68.0,9.66 L67.3,9.49 L66.7,9.65 L66.0,9.65 L65.3,9.60 L64.7,9.67 L64.0,9.60 L63.3,9.49 L62.7,9.53 L62.0,9.64 L61.3,9.83 L60.7,9.88 L60.0,9.94 L59.3,9.81 L58.7,9.85 L58.0,9.85 L57.3,9.57 L56.7,9.51 L56.0,9.72 L55.3,9.72 L54.7,9.62 L54.0,9.71 L53.3,9.49 L52.7,9.72 L52.0,9.50 L51.3,9.59 L50.7,9.55 L50.0,9.61 L49.3,9.54 L48.7,9.62 L48.0,9.72 L47.3,9.85 L46.7,9.99 L46.0,10.10 L45.3,10.12 L44.7,10.21 L44.0,10.25 L43.3,10.28 L42.7,10.35 L42.0,10.51 L41.3,10.78 L40.7,10.89 L40.0,10.78 L39.3,10.79 L38.7,10.83 L38.0,10.69 L37.3,10.47 L36.7,10.45 L36.0,10.34 L35.3,10.00 L34.7,10.00 L34.0,9.76 L33.3,9.92 L32.7,10.07 L32.0,10.29 L31.3,10.88 L30.7,11.14 L30.0,10.81 L29.3,10.33 L28.7,10.09 L28.0,10.26 L27.3,10.41 L26.7,10.61 L26.0,10.65 L25.3,10.52 L24.7,10.13 L24.0,10.34 L23.3,10.25 L22.7,10.40 L22.0,10.43 L21.3,10.19 L20.7,10.06 L20.0,9.69 L19.3,9.75 L18.7,9.85 L18.0,10.06 L17.3,10.30 L16.7,10.73 L16.0,10.81 L15.3,11.35 L14.7,11.56 L14.0,11.72 L13.3,11.24 L12.7,11.33 L12.0,11.17 L11.3,10.76 L10.7,10.47 L10.0,10.31 L9.3,9.96 L8.7,9.97 L8.0,9.80 L7.3,9.56 L6.7,9.59 L6.0,9.61 L5.3,9.74 L4.7,9.92 L4.0,10.09 L3.3,10.27 L2.7,10.25 L2.0,9.93 L1.3,10.16 L0.7,9.87 L0.0,10.01Z" fill="#eeeeee"/></svg></div>
<div class="lh" style="top:717.60px;height:27.5px;background:#8b6b42"><span class="lht">Pista-4</span><svg style="position:absolute;left:317.6px;top:5.4px" width="18" height="18" viewBox="0 0 18 18"><circle cx="9" cy="9" r="7.6" fill="none" stroke="rgba(240,240,240,0.8)" stroke-width="1.5"/><path d="M7.4 5.5 L12.2 9 L7.4 12.6Z" fill="rgba(240,240,240,0.8)"/></svg></div>
<div class="li" style="top:745.10px;height:64.75px;background:#d69440"><svg class="th" style="left:4px;top:4.20px;width:57px;height:56px;" width="57" height="56" viewBox="0 0 57 56"><defs><filter id="bl" x="-10%" y="-10%" width="120%" height="120%"><feGaussianBlur stdDeviation="1.6"/></filter><filter id="bl2"><feGaussianBlur stdDeviation="0.5"/></filter><filter id="bl3" x="-5%" y="-5%" width="110%" height="110%"><feGaussianBlur stdDeviation="0.7"/></filter></defs><rect width="57" height="56" fill="#7fd3f0"/><rect x="0" y="0" width="57" height="1.5" fill="#ffffff"/><rect x="0" y="26" width="57" height="29" fill="#70b04a"/><rect x="0" y="54.5" width="57" height="1.5" fill="#d8f0d0"/><ellipse cx="52" cy="12" rx="4" ry="2" fill="#fff"/><g filter="url(#bl2)"><ellipse cx="15" cy="9" rx="5" ry="4.5" fill="#f2a8c8"/><path d="M14 6 Q28 6 40 12 Q44 24 40 32 Q28 36 20 30 Q16 20 14 6Z" fill="#f5b6d0"/><ellipse cx="26" cy="23" rx="8" ry="4.5" fill="#b04050"/><path d="M22 32 L38 32 L42 48 L18 48Z" fill="#d84050"/><rect x="24" y="47" width="1.5" height="5" fill="#f0c0d0"/><rect x="35" y="47" width="1.5" height="5" fill="#f0c0d0"/><ellipse cx="30" cy="52" rx="12" ry="1.5" fill="#2a4a20" opacity="0.6"/><path d="M12 36 L22 34 M38 34 L48 37" stroke="#f5c0d5" stroke-width="1.5"/><rect x="18" y="18" width="22" height="2" fill="#50e0d0" opacity="0.8"/><path d="M40 10 Q46 20 42 40" stroke="#6a4a3a" stroke-width="1" fill="none"/></g><circle cx="28.5" cy="28" r="10.5" fill="none" stroke="rgba(215,215,215,0.42)" stroke-width="4"/><path d="M28.5 17.5 A10.5 10.5 0 0 1 38.6 30.8" fill="none" stroke="rgba(238,238,238,0.92)" stroke-width="4"/></svg><span class="lit" style="letter-spacing:0.064px">114_Gunjai.mp3</span><span class="lid">2.84s</span><svg class="wv" width="266" height="16" viewBox="0 0 266 16"><path d="M0.0,6.52 L0.7,6.33 L1.3,6.41 L2.0,6.51 L2.7,6.23 L3.3,6.41 L4.0,6.28 L4.7,5.85 L5.3,5.86 L6.0,5.74 L6.7,5.94 L7.3,6.25 L8.0,6.29 L8.7,6.28 L9.3,6.53 L10.0,6.31 L10.7,6.44 L11.3,6.40 L12.0,6.45 L12.7,6.31 L13.3,6.40 L14.0,6.40 L14.7,6.50 L15.3,6.26 L16.0,6.36 L16.7,6.15 L17.3,6.27 L18.0,6.21 L18.7,6.07 L19.3,6.19 L20.0,6.07 L20.7,5.96 L21.3,6.02 L22.0,6.05 L22.7,6.25 L23.3,6.47 L24.0,6.28 L24.7,6.39 L25.3,6.29 L26.0,6.36 L26.7,6.35 L27.3,6.46 L28.0,6.18 L28.7,5.99 L29.3,5.75 L30.0,5.67 L30.7,5.67 L31.3,5.74 L32.0,5.72 L32.7,6.12 L33.3,6.43 L34.0,6.37 L34.7,6.28 L35.3,6.25 L36.0,6.45 L36.7,6.16 L37.3,5.99 L38.0,5.86 L38.7,5.82 L39.3,5.83 L40.0,5.96 L40.7,6.07 L41.3,6.26 L42.0,6.22 L42.7,6.24 L43.3,6.24 L44.0,6.43 L44.7,6.48 L45.3,6.47 L46.0,6.54 L46.7,6.35 L47.3,6.51 L48.0,6.40 L48.7,6.29 L49.3,6.34 L50.0,6.36 L50.7,6.32 L51.3,6.34 L52.0,6.16 L52.7,5.96 L53.3,5.89 L54.0,6.08 L54.7,6.10 L55.3,6.48 L56.0,6.39 L56.7,6.29 L57.3,6.30 L58.0,6.32 L58.7,6.54 L59.3,6.54 L60.0,6.39 L60.7,6.52 L61.3,6.48 L62.0,6.45 L62.7,6.22 L63.3,5.97 L64.0,5.55 L64.7,5.30 L65.3,5.44 L66.0,5.79 L66.7,5.44 L67.3,5.41 L68.0,5.14 L68.7,5.08 L69.3,5.33 L70.0,5.26 L70.7,5.49 L71.3,5.59 L72.0,5.80 L72.7,5.80 L73.3,6.04 L74.0,6.00 L74.7,5.77 L75.3,5.47 L76.0,5.26 L76.7,5.13 L77.3,5.41 L78.0,5.57 L78.7,5.85 L79.3,5.84 L80.0,5.81 L80.7,5.95 L81.3,6.25 L82.0,6.28 L82.7,6.51 L83.3,6.54 L84.0,6.34 L84.7,6.41 L85.3,6.26 L86.0,6.37 L86.7,6.38 L87.3,6.38 L88.0,6.52 L88.7,6.36 L89.3,6.42 L90.0,6.51 L90.7,6.50 L91.3,6.55 L92.0,6.46 L92.7,6.43 L93.3,6.39 L94.0,6.29 L94.7,6.51 L95.3,6.45 L96.0,6.41 L96.7,6.16 L97.3,6.04 L98.0,6.09 L98.7,5.99 L99.3,6.08 L100.0,6.20 L100.7,6.20 L101.3,6.31 L102.0,6.21 L102.7,6.06 L103.3,5.90 L104.0,5.74 L104.7,5.69 L105.3,5.60 L106.0,5.79 L106.7,5.89 L107.3,6.13 L108.0,6.02 L108.7,6.16 L109.3,6.44 L110.0,6.22 L110.7,6.15 L111.3,5.94 L112.0,5.90 L112.7,6.07 L113.3,6.22 L114.0,6.37 L114.7,6.38 L115.3,6.29 L116.0,6.18 L116.7,6.14 L117.3,5.83 L118.0,5.85 L118.7,5.80 L119.3,5.70 L120.0,5.83 L120.7,5.89 L121.3,5.86 L122.0,5.67 L122.7,5.78 L123.3,5.65 L124.0,5.89 L124.7,6.05 L125.3,6.10 L126.0,6.00 L126.7,5.91 L127.3,5.86 L128.0,6.03 L128.7,5.61 L129.3,5.68 L130.0,5.98 L130.7,5.97 L131.3,5.95 L132.0,5.62 L132.7,5.89 L133.3,6.21 L134.0,6.37 L134.7,6.27 L135.3,6.18 L136.0,5.85 L136.7,5.58 L137.3,5.34 L138.0,5.35 L138.7,5.44 L139.3,5.55 L140.0,5.68 L140.7,5.92 L141.3,6.04 L142.0,6.15 L142.7,5.90 L143.3,5.84 L144.0,6.19 L144.7,6.34 L145.3,6.13 L146.0,6.07 L146.7,6.17 L147.3,6.03 L148.0,6.00 L148.7,6.19 L149.3,6.40 L150.0,6.29 L150.7,6.35 L151.3,6.26 L152.0,6.30 L152.7,6.53 L153.3,6.40 L154.0,6.33 L154.7,6.29 L155.3,6.30 L156.0,6.27 L156.7,6.36 L157.3,6.12 L158.0,5.96 L158.7,5.57 L159.3,5.53 L160.0,5.86 L160.7,6.09 L161.3,6.30 L162.0,6.43 L162.7,6.42 L163.3,6.27 L164.0,5.77 L164.7,5.60 L165.3,5.63 L166.0,5.50 L166.7,5.94 L167.3,5.84 L168.0,6.21 L168.7,6.18 L169.3,6.16 L170.0,5.79 L170.7,5.42 L171.3,5.21 L172.0,5.35 L172.7,5.69 L173.3,5.68 L174.0,5.68 L174.7,5.97 L175.3,6.29 L176.0,6.06 L176.7,6.20 L177.3,5.64 L178.0,5.42 L178.7,5.33 L179.3,5.22 L180.0,5.36 L180.7,5.49 L181.3,5.52 L182.0,5.60 L182.7,5.58 L183.3,5.96 L184.0,6.19 L184.7,6.22 L185.3,6.27 L186.0,6.30 L186.7,6.44 L187.3,6.27 L188.0,6.36 L188.7,6.52 L189.3,6.29 L190.0,6.38 L190.7,6.41 L191.3,6.32 L192.0,6.51 L192.7,6.43 L193.3,6.46 L194.0,6.27 L194.7,6.26 L195.3,6.40 L196.0,6.34 L196.7,6.44 L197.3,6.46 L198.0,6.35 L198.7,6.38 L199.3,6.09 L200.0,5.92 L200.7,5.53 L201.3,5.08 L202.0,4.63 L202.7,4.71 L203.3,4.83 L204.0,5.22 L204.7,5.52 L205.3,5.48 L206.0,5.70 L206.7,5.91 L207.3,6.29 L208.0,6.15 L208.7,6.07 L209.3,5.74 L210.0,5.82 L210.7,6.15 L211.3,6.28 L212.0,6.49 L212.7,6.36 L213.3,6.35 L214.0,6.25 L214.7,6.34 L215.3,6.33 L216.0,6.24 L216.7,6.31 L217.3,6.04 L218.0,6.20 L218.7,6.10 L219.3,5.76 L220.0,5.43 L220.7,5.42 L221.3,5.25 L222.0,5.63 L222.7,5.39 L223.3,5.52 L224.0,5.65 L224.7,5.77 L225.3,5.93 L226.0,6.27 L226.7,6.25 L227.3,6.22 L228.0,6.36 L228.7,6.49 L229.3,6.50 L230.0,6.39 L230.7,6.39 L231.3,6.47 L232.0,6.32 L232.7,6.42 L233.3,6.54 L234.0,6.44 L234.7,6.41 L235.3,6.47 L236.0,6.49 L236.7,6.46 L237.3,6.48 L238.0,6.16 L238.7,6.09 L239.3,5.92 L240.0,5.98 L240.7,5.93 L241.3,6.04 L242.0,6.25 L242.7,6.48 L243.3,6.37 L244.0,6.51 L244.7,6.50 L245.3,6.52 L246.0,6.47 L246.7,6.23 L247.3,6.31 L248.0,5.89 L248.7,5.95 L249.3,5.69 L250.0,5.90 L250.7,5.83 L251.3,6.11 L252.0,5.83 L252.7,5.99 L253.3,6.22 L254.0,6.25 L254.7,6.34 L255.3,6.26 L256.0,6.24 L256.7,6.06 L257.3,5.69 L258.0,5.41 L258.7,5.53 L259.3,5.61 L260.0,5.82 L260.7,6.12 L261.3,6.36 L262.0,6.43 L262.7,6.47 L263.3,6.52 L264.0,6.32 L264.7,6.27 L265.3,6.49 L266.0,6.30 L266.0,9.70 L265.3,9.51 L264.7,9.73 L264.0,9.68 L263.3,9.48 L262.7,9.53 L262.0,9.57 L261.3,9.64 L260.7,9.88 L260.0,10.18 L259.3,10.39 L258.7,10.47 L258.0,10.59 L257.3,10.31 L256.7,9.94 L256.0,9.76 L255.3,9.74 L254.7,9.66 L254.0,9.75 L253.3,9.78 L252.7,10.01 L252.0,10.17 L251.3,9.89 L250.7,10.17 L250.0,10.10 L249.3,10.31 L248.7,10.05 L248.0,10.11 L247.3,9.69 L246.7,9.77 L246.0,9.53 L245.3,9.48 L244.7,9.50 L244.0,9.49 L243.3,9.63 L242.7,9.52 L242.0,9.75 L241.3,9.96 L240.7,10.07 L240.0,10.02 L239.3,10.08 L238.7,9.91 L238.0,9.84 L237.3,9.52 L236.7,9.54 L236.0,9.51 L235.3,9.53 L234.7,9.59 L234.0,9.56 L233.3,9.46 L232.7,9.58 L232.0,9.68 L231.3,9.53 L230.7,9.61 L230.0,9.61 L229.3,9.50 L228.7,9.51 L228.0,9.64 L227.3,9.78 L226.7,9.75 L226.0,9.73 L225.3,10.07 L224.7,10.23 L224.0,10.35 L223.3,10.48 L222.7,10.61 L222.0,10.37 L221.3,10.75 L220.7,10.58 L220.0,10.57 L219.3,10.24 L218.7,9.90 L218.0,9.80 L217.3,9.96 L216.7,9.69 L216.0,9.76 L215.3,9.67 L214.7,9.66 L214.0,9.75 L213.3,9.65 L212.7,9.64 L212.0,9.51 L211.3,9.72 L210.7,9.85 L210.0,10.18 L209.3,10.26 L208.7,9.93 L208.0,9.85 L207.3,9.71 L206.7,10.09 L206.0,10.30 L205.3,10.52 L204.7,10.48 L204.0,10.78 L203.3,11.17 L202.7,11.29 L202.0,11.37 L201.3,10.92 L200.7,10.47 L200.0,10.08 L199.3,9.91 L198.7,9.62 L198.0,9.65 L197.3,9.54 L196.7,9.56 L196.0,9.66 L195.3,9.60 L194.7,9.74 L194.0,9.73 L193.3,9.54 L192.7,9.57 L192.0,9.49 L191.3,9.68 L190.7,9.59 L190.0,9.62 L189.3,9.71 L188.7,9.48 L188.0,9.64 L187.3,9.73 L186.7,9.56 L186.0,9.70 L185.3,9.73 L184.7,9.78 L184.0,9.81 L183.3,10.04 L182.7,10.42 L182.0,10.40 L181.3,10.48 L180.7,10.51 L180.0,10.64 L179.3,10.78 L178.7,10.67 L178.0,10.58 L177.3,10.36 L176.7,9.80 L176.0,9.94 L175.3,9.71 L174.7,10.03 L174.0,10.32 L173.3,10.32 L172.7,10.31 L172.0,10.65 L171.3,10.79 L170.7,10.58 L170.0,10.21 L169.3,9.84 L168.7,9.82 L168.0,9.79 L167.3,10.16 L166.7,10.06 L166.0,10.50 L165.3,10.37 L164.7,10.40 L164.0,10.23 L163.3,9.73 L162.7,9.58 L162.0,9.57 L161.3,9.70 L160.7,9.91 L160.0,10.14 L159.3,10.47 L158.7,10.43 L158.0,10.04 L157.3,9.88 L156.7,9.64 L156.0,9.73 L155.3,9.70 L154.7,9.71 L154.0,9.67 L153.3,9.60 L152.7,9.47 L152.0,9.70 L151.3,9.74 L150.7,9.65 L150.0,9.71 L149.3,9.60 L148.7,9.81 L148.0,10.00 L147.3,9.97 L146.7,9.83 L146.0,9.93 L145.3,9.87 L144.7,9.66 L144.0,9.81 L143.3,10.16 L142.7,10.10 L142.0,9.85 L141.3,9.96 L140.7,10.08 L140.0,10.32 L139.3,10.45 L138.7,10.56 L138.0,10.65 L137.3,10.66 L136.7,10.42 L136.0,10.15 L135.3,9.82 L134.7,9.73 L134.0,9.63 L133.3,9.79 L132.7,10.11 L132.0,10.38 L131.3,10.05 L130.7,10.03 L130.0,10.02 L129.3,10.32 L128.7,10.39 L128.0,9.97 L127.3,10.14 L126.7,10.09 L126.0,10.00 L125.3,9.90 L124.7,9.95 L124.0,10.11 L123.3,10.35 L122.7,10.22 L122.0,10.33 L121.3,10.14 L120.7,10.11 L120.0,10.17 L119.3,10.30 L118.7,10.20 L118.0,10.15 L117.3,10.17 L116.7,9.86 L116.0,9.82 L115.3,9.71 L114.7,9.62 L114.0,9.63 L113.3,9.78 L112.7,9.93 L112.0,10.10 L111.3,10.06 L110.7,9.85 L110.0,9.78 L109.3,9.56 L108.7,9.84 L108.0,9.98 L107.3,9.87 L106.7,10.11 L106.0,10.21 L105.3,10.40 L104.7,10.31 L104.0,10.26 L103.3,10.10 L102.7,9.94 L102.0,9.79 L101.3,9.69 L100.7,9.80 L100.0,9.80 L99.3,9.92 L98.7,10.01 L98.0,9.91 L97.3,9.96 L96.7,9.84 L96.0,9.59 L95.3,9.55 L94.7,9.49 L94.0,9.71 L93.3,9.61 L92.7,9.57 L92.0,9.54 L91.3,9.45 L90.7,9.50 L90.0,9.49 L89.3,9.58 L88.7,9.64 L88.0,9.48 L87.3,9.62 L86.7,9.62 L86.0,9.63 L85.3,9.74 L84.7,9.59 L84.0,9.66 L83.3,9.46 L82.7,9.49 L82.0,9.72 L81.3,9.75 L80.7,10.05 L80.0,10.19 L79.3,10.16 L78.7,10.15 L78.0,10.43 L77.3,10.59 L76.7,10.87 L76.0,10.74 L75.3,10.53 L74.7,10.23 L74.0,10.00 L73.3,9.96 L72.7,10.20 L72.0,10.20 L71.3,10.41 L70.7,10.51 L70.0,10.74 L69.3,10.67 L68.7,10.92 L68.0,10.86 L67.3,10.59 L66.7,10.56 L66.0,10.21 L65.3,10.56 L64.7,10.70 L64.0,10.45 L63.3,10.03 L62.7,9.78 L62.0,9.55 L61.3,9.52 L60.7,9.48 L60.0,9.61 L59.3,9.46 L58.7,9.46 L58.0,9.68 L57.3,9.70 L56.7,9.71 L56.0,9.61 L55.3,9.52 L54.7,9.90 L54.0,9.92 L53.3,10.11 L52.7,10.04 L52.0,9.84 L51.3,9.66 L50.7,9.68 L50.0,9.64 L49.3,9.66 L48.7,9.71 L48.0,9.60 L47.3,9.49 L46.7,9.65 L46.0,9.46 L45.3,9.53 L44.7,9.52 L44.0,9.57 L43.3,9.76 L42.7,9.76 L42.0,9.78 L41.3,9.74 L40.7,9.93 L40.0,10.04 L39.3,10.17 L38.7,10.18 L38.0,10.14 L37.3,10.01 L36.7,9.84 L36.0,9.55 L35.3,9.75 L34.7,9.72 L34.0,9.63 L33.3,9.57 L32.7,9.88 L32.0,10.28 L31.3,10.26 L30.7,10.33 L30.0,10.33 L29.3,10.25 L28.7,10.01 L28.0,9.82 L27.3,9.54 L26.7,9.65 L26.0,9.64 L25.3,9.71 L24.7,9.61 L24.0,9.72 L23.3,9.53 L22.7,9.75 L22.0,9.95 L21.3,9.98 L20.7,10.04 L20.0,9.93 L19.3,9.81 L18.7,9.93 L18.0,9.79 L17.3,9.73 L16.7,9.85 L16.0,9.64 L15.3,9.74 L14.7,9.50 L14.0,9.60 L13.3,9.60 L12.7,9.69 L12.0,9.55 L11.3,9.60 L10.7,9.56 L10.0,9.69 L9.3,9.47 L8.7,9.72 L8.0,9.71 L7.3,9.75 L6.7,10.06 L6.0,10.26 L5.3,10.14 L4.7,10.15 L4.0,9.72 L3.3,9.59 L2.7,9.77 L2.0,9.49 L1.3,9.59 L0.7,9.67 L0.0,9.48Z" fill="#eeeeee"/></svg></div>
<div class="lh" style="top:809.85px;height:27.5px;background:#955a62"><span class="lht">Pista-5</span><svg style="position:absolute;left:317.6px;top:5.4px" width="18" height="18" viewBox="0 0 18 18"><circle cx="9" cy="9" r="7.6" fill="none" stroke="rgba(240,240,240,0.8)" stroke-width="1.5"/><path d="M7.4 5.5 L12.2 9 L7.4 12.6Z" fill="rgba(240,240,240,0.8)"/></svg></div>
<div class="li" style="top:837.35px;height:64.75px;background:#e6737a"><svg class="th" style="left:4px;top:4.20px;width:57px;height:56px;" width="57" height="56" viewBox="0 0 57 56"><defs><filter id="bl" x="-10%" y="-10%" width="120%" height="120%"><feGaussianBlur stdDeviation="1.6"/></filter><filter id="bl2"><feGaussianBlur stdDeviation="0.5"/></filter><filter id="bl3" x="-5%" y="-5%" width="110%" height="110%"><feGaussianBlur stdDeviation="0.7"/></filter></defs><rect width="57" height="56" fill="#2a2a48"/><rect x="0" y="0" width="57" height="1.5" fill="#080808"/><rect x="0" y="54" width="57" height="2" fill="#080808"/><g filter="url(#bl)"><ellipse cx="28" cy="26" rx="20" ry="24" fill="#7a5058"/><ellipse cx="28" cy="14" rx="16" ry="6" fill="#9a7078"/><ellipse cx="20" cy="14" rx="5" ry="2" fill="#3a2020"/><ellipse cx="37" cy="14" rx="5" ry="2" fill="#3a2020"/><ellipse cx="28" cy="30" rx="6" ry="5" fill="#b07078"/><ellipse cx="8" cy="50" rx="10" ry="8" fill="#8a6060"/><ellipse cx="48" cy="50" rx="10" ry="8" fill="#7a5050"/><rect x="16" y="44" width="18" height="12" fill="#202080"/><ellipse cx="50" cy="36" rx="4" ry="6" fill="#d0c0d0"/><ellipse cx="54" cy="46" rx="3" ry="5" fill="#60a040"/><ellipse cx="4" cy="36" rx="4" ry="2" fill="#d0d0e0"/></g><circle cx="28.5" cy="28" r="10.5" fill="none" stroke="rgba(215,215,215,0.42)" stroke-width="4"/><path d="M28.5 17.5 A10.5 10.5 0 0 1 38.6 30.8" fill="none" stroke="rgba(238,238,238,0.92)" stroke-width="4"/></svg><span class="lit" style="letter-spacing:0.293px">102_Hunguhungu.mp3</span><span class="lid">2.56s</span><svg class="wv" width="266" height="16" viewBox="0 0 266 16"><path d="M0.0,5.53 L0.7,4.83 L1.3,4.59 L2.0,4.08 L2.7,3.47 L3.3,3.21 L4.0,2.67 L4.7,2.49 L5.3,2.61 L6.0,2.69 L6.7,2.99 L7.3,3.23 L8.0,3.67 L8.7,3.99 L9.3,4.29 L10.0,4.48 L10.7,4.99 L11.3,5.71 L12.0,5.95 L12.7,6.35 L13.3,6.37 L14.0,6.51 L14.7,6.49 L15.3,6.41 L16.0,6.43 L16.7,6.42 L17.3,6.45 L18.0,6.56 L18.7,6.64 L19.3,6.45 L20.0,6.51 L20.7,6.66 L21.3,6.58 L22.0,6.68 L22.7,6.47 L23.3,6.42 L24.0,6.70 L24.7,6.51 L25.3,6.43 L26.0,6.43 L26.7,6.48 L27.3,6.66 L28.0,6.53 L28.7,6.60 L29.3,6.52 L30.0,6.56 L30.7,6.52 L31.3,6.22 L32.0,5.98 L32.7,5.29 L33.3,4.16 L34.0,2.95 L34.7,2.08 L35.3,1.42 L36.0,1.20 L36.7,1.72 L37.3,2.22 L38.0,3.28 L38.7,4.17 L39.3,4.70 L40.0,5.16 L40.7,5.42 L41.3,5.42 L42.0,5.64 L42.7,5.90 L43.3,6.13 L44.0,6.55 L44.7,6.54 L45.3,6.62 L46.0,6.47 L46.7,6.53 L47.3,6.47 L48.0,6.39 L48.7,5.98 L49.3,5.61 L50.0,5.54 L50.7,5.77 L51.3,6.14 L52.0,6.30 L52.7,6.51 L53.3,6.61 L54.0,6.68 L54.7,6.68 L55.3,6.70 L56.0,6.67 L56.7,6.49 L57.3,6.50 L58.0,6.60 L58.7,6.39 L59.3,6.44 L60.0,6.23 L60.7,6.12 L61.3,6.42 L62.0,6.50 L62.7,6.59 L63.3,6.47 L64.0,6.60 L64.7,6.45 L65.3,6.21 L66.0,5.94 L66.7,5.44 L67.3,5.08 L68.0,4.54 L68.7,4.29 L69.3,4.11 L70.0,4.04 L70.7,4.21 L71.3,4.71 L72.0,5.16 L72.7,5.27 L73.3,5.54 L74.0,5.37 L74.7,5.23 L75.3,4.97 L76.0,5.09 L76.7,5.66 L77.3,5.90 L78.0,6.32 L78.7,6.44 L79.3,6.39 L80.0,6.24 L80.7,5.91 L81.3,5.61 L82.0,5.33 L82.7,5.27 L83.3,5.78 L84.0,6.06 L84.7,6.39 L85.3,6.50 L86.0,6.60 L86.7,6.45 L87.3,6.55 L88.0,6.63 L88.7,6.17 L89.3,5.90 L90.0,5.93 L90.7,6.16 L91.3,6.57 L92.0,6.53 L92.7,6.49 L93.3,6.58 L94.0,6.61 L94.7,6.58 L95.3,6.65 L96.0,6.49 L96.7,6.58 L97.3,6.59 L98.0,6.36 L98.7,6.30 L99.3,6.40 L100.0,6.11 L100.7,6.03 L101.3,5.70 L102.0,5.27 L102.7,4.90 L103.3,4.38 L104.0,3.57 L104.7,3.15 L105.3,2.67 L106.0,2.37 L106.7,1.96 L107.3,1.98 L108.0,2.38 L108.7,2.46 L109.3,3.08 L110.0,3.54 L110.7,3.82 L111.3,4.17 L112.0,4.85 L112.7,5.31 L113.3,5.69 L114.0,5.84 L114.7,5.97 L115.3,5.83 L116.0,5.84 L116.7,5.92 L117.3,6.24 L118.0,6.20 L118.7,6.18 L119.3,6.34 L120.0,6.31 L120.7,5.96 L121.3,5.29 L122.0,4.76 L122.7,4.88 L123.3,5.35 L124.0,6.08 L124.7,6.29 L125.3,6.38 L126.0,6.53 L126.7,6.51 L127.3,6.44 L128.0,6.53 L128.7,6.56 L129.3,6.63 L130.0,6.50 L130.7,6.64 L131.3,6.44 L132.0,6.46 L132.7,6.40 L133.3,6.40 L134.0,6.11 L134.7,5.96 L135.3,5.14 L136.0,4.32 L136.7,3.49 L137.3,2.96 L138.0,2.62 L138.7,2.91 L139.3,3.52 L140.0,4.44 L140.7,5.18 L141.3,5.86 L142.0,6.26 L142.7,6.51 L143.3,6.45 L144.0,6.54 L144.7,6.53 L145.3,6.55 L146.0,6.68 L146.7,6.66 L147.3,6.61 L148.0,6.23 L148.7,6.01 L149.3,5.99 L150.0,6.23 L150.7,6.53 L151.3,6.65 L152.0,6.40 L152.7,6.53 L153.3,6.41 L154.0,6.46 L154.7,6.60 L155.3,6.38 L156.0,6.28 L156.7,6.17 L157.3,6.16 L158.0,6.34 L158.7,6.34 L159.3,6.13 L160.0,6.07 L160.7,5.90 L161.3,5.65 L162.0,5.12 L162.7,5.49 L163.3,5.83 L164.0,6.09 L164.7,6.44 L165.3,6.51 L166.0,6.34 L166.7,6.17 L167.3,6.09 L168.0,5.92 L168.7,5.52 L169.3,5.19 L170.0,4.86 L170.7,4.60 L171.3,4.60 L172.0,4.79 L172.7,4.99 L173.3,5.47 L174.0,5.83 L174.7,6.17 L175.3,6.38 L176.0,6.36 L176.7,6.19 L177.3,6.11 L178.0,5.99 L178.7,5.93 L179.3,6.28 L180.0,6.29 L180.7,6.35 L181.3,6.61 L182.0,6.55 L182.7,6.58 L183.3,6.58 L184.0,6.48 L184.7,6.52 L185.3,6.63 L186.0,6.66 L186.7,6.51 L187.3,6.60 L188.0,6.49 L188.7,6.59 L189.3,6.46 L190.0,6.41 L190.7,6.25 L191.3,6.13 L192.0,5.84 L192.7,5.91 L193.3,5.86 L194.0,6.15 L194.7,6.40 L195.3,6.43 L196.0,6.55 L196.7,6.46 L197.3,6.55 L198.0,6.44 L198.7,6.61 L199.3,6.43 L200.0,6.41 L200.7,6.33 L201.3,5.89 L202.0,5.56 L202.7,5.83 L203.3,6.28 L204.0,6.17 L204.7,6.03 L205.3,5.53 L206.0,5.18 L206.7,4.74 L207.3,4.26 L208.0,3.69 L208.7,2.93 L209.3,2.43 L210.0,1.68 L210.7,1.27 L211.3,1.18 L212.0,1.68 L212.7,1.99 L213.3,2.97 L214.0,3.56 L214.7,4.33 L215.3,4.67 L216.0,5.37 L216.7,5.59 L217.3,6.05 L218.0,6.05 L218.7,6.44 L219.3,6.29 L220.0,6.36 L220.7,6.36 L221.3,6.41 L222.0,6.41 L222.7,6.22 L223.3,6.24 L224.0,5.97 L224.7,6.13 L225.3,6.18 L226.0,6.21 L226.7,6.33 L227.3,6.47 L228.0,6.66 L228.7,6.66 L229.3,6.66 L230.0,6.60 L230.7,6.64 L231.3,6.64 L232.0,6.39 L232.7,6.27 L233.3,6.37 L234.0,6.17 L234.7,6.17 L235.3,6.23 L236.0,6.38 L236.7,6.27 L237.3,6.29 L238.0,6.02 L238.7,5.55 L239.3,4.81 L240.0,3.54 L240.7,2.72 L241.3,2.45 L242.0,2.93 L242.7,4.15 L243.3,5.15 L244.0,6.07 L244.7,6.47 L245.3,6.55 L246.0,6.39 L246.7,6.26 L247.3,6.22 L248.0,6.12 L248.7,6.17 L249.3,6.15 L250.0,5.86 L250.7,5.98 L251.3,5.99 L252.0,6.22 L252.7,6.25 L253.3,6.06 L254.0,5.97 L254.7,5.96 L255.3,5.75 L256.0,6.06 L256.7,6.56 L257.3,6.47 L258.0,6.64 L258.7,6.54 L259.3,6.42 L260.0,6.50 L260.7,6.52 L261.3,6.40 L262.0,6.25 L262.7,5.65 L263.3,5.81 L264.0,5.99 L264.7,6.27 L265.3,6.61 L266.0,6.47 L266.0,9.53 L265.3,9.39 L264.7,9.73 L264.0,10.01 L263.3,10.19 L262.7,10.35 L262.0,9.75 L261.3,9.60 L260.7,9.48 L260.0,9.50 L259.3,9.58 L258.7,9.46 L258.0,9.36 L257.3,9.53 L256.7,9.44 L256.0,9.94 L255.3,10.25 L254.7,10.04 L254.0,10.03 L253.3,9.94 L252.7,9.75 L252.0,9.78 L251.3,10.01 L250.7,10.02 L250.0,10.14 L249.3,9.85 L248.7,9.83 L248.0,9.88 L247.3,9.78 L246.7,9.74 L246.0,9.61 L245.3,9.45 L244.7,9.53 L244.0,9.93 L243.3,10.85 L242.7,11.85 L242.0,13.07 L241.3,13.55 L240.7,13.28 L240.0,12.46 L239.3,11.19 L238.7,10.45 L238.0,9.98 L237.3,9.71 L236.7,9.73 L236.0,9.62 L235.3,9.77 L234.7,9.83 L234.0,9.83 L233.3,9.63 L232.7,9.73 L232.0,9.61 L231.3,9.36 L230.7,9.36 L230.0,9.40 L229.3,9.34 L228.7,9.34 L228.0,9.34 L227.3,9.53 L226.7,9.67 L226.0,9.79 L225.3,9.82 L224.7,9.87 L224.0,10.03 L223.3,9.76 L222.7,9.78 L222.0,9.59 L221.3,9.59 L220.7,9.64 L220.0,9.64 L219.3,9.71 L218.7,9.56 L218.0,9.95 L217.3,9.95 L216.7,10.41 L216.0,10.63 L215.3,11.33 L214.7,11.67 L214.0,12.44 L213.3,13.03 L212.7,14.01 L212.0,14.32 L211.3,14.82 L210.7,14.73 L210.0,14.32 L209.3,13.57 L208.7,13.07 L208.0,12.31 L207.3,11.74 L206.7,11.26 L206.0,10.82 L205.3,10.47 L204.7,9.97 L204.0,9.83 L203.3,9.72 L202.7,10.17 L202.0,10.44 L201.3,10.11 L200.7,9.67 L200.0,9.59 L199.3,9.57 L198.7,9.39 L198.0,9.56 L197.3,9.45 L196.7,9.54 L196.0,9.45 L195.3,9.57 L194.7,9.60 L194.0,9.85 L193.3,10.14 L192.7,10.09 L192.0,10.16 L191.3,9.87 L190.7,9.75 L190.0,9.59 L189.3,9.54 L188.7,9.41 L188.0,9.51 L187.3,9.40 L186.7,9.49 L186.0,9.34 L185.3,9.37 L184.7,9.48 L184.0,9.52 L183.3,9.42 L182.7,9.42 L182.0,9.45 L181.3,9.39 L180.7,9.65 L180.0,9.71 L179.3,9.72 L178.7,10.07 L178.0,10.01 L177.3,9.89 L176.7,9.81 L176.0,9.64 L175.3,9.62 L174.7,9.83 L174.0,10.17 L173.3,10.53 L172.7,11.01 L172.0,11.21 L171.3,11.40 L170.7,11.40 L170.0,11.14 L169.3,10.81 L168.7,10.48 L168.0,10.08 L167.3,9.91 L166.7,9.83 L166.0,9.66 L165.3,9.49 L164.7,9.56 L164.0,9.91 L163.3,10.17 L162.7,10.51 L162.0,10.88 L161.3,10.35 L160.7,10.10 L160.0,9.93 L159.3,9.87 L158.7,9.66 L158.0,9.66 L157.3,9.84 L156.7,9.83 L156.0,9.72 L155.3,9.62 L154.7,9.40 L154.0,9.54 L153.3,9.59 L152.7,9.47 L152.0,9.60 L151.3,9.35 L150.7,9.47 L150.0,9.77 L149.3,10.01 L148.7,9.99 L148.0,9.77 L147.3,9.39 L146.7,9.34 L146.0,9.32 L145.3,9.45 L144.7,9.47 L144.0,9.46 L143.3,9.55 L142.7,9.49 L142.0,9.74 L141.3,10.14 L140.7,10.82 L140.0,11.56 L139.3,12.48 L138.7,13.09 L138.0,13.38 L137.3,13.04 L136.7,12.51 L136.0,11.68 L135.3,10.86 L134.7,10.04 L134.0,9.89 L133.3,9.60 L132.7,9.60 L132.0,9.54 L131.3,9.56 L130.7,9.36 L130.0,9.50 L129.3,9.37 L128.7,9.44 L128.0,9.47 L127.3,9.56 L126.7,9.49 L126.0,9.47 L125.3,9.62 L124.7,9.71 L124.0,9.92 L123.3,10.65 L122.7,11.12 L122.0,11.24 L121.3,10.71 L120.7,10.04 L120.0,9.69 L119.3,9.66 L118.7,9.82 L118.0,9.80 L117.3,9.76 L116.7,10.08 L116.0,10.16 L115.3,10.17 L114.7,10.03 L114.0,10.16 L113.3,10.31 L112.7,10.69 L112.0,11.15 L111.3,11.83 L110.7,12.18 L110.0,12.46 L109.3,12.92 L108.7,13.54 L108.0,13.62 L107.3,14.02 L106.7,14.04 L106.0,13.63 L105.3,13.33 L104.7,12.85 L104.0,12.43 L103.3,11.62 L102.7,11.10 L102.0,10.73 L101.3,10.30 L100.7,9.97 L100.0,9.89 L99.3,9.60 L98.7,9.70 L98.0,9.64 L97.3,9.41 L96.7,9.42 L96.0,9.51 L95.3,9.35 L94.7,9.42 L94.0,9.39 L93.3,9.42 L92.7,9.51 L92.0,9.47 L91.3,9.43 L90.7,9.84 L90.0,10.07 L89.3,10.10 L88.7,9.83 L88.0,9.37 L87.3,9.45 L86.7,9.55 L86.0,9.40 L85.3,9.50 L84.7,9.61 L84.0,9.94 L83.3,10.22 L82.7,10.73 L82.0,10.67 L81.3,10.39 L80.7,10.09 L80.0,9.76 L79.3,9.61 L78.7,9.56 L78.0,9.68 L77.3,10.10 L76.7,10.34 L76.0,10.91 L75.3,11.03 L74.7,10.77 L74.0,10.63 L73.3,10.46 L72.7,10.73 L72.0,10.84 L71.3,11.29 L70.7,11.79 L70.0,11.96 L69.3,11.89 L68.7,11.71 L68.0,11.46 L67.3,10.92 L66.7,10.56 L66.0,10.06 L65.3,9.79 L64.7,9.55 L64.0,9.40 L63.3,9.53 L62.7,9.41 L62.0,9.50 L61.3,9.58 L60.7,9.88 L60.0,9.77 L59.3,9.56 L58.7,9.61 L58.0,9.40 L57.3,9.50 L56.7,9.51 L56.0,9.33 L55.3,9.30 L54.7,9.32 L54.0,9.32 L53.3,9.39 L52.7,9.49 L52.0,9.70 L51.3,9.86 L50.7,10.23 L50.0,10.46 L49.3,10.39 L48.7,10.02 L48.0,9.61 L47.3,9.53 L46.7,9.47 L46.0,9.53 L45.3,9.38 L44.7,9.46 L44.0,9.45 L43.3,9.87 L42.7,10.10 L42.0,10.36 L41.3,10.58 L40.7,10.58 L40.0,10.84 L39.3,11.30 L38.7,11.83 L38.0,12.72 L37.3,13.78 L36.7,14.28 L36.0,14.80 L35.3,14.58 L34.7,13.92 L34.0,13.05 L33.3,11.84 L32.7,10.71 L32.0,10.02 L31.3,9.78 L30.7,9.48 L30.0,9.44 L29.3,9.48 L28.7,9.40 L28.0,9.47 L27.3,9.34 L26.7,9.52 L26.0,9.57 L25.3,9.57 L24.7,9.49 L24.0,9.30 L23.3,9.58 L22.7,9.53 L22.0,9.32 L21.3,9.42 L20.7,9.34 L20.0,9.49 L19.3,9.55 L18.7,9.36 L18.0,9.44 L17.3,9.55 L16.7,9.58 L16.0,9.57 L15.3,9.59 L14.7,9.51 L14.0,9.49 L13.3,9.63 L12.7,9.65 L12.0,10.05 L11.3,10.29 L10.7,11.01 L10.0,11.52 L9.3,11.71 L8.7,12.01 L8.0,12.33 L7.3,12.77 L6.7,13.01 L6.0,13.31 L5.3,13.39 L4.7,13.51 L4.0,13.33 L3.3,12.79 L2.7,12.53 L2.0,11.92 L1.3,11.41 L0.7,11.17 L0.0,10.47Z" fill="#eeeeee"/></svg></div>
<div class="li" style="top:902.10px;height:64.75px;background:#e6737a"><svg class="th" style="left:4px;top:4.20px;width:57px;height:56px;" width="57" height="56" viewBox="0 0 57 56"><defs><filter id="bl" x="-10%" y="-10%" width="120%" height="120%"><feGaussianBlur stdDeviation="1.6"/></filter><filter id="bl2"><feGaussianBlur stdDeviation="0.5"/></filter><filter id="bl3" x="-5%" y="-5%" width="110%" height="110%"><feGaussianBlur stdDeviation="0.7"/></filter></defs><rect width="57" height="56" fill="#333333"/><circle cx="28.5" cy="28" r="10.5" fill="none" stroke="rgba(215,215,215,0.42)" stroke-width="4"/><path d="M28.5 17.5 A10.5 10.5 0 0 1 38.6 30.8" fill="none" stroke="rgba(238,238,238,0.92)" stroke-width="4"/></svg><span class="lit" style="letter-spacing:0.396px">chants et danses d' amerique centrale - 05 ...</span><span class="lid">7.04s</span><svg class="wv" width="266" height="16" viewBox="0 0 266 16"><path d="M0.0,5.20 L0.7,4.84 L1.3,4.55 L2.0,4.14 L2.7,3.91 L3.3,3.83 L4.0,3.86 L4.7,4.34 L5.3,4.62 L6.0,4.85 L6.7,5.27 L7.3,5.39 L8.0,5.40 L8.7,5.06 L9.3,4.85 L10.0,4.12 L10.7,3.77 L11.3,3.37 L12.0,3.25 L12.7,3.37 L13.3,3.58 L14.0,4.11 L14.7,4.66 L15.3,5.32 L16.0,5.42 L16.7,5.41 L17.3,5.45 L18.0,5.30 L18.7,4.97 L19.3,4.79 L20.0,4.37 L20.7,4.27 L21.3,4.60 L22.0,4.75 L22.7,5.05 L23.3,5.41 L24.0,5.51 L24.7,5.53 L25.3,5.55 L26.0,5.58 L26.7,5.21 L27.3,4.23 L28.0,3.43 L28.7,2.93 L29.3,3.22 L30.0,4.13 L30.7,4.58 L31.3,4.69 L32.0,4.13 L32.7,3.59 L33.3,3.30 L34.0,3.11 L34.7,3.30 L35.3,3.82 L36.0,4.28 L36.7,4.51 L37.3,4.75 L38.0,4.52 L38.7,4.12 L39.3,3.90 L40.0,4.15 L40.7,4.19 L41.3,4.32 L42.0,4.06 L42.7,3.80 L43.3,3.12 L44.0,2.96 L44.7,2.68 L45.3,2.98 L46.0,3.34 L46.7,3.91 L47.3,4.24 L48.0,4.90 L48.7,5.03 L49.3,5.30 L50.0,5.37 L50.7,4.97 L51.3,4.58 L52.0,4.21 L52.7,3.50 L53.3,3.43 L54.0,3.58 L54.7,3.72 L55.3,4.22 L56.0,4.75 L56.7,5.06 L57.3,5.00 L58.0,4.88 L58.7,4.73 L59.3,4.74 L60.0,4.80 L60.7,4.94 L61.3,5.28 L62.0,5.35 L62.7,5.12 L63.3,4.72 L64.0,4.37 L64.7,4.23 L65.3,4.53 L66.0,4.77 L66.7,5.18 L67.3,5.04 L68.0,4.80 L68.7,4.10 L69.3,3.68 L70.0,3.69 L70.7,3.87 L71.3,4.32 L72.0,4.38 L72.7,4.52 L73.3,4.29 L74.0,4.40 L74.7,4.60 L75.3,5.11 L76.0,5.13 L76.7,4.88 L77.3,4.24 L78.0,3.99 L78.7,3.56 L79.3,3.74 L80.0,3.84 L80.7,4.45 L81.3,4.67 L82.0,5.00 L82.7,5.19 L83.3,5.18 L84.0,4.77 L84.7,4.09 L85.3,3.29 L86.0,3.05 L86.7,2.93 L87.3,3.28 L88.0,3.85 L88.7,4.26 L89.3,4.16 L90.0,4.10 L90.7,3.68 L91.3,3.09 L92.0,2.79 L92.7,2.64 L93.3,2.55 L94.0,2.90 L94.7,3.46 L95.3,3.90 L96.0,4.38 L96.7,5.02 L97.3,5.18 L98.0,5.38 L98.7,5.48 L99.3,5.37 L100.0,4.67 L100.7,3.91 L101.3,3.12 L102.0,2.70 L102.7,3.27 L103.3,4.06 L104.0,4.58 L104.7,5.07 L105.3,5.50 L106.0,5.37 L106.7,4.88 L107.3,4.14 L108.0,3.84 L108.7,3.65 L109.3,4.25 L110.0,4.61 L110.7,5.18 L111.3,5.25 L112.0,5.48 L112.7,5.38 L113.3,5.37 L114.0,4.93 L114.7,4.32 L115.3,3.61 L116.0,3.03 L116.7,2.52 L117.3,2.43 L118.0,2.30 L118.7,2.28 L119.3,2.42 L120.0,2.57 L120.7,2.48 L121.3,2.50 L122.0,2.40 L122.7,2.29 L123.3,2.29 L124.0,2.10 L124.7,2.32 L125.3,2.73 L126.0,3.18 L126.7,3.49 L127.3,3.68 L128.0,3.79 L128.7,3.91 L129.3,4.15 L130.0,3.76 L130.7,3.45 L131.3,2.67 L132.0,1.64 L132.7,0.90 L133.3,0.81 L134.0,1.04 L134.7,1.58 L135.3,2.05 L136.0,1.96 L136.7,2.26 L137.3,2.82 L138.0,3.55 L138.7,4.03 L139.3,4.10 L140.0,3.90 L140.7,3.35 L141.3,2.99 L142.0,2.77 L142.7,2.86 L143.3,3.11 L144.0,3.50 L144.7,4.11 L145.3,4.46 L146.0,4.26 L146.7,4.29 L147.3,4.10 L148.0,4.05 L148.7,4.45 L149.3,4.74 L150.0,5.23 L150.7,5.24 L151.3,5.46 L152.0,5.08 L152.7,5.05 L153.3,4.81 L154.0,4.89 L154.7,5.00 L155.3,5.26 L156.0,4.69 L156.7,4.21 L157.3,3.36 L158.0,3.20 L158.7,3.55 L159.3,4.55 L160.0,5.14 L160.7,5.42 L161.3,5.56 L162.0,5.48 L162.7,5.30 L163.3,4.49 L164.0,4.15 L164.7,3.85 L165.3,4.55 L166.0,5.18 L166.7,5.42 L167.3,5.63 L168.0,5.82 L168.7,5.70 L169.3,5.59 L170.0,5.52 L170.7,5.29 L171.3,5.02 L172.0,4.58 L172.7,4.29 L173.3,3.95 L174.0,3.67 L174.7,3.85 L175.3,3.90 L176.0,3.27 L176.7,2.56 L177.3,1.77 L178.0,1.31 L178.7,1.61 L179.3,2.25 L180.0,2.97 L180.7,3.65 L181.3,4.23 L182.0,4.61 L182.7,5.12 L183.3,5.19 L184.0,5.05 L184.7,4.41 L185.3,3.72 L186.0,3.41 L186.7,3.74 L187.3,4.32 L188.0,5.14 L188.7,5.41 L189.3,5.64 L190.0,5.50 L190.7,5.27 L191.3,4.84 L192.0,4.15 L192.7,3.70 L193.3,3.46 L194.0,3.69 L194.7,4.19 L195.3,4.64 L196.0,5.12 L196.7,5.48 L197.3,5.27 L198.0,5.34 L198.7,4.87 L199.3,4.63 L200.0,4.43 L200.7,4.13 L201.3,3.70 L202.0,3.32 L202.7,2.86 L203.3,2.94 L204.0,3.73 L204.7,4.48 L205.3,5.09 L206.0,5.31 L206.7,5.57 L207.3,5.37 L208.0,5.51 L208.7,5.27 L209.3,5.17 L210.0,5.16 L210.7,4.79 L211.3,4.33 L212.0,4.27 L212.7,4.41 L213.3,4.55 L214.0,4.91 L214.7,5.29 L215.3,5.55 L216.0,5.53 L216.7,5.67 L217.3,5.75 L218.0,5.74 L218.7,5.55 L219.3,5.42 L220.0,4.74 L220.7,3.81 L221.3,3.25 L222.0,2.82 L222.7,2.65 L223.3,2.26 L224.0,1.92 L224.7,1.60 L225.3,1.58 L226.0,2.49 L226.7,3.66 L227.3,4.74 L228.0,5.38 L228.7,5.57 L229.3,5.40 L230.0,5.09 L230.7,4.70 L231.3,4.26 L232.0,4.46 L232.7,4.67 L233.3,5.11 L234.0,5.25 L234.7,5.26 L235.3,5.08 L236.0,4.99 L236.7,4.85 L237.3,5.06 L238.0,5.13 L238.7,4.75 L239.3,4.44 L240.0,4.07 L240.7,3.88 L241.3,4.10 L242.0,4.13 L242.7,4.39 L243.3,4.19 L244.0,4.08 L244.7,3.90 L245.3,3.95 L246.0,3.84 L246.7,4.00 L247.3,4.36 L248.0,4.79 L248.7,5.20 L249.3,4.98 L250.0,4.82 L250.7,4.03 L251.3,3.80 L252.0,3.59 L252.7,3.70 L253.3,4.34 L254.0,4.67 L254.7,5.11 L255.3,5.48 L256.0,5.18 L256.7,4.94 L257.3,4.16 L258.0,3.60 L258.7,2.69 L259.3,2.52 L260.0,2.73 L260.7,3.25 L261.3,4.20 L262.0,4.96 L262.7,5.34 L263.3,5.56 L264.0,5.55 L264.7,5.73 L265.3,5.80 L266.0,5.82 L266.0,10.18 L265.3,10.20 L264.7,10.27 L264.0,10.45 L263.3,10.44 L262.7,10.66 L262.0,11.04 L261.3,11.80 L260.7,12.75 L260.0,13.27 L259.3,13.48 L258.7,13.31 L258.0,12.40 L257.3,11.84 L256.7,11.06 L256.0,10.82 L255.3,10.52 L254.7,10.89 L254.0,11.33 L253.3,11.66 L252.7,12.30 L252.0,12.41 L251.3,12.20 L250.7,11.97 L250.0,11.18 L249.3,11.02 L248.7,10.80 L248.0,11.21 L247.3,11.64 L246.7,12.00 L246.0,12.16 L245.3,12.05 L244.7,12.10 L244.0,11.92 L243.3,11.81 L242.7,11.61 L242.0,11.87 L241.3,11.90 L240.7,12.12 L240.0,11.93 L239.3,11.56 L238.7,11.25 L238.0,10.87 L237.3,10.94 L236.7,11.15 L236.0,11.01 L235.3,10.92 L234.7,10.74 L234.0,10.75 L233.3,10.89 L232.7,11.33 L232.0,11.54 L231.3,11.74 L230.7,11.30 L230.0,10.91 L229.3,10.60 L228.7,10.43 L228.0,10.62 L227.3,11.26 L226.7,12.34 L226.0,13.51 L225.3,14.42 L224.7,14.40 L224.0,14.08 L223.3,13.74 L222.7,13.35 L222.0,13.18 L221.3,12.75 L220.7,12.19 L220.0,11.26 L219.3,10.58 L218.7,10.45 L218.0,10.26 L217.3,10.25 L216.7,10.33 L216.0,10.47 L215.3,10.45 L214.7,10.71 L214.0,11.09 L213.3,11.45 L212.7,11.59 L212.0,11.73 L211.3,11.67 L210.7,11.21 L210.0,10.84 L209.3,10.83 L208.7,10.73 L208.0,10.49 L207.3,10.63 L206.7,10.43 L206.0,10.69 L205.3,10.91 L204.7,11.52 L204.0,12.27 L203.3,13.06 L202.7,13.14 L202.0,12.68 L201.3,12.30 L200.7,11.87 L200.0,11.57 L199.3,11.37 L198.7,11.13 L198.0,10.66 L197.3,10.73 L196.7,10.52 L196.0,10.88 L195.3,11.36 L194.7,11.81 L194.0,12.31 L193.3,12.54 L192.7,12.30 L192.0,11.85 L191.3,11.16 L190.7,10.73 L190.0,10.50 L189.3,10.36 L188.7,10.59 L188.0,10.86 L187.3,11.68 L186.7,12.26 L186.0,12.59 L185.3,12.28 L184.7,11.59 L184.0,10.95 L183.3,10.81 L182.7,10.88 L182.0,11.39 L181.3,11.77 L180.7,12.35 L180.0,13.03 L179.3,13.75 L178.7,14.39 L178.0,14.69 L177.3,14.23 L176.7,13.44 L176.0,12.73 L175.3,12.10 L174.7,12.15 L174.0,12.33 L173.3,12.05 L172.7,11.71 L172.0,11.42 L171.3,10.98 L170.7,10.71 L170.0,10.48 L169.3,10.41 L168.7,10.30 L168.0,10.18 L167.3,10.37 L166.7,10.58 L166.0,10.82 L165.3,11.45 L164.7,12.15 L164.0,11.85 L163.3,11.51 L162.7,10.70 L162.0,10.52 L161.3,10.44 L160.7,10.58 L160.0,10.86 L159.3,11.45 L158.7,12.45 L158.0,12.80 L157.3,12.64 L156.7,11.79 L156.0,11.31 L155.3,10.74 L154.7,11.00 L154.0,11.11 L153.3,11.19 L152.7,10.95 L152.0,10.92 L151.3,10.54 L150.7,10.76 L150.0,10.77 L149.3,11.26 L148.7,11.55 L148.0,11.95 L147.3,11.90 L146.7,11.71 L146.0,11.74 L145.3,11.54 L144.7,11.89 L144.0,12.50 L143.3,12.89 L142.7,13.14 L142.0,13.23 L141.3,13.01 L140.7,12.65 L140.0,12.10 L139.3,11.90 L138.7,11.97 L138.0,12.45 L137.3,13.18 L136.7,13.74 L136.0,14.04 L135.3,13.95 L134.7,14.42 L134.0,14.96 L133.3,15.19 L132.7,15.10 L132.0,14.36 L131.3,13.33 L130.7,12.55 L130.0,12.24 L129.3,11.85 L128.7,12.09 L128.0,12.21 L127.3,12.32 L126.7,12.51 L126.0,12.82 L125.3,13.27 L124.7,13.68 L124.0,13.90 L123.3,13.71 L122.7,13.71 L122.0,13.60 L121.3,13.50 L120.7,13.52 L120.0,13.43 L119.3,13.58 L118.7,13.72 L118.0,13.70 L117.3,13.57 L116.7,13.48 L116.0,12.97 L115.3,12.39 L114.7,11.68 L114.0,11.07 L113.3,10.63 L112.7,10.62 L112.0,10.52 L111.3,10.75 L110.7,10.82 L110.0,11.39 L109.3,11.75 L108.7,12.35 L108.0,12.16 L107.3,11.86 L106.7,11.12 L106.0,10.63 L105.3,10.50 L104.7,10.93 L104.0,11.42 L103.3,11.94 L102.7,12.73 L102.0,13.30 L101.3,12.88 L100.7,12.09 L100.0,11.33 L99.3,10.63 L98.7,10.52 L98.0,10.62 L97.3,10.82 L96.7,10.98 L96.0,11.62 L95.3,12.10 L94.7,12.54 L94.0,13.10 L93.3,13.45 L92.7,13.36 L92.0,13.21 L91.3,12.91 L90.7,12.32 L90.0,11.90 L89.3,11.84 L88.7,11.74 L88.0,12.15 L87.3,12.72 L86.7,13.07 L86.0,12.95 L85.3,12.71 L84.7,11.91 L84.0,11.23 L83.3,10.82 L82.7,10.81 L82.0,11.00 L81.3,11.33 L80.7,11.55 L80.0,12.16 L79.3,12.26 L78.7,12.44 L78.0,12.01 L77.3,11.76 L76.7,11.12 L76.0,10.87 L75.3,10.89 L74.7,11.40 L74.0,11.60 L73.3,11.71 L72.7,11.48 L72.0,11.62 L71.3,11.68 L70.7,12.13 L70.0,12.31 L69.3,12.32 L68.7,11.90 L68.0,11.20 L67.3,10.96 L66.7,10.82 L66.0,11.23 L65.3,11.47 L64.7,11.77 L64.0,11.63 L63.3,11.28 L62.7,10.88 L62.0,10.65 L61.3,10.72 L60.7,11.06 L60.0,11.20 L59.3,11.26 L58.7,11.27 L58.0,11.12 L57.3,11.00 L56.7,10.94 L56.0,11.25 L55.3,11.78 L54.7,12.28 L54.0,12.42 L53.3,12.57 L52.7,12.50 L52.0,11.79 L51.3,11.42 L50.7,11.03 L50.0,10.63 L49.3,10.70 L48.7,10.97 L48.0,11.10 L47.3,11.76 L46.7,12.09 L46.0,12.66 L45.3,13.02 L44.7,13.32 L44.0,13.04 L43.3,12.88 L42.7,12.20 L42.0,11.94 L41.3,11.68 L40.7,11.81 L40.0,11.85 L39.3,12.10 L38.7,11.88 L38.0,11.48 L37.3,11.25 L36.7,11.49 L36.0,11.72 L35.3,12.18 L34.7,12.70 L34.0,12.89 L33.3,12.70 L32.7,12.41 L32.0,11.87 L31.3,11.31 L30.7,11.42 L30.0,11.87 L29.3,12.78 L28.7,13.07 L28.0,12.57 L27.3,11.77 L26.7,10.79 L26.0,10.42 L25.3,10.45 L24.7,10.47 L24.0,10.49 L23.3,10.59 L22.7,10.95 L22.0,11.25 L21.3,11.40 L20.7,11.73 L20.0,11.63 L19.3,11.21 L18.7,11.03 L18.0,10.70 L17.3,10.55 L16.7,10.59 L16.0,10.58 L15.3,10.68 L14.7,11.34 L14.0,11.89 L13.3,12.42 L12.7,12.63 L12.0,12.75 L11.3,12.63 L10.7,12.23 L10.0,11.88 L9.3,11.15 L8.7,10.94 L8.0,10.60 L7.3,10.61 L6.7,10.73 L6.0,11.15 L5.3,11.38 L4.7,11.66 L4.0,12.14 L3.3,12.17 L2.7,12.09 L2.0,11.86 L1.3,11.45 L0.7,11.16 L0.0,10.80Z" fill="#eeeeee"/></svg></div>
<div class="lh" style="top:966.85px;height:27.5px;background:#77668e"><span class="lht">Pista-7</span><svg style="position:absolute;left:317.6px;top:5.4px" width="18" height="18" viewBox="0 0 18 18"><circle cx="9" cy="9" r="7.6" fill="none" stroke="rgba(240,240,240,0.8)" stroke-width="1.5"/><path d="M7.4 5.5 L12.2 9 L7.4 12.6Z" fill="rgba(240,240,240,0.8)"/></svg></div>
<div class="li" style="top:994.35px;height:64.75px;background:#a98ad6"><svg class="th" style="left:4px;top:4.20px;width:57px;height:56px;" width="57" height="56" viewBox="0 0 57 56"><defs><filter id="bl" x="-10%" y="-10%" width="120%" height="120%"><feGaussianBlur stdDeviation="1.6"/></filter><filter id="bl2"><feGaussianBlur stdDeviation="0.5"/></filter><filter id="bl3" x="-5%" y="-5%" width="110%" height="110%"><feGaussianBlur stdDeviation="0.7"/></filter></defs><rect width="57" height="56" fill="#1e1a30"/><g filter="url(#bl)"><path d="M20 0 L42 0 L57 30 L57 56 L30 56Z" fill="#f4f4f4"/><path d="M40 0 L52 0 L57 20 L57 40Z" fill="#e01818"/><ellipse cx="22" cy="30" rx="20" ry="24" fill="#b08078"/><path d="M8 8 Q20 0 30 6 L14 16Z" fill="#2a1a1a"/></g><circle cx="28.5" cy="28" r="10.5" fill="none" stroke="rgba(215,215,215,0.42)" stroke-width="4"/><path d="M28.5 17.5 A10.5 10.5 0 0 1 38.6 30.8" fill="none" stroke="rgba(238,238,238,0.92)" stroke-width="4"/></svg><span class="lit" style="letter-spacing:0.267px">Las castañuelas</span><span class="lid">3.13s</span><svg class="wv" width="266" height="16" viewBox="0 0 266 16"><path d="M0.0,6.30 L0.7,5.82 L1.3,5.17 L2.0,4.63 L2.7,4.29 L3.3,4.09 L4.0,3.76 L4.7,3.74 L5.3,3.95 L6.0,4.18 L6.7,4.77 L7.3,5.15 L8.0,5.75 L8.7,5.99 L9.3,6.15 L10.0,6.28 L10.7,6.39 L11.3,6.27 L12.0,6.31 L12.7,6.01 L13.3,5.93 L14.0,6.07 L14.7,6.10 L15.3,6.42 L16.0,6.24 L16.7,6.53 L17.3,6.38 L18.0,6.49 L18.7,6.49 L19.3,6.40 L20.0,6.27 L20.7,6.21 L21.3,5.91 L22.0,5.52 L22.7,5.47 L23.3,5.58 L24.0,5.63 L24.7,5.89 L25.3,5.85 L26.0,5.84 L26.7,6.05 L27.3,6.20 L28.0,6.39 L28.7,6.11 L29.3,6.16 L30.0,6.15 L30.7,6.25 L31.3,6.23 L32.0,6.45 L32.7,6.35 L33.3,6.36 L34.0,6.27 L34.7,6.31 L35.3,6.26 L36.0,6.49 L36.7,6.54 L37.3,6.54 L38.0,6.49 L38.7,6.52 L39.3,6.51 L40.0,6.34 L40.7,6.42 L41.3,6.47 L42.0,6.40 L42.7,6.49 L43.3,6.44 L44.0,6.43 L44.7,6.53 L45.3,6.27 L46.0,6.28 L46.7,6.44 L47.3,6.36 L48.0,6.54 L48.7,6.44 L49.3,6.37 L50.0,6.42 L50.7,6.51 L51.3,6.41 L52.0,6.48 L52.7,6.36 L53.3,6.34 L54.0,6.38 L54.7,6.29 L55.3,6.31 L56.0,6.49 L56.7,6.18 L57.3,6.18 L58.0,6.06 L58.7,5.89 L59.3,5.64 L60.0,5.73 L60.7,5.66 L61.3,5.83 L62.0,5.84 L62.7,5.83 L63.3,5.77 L64.0,5.63 L64.7,5.71 L65.3,5.68 L66.0,5.78 L66.7,6.02 L67.3,6.20 L68.0,6.34 L68.7,6.38 L69.3,6.27 L70.0,6.19 L70.7,5.91 L71.3,5.37 L72.0,5.31 L72.7,5.41 L73.3,5.87 L74.0,6.01 L74.7,6.32 L75.3,6.37 L76.0,6.51 L76.7,6.43 L77.3,6.24 L78.0,6.10 L78.7,6.12 L79.3,5.85 L80.0,5.84 L80.7,6.05 L81.3,6.07 L82.0,5.96 L82.7,6.22 L83.3,6.46 L84.0,6.31 L84.7,6.42 L85.3,6.52 L86.0,6.27 L86.7,6.43 L87.3,6.35 L88.0,6.45 L88.7,6.28 L89.3,6.37 L90.0,6.45 L90.7,6.47 L91.3,6.27 L92.0,6.36 L92.7,6.26 L93.3,6.50 L94.0,6.42 L94.7,6.34 L95.3,6.26 L96.0,6.30 L96.7,6.26 L97.3,5.83 L98.0,5.78 L98.7,6.18 L99.3,6.38 L100.0,6.37 L100.7,6.25 L101.3,6.35 L102.0,6.43 L102.7,6.34 L103.3,6.50 L104.0,6.34 L104.7,6.24 L105.3,6.09 L106.0,5.89 L106.7,6.00 L107.3,5.68 L108.0,5.61 L108.7,5.58 L109.3,5.41 L110.0,5.39 L110.7,5.37 L111.3,5.28 L112.0,5.63 L112.7,6.11 L113.3,6.27 L114.0,6.47 L114.7,6.43 L115.3,6.44 L116.0,6.53 L116.7,6.53 L117.3,6.42 L118.0,6.25 L118.7,6.46 L119.3,6.27 L120.0,6.52 L120.7,6.31 L121.3,6.51 L122.0,6.34 L122.7,6.50 L123.3,6.28 L124.0,6.27 L124.7,6.48 L125.3,6.25 L126.0,6.34 L126.7,6.53 L127.3,6.28 L128.0,6.40 L128.7,6.35 L129.3,6.20 L130.0,6.02 L130.7,5.48 L131.3,5.24 L132.0,5.09 L132.7,5.15 L133.3,5.55 L134.0,5.70 L134.7,5.94 L135.3,6.23 L136.0,6.25 L136.7,6.33 L137.3,6.27 L138.0,6.40 L138.7,6.43 L139.3,6.36 L140.0,6.32 L140.7,6.35 L141.3,6.43 L142.0,6.37 L142.7,6.27 L143.3,6.35 L144.0,6.33 L144.7,6.50 L145.3,6.41 L146.0,6.39 L146.7,6.47 L147.3,6.38 L148.0,6.52 L148.7,6.51 L149.3,6.43 L150.0,6.25 L150.7,6.05 L151.3,5.97 L152.0,5.75 L152.7,5.98 L153.3,6.35 L154.0,6.42 L154.7,6.47 L155.3,6.51 L156.0,6.31 L156.7,6.44 L157.3,6.48 L158.0,6.26 L158.7,6.20 L159.3,6.23 L160.0,5.94 L160.7,5.76 L161.3,5.78 L162.0,5.71 L162.7,5.95 L163.3,5.95 L164.0,6.09 L164.7,6.19 L165.3,6.34 L166.0,6.43 L166.7,6.28 L167.3,6.30 L168.0,6.43 L168.7,6.29 L169.3,6.28 L170.0,6.08 L170.7,5.90 L171.3,5.79 L172.0,5.90 L172.7,5.88 L173.3,6.16 L174.0,6.32 L174.7,6.44 L175.3,6.42 L176.0,6.25 L176.7,6.43 L177.3,6.43 L178.0,6.51 L178.7,6.45 L179.3,6.53 L180.0,6.46 L180.7,6.42 L181.3,6.38 L182.0,6.50 L182.7,6.36 L183.3,6.17 L184.0,6.19 L184.7,6.05 L185.3,6.04 L186.0,6.15 L186.7,6.07 L187.3,6.21 L188.0,6.17 L188.7,6.41 L189.3,6.31 L190.0,6.29 L190.7,6.43 L191.3,6.33 L192.0,6.51 L192.7,6.39 L193.3,6.31 L194.0,6.25 L194.7,6.23 L195.3,6.04 L196.0,5.68 L196.7,5.76 L197.3,6.19 L198.0,6.41 L198.7,6.41 L199.3,6.50 L200.0,6.53 L200.7,6.48 L201.3,6.52 L202.0,6.53 L202.7,6.34 L203.3,6.49 L204.0,6.39 L204.7,6.40 L205.3,6.51 L206.0,6.39 L206.7,6.43 L207.3,6.43 L208.0,6.31 L208.7,6.37 L209.3,6.11 L210.0,5.87 L210.7,5.87 L211.3,5.75 L212.0,5.72 L212.7,5.74 L213.3,5.81 L214.0,6.02 L214.7,5.93 L215.3,5.99 L216.0,5.44 L216.7,5.25 L217.3,5.17 L218.0,5.32 L218.7,5.45 L219.3,5.61 L220.0,5.69 L220.7,5.95 L221.3,6.30 L222.0,6.22 L222.7,6.45 L223.3,6.37 L224.0,6.45 L224.7,6.48 L225.3,6.42 L226.0,6.46 L226.7,6.37 L227.3,6.32 L228.0,6.38 L228.7,6.40 L229.3,6.44 L230.0,6.36 L230.7,6.55 L231.3,6.55 L232.0,6.52 L232.7,6.50 L233.3,6.32 L234.0,6.30 L234.7,6.38 L235.3,6.52 L236.0,6.41 L236.7,6.37 L237.3,6.26 L238.0,6.30 L238.7,6.43 L239.3,6.50 L240.0,6.36 L240.7,6.41 L241.3,6.26 L242.0,6.25 L242.7,6.29 L243.3,6.26 L244.0,6.44 L244.7,6.20 L245.3,6.15 L246.0,5.93 L246.7,5.72 L247.3,5.86 L248.0,6.13 L248.7,6.17 L249.3,6.29 L250.0,6.33 L250.7,6.27 L251.3,6.48 L252.0,6.28 L252.7,6.32 L253.3,6.31 L254.0,6.00 L254.7,5.66 L255.3,5.30 L256.0,4.94 L256.7,4.71 L257.3,4.75 L258.0,4.83 L258.7,4.85 L259.3,4.99 L260.0,4.79 L260.7,5.14 L261.3,5.53 L262.0,5.77 L262.7,6.12 L263.3,6.30 L264.0,6.06 L264.7,5.62 L265.3,5.96 L266.0,6.17 L266.0,9.83 L265.3,10.04 L264.7,10.38 L264.0,9.94 L263.3,9.70 L262.7,9.88 L262.0,10.23 L261.3,10.47 L260.7,10.86 L260.0,11.21 L259.3,11.01 L258.7,11.15 L258.0,11.17 L257.3,11.25 L256.7,11.29 L256.0,11.06 L255.3,10.70 L254.7,10.34 L254.0,10.00 L253.3,9.69 L252.7,9.68 L252.0,9.72 L251.3,9.52 L250.7,9.73 L250.0,9.67 L249.3,9.71 L248.7,9.83 L248.0,9.87 L247.3,10.14 L246.7,10.28 L246.0,10.07 L245.3,9.85 L244.7,9.80 L244.0,9.56 L243.3,9.74 L242.7,9.71 L242.0,9.75 L241.3,9.74 L240.7,9.59 L240.0,9.64 L239.3,9.50 L238.7,9.57 L238.0,9.70 L237.3,9.74 L236.7,9.63 L236.0,9.59 L235.3,9.48 L234.7,9.62 L234.0,9.70 L233.3,9.68 L232.7,9.50 L232.0,9.48 L231.3,9.45 L230.7,9.45 L230.0,9.64 L229.3,9.56 L228.7,9.60 L228.0,9.62 L227.3,9.68 L226.7,9.63 L226.0,9.54 L225.3,9.58 L224.7,9.52 L224.0,9.55 L223.3,9.63 L222.7,9.55 L222.0,9.78 L221.3,9.70 L220.7,10.05 L220.0,10.31 L219.3,10.39 L218.7,10.55 L218.0,10.68 L217.3,10.83 L216.7,10.75 L216.0,10.56 L215.3,10.01 L214.7,10.07 L214.0,9.98 L213.3,10.19 L212.7,10.26 L212.0,10.28 L211.3,10.25 L210.7,10.13 L210.0,10.13 L209.3,9.89 L208.7,9.63 L208.0,9.69 L207.3,9.57 L206.7,9.57 L206.0,9.61 L205.3,9.49 L204.7,9.60 L204.0,9.61 L203.3,9.51 L202.7,9.66 L202.0,9.47 L201.3,9.48 L200.7,9.52 L200.0,9.47 L199.3,9.50 L198.7,9.59 L198.0,9.59 L197.3,9.81 L196.7,10.24 L196.0,10.32 L195.3,9.96 L194.7,9.77 L194.0,9.75 L193.3,9.69 L192.7,9.61 L192.0,9.49 L191.3,9.67 L190.7,9.57 L190.0,9.71 L189.3,9.69 L188.7,9.59 L188.0,9.83 L187.3,9.79 L186.7,9.93 L186.0,9.85 L185.3,9.96 L184.7,9.95 L184.0,9.81 L183.3,9.83 L182.7,9.64 L182.0,9.50 L181.3,9.62 L180.7,9.58 L180.0,9.54 L179.3,9.47 L178.7,9.55 L178.0,9.49 L177.3,9.57 L176.7,9.57 L176.0,9.75 L175.3,9.58 L174.7,9.56 L174.0,9.68 L173.3,9.84 L172.7,10.12 L172.0,10.10 L171.3,10.21 L170.7,10.10 L170.0,9.92 L169.3,9.72 L168.7,9.71 L168.0,9.57 L167.3,9.70 L166.7,9.72 L166.0,9.57 L165.3,9.66 L164.7,9.81 L164.0,9.91 L163.3,10.05 L162.7,10.05 L162.0,10.29 L161.3,10.22 L160.7,10.24 L160.0,10.06 L159.3,9.77 L158.7,9.80 L158.0,9.74 L157.3,9.52 L156.7,9.56 L156.0,9.69 L155.3,9.49 L154.7,9.53 L154.0,9.58 L153.3,9.65 L152.7,10.02 L152.0,10.25 L151.3,10.03 L150.7,9.95 L150.0,9.75 L149.3,9.57 L148.7,9.49 L148.0,9.48 L147.3,9.62 L146.7,9.53 L146.0,9.61 L145.3,9.59 L144.7,9.50 L144.0,9.67 L143.3,9.65 L142.7,9.73 L142.0,9.63 L141.3,9.57 L140.7,9.65 L140.0,9.68 L139.3,9.64 L138.7,9.57 L138.0,9.60 L137.3,9.73 L136.7,9.67 L136.0,9.75 L135.3,9.77 L134.7,10.06 L134.0,10.30 L133.3,10.45 L132.7,10.85 L132.0,10.91 L131.3,10.76 L130.7,10.52 L130.0,9.98 L129.3,9.80 L128.7,9.65 L128.0,9.60 L127.3,9.72 L126.7,9.47 L126.0,9.66 L125.3,9.75 L124.7,9.52 L124.0,9.73 L123.3,9.72 L122.7,9.50 L122.0,9.66 L121.3,9.49 L120.7,9.69 L120.0,9.48 L119.3,9.73 L118.7,9.54 L118.0,9.75 L117.3,9.58 L116.7,9.47 L116.0,9.47 L115.3,9.56 L114.7,9.57 L114.0,9.53 L113.3,9.73 L112.7,9.89 L112.0,10.37 L111.3,10.72 L110.7,10.63 L110.0,10.61 L109.3,10.59 L108.7,10.42 L108.0,10.39 L107.3,10.32 L106.7,10.00 L106.0,10.11 L105.3,9.91 L104.7,9.76 L104.0,9.66 L103.3,9.50 L102.7,9.66 L102.0,9.57 L101.3,9.65 L100.7,9.75 L100.0,9.63 L99.3,9.62 L98.7,9.82 L98.0,10.22 L97.3,10.17 L96.7,9.74 L96.0,9.70 L95.3,9.74 L94.7,9.66 L94.0,9.58 L93.3,9.50 L92.7,9.74 L92.0,9.64 L91.3,9.73 L90.7,9.53 L90.0,9.55 L89.3,9.63 L88.7,9.72 L88.0,9.55 L87.3,9.65 L86.7,9.57 L86.0,9.73 L85.3,9.48 L84.7,9.58 L84.0,9.69 L83.3,9.54 L82.7,9.78 L82.0,10.04 L81.3,9.93 L80.7,9.95 L80.0,10.16 L79.3,10.15 L78.7,9.88 L78.0,9.90 L77.3,9.76 L76.7,9.57 L76.0,9.49 L75.3,9.63 L74.7,9.68 L74.0,9.99 L73.3,10.13 L72.7,10.59 L72.0,10.69 L71.3,10.63 L70.7,10.09 L70.0,9.81 L69.3,9.73 L68.7,9.62 L68.0,9.66 L67.3,9.80 L66.7,9.98 L66.0,10.22 L65.3,10.32 L64.7,10.29 L64.0,10.37 L63.3,10.23 L62.7,10.17 L62.0,10.16 L61.3,10.17 L60.7,10.34 L60.0,10.27 L59.3,10.36 L58.7,10.11 L58.0,9.94 L57.3,9.82 L56.7,9.82 L56.0,9.51 L55.3,9.69 L54.7,9.71 L54.0,9.62 L53.3,9.66 L52.7,9.64 L52.0,9.52 L51.3,9.59 L50.7,9.49 L50.0,9.58 L49.3,9.63 L48.7,9.56 L48.0,9.46 L47.3,9.64 L46.7,9.56 L46.0,9.72 L45.3,9.73 L44.7,9.47 L44.0,9.57 L43.3,9.56 L42.7,9.51 L42.0,9.60 L41.3,9.53 L40.7,9.58 L40.0,9.66 L39.3,9.49 L38.7,9.48 L38.0,9.51 L37.3,9.46 L36.7,9.46 L36.0,9.51 L35.3,9.74 L34.7,9.69 L34.0,9.73 L33.3,9.64 L32.7,9.65 L32.0,9.55 L31.3,9.77 L30.7,9.75 L30.0,9.85 L29.3,9.84 L28.7,9.89 L28.0,9.61 L27.3,9.80 L26.7,9.95 L26.0,10.16 L25.3,10.15 L24.7,10.11 L24.0,10.37 L23.3,10.42 L22.7,10.53 L22.0,10.48 L21.3,10.09 L20.7,9.79 L20.0,9.73 L19.3,9.60 L18.7,9.51 L18.0,9.51 L17.3,9.62 L16.7,9.47 L16.0,9.76 L15.3,9.58 L14.7,9.90 L14.0,9.93 L13.3,10.07 L12.7,9.99 L12.0,9.69 L11.3,9.73 L10.7,9.61 L10.0,9.72 L9.3,9.85 L8.7,10.01 L8.0,10.25 L7.3,10.85 L6.7,11.23 L6.0,11.82 L5.3,12.05 L4.7,12.26 L4.0,12.24 L3.3,11.91 L2.7,11.71 L2.0,11.37 L1.3,10.83 L0.7,10.18 L0.0,9.70Z" fill="#eeeeee"/></svg></div>
<div style="left:1019px;top:0;width:1px;height:1014px;background:rgba(255,255,255,0.1)"></div>
<div style="left:0;top:0;width:1px;height:1014px;background:rgba(255,255,255,0.1)"></div>
</body></html>
